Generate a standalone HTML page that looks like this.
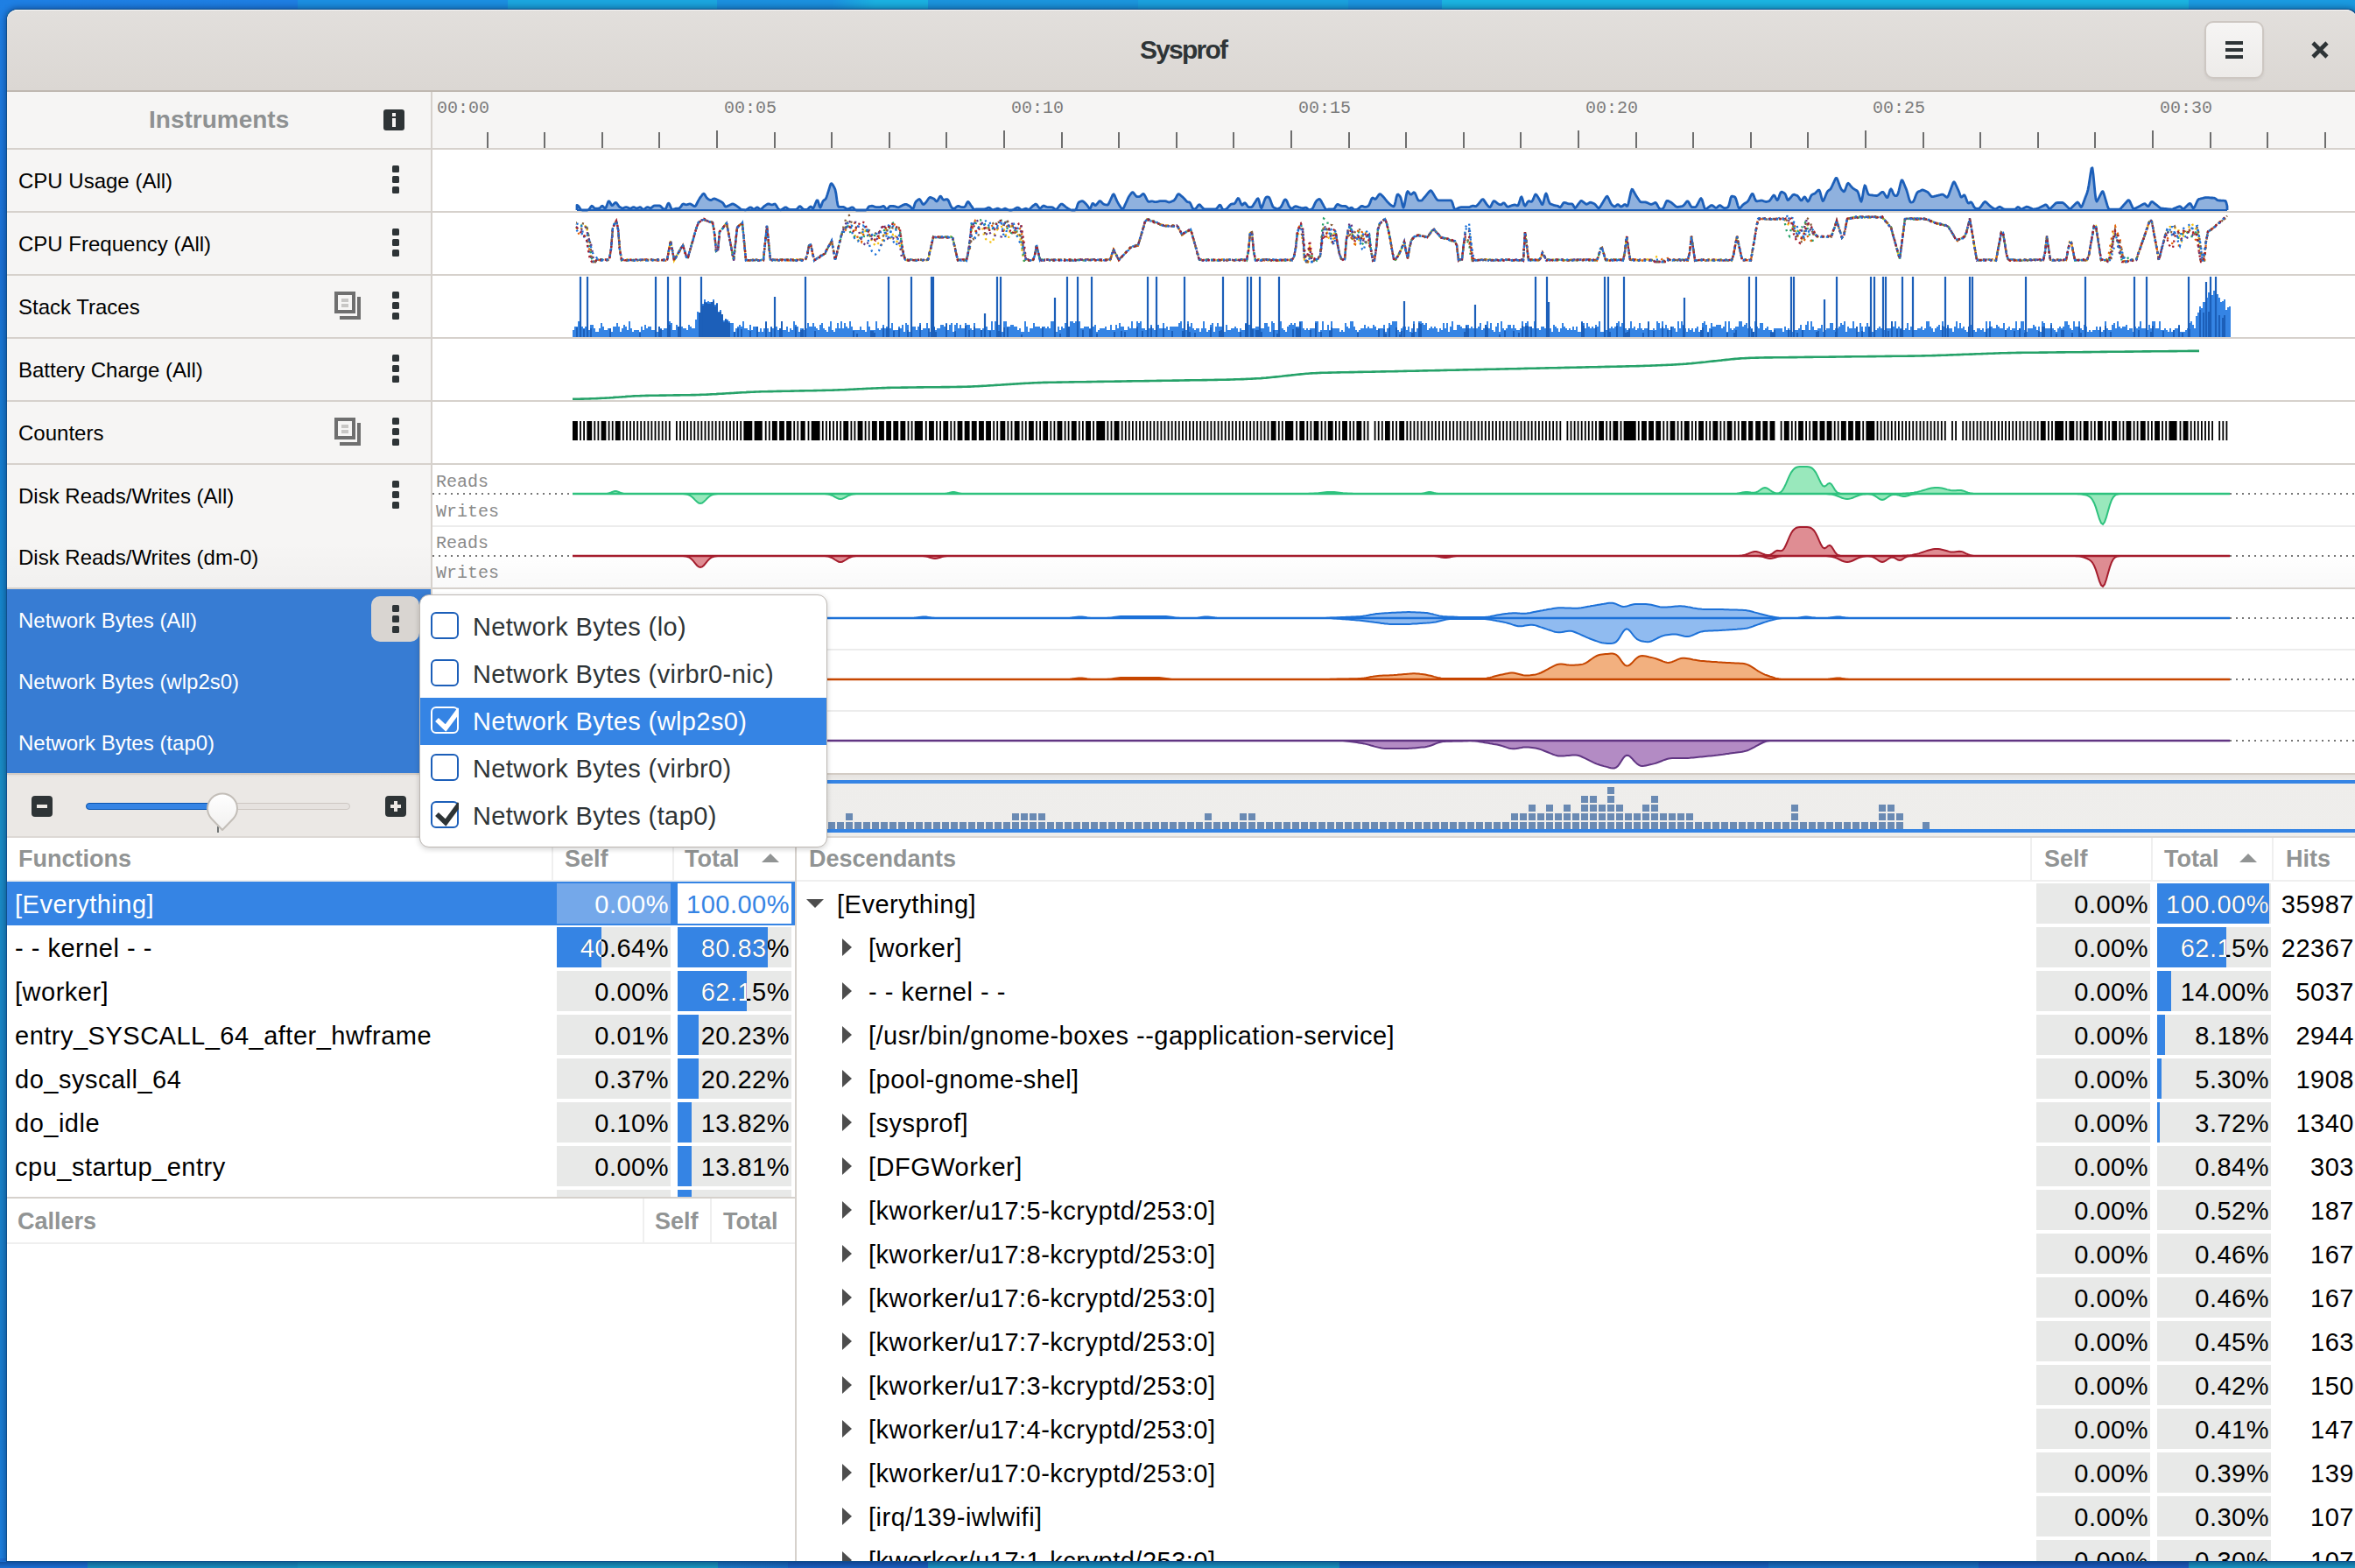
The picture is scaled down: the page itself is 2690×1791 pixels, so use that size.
<!DOCTYPE html><html><head><meta charset="utf-8"><title>Sysprof</title><style>
*{margin:0;padding:0;box-sizing:border-box}
html,body{width:2690px;height:1791px;overflow:hidden}
body{position:relative;font-family:'Liberation Sans', sans-serif;background:#1b8fd8}
.a{position:absolute}
.t{position:absolute;white-space:nowrap;line-height:1}
.k{position:absolute;width:8px;height:8px;border-radius:1.5px;background:#2e3436}
</style></head><body><div class="a" style="left:0px;top:0px;width:2690px;height:14px;background:linear-gradient(90deg,#1e7fe3 0px,#1e7ee2 340px,#1b8ee0 340px,#1b8ee0 580px,#1ba5de 580px,#1ba5de 819px,#1b8fde 819px,#1b90de 950px,#1ab0e0 1000px,#1ab0e0 1060px,#1b93dc 1060px,#1b95dc 1300px,#1aa0dd 1300px,#1aa0dd 1540px,#1b94de 1540px,#1b94de 1647px,#1bb3e0 1647px,#1bb3e0 2500px,#1a9ae0 2500px,#1a9ae0 2690px)"></div><div class="a" style="left:0px;top:0px;width:8px;height:1791px;background:linear-gradient(180deg,#1e7fe3 0px,#1b72d6 300px,#1583cf 600px,#1a8ec6 900px,#1a84c8 1300px,#1a7dd0 1600px,#1d80e0 1791px)"></div><div class="a" style="left:0px;top:1780px;width:2690px;height:11px;background:linear-gradient(90deg,#1c6fd3 0px,#1c6fd3 100px,#1a8bbd 100px,#1a8bbd 340px,#1a95c0 340px,#1a95c0 820px,#1b78c5 820px,#1a6cc2 900px,#1a5fbf 900px,#1a5fbf 1060px,#1a90c0 1060px,#1a90c0 1530px,#1a62c0 1530px,#1a62c0 2020px,#1a70c2 2020px,#1a70c2 2260px,#1b5bbd 2260px,#1b5bbd 2500px,#1a92c2 2500px,#1a92c2 2690px)"></div><div class="a" style="left:7px;top:10px;width:2687px;height:1774px;background:#0f4f8c;border-radius:13px 13px 0 0;box-shadow:0 0 7px 1px rgba(0,20,60,0.45)"></div><div class="a" style="left:8px;top:11px;width:2684px;height:1772px;background:#ffffff;border-radius:12px 12px 0 0"></div><div class="a" style="left:8px;top:11px;width:2684px;height:92px;background:linear-gradient(180deg,#e2dfdc,#dbd7d3);border-radius:12px 12px 0 0;border-top:1px solid #f7f6f5"></div><div class="a" style="left:8px;top:103px;width:2682px;height:2px;background:#bfb8b1"></div><div class="t" style="left:1302px;top:41.61px;font-size:30px;color:#2e3436;font-weight:bold;font-family:'Liberation Sans', sans-serif;letter-spacing:-1.8px">Sysprof</div><div class="a" style="left:2518px;top:24px;width:68px;height:66px;border-radius:10px;border:2px solid #cdc7c2;background:linear-gradient(180deg,#f6f5f4,#edebe9);box-shadow:0 2px 3px rgba(0,0,0,0.06)"></div><div class="a" style="left:2542px;top:47px;width:20px;height:4px;background:#2e3436"></div><div class="a" style="left:2542px;top:55px;width:20px;height:4px;background:#2e3436"></div><div class="a" style="left:2542px;top:63px;width:20px;height:4px;background:#2e3436"></div><svg class="a" style="left:2638px;top:45px" width="24" height="24" viewBox="0 0 24 24"><path d="M4 4 L20 20 M20 4 L4 20" stroke="#2e3436" stroke-width="4.6"/></svg><div class="a" style="left:8px;top:105px;width:484px;height:778px;background:#f6f5f4"></div><div class="a" style="left:492px;top:105px;width:2px;height:778px;background:#d6d1cc"></div><div class="t" style="left:170px;top:123.30px;font-size:28px;color:#8e9192;font-weight:bold;font-family:'Liberation Sans', sans-serif;">Instruments</div><div class="a" style="left:438px;top:125px;width:24px;height:24px;background:#2e3436;border-radius:3px"></div><div class="a" style="left:448px;top:129px;width:4px;height:4px;background:#f6f5f4"></div><div class="a" style="left:448px;top:135px;width:4px;height:10px;background:#f6f5f4"></div><div class="a" style="left:494px;top:105px;width:2196px;height:64px;background:#f6f5f4"></div><div class="a" style="left:8px;top:169px;width:2682px;height:2px;background:#d6d1cc"></div><div class="t" style="left:499px;top:113.67px;font-size:20px;color:#7c7c7c;font-weight:normal;font-family:'Liberation Mono', monospace;">00:00</div><div class="a" style="left:556px;top:151px;width:2px;height:18px;background:#6e6e6e"></div><div class="a" style="left:621px;top:151px;width:2px;height:18px;background:#6e6e6e"></div><div class="a" style="left:687px;top:151px;width:2px;height:18px;background:#6e6e6e"></div><div class="a" style="left:752px;top:151px;width:2px;height:18px;background:#6e6e6e"></div><div class="a" style="left:818px;top:149px;width:2px;height:20px;background:#6e6e6e"></div><div class="t" style="left:827px;top:113.67px;font-size:20px;color:#7c7c7c;font-weight:normal;font-family:'Liberation Mono', monospace;">00:05</div><div class="a" style="left:884px;top:151px;width:2px;height:18px;background:#6e6e6e"></div><div class="a" style="left:949px;top:151px;width:2px;height:18px;background:#6e6e6e"></div><div class="a" style="left:1015px;top:151px;width:2px;height:18px;background:#6e6e6e"></div><div class="a" style="left:1080px;top:151px;width:2px;height:18px;background:#6e6e6e"></div><div class="a" style="left:1146px;top:149px;width:2px;height:20px;background:#6e6e6e"></div><div class="t" style="left:1155px;top:113.67px;font-size:20px;color:#7c7c7c;font-weight:normal;font-family:'Liberation Mono', monospace;">00:10</div><div class="a" style="left:1212px;top:151px;width:2px;height:18px;background:#6e6e6e"></div><div class="a" style="left:1277px;top:151px;width:2px;height:18px;background:#6e6e6e"></div><div class="a" style="left:1343px;top:151px;width:2px;height:18px;background:#6e6e6e"></div><div class="a" style="left:1408px;top:151px;width:2px;height:18px;background:#6e6e6e"></div><div class="a" style="left:1474px;top:149px;width:2px;height:20px;background:#6e6e6e"></div><div class="t" style="left:1483px;top:113.67px;font-size:20px;color:#7c7c7c;font-weight:normal;font-family:'Liberation Mono', monospace;">00:15</div><div class="a" style="left:1540px;top:151px;width:2px;height:18px;background:#6e6e6e"></div><div class="a" style="left:1605px;top:151px;width:2px;height:18px;background:#6e6e6e"></div><div class="a" style="left:1671px;top:151px;width:2px;height:18px;background:#6e6e6e"></div><div class="a" style="left:1736px;top:151px;width:2px;height:18px;background:#6e6e6e"></div><div class="a" style="left:1802px;top:149px;width:2px;height:20px;background:#6e6e6e"></div><div class="t" style="left:1811px;top:113.67px;font-size:20px;color:#7c7c7c;font-weight:normal;font-family:'Liberation Mono', monospace;">00:20</div><div class="a" style="left:1868px;top:151px;width:2px;height:18px;background:#6e6e6e"></div><div class="a" style="left:1933px;top:151px;width:2px;height:18px;background:#6e6e6e"></div><div class="a" style="left:1999px;top:151px;width:2px;height:18px;background:#6e6e6e"></div><div class="a" style="left:2064px;top:151px;width:2px;height:18px;background:#6e6e6e"></div><div class="a" style="left:2130px;top:149px;width:2px;height:20px;background:#6e6e6e"></div><div class="t" style="left:2139px;top:113.67px;font-size:20px;color:#7c7c7c;font-weight:normal;font-family:'Liberation Mono', monospace;">00:25</div><div class="a" style="left:2196px;top:151px;width:2px;height:18px;background:#6e6e6e"></div><div class="a" style="left:2261px;top:151px;width:2px;height:18px;background:#6e6e6e"></div><div class="a" style="left:2327px;top:151px;width:2px;height:18px;background:#6e6e6e"></div><div class="a" style="left:2392px;top:151px;width:2px;height:18px;background:#6e6e6e"></div><div class="a" style="left:2458px;top:149px;width:2px;height:20px;background:#6e6e6e"></div><div class="t" style="left:2467px;top:113.67px;font-size:20px;color:#7c7c7c;font-weight:normal;font-family:'Liberation Mono', monospace;">00:30</div><div class="a" style="left:2524px;top:151px;width:2px;height:18px;background:#6e6e6e"></div><div class="a" style="left:2589px;top:151px;width:2px;height:18px;background:#6e6e6e"></div><div class="a" style="left:2655px;top:151px;width:2px;height:18px;background:#6e6e6e"></div><div class="a" style="left:494px;top:171px;width:2196px;height:712px;background:#ffffff"></div><div class="t" style="left:21px;top:194.68px;font-size:24px;color:#000;font-weight:normal;font-family:'Liberation Sans', sans-serif;">CPU Usage (All)</div><div class="k" style="left:448px;top:189px"></div><div class="k" style="left:448px;top:201px"></div><div class="k" style="left:448px;top:213px"></div><div class="t" style="left:21px;top:266.68px;font-size:24px;color:#000;font-weight:normal;font-family:'Liberation Sans', sans-serif;">CPU Frequency (All)</div><div class="k" style="left:448px;top:261px"></div><div class="k" style="left:448px;top:273px"></div><div class="k" style="left:448px;top:285px"></div><div class="t" style="left:21px;top:338.68px;font-size:24px;color:#000;font-weight:normal;font-family:'Liberation Sans', sans-serif;">Stack Traces</div><div class="k" style="left:448px;top:333px"></div><div class="k" style="left:448px;top:345px"></div><div class="k" style="left:448px;top:357px"></div><div class="a" style="left:382px;top:333px;width:24px;height:25px;border:4px solid #6f6f6f"></div><div class="a" style="left:390px;top:341px;width:8px;height:4px;background:#c8c7c5"></div><div class="a" style="left:390px;top:347px;width:8px;height:4px;background:#c8c7c5"></div><div class="a" style="left:408px;top:339px;width:4px;height:26px;background:#6f6f6f"></div><div class="a" style="left:388px;top:361px;width:24px;height:4px;background:#6f6f6f"></div><div class="t" style="left:21px;top:410.68px;font-size:24px;color:#000;font-weight:normal;font-family:'Liberation Sans', sans-serif;">Battery Charge (All)</div><div class="k" style="left:448px;top:405px"></div><div class="k" style="left:448px;top:417px"></div><div class="k" style="left:448px;top:429px"></div><div class="t" style="left:21px;top:482.68px;font-size:24px;color:#000;font-weight:normal;font-family:'Liberation Sans', sans-serif;">Counters</div><div class="k" style="left:448px;top:477px"></div><div class="k" style="left:448px;top:489px"></div><div class="k" style="left:448px;top:501px"></div><div class="a" style="left:382px;top:477px;width:24px;height:25px;border:4px solid #6f6f6f"></div><div class="a" style="left:390px;top:485px;width:8px;height:4px;background:#c8c7c5"></div><div class="a" style="left:390px;top:491px;width:8px;height:4px;background:#c8c7c5"></div><div class="a" style="left:408px;top:483px;width:4px;height:26px;background:#6f6f6f"></div><div class="a" style="left:388px;top:505px;width:24px;height:4px;background:#6f6f6f"></div><div class="t" style="left:21px;top:554.68px;font-size:24px;color:#000;font-weight:normal;font-family:'Liberation Sans', sans-serif;">Disk Reads/Writes (All)</div><div class="k" style="left:448px;top:549px"></div><div class="k" style="left:448px;top:561px"></div><div class="k" style="left:448px;top:573px"></div><div class="t" style="left:21px;top:624.68px;font-size:24px;color:#000;font-weight:normal;font-family:'Liberation Sans', sans-serif;">Disk Reads/Writes (dm-0)</div><div class="a" style="left:8px;top:241px;width:2682px;height:2px;background:#d6d1cc"></div><div class="a" style="left:8px;top:313px;width:2682px;height:2px;background:#d6d1cc"></div><div class="a" style="left:8px;top:385px;width:2682px;height:2px;background:#d6d1cc"></div><div class="a" style="left:8px;top:457px;width:2682px;height:2px;background:#d6d1cc"></div><div class="a" style="left:8px;top:529px;width:2682px;height:2px;background:#d6d1cc"></div><div class="a" style="left:494px;top:600px;width:2196px;height:2px;background:#ececec"></div><div class="a" style="left:8px;top:671px;width:2682px;height:2px;background:#d6d1cc"></div><div class="a" style="left:8px;top:620px;width:484px;height:51px;background:linear-gradient(180deg,rgba(0,0,0,0),rgba(0,0,0,0.018))"></div><div class="a" style="left:494px;top:630px;width:2196px;height:41px;background:linear-gradient(180deg,rgba(0,0,0,0),rgba(0,0,0,0.025))"></div><div class="a" style="left:8px;top:673px;width:484px;height:210px;background:#377cd3"></div><div class="t" style="left:21px;top:696.68px;font-size:24px;color:#ffffff;font-weight:normal;font-family:'Liberation Sans', sans-serif;">Network Bytes (All)</div><div class="t" style="left:21px;top:766.68px;font-size:24px;color:#ffffff;font-weight:normal;font-family:'Liberation Sans', sans-serif;">Network Bytes (wlp2s0)</div><div class="t" style="left:21px;top:836.68px;font-size:24px;color:#ffffff;font-weight:normal;font-family:'Liberation Sans', sans-serif;">Network Bytes (tap0)</div><div class="a" style="left:424px;top:681px;width:55px;height:52px;background:#d9d5d1;border-radius:10px"></div><div class="k" style="left:448px;top:691px"></div><div class="k" style="left:448px;top:703px"></div><div class="k" style="left:448px;top:715px"></div><div class="a" style="left:494px;top:741px;width:2196px;height:2px;background:#ececec"></div><div class="a" style="left:494px;top:811px;width:2196px;height:2px;background:#ececec"></div><div class="a" style="left:8px;top:883px;width:2682px;height:2px;background:#d3ccc5"></div><div class="a" style="left:8px;top:885px;width:486px;height:70px;background:linear-gradient(180deg,#e3e0dd 0px,#ebe8e5 3px,#ebe8e5 100%)"></div><div class="a" style="left:8px;top:955px;width:2682px;height:2px;background:#dcd8d4"></div><div class="a" style="left:36px;top:909px;width:24px;height:24px;background:#2e3436;border-radius:4px"></div><div class="a" style="left:42px;top:919px;width:12px;height:4px;background:#ece8e4"></div><div class="a" style="left:440px;top:909px;width:24px;height:24px;background:#2e3436;border-radius:4px"></div><div class="a" style="left:446px;top:919px;width:12px;height:4px;background:#ece8e4"></div><div class="a" style="left:450px;top:915px;width:4px;height:12px;background:#ece8e4"></div><div class="a" style="left:98px;top:917px;width:302px;height:8px;background:#e6e2df;border:1px solid #cdc7c2;border-radius:4px"></div><div class="a" style="left:98px;top:917px;width:147px;height:8px;background:#3584e4;border:1px solid #0b55b0;border-radius:4px 0 0 4px"></div><div class="a" style="left:248px;top:944px;width:2px;height:7px;background:#6f7373"></div><svg class="a" style="left:232px;top:902px" width="46" height="52" viewBox="0 0 46 52"><defs><linearGradient id="kg" x1="0" y1="0" x2="0" y2="1"><stop offset="0" stop-color="#ffffff"/><stop offset="1" stop-color="#f1f0ef"/></linearGradient></defs><path d="M22 46 L9.5 33 A17 17 0 1 1 34.5 33 Z" fill="url(#kg)" stroke="#c3beb8" stroke-width="2" stroke-linejoin="round"/></svg><svg class="a" style="left:0;top:0" width="2690" height="1791" viewBox="0 0 2690 1791"><path d="M659 240 L659 234.3 L660 234.7 L661 235.7 L662 237.3 L663 238.9 L664 239.8 L665 240.0 L666 240.0 L667 240.0 L668 240.0 L669 240.0 L670 240.0 L671 240.0 L672 239.7 L673 238.8 L674 237.5 L675 236.0 L676 235.2 L677 235.7 L678 236.9 L679 237.8 L680 238.1 L681 238.1 L682 238.1 L683 238.1 L684 238.0 L685 237.7 L686 236.8 L687 235.6 L688 235.2 L689 235.9 L690 237.2 L691 238.1 L692 237.4 L693 235.1 L694 232.1 L695 229.9 L696 229.9 L697 231.5 L698 233.5 L699 234.7 L700 234.4 L701 233.2 L702 232.1 L703 231.3 L704 231.5 L705 232.8 L706 234.4 L707 235.7 L708 236.6 L709 237.1 L710 237.6 L711 237.8 L712 237.6 L713 237.2 L714 236.8 L715 236.6 L716 236.7 L717 237.1 L718 237.6 L719 238.1 L720 238.2 L721 237.8 L722 237.2 L723 236.7 L724 236.6 L725 237.0 L726 237.5 L727 237.8 L728 237.7 L729 237.4 L730 237.0 L731 236.7 L732 236.9 L733 237.9 L734 239.0 L735 239.4 L736 238.9 L737 238.1 L738 237.2 L739 236.7 L740 236.7 L741 237.0 L742 237.4 L743 237.7 L744 237.4 L745 236.5 L746 235.6 L747 235.0 L748 234.8 L749 234.8 L750 234.8 L751 234.8 L752 234.8 L753 234.8 L754 235.1 L755 235.9 L756 237.0 L757 238.0 L758 238.7 L759 239.3 L760 239.1 L761 237.3 L762 234.7 L763 232.5 L764 232.1 L765 233.8 L766 236.4 L767 238.5 L768 239.4 L769 239.3 L770 238.9 L771 238.5 L772 238.2 L773 238.1 L774 238.1 L775 238.1 L776 237.8 L777 236.9 L778 235.6 L779 234.1 L780 233.1 L781 233.0 L782 233.4 L783 233.7 L784 233.8 L785 233.6 L786 233.3 L787 233.0 L788 232.8 L789 233.1 L790 233.7 L791 234.3 L792 235.0 L793 235.6 L794 235.6 L795 234.5 L796 232.5 L797 230.5 L798 228.6 L799 226.9 L800 225.4 L801 224.1 L802 222.7 L803 221.5 L804 221.2 L805 222.3 L806 224.0 L807 225.6 L808 226.7 L809 227.4 L810 227.9 L811 228.4 L812 228.6 L813 228.2 L814 227.6 L815 227.1 L816 226.9 L817 227.2 L818 227.6 L819 228.1 L820 228.5 L821 229.0 L822 229.5 L823 230.1 L824 230.6 L825 231.2 L826 232.1 L827 233.8 L828 235.5 L829 236.1 L830 235.8 L831 235.4 L832 234.9 L833 234.5 L834 234.0 L835 233.6 L836 233.1 L837 232.9 L838 233.1 L839 233.7 L840 234.3 L841 234.9 L842 235.6 L843 236.3 L844 237.1 L845 238.1 L846 238.9 L847 239.3 L848 239.5 L849 239.6 L850 239.7 L851 239.9 L852 239.8 L853 239.3 L854 238.6 L855 237.9 L856 237.2 L857 236.8 L858 237.0 L859 237.7 L860 238.5 L861 238.9 L862 238.6 L863 237.9 L864 237.3 L865 236.8 L866 237.2 L867 238.2 L868 239.1 L869 239.2 L870 238.4 L871 237.4 L872 236.4 L873 235.5 L874 234.8 L875 234.1 L876 233.5 L877 233.0 L878 232.9 L879 233.1 L880 233.5 L881 233.8 L882 233.8 L883 233.6 L884 233.2 L885 233.0 L886 233.7 L887 235.2 L888 237.0 L889 238.5 L890 239.4 L891 239.7 L892 239.8 L893 239.4 L894 238.7 L895 238.0 L896 237.3 L897 236.8 L898 236.9 L899 237.6 L900 238.4 L901 239.0 L902 239.2 L903 239.3 L904 239.3 L905 239.3 L906 239.3 L907 239.3 L908 239.3 L909 239.3 L910 239.0 L911 238.1 L912 236.9 L913 235.8 L914 235.6 L915 236.3 L916 237.5 L917 238.5 L918 239.1 L919 239.3 L920 239.3 L921 239.3 L922 239.2 L923 238.6 L924 237.6 L925 236.4 L926 235.9 L927 236.7 L928 237.9 L929 237.7 L930 235.9 L931 233.4 L932 231.0 L933 228.9 L934 228.8 L935 231.7 L936 235.5 L937 237.1 L938 235.3 L939 232.2 L940 229.9 L941 228.8 L942 228.2 L943 227.3 L944 225.3 L945 222.4 L946 219.1 L947 215.9 L948 212.6 L949 210.1 L950 209.6 L951 210.8 L952 212.5 L953 214.2 L954 216.6 L955 221.4 L956 228.7 L957 234.5 L958 236.3 L959 236.3 L960 236.3 L961 236.3 L962 236.3 L963 236.4 L964 236.7 L965 237.3 L966 237.9 L967 238.6 L968 239.0 L969 238.7 L970 238.2 L971 237.7 L972 237.2 L973 236.8 L974 236.8 L975 237.6 L976 238.8 L977 239.7 L978 240.0 L979 240.0 L980 240.0 L981 240.0 L982 240.0 L983 240.0 L984 240.0 L985 240.0 L986 240.0 L987 240.0 L988 240.0 L989 240.0 L990 239.5 L991 238.0 L992 236.4 L993 235.7 L994 235.5 L995 235.3 L996 235.2 L997 235.3 L998 235.7 L999 236.1 L1000 236.4 L1001 236.6 L1002 236.7 L1003 236.7 L1004 236.7 L1005 236.6 L1006 236.5 L1007 236.1 L1008 235.7 L1009 235.4 L1010 235.8 L1011 237.0 L1012 238.5 L1013 239.2 L1014 238.4 L1015 236.9 L1016 235.8 L1017 235.4 L1018 235.4 L1019 235.4 L1020 235.4 L1021 235.5 L1022 235.7 L1023 236.0 L1024 236.3 L1025 236.6 L1026 236.8 L1027 236.6 L1028 236.1 L1029 235.5 L1030 235.0 L1031 234.4 L1032 234.0 L1033 233.6 L1034 233.3 L1035 233.3 L1036 233.6 L1037 234.2 L1038 234.8 L1039 235.3 L1040 236.1 L1041 237.3 L1042 238.6 L1043 238.6 L1044 236.0 L1045 232.6 L1046 230.6 L1047 229.6 L1048 228.7 L1049 227.9 L1050 227.4 L1051 228.1 L1052 229.8 L1053 231.6 L1054 233.1 L1055 233.5 L1056 232.9 L1057 231.8 L1058 230.6 L1059 229.2 L1060 227.7 L1061 226.3 L1062 225.5 L1063 225.5 L1064 225.9 L1065 226.3 L1066 226.7 L1067 227.3 L1068 228.3 L1069 229.5 L1070 230.0 L1071 229.1 L1072 227.3 L1073 225.4 L1074 224.1 L1075 224.6 L1076 226.2 L1077 227.7 L1078 228.4 L1079 228.2 L1080 227.9 L1081 227.6 L1082 227.6 L1083 228.5 L1084 230.5 L1085 232.9 L1086 235.2 L1087 236.9 L1088 237.8 L1089 238.2 L1090 238.3 L1091 237.7 L1092 236.8 L1093 235.9 L1094 235.4 L1095 235.4 L1096 235.8 L1097 236.2 L1098 236.5 L1099 236.7 L1100 236.7 L1101 236.7 L1102 236.3 L1103 234.9 L1104 232.7 L1105 230.8 L1106 230.4 L1107 231.5 L1108 233.0 L1109 234.5 L1110 235.9 L1111 237.4 L1112 238.8 L1113 239.5 L1114 239.3 L1115 238.9 L1116 238.8 L1117 238.8 L1118 238.8 L1119 238.8 L1120 238.8 L1121 238.8 L1122 238.8 L1123 238.8 L1124 238.8 L1125 238.7 L1126 238.4 L1127 238.0 L1128 237.5 L1129 237.1 L1130 237.1 L1131 237.7 L1132 238.6 L1133 239.4 L1134 239.7 L1135 239.5 L1136 239.2 L1137 238.9 L1138 238.5 L1139 238.2 L1140 238.2 L1141 238.5 L1142 239.0 L1143 239.5 L1144 239.7 L1145 239.5 L1146 239.0 L1147 238.5 L1148 238.2 L1149 238.4 L1150 238.9 L1151 239.4 L1152 239.8 L1153 240.0 L1154 240.0 L1155 240.0 L1156 239.9 L1157 239.7 L1158 239.2 L1159 238.6 L1160 238.1 L1161 237.6 L1162 237.1 L1163 237.1 L1164 237.7 L1165 238.5 L1166 239.3 L1167 239.7 L1168 239.5 L1169 239.1 L1170 238.7 L1171 238.3 L1172 238.2 L1173 238.6 L1174 239.2 L1175 239.5 L1176 239.0 L1177 238.0 L1178 236.9 L1179 235.9 L1180 235.0 L1181 234.3 L1182 233.6 L1183 233.1 L1184 233.5 L1185 234.7 L1186 236.2 L1187 237.5 L1188 238.0 L1189 237.4 L1190 236.4 L1191 235.5 L1192 235.0 L1193 235.2 L1194 235.7 L1195 236.2 L1196 236.5 L1197 236.7 L1198 236.7 L1199 236.7 L1200 236.7 L1201 236.7 L1202 236.8 L1203 237.3 L1204 238.1 L1205 238.9 L1206 239.4 L1207 239.0 L1208 237.8 L1209 236.5 L1210 235.2 L1211 234.0 L1212 233.2 L1213 233.1 L1214 233.6 L1215 234.4 L1216 235.2 L1217 236.0 L1218 236.8 L1219 237.5 L1220 238.2 L1221 238.8 L1222 239.4 L1223 239.8 L1224 240.0 L1225 240.0 L1226 240.0 L1227 240.0 L1228 240.0 L1229 239.2 L1230 236.7 L1231 233.4 L1232 231.4 L1233 230.6 L1234 230.2 L1235 229.8 L1236 229.6 L1237 229.8 L1238 230.6 L1239 231.6 L1240 232.6 L1241 233.6 L1242 234.7 L1243 236.1 L1244 237.9 L1245 238.6 L1246 236.9 L1247 234.1 L1248 232.3 L1249 232.6 L1250 233.9 L1251 234.7 L1252 234.2 L1253 233.0 L1254 231.8 L1255 230.5 L1256 229.6 L1257 229.7 L1258 230.6 L1259 231.7 L1260 232.7 L1261 233.3 L1262 233.6 L1263 233.8 L1264 234.0 L1265 234.1 L1266 233.3 L1267 231.5 L1268 229.2 L1269 227.0 L1270 224.8 L1271 222.6 L1272 221.7 L1273 222.9 L1274 225.3 L1275 227.6 L1276 229.8 L1277 231.7 L1278 233.4 L1279 235.0 L1280 236.6 L1281 238.0 L1282 238.9 L1283 238.2 L1284 236.4 L1285 234.2 L1286 232.0 L1287 229.8 L1288 227.6 L1289 225.4 L1290 223.7 L1291 222.3 L1292 221.0 L1293 219.9 L1294 219.6 L1295 220.5 L1296 221.9 L1297 223.3 L1298 224.3 L1299 224.6 L1300 224.6 L1301 224.6 L1302 224.4 L1303 223.7 L1304 222.7 L1305 221.7 L1306 221.3 L1307 222.1 L1308 223.9 L1309 225.9 L1310 227.9 L1311 229.6 L1312 230.4 L1313 230.4 L1314 230.1 L1315 229.8 L1316 229.8 L1317 230.0 L1318 230.3 L1319 230.6 L1320 230.7 L1321 230.6 L1322 230.3 L1323 230.1 L1324 229.8 L1325 229.7 L1326 229.6 L1327 229.6 L1328 229.6 L1329 229.6 L1330 229.6 L1331 229.7 L1332 229.9 L1333 230.3 L1334 230.7 L1335 231.0 L1336 230.9 L1337 230.6 L1338 230.2 L1339 229.8 L1340 229.4 L1341 228.9 L1342 227.8 L1343 226.2 L1344 224.3 L1345 222.5 L1346 221.6 L1347 221.9 L1348 222.7 L1349 223.5 L1350 224.4 L1351 225.2 L1352 226.1 L1353 227.2 L1354 228.3 L1355 229.5 L1356 230.4 L1357 230.8 L1358 230.8 L1359 231.3 L1360 232.8 L1361 235.1 L1362 237.3 L1363 238.5 L1364 238.8 L1365 238.6 L1366 238.0 L1367 236.8 L1368 235.4 L1369 234.1 L1370 233.7 L1371 234.3 L1372 235.5 L1373 236.6 L1374 237.7 L1375 238.5 L1376 238.8 L1377 238.8 L1378 238.8 L1379 238.8 L1380 238.8 L1381 238.8 L1382 238.8 L1383 238.8 L1384 238.8 L1385 238.8 L1386 238.8 L1387 238.8 L1388 238.8 L1389 238.6 L1390 237.9 L1391 236.7 L1392 235.3 L1393 234.2 L1394 234.3 L1395 236.0 L1396 238.1 L1397 239.4 L1398 239.6 L1399 239.3 L1400 239.0 L1401 238.5 L1402 237.6 L1403 236.4 L1404 235.3 L1405 234.2 L1406 233.3 L1407 233.0 L1408 232.9 L1409 232.9 L1410 232.6 L1411 231.5 L1412 229.7 L1413 227.8 L1414 226.5 L1415 226.9 L1416 228.8 L1417 231.3 L1418 233.5 L1419 234.3 L1420 233.4 L1421 232.1 L1422 231.7 L1423 232.6 L1424 234.0 L1425 235.4 L1426 236.4 L1427 236.7 L1428 236.7 L1429 236.7 L1430 236.3 L1431 235.2 L1432 233.6 L1433 232.0 L1434 230.4 L1435 228.8 L1436 227.2 L1437 226.6 L1438 228.7 L1439 232.9 L1440 236.7 L1441 237.6 L1442 235.6 L1443 232.7 L1444 229.9 L1445 227.2 L1446 225.5 L1447 225.0 L1448 225.0 L1449 225.1 L1450 226.1 L1451 228.3 L1452 231.1 L1453 233.9 L1454 236.1 L1455 237.1 L1456 237.5 L1457 237.9 L1458 238.3 L1459 238.5 L1460 238.3 L1461 237.9 L1462 237.4 L1463 236.6 L1464 235.0 L1465 232.9 L1466 230.6 L1467 228.7 L1468 227.9 L1469 228.3 L1470 229.7 L1471 232.2 L1472 234.7 L1473 236.4 L1474 237.5 L1475 238.2 L1476 238.0 L1477 237.3 L1478 236.5 L1479 235.9 L1480 235.7 L1481 235.9 L1482 236.2 L1483 236.5 L1484 236.8 L1485 237.0 L1486 237.3 L1487 237.5 L1488 237.7 L1489 237.7 L1490 237.4 L1491 237.1 L1492 237.1 L1493 237.9 L1494 239.0 L1495 239.7 L1496 239.7 L1497 239.4 L1498 239.1 L1499 238.4 L1500 236.8 L1501 234.6 L1502 232.4 L1503 230.5 L1504 229.2 L1505 228.4 L1506 227.7 L1507 227.3 L1508 228.0 L1509 229.5 L1510 231.4 L1511 233.2 L1512 235.1 L1513 236.9 L1514 238.5 L1515 239.5 L1516 239.5 L1517 239.1 L1518 238.8 L1519 238.8 L1520 238.8 L1521 238.8 L1522 238.8 L1523 238.8 L1524 238.3 L1525 237.0 L1526 235.2 L1527 233.8 L1528 233.4 L1529 233.8 L1530 234.3 L1531 234.7 L1532 235.2 L1533 235.4 L1534 235.4 L1535 235.4 L1536 235.4 L1537 235.5 L1538 236.0 L1539 236.9 L1540 237.8 L1541 238.3 L1542 237.9 L1543 237.3 L1544 237.2 L1545 237.9 L1546 238.9 L1547 239.7 L1548 239.7 L1549 239.4 L1550 239.1 L1551 238.7 L1552 238.0 L1553 237.1 L1554 236.2 L1555 235.5 L1556 235.4 L1557 235.7 L1558 236.1 L1559 236.4 L1560 236.4 L1561 236.1 L1562 235.7 L1563 235.1 L1564 233.7 L1565 231.4 L1566 228.7 L1567 226.6 L1568 225.9 L1569 226.4 L1570 227.3 L1571 227.5 L1572 226.6 L1573 225.2 L1574 223.8 L1575 222.4 L1576 221.6 L1577 221.8 L1578 222.7 L1579 223.7 L1580 224.8 L1581 225.9 L1582 227.2 L1583 228.4 L1584 229.6 L1585 230.8 L1586 231.8 L1587 232.8 L1588 233.7 L1589 234.5 L1590 235.1 L1591 235.6 L1592 235.8 L1593 234.2 L1594 230.3 L1595 225.5 L1596 222.3 L1597 222.0 L1598 223.0 L1599 224.0 L1600 225.9 L1601 229.6 L1602 234.4 L1603 237.1 L1604 235.0 L1605 229.9 L1606 224.4 L1607 220.1 L1608 218.6 L1609 219.5 L1610 220.9 L1611 221.9 L1612 222.1 L1613 221.4 L1614 220.4 L1615 219.7 L1616 220.2 L1617 222.1 L1618 224.6 L1619 227.0 L1620 228.7 L1621 229.2 L1622 229.2 L1623 229.2 L1624 228.9 L1625 227.9 L1626 226.7 L1627 225.5 L1628 224.3 L1629 223.1 L1630 221.9 L1631 220.7 L1632 219.5 L1633 218.3 L1634 217.6 L1635 218.0 L1636 219.4 L1637 221.0 L1638 222.7 L1639 224.4 L1640 226.0 L1641 227.5 L1642 228.5 L1643 228.8 L1644 228.8 L1645 228.8 L1646 228.8 L1647 228.8 L1648 228.8 L1649 228.8 L1650 228.8 L1651 228.8 L1652 228.8 L1653 228.8 L1654 228.8 L1655 228.8 L1656 228.8 L1657 228.8 L1658 229.4 L1659 231.5 L1660 234.9 L1661 237.9 L1662 239.3 L1663 239.2 L1664 238.6 L1665 238.1 L1666 237.6 L1667 237.1 L1668 236.8 L1669 236.7 L1670 236.7 L1671 236.7 L1672 236.7 L1673 236.7 L1674 236.7 L1675 236.7 L1676 236.7 L1677 236.7 L1678 236.6 L1679 236.3 L1680 235.9 L1681 235.5 L1682 235.2 L1683 235.2 L1684 235.4 L1685 235.6 L1686 235.5 L1687 234.9 L1688 233.8 L1689 232.6 L1690 231.3 L1691 230.1 L1692 228.8 L1693 227.8 L1694 227.6 L1695 228.6 L1696 230.1 L1697 231.6 L1698 233.1 L1699 234.4 L1700 235.5 L1701 236.5 L1702 236.7 L1703 235.4 L1704 233.3 L1705 231.2 L1706 229.7 L1707 229.6 L1708 230.2 L1709 231.0 L1710 231.8 L1711 232.6 L1712 233.2 L1713 233.7 L1714 233.9 L1715 233.6 L1716 232.7 L1717 231.8 L1718 231.8 L1719 232.8 L1720 234.2 L1721 235.5 L1722 236.2 L1723 236.2 L1724 235.8 L1725 235.4 L1726 235.0 L1727 234.7 L1728 234.4 L1729 234.1 L1730 233.9 L1731 234.1 L1732 234.5 L1733 234.9 L1734 234.6 L1735 232.4 L1736 229.1 L1737 225.8 L1738 224.8 L1739 227.1 L1740 230.9 L1741 234.0 L1742 235.1 L1743 234.0 L1744 232.2 L1745 230.6 L1746 229.7 L1747 229.7 L1748 230.1 L1749 230.4 L1750 229.9 L1751 228.1 L1752 225.7 L1753 223.3 L1754 221.9 L1755 222.4 L1756 224.0 L1757 225.6 L1758 227.2 L1759 229.0 L1760 231.0 L1761 233.2 L1762 233.6 L1763 230.9 L1764 226.7 L1765 222.7 L1766 220.9 L1767 222.8 L1768 226.4 L1769 229.7 L1770 231.9 L1771 232.9 L1772 233.3 L1773 233.7 L1774 234.0 L1775 234.4 L1776 234.6 L1777 234.8 L1778 235.0 L1779 235.2 L1780 235.6 L1781 236.4 L1782 236.8 L1783 236.0 L1784 234.5 L1785 232.9 L1786 231.6 L1787 231.3 L1788 231.5 L1789 231.9 L1790 232.3 L1791 232.7 L1792 232.9 L1793 232.9 L1794 232.9 L1795 232.9 L1796 233.2 L1797 234.3 L1798 236.4 L1799 237.6 L1800 237.0 L1801 235.7 L1802 234.3 L1803 232.9 L1804 231.6 L1805 230.2 L1806 229.3 L1807 229.6 L1808 230.3 L1809 231.1 L1810 231.9 L1811 232.7 L1812 233.3 L1813 233.1 L1814 232.6 L1815 231.9 L1816 231.3 L1817 231.2 L1818 231.5 L1819 231.9 L1820 232.3 L1821 232.7 L1822 233.5 L1823 234.7 L1824 235.9 L1825 237.2 L1826 237.9 L1827 237.3 L1828 235.8 L1829 234.2 L1830 232.5 L1831 230.9 L1832 229.2 L1833 227.6 L1834 225.9 L1835 224.5 L1836 224.2 L1837 225.7 L1838 228.0 L1839 230.2 L1840 232.3 L1841 233.7 L1842 234.6 L1843 235.4 L1844 236.0 L1845 235.8 L1846 234.9 L1847 233.9 L1848 233.6 L1849 234.1 L1850 235.0 L1851 235.9 L1852 236.1 L1853 235.6 L1854 234.7 L1855 233.8 L1856 233.5 L1857 234.2 L1858 235.4 L1859 235.2 L1860 232.4 L1861 227.9 L1862 223.3 L1863 218.9 L1864 216.2 L1865 216.6 L1866 218.5 L1867 220.3 L1868 222.1 L1869 223.7 L1870 225.3 L1871 226.8 L1872 228.3 L1873 229.7 L1874 230.6 L1875 230.8 L1876 230.8 L1877 230.8 L1878 230.8 L1879 230.9 L1880 231.0 L1881 231.4 L1882 231.8 L1883 232.3 L1884 232.8 L1885 233.2 L1886 233.5 L1887 233.2 L1888 232.7 L1889 232.2 L1890 231.6 L1891 231.4 L1892 232.3 L1893 234.0 L1894 235.9 L1895 237.6 L1896 238.5 L1897 238.8 L1898 238.8 L1899 238.6 L1900 237.6 L1901 235.6 L1902 233.2 L1903 230.9 L1904 229.4 L1905 229.3 L1906 229.8 L1907 230.3 L1908 230.8 L1909 231.3 L1910 232.1 L1911 233.0 L1912 233.8 L1913 234.7 L1914 235.6 L1915 236.2 L1916 236.5 L1917 236.4 L1918 236.2 L1919 236.0 L1920 235.9 L1921 235.7 L1922 235.4 L1923 234.7 L1924 233.6 L1925 232.3 L1926 231.0 L1927 229.9 L1928 229.8 L1929 231.1 L1930 233.0 L1931 234.9 L1932 236.2 L1933 236.7 L1934 236.7 L1935 236.7 L1936 236.7 L1937 236.3 L1938 235.0 L1939 233.2 L1940 231.3 L1941 229.4 L1942 227.6 L1943 226.6 L1944 227.8 L1945 230.9 L1946 234.5 L1947 237.6 L1948 239.0 L1949 238.8 L1950 238.0 L1951 237.2 L1952 236.4 L1953 235.7 L1954 234.9 L1955 234.5 L1956 234.7 L1957 235.4 L1958 236.2 L1959 236.9 L1960 237.4 L1961 237.1 L1962 236.3 L1963 235.3 L1964 234.6 L1965 234.7 L1966 235.4 L1967 236.1 L1968 236.9 L1969 237.5 L1970 237.7 L1971 237.5 L1972 237.3 L1973 237.0 L1974 236.3 L1975 233.9 L1976 229.7 L1977 225.7 L1978 224.1 L1979 224.1 L1980 224.4 L1981 224.6 L1982 225.4 L1983 227.6 L1984 230.9 L1985 234.6 L1986 237.4 L1987 238.1 L1988 237.2 L1989 236.1 L1990 234.9 L1991 233.8 L1992 233.0 L1993 232.3 L1994 231.7 L1995 231.1 L1996 230.4 L1997 229.2 L1998 227.4 L1999 225.4 L2000 223.4 L2001 221.6 L2002 221.3 L2003 223.0 L2004 225.7 L2005 228.1 L2006 229.6 L2007 229.9 L2008 229.7 L2009 229.5 L2010 229.3 L2011 229.1 L2012 229.0 L2013 229.2 L2014 229.5 L2015 229.9 L2016 230.2 L2017 230.5 L2018 230.4 L2019 230.2 L2020 230.0 L2021 229.5 L2022 228.4 L2023 227.0 L2024 225.5 L2025 224.0 L2026 223.0 L2027 223.5 L2028 225.3 L2029 227.4 L2030 228.6 L2031 227.7 L2032 225.0 L2033 222.0 L2034 219.8 L2035 219.1 L2036 219.4 L2037 219.9 L2038 220.4 L2039 221.4 L2040 223.5 L2041 226.5 L2042 228.5 L2043 228.4 L2044 227.2 L2045 226.0 L2046 224.8 L2047 223.6 L2048 222.6 L2049 222.2 L2050 222.4 L2051 222.8 L2052 223.1 L2053 223.6 L2054 224.5 L2055 226.0 L2056 227.7 L2057 228.9 L2058 228.9 L2059 227.6 L2060 226.0 L2061 224.9 L2062 225.3 L2063 226.9 L2064 228.9 L2065 230.1 L2066 229.4 L2067 227.4 L2068 225.0 L2069 223.1 L2070 222.2 L2071 221.8 L2072 221.4 L2073 220.9 L2074 220.1 L2075 219.1 L2076 218.1 L2077 217.1 L2078 217.1 L2079 219.3 L2080 223.1 L2081 227.1 L2082 229.6 L2083 229.0 L2084 226.7 L2085 224.2 L2086 221.7 L2087 219.5 L2088 218.1 L2089 217.3 L2090 216.7 L2091 215.7 L2092 214.0 L2093 211.9 L2094 209.7 L2095 207.5 L2096 205.3 L2097 203.5 L2098 203.5 L2099 205.4 L2100 208.2 L2101 210.9 L2102 213.6 L2103 215.7 L2104 217.1 L2105 218.1 L2106 218.8 L2107 218.2 L2108 215.9 L2109 212.9 L2110 210.3 L2111 209.3 L2112 209.9 L2113 211.2 L2114 212.4 L2115 213.6 L2116 214.6 L2117 215.4 L2118 216.0 L2119 216.6 L2120 217.2 L2121 217.8 L2122 218.9 L2123 221.5 L2124 225.0 L2125 228.6 L2126 230.2 L2127 227.2 L2128 221.5 L2129 215.5 L2130 211.8 L2131 212.8 L2132 216.1 L2133 219.3 L2134 221.7 L2135 222.5 L2136 222.7 L2137 222.8 L2138 222.9 L2139 223.0 L2140 223.2 L2141 223.3 L2142 223.4 L2143 223.5 L2144 223.5 L2145 223.0 L2146 222.3 L2147 221.5 L2148 220.7 L2149 219.9 L2150 219.3 L2151 219.4 L2152 220.6 L2153 222.3 L2154 223.9 L2155 225.4 L2156 225.6 L2157 223.4 L2158 220.1 L2159 217.0 L2160 215.8 L2161 217.1 L2162 219.6 L2163 221.8 L2164 223.3 L2165 223.7 L2166 223.7 L2167 223.2 L2168 221.2 L2169 217.5 L2170 213.2 L2171 209.0 L2172 206.0 L2173 205.9 L2174 207.9 L2175 210.3 L2176 212.7 L2177 215.1 L2178 217.8 L2179 221.2 L2180 224.8 L2181 228.3 L2182 230.6 L2183 231.2 L2184 231.0 L2185 230.6 L2186 229.4 L2187 227.0 L2188 224.2 L2189 221.7 L2190 219.9 L2191 219.1 L2192 218.6 L2193 218.2 L2194 217.7 L2195 217.2 L2196 216.9 L2197 217.2 L2198 217.6 L2199 218.1 L2200 218.6 L2201 219.1 L2202 219.6 L2203 220.5 L2204 221.8 L2205 223.1 L2206 224.2 L2207 224.7 L2208 224.6 L2209 224.4 L2210 224.1 L2211 223.9 L2212 223.6 L2213 223.4 L2214 223.2 L2215 222.9 L2216 222.7 L2217 222.4 L2218 222.2 L2219 222.1 L2220 222.5 L2221 223.3 L2222 224.1 L2223 225.0 L2224 225.4 L2225 224.5 L2226 222.3 L2227 219.5 L2228 216.8 L2229 214.0 L2230 211.3 L2231 208.8 L2232 207.7 L2233 208.9 L2234 211.0 L2235 213.2 L2236 215.3 L2237 217.6 L2238 220.1 L2239 223.0 L2240 225.1 L2241 225.1 L2242 224.1 L2243 223.0 L2244 222.9 L2245 224.8 L2246 227.6 L2247 230.2 L2248 231.9 L2249 232.0 L2250 231.3 L2251 230.8 L2252 231.2 L2253 232.7 L2254 234.7 L2255 236.5 L2256 237.7 L2257 238.1 L2258 238.2 L2259 238.3 L2260 238.3 L2261 237.9 L2262 236.8 L2263 235.5 L2264 234.1 L2265 232.7 L2266 231.4 L2267 230.4 L2268 230.5 L2269 231.3 L2270 232.3 L2271 233.2 L2272 234.2 L2273 235.1 L2274 236.0 L2275 236.7 L2276 237.3 L2277 238.0 L2278 238.6 L2279 238.9 L2280 238.5 L2281 237.9 L2282 237.2 L2283 236.6 L2284 236.2 L2285 236.5 L2286 237.1 L2287 237.7 L2288 238.4 L2289 238.9 L2290 239.2 L2291 239.2 L2292 239.2 L2293 239.2 L2294 239.2 L2295 239.2 L2296 239.2 L2297 239.2 L2298 239.2 L2299 239.2 L2300 239.2 L2301 239.2 L2302 239.0 L2303 238.2 L2304 237.0 L2305 236.5 L2306 236.9 L2307 237.7 L2308 238.5 L2309 238.8 L2310 238.6 L2311 238.0 L2312 237.5 L2313 237.0 L2314 236.5 L2315 236.1 L2316 236.3 L2317 236.6 L2318 237.1 L2319 237.5 L2320 237.9 L2321 238.4 L2322 238.8 L2323 239.0 L2324 239.0 L2325 238.7 L2326 238.5 L2327 238.2 L2328 237.9 L2329 237.5 L2330 237.0 L2331 236.5 L2332 235.9 L2333 235.4 L2334 234.9 L2335 234.4 L2336 233.9 L2337 233.8 L2338 234.6 L2339 236.0 L2340 237.6 L2341 238.5 L2342 238.3 L2343 237.3 L2344 236.3 L2345 235.3 L2346 234.3 L2347 233.3 L2348 232.3 L2349 231.7 L2350 231.5 L2351 231.5 L2352 231.5 L2353 231.5 L2354 231.5 L2355 231.5 L2356 231.5 L2357 232.0 L2358 232.8 L2359 233.8 L2360 234.8 L2361 235.8 L2362 236.8 L2363 237.8 L2364 238.5 L2365 238.4 L2366 237.6 L2367 236.6 L2368 235.6 L2369 234.6 L2370 233.6 L2371 232.6 L2372 231.6 L2373 231.0 L2374 231.6 L2375 233.2 L2376 235.2 L2377 236.5 L2378 235.8 L2379 233.5 L2380 230.9 L2381 228.2 L2382 225.5 L2383 222.9 L2384 220.2 L2385 216.6 L2386 211.2 L2387 204.7 L2388 198.0 L2389 192.3 L2390 191.8 L2391 198.9 L2392 209.3 L2393 219.8 L2394 227.8 L2395 230.1 L2396 228.7 L2397 226.8 L2398 224.9 L2399 222.9 L2400 221.0 L2401 219.1 L2402 218.6 L2403 220.8 L2404 224.2 L2405 227.6 L2406 231.0 L2407 234.4 L2408 237.3 L2409 238.9 L2410 239.2 L2411 239.2 L2412 239.2 L2413 239.2 L2414 239.2 L2415 239.2 L2416 239.2 L2417 239.2 L2418 239.2 L2419 239.2 L2420 239.2 L2421 239.0 L2422 238.4 L2423 237.4 L2424 236.3 L2425 235.2 L2426 234.0 L2427 232.9 L2428 231.8 L2429 230.7 L2430 229.5 L2431 228.6 L2432 228.8 L2433 230.4 L2434 232.7 L2435 234.9 L2436 237.1 L2437 238.5 L2438 238.6 L2439 238.1 L2440 237.6 L2441 237.0 L2442 236.5 L2443 235.9 L2444 235.4 L2445 234.9 L2446 234.3 L2447 233.8 L2448 233.2 L2449 232.8 L2450 232.7 L2451 233.5 L2452 234.6 L2453 235.6 L2454 235.6 L2455 234.4 L2456 232.6 L2457 231.0 L2458 230.3 L2459 230.7 L2460 231.5 L2461 232.3 L2462 233.1 L2463 233.9 L2464 234.7 L2465 235.5 L2466 236.3 L2467 237.1 L2468 237.8 L2469 238.0 L2470 238.1 L2471 238.2 L2472 238.3 L2473 238.4 L2474 238.5 L2475 238.6 L2476 238.7 L2477 238.8 L2478 238.9 L2479 239.0 L2480 239.1 L2481 239.1 L2482 238.8 L2483 238.3 L2484 237.9 L2485 237.5 L2486 237.1 L2487 236.6 L2488 236.2 L2489 235.8 L2490 235.7 L2491 236.3 L2492 237.3 L2493 238.3 L2494 238.7 L2495 238.1 L2496 237.1 L2497 236.1 L2498 235.1 L2499 234.1 L2500 233.1 L2501 232.4 L2502 232.6 L2503 234.1 L2504 236.1 L2505 237.6 L2506 237.6 L2507 236.0 L2508 233.7 L2509 231.5 L2510 229.4 L2511 227.9 L2512 227.3 L2513 227.1 L2514 226.8 L2515 226.6 L2516 226.4 L2517 226.1 L2518 225.9 L2519 225.7 L2520 225.6 L2521 225.6 L2522 225.7 L2523 225.7 L2524 225.8 L2525 225.9 L2526 226.0 L2527 226.0 L2528 226.1 L2529 226.2 L2530 226.5 L2531 227.1 L2532 228.1 L2533 228.7 L2534 228.9 L2535 229.0 L2536 229.0 L2537 229.1 L2538 229.1 L2539 229.2 L2540 229.2 L2541 229.3 L2542 229.3 L2543 231.6 L2544 235.5 L2544 240 Z" fill="#8fb1de" stroke="none"/><path d="M659 240 L659 234.3 L660 234.7 L661 235.7 L662 237.3 L663 238.9 L664 239.8 L665 240.0 L666 240.0 L667 240.0 L668 240.0 L669 240.0 L670 240.0 L671 240.0 L672 239.7 L673 238.8 L674 237.5 L675 236.0 L676 235.2 L677 235.7 L678 236.9 L679 237.8 L680 238.1 L681 238.1 L682 238.1 L683 238.1 L684 238.0 L685 237.7 L686 236.8 L687 235.6 L688 235.2 L689 235.9 L690 237.2 L691 238.1 L692 237.4 L693 235.1 L694 232.1 L695 229.9 L696 229.9 L697 231.5 L698 233.5 L699 234.7 L700 234.4 L701 233.2 L702 232.1 L703 231.3 L704 231.5 L705 232.8 L706 234.4 L707 235.7 L708 236.6 L709 237.1 L710 237.6 L711 237.8 L712 237.6 L713 237.2 L714 236.8 L715 236.6 L716 236.7 L717 237.1 L718 237.6 L719 238.1 L720 238.2 L721 237.8 L722 237.2 L723 236.7 L724 236.6 L725 237.0 L726 237.5 L727 237.8 L728 237.7 L729 237.4 L730 237.0 L731 236.7 L732 236.9 L733 237.9 L734 239.0 L735 239.4 L736 238.9 L737 238.1 L738 237.2 L739 236.7 L740 236.7 L741 237.0 L742 237.4 L743 237.7 L744 237.4 L745 236.5 L746 235.6 L747 235.0 L748 234.8 L749 234.8 L750 234.8 L751 234.8 L752 234.8 L753 234.8 L754 235.1 L755 235.9 L756 237.0 L757 238.0 L758 238.7 L759 239.3 L760 239.1 L761 237.3 L762 234.7 L763 232.5 L764 232.1 L765 233.8 L766 236.4 L767 238.5 L768 239.4 L769 239.3 L770 238.9 L771 238.5 L772 238.2 L773 238.1 L774 238.1 L775 238.1 L776 237.8 L777 236.9 L778 235.6 L779 234.1 L780 233.1 L781 233.0 L782 233.4 L783 233.7 L784 233.8 L785 233.6 L786 233.3 L787 233.0 L788 232.8 L789 233.1 L790 233.7 L791 234.3 L792 235.0 L793 235.6 L794 235.6 L795 234.5 L796 232.5 L797 230.5 L798 228.6 L799 226.9 L800 225.4 L801 224.1 L802 222.7 L803 221.5 L804 221.2 L805 222.3 L806 224.0 L807 225.6 L808 226.7 L809 227.4 L810 227.9 L811 228.4 L812 228.6 L813 228.2 L814 227.6 L815 227.1 L816 226.9 L817 227.2 L818 227.6 L819 228.1 L820 228.5 L821 229.0 L822 229.5 L823 230.1 L824 230.6 L825 231.2 L826 232.1 L827 233.8 L828 235.5 L829 236.1 L830 235.8 L831 235.4 L832 234.9 L833 234.5 L834 234.0 L835 233.6 L836 233.1 L837 232.9 L838 233.1 L839 233.7 L840 234.3 L841 234.9 L842 235.6 L843 236.3 L844 237.1 L845 238.1 L846 238.9 L847 239.3 L848 239.5 L849 239.6 L850 239.7 L851 239.9 L852 239.8 L853 239.3 L854 238.6 L855 237.9 L856 237.2 L857 236.8 L858 237.0 L859 237.7 L860 238.5 L861 238.9 L862 238.6 L863 237.9 L864 237.3 L865 236.8 L866 237.2 L867 238.2 L868 239.1 L869 239.2 L870 238.4 L871 237.4 L872 236.4 L873 235.5 L874 234.8 L875 234.1 L876 233.5 L877 233.0 L878 232.9 L879 233.1 L880 233.5 L881 233.8 L882 233.8 L883 233.6 L884 233.2 L885 233.0 L886 233.7 L887 235.2 L888 237.0 L889 238.5 L890 239.4 L891 239.7 L892 239.8 L893 239.4 L894 238.7 L895 238.0 L896 237.3 L897 236.8 L898 236.9 L899 237.6 L900 238.4 L901 239.0 L902 239.2 L903 239.3 L904 239.3 L905 239.3 L906 239.3 L907 239.3 L908 239.3 L909 239.3 L910 239.0 L911 238.1 L912 236.9 L913 235.8 L914 235.6 L915 236.3 L916 237.5 L917 238.5 L918 239.1 L919 239.3 L920 239.3 L921 239.3 L922 239.2 L923 238.6 L924 237.6 L925 236.4 L926 235.9 L927 236.7 L928 237.9 L929 237.7 L930 235.9 L931 233.4 L932 231.0 L933 228.9 L934 228.8 L935 231.7 L936 235.5 L937 237.1 L938 235.3 L939 232.2 L940 229.9 L941 228.8 L942 228.2 L943 227.3 L944 225.3 L945 222.4 L946 219.1 L947 215.9 L948 212.6 L949 210.1 L950 209.6 L951 210.8 L952 212.5 L953 214.2 L954 216.6 L955 221.4 L956 228.7 L957 234.5 L958 236.3 L959 236.3 L960 236.3 L961 236.3 L962 236.3 L963 236.4 L964 236.7 L965 237.3 L966 237.9 L967 238.6 L968 239.0 L969 238.7 L970 238.2 L971 237.7 L972 237.2 L973 236.8 L974 236.8 L975 237.6 L976 238.8 L977 239.7 L978 240.0 L979 240.0 L980 240.0 L981 240.0 L982 240.0 L983 240.0 L984 240.0 L985 240.0 L986 240.0 L987 240.0 L988 240.0 L989 240.0 L990 239.5 L991 238.0 L992 236.4 L993 235.7 L994 235.5 L995 235.3 L996 235.2 L997 235.3 L998 235.7 L999 236.1 L1000 236.4 L1001 236.6 L1002 236.7 L1003 236.7 L1004 236.7 L1005 236.6 L1006 236.5 L1007 236.1 L1008 235.7 L1009 235.4 L1010 235.8 L1011 237.0 L1012 238.5 L1013 239.2 L1014 238.4 L1015 236.9 L1016 235.8 L1017 235.4 L1018 235.4 L1019 235.4 L1020 235.4 L1021 235.5 L1022 235.7 L1023 236.0 L1024 236.3 L1025 236.6 L1026 236.8 L1027 236.6 L1028 236.1 L1029 235.5 L1030 235.0 L1031 234.4 L1032 234.0 L1033 233.6 L1034 233.3 L1035 233.3 L1036 233.6 L1037 234.2 L1038 234.8 L1039 235.3 L1040 236.1 L1041 237.3 L1042 238.6 L1043 238.6 L1044 236.0 L1045 232.6 L1046 230.6 L1047 229.6 L1048 228.7 L1049 227.9 L1050 227.4 L1051 228.1 L1052 229.8 L1053 231.6 L1054 233.1 L1055 233.5 L1056 232.9 L1057 231.8 L1058 230.6 L1059 229.2 L1060 227.7 L1061 226.3 L1062 225.5 L1063 225.5 L1064 225.9 L1065 226.3 L1066 226.7 L1067 227.3 L1068 228.3 L1069 229.5 L1070 230.0 L1071 229.1 L1072 227.3 L1073 225.4 L1074 224.1 L1075 224.6 L1076 226.2 L1077 227.7 L1078 228.4 L1079 228.2 L1080 227.9 L1081 227.6 L1082 227.6 L1083 228.5 L1084 230.5 L1085 232.9 L1086 235.2 L1087 236.9 L1088 237.8 L1089 238.2 L1090 238.3 L1091 237.7 L1092 236.8 L1093 235.9 L1094 235.4 L1095 235.4 L1096 235.8 L1097 236.2 L1098 236.5 L1099 236.7 L1100 236.7 L1101 236.7 L1102 236.3 L1103 234.9 L1104 232.7 L1105 230.8 L1106 230.4 L1107 231.5 L1108 233.0 L1109 234.5 L1110 235.9 L1111 237.4 L1112 238.8 L1113 239.5 L1114 239.3 L1115 238.9 L1116 238.8 L1117 238.8 L1118 238.8 L1119 238.8 L1120 238.8 L1121 238.8 L1122 238.8 L1123 238.8 L1124 238.8 L1125 238.7 L1126 238.4 L1127 238.0 L1128 237.5 L1129 237.1 L1130 237.1 L1131 237.7 L1132 238.6 L1133 239.4 L1134 239.7 L1135 239.5 L1136 239.2 L1137 238.9 L1138 238.5 L1139 238.2 L1140 238.2 L1141 238.5 L1142 239.0 L1143 239.5 L1144 239.7 L1145 239.5 L1146 239.0 L1147 238.5 L1148 238.2 L1149 238.4 L1150 238.9 L1151 239.4 L1152 239.8 L1153 240.0 L1154 240.0 L1155 240.0 L1156 239.9 L1157 239.7 L1158 239.2 L1159 238.6 L1160 238.1 L1161 237.6 L1162 237.1 L1163 237.1 L1164 237.7 L1165 238.5 L1166 239.3 L1167 239.7 L1168 239.5 L1169 239.1 L1170 238.7 L1171 238.3 L1172 238.2 L1173 238.6 L1174 239.2 L1175 239.5 L1176 239.0 L1177 238.0 L1178 236.9 L1179 235.9 L1180 235.0 L1181 234.3 L1182 233.6 L1183 233.1 L1184 233.5 L1185 234.7 L1186 236.2 L1187 237.5 L1188 238.0 L1189 237.4 L1190 236.4 L1191 235.5 L1192 235.0 L1193 235.2 L1194 235.7 L1195 236.2 L1196 236.5 L1197 236.7 L1198 236.7 L1199 236.7 L1200 236.7 L1201 236.7 L1202 236.8 L1203 237.3 L1204 238.1 L1205 238.9 L1206 239.4 L1207 239.0 L1208 237.8 L1209 236.5 L1210 235.2 L1211 234.0 L1212 233.2 L1213 233.1 L1214 233.6 L1215 234.4 L1216 235.2 L1217 236.0 L1218 236.8 L1219 237.5 L1220 238.2 L1221 238.8 L1222 239.4 L1223 239.8 L1224 240.0 L1225 240.0 L1226 240.0 L1227 240.0 L1228 240.0 L1229 239.2 L1230 236.7 L1231 233.4 L1232 231.4 L1233 230.6 L1234 230.2 L1235 229.8 L1236 229.6 L1237 229.8 L1238 230.6 L1239 231.6 L1240 232.6 L1241 233.6 L1242 234.7 L1243 236.1 L1244 237.9 L1245 238.6 L1246 236.9 L1247 234.1 L1248 232.3 L1249 232.6 L1250 233.9 L1251 234.7 L1252 234.2 L1253 233.0 L1254 231.8 L1255 230.5 L1256 229.6 L1257 229.7 L1258 230.6 L1259 231.7 L1260 232.7 L1261 233.3 L1262 233.6 L1263 233.8 L1264 234.0 L1265 234.1 L1266 233.3 L1267 231.5 L1268 229.2 L1269 227.0 L1270 224.8 L1271 222.6 L1272 221.7 L1273 222.9 L1274 225.3 L1275 227.6 L1276 229.8 L1277 231.7 L1278 233.4 L1279 235.0 L1280 236.6 L1281 238.0 L1282 238.9 L1283 238.2 L1284 236.4 L1285 234.2 L1286 232.0 L1287 229.8 L1288 227.6 L1289 225.4 L1290 223.7 L1291 222.3 L1292 221.0 L1293 219.9 L1294 219.6 L1295 220.5 L1296 221.9 L1297 223.3 L1298 224.3 L1299 224.6 L1300 224.6 L1301 224.6 L1302 224.4 L1303 223.7 L1304 222.7 L1305 221.7 L1306 221.3 L1307 222.1 L1308 223.9 L1309 225.9 L1310 227.9 L1311 229.6 L1312 230.4 L1313 230.4 L1314 230.1 L1315 229.8 L1316 229.8 L1317 230.0 L1318 230.3 L1319 230.6 L1320 230.7 L1321 230.6 L1322 230.3 L1323 230.1 L1324 229.8 L1325 229.7 L1326 229.6 L1327 229.6 L1328 229.6 L1329 229.6 L1330 229.6 L1331 229.7 L1332 229.9 L1333 230.3 L1334 230.7 L1335 231.0 L1336 230.9 L1337 230.6 L1338 230.2 L1339 229.8 L1340 229.4 L1341 228.9 L1342 227.8 L1343 226.2 L1344 224.3 L1345 222.5 L1346 221.6 L1347 221.9 L1348 222.7 L1349 223.5 L1350 224.4 L1351 225.2 L1352 226.1 L1353 227.2 L1354 228.3 L1355 229.5 L1356 230.4 L1357 230.8 L1358 230.8 L1359 231.3 L1360 232.8 L1361 235.1 L1362 237.3 L1363 238.5 L1364 238.8 L1365 238.6 L1366 238.0 L1367 236.8 L1368 235.4 L1369 234.1 L1370 233.7 L1371 234.3 L1372 235.5 L1373 236.6 L1374 237.7 L1375 238.5 L1376 238.8 L1377 238.8 L1378 238.8 L1379 238.8 L1380 238.8 L1381 238.8 L1382 238.8 L1383 238.8 L1384 238.8 L1385 238.8 L1386 238.8 L1387 238.8 L1388 238.8 L1389 238.6 L1390 237.9 L1391 236.7 L1392 235.3 L1393 234.2 L1394 234.3 L1395 236.0 L1396 238.1 L1397 239.4 L1398 239.6 L1399 239.3 L1400 239.0 L1401 238.5 L1402 237.6 L1403 236.4 L1404 235.3 L1405 234.2 L1406 233.3 L1407 233.0 L1408 232.9 L1409 232.9 L1410 232.6 L1411 231.5 L1412 229.7 L1413 227.8 L1414 226.5 L1415 226.9 L1416 228.8 L1417 231.3 L1418 233.5 L1419 234.3 L1420 233.4 L1421 232.1 L1422 231.7 L1423 232.6 L1424 234.0 L1425 235.4 L1426 236.4 L1427 236.7 L1428 236.7 L1429 236.7 L1430 236.3 L1431 235.2 L1432 233.6 L1433 232.0 L1434 230.4 L1435 228.8 L1436 227.2 L1437 226.6 L1438 228.7 L1439 232.9 L1440 236.7 L1441 237.6 L1442 235.6 L1443 232.7 L1444 229.9 L1445 227.2 L1446 225.5 L1447 225.0 L1448 225.0 L1449 225.1 L1450 226.1 L1451 228.3 L1452 231.1 L1453 233.9 L1454 236.1 L1455 237.1 L1456 237.5 L1457 237.9 L1458 238.3 L1459 238.5 L1460 238.3 L1461 237.9 L1462 237.4 L1463 236.6 L1464 235.0 L1465 232.9 L1466 230.6 L1467 228.7 L1468 227.9 L1469 228.3 L1470 229.7 L1471 232.2 L1472 234.7 L1473 236.4 L1474 237.5 L1475 238.2 L1476 238.0 L1477 237.3 L1478 236.5 L1479 235.9 L1480 235.7 L1481 235.9 L1482 236.2 L1483 236.5 L1484 236.8 L1485 237.0 L1486 237.3 L1487 237.5 L1488 237.7 L1489 237.7 L1490 237.4 L1491 237.1 L1492 237.1 L1493 237.9 L1494 239.0 L1495 239.7 L1496 239.7 L1497 239.4 L1498 239.1 L1499 238.4 L1500 236.8 L1501 234.6 L1502 232.4 L1503 230.5 L1504 229.2 L1505 228.4 L1506 227.7 L1507 227.3 L1508 228.0 L1509 229.5 L1510 231.4 L1511 233.2 L1512 235.1 L1513 236.9 L1514 238.5 L1515 239.5 L1516 239.5 L1517 239.1 L1518 238.8 L1519 238.8 L1520 238.8 L1521 238.8 L1522 238.8 L1523 238.8 L1524 238.3 L1525 237.0 L1526 235.2 L1527 233.8 L1528 233.4 L1529 233.8 L1530 234.3 L1531 234.7 L1532 235.2 L1533 235.4 L1534 235.4 L1535 235.4 L1536 235.4 L1537 235.5 L1538 236.0 L1539 236.9 L1540 237.8 L1541 238.3 L1542 237.9 L1543 237.3 L1544 237.2 L1545 237.9 L1546 238.9 L1547 239.7 L1548 239.7 L1549 239.4 L1550 239.1 L1551 238.7 L1552 238.0 L1553 237.1 L1554 236.2 L1555 235.5 L1556 235.4 L1557 235.7 L1558 236.1 L1559 236.4 L1560 236.4 L1561 236.1 L1562 235.7 L1563 235.1 L1564 233.7 L1565 231.4 L1566 228.7 L1567 226.6 L1568 225.9 L1569 226.4 L1570 227.3 L1571 227.5 L1572 226.6 L1573 225.2 L1574 223.8 L1575 222.4 L1576 221.6 L1577 221.8 L1578 222.7 L1579 223.7 L1580 224.8 L1581 225.9 L1582 227.2 L1583 228.4 L1584 229.6 L1585 230.8 L1586 231.8 L1587 232.8 L1588 233.7 L1589 234.5 L1590 235.1 L1591 235.6 L1592 235.8 L1593 234.2 L1594 230.3 L1595 225.5 L1596 222.3 L1597 222.0 L1598 223.0 L1599 224.0 L1600 225.9 L1601 229.6 L1602 234.4 L1603 237.1 L1604 235.0 L1605 229.9 L1606 224.4 L1607 220.1 L1608 218.6 L1609 219.5 L1610 220.9 L1611 221.9 L1612 222.1 L1613 221.4 L1614 220.4 L1615 219.7 L1616 220.2 L1617 222.1 L1618 224.6 L1619 227.0 L1620 228.7 L1621 229.2 L1622 229.2 L1623 229.2 L1624 228.9 L1625 227.9 L1626 226.7 L1627 225.5 L1628 224.3 L1629 223.1 L1630 221.9 L1631 220.7 L1632 219.5 L1633 218.3 L1634 217.6 L1635 218.0 L1636 219.4 L1637 221.0 L1638 222.7 L1639 224.4 L1640 226.0 L1641 227.5 L1642 228.5 L1643 228.8 L1644 228.8 L1645 228.8 L1646 228.8 L1647 228.8 L1648 228.8 L1649 228.8 L1650 228.8 L1651 228.8 L1652 228.8 L1653 228.8 L1654 228.8 L1655 228.8 L1656 228.8 L1657 228.8 L1658 229.4 L1659 231.5 L1660 234.9 L1661 237.9 L1662 239.3 L1663 239.2 L1664 238.6 L1665 238.1 L1666 237.6 L1667 237.1 L1668 236.8 L1669 236.7 L1670 236.7 L1671 236.7 L1672 236.7 L1673 236.7 L1674 236.7 L1675 236.7 L1676 236.7 L1677 236.7 L1678 236.6 L1679 236.3 L1680 235.9 L1681 235.5 L1682 235.2 L1683 235.2 L1684 235.4 L1685 235.6 L1686 235.5 L1687 234.9 L1688 233.8 L1689 232.6 L1690 231.3 L1691 230.1 L1692 228.8 L1693 227.8 L1694 227.6 L1695 228.6 L1696 230.1 L1697 231.6 L1698 233.1 L1699 234.4 L1700 235.5 L1701 236.5 L1702 236.7 L1703 235.4 L1704 233.3 L1705 231.2 L1706 229.7 L1707 229.6 L1708 230.2 L1709 231.0 L1710 231.8 L1711 232.6 L1712 233.2 L1713 233.7 L1714 233.9 L1715 233.6 L1716 232.7 L1717 231.8 L1718 231.8 L1719 232.8 L1720 234.2 L1721 235.5 L1722 236.2 L1723 236.2 L1724 235.8 L1725 235.4 L1726 235.0 L1727 234.7 L1728 234.4 L1729 234.1 L1730 233.9 L1731 234.1 L1732 234.5 L1733 234.9 L1734 234.6 L1735 232.4 L1736 229.1 L1737 225.8 L1738 224.8 L1739 227.1 L1740 230.9 L1741 234.0 L1742 235.1 L1743 234.0 L1744 232.2 L1745 230.6 L1746 229.7 L1747 229.7 L1748 230.1 L1749 230.4 L1750 229.9 L1751 228.1 L1752 225.7 L1753 223.3 L1754 221.9 L1755 222.4 L1756 224.0 L1757 225.6 L1758 227.2 L1759 229.0 L1760 231.0 L1761 233.2 L1762 233.6 L1763 230.9 L1764 226.7 L1765 222.7 L1766 220.9 L1767 222.8 L1768 226.4 L1769 229.7 L1770 231.9 L1771 232.9 L1772 233.3 L1773 233.7 L1774 234.0 L1775 234.4 L1776 234.6 L1777 234.8 L1778 235.0 L1779 235.2 L1780 235.6 L1781 236.4 L1782 236.8 L1783 236.0 L1784 234.5 L1785 232.9 L1786 231.6 L1787 231.3 L1788 231.5 L1789 231.9 L1790 232.3 L1791 232.7 L1792 232.9 L1793 232.9 L1794 232.9 L1795 232.9 L1796 233.2 L1797 234.3 L1798 236.4 L1799 237.6 L1800 237.0 L1801 235.7 L1802 234.3 L1803 232.9 L1804 231.6 L1805 230.2 L1806 229.3 L1807 229.6 L1808 230.3 L1809 231.1 L1810 231.9 L1811 232.7 L1812 233.3 L1813 233.1 L1814 232.6 L1815 231.9 L1816 231.3 L1817 231.2 L1818 231.5 L1819 231.9 L1820 232.3 L1821 232.7 L1822 233.5 L1823 234.7 L1824 235.9 L1825 237.2 L1826 237.9 L1827 237.3 L1828 235.8 L1829 234.2 L1830 232.5 L1831 230.9 L1832 229.2 L1833 227.6 L1834 225.9 L1835 224.5 L1836 224.2 L1837 225.7 L1838 228.0 L1839 230.2 L1840 232.3 L1841 233.7 L1842 234.6 L1843 235.4 L1844 236.0 L1845 235.8 L1846 234.9 L1847 233.9 L1848 233.6 L1849 234.1 L1850 235.0 L1851 235.9 L1852 236.1 L1853 235.6 L1854 234.7 L1855 233.8 L1856 233.5 L1857 234.2 L1858 235.4 L1859 235.2 L1860 232.4 L1861 227.9 L1862 223.3 L1863 218.9 L1864 216.2 L1865 216.6 L1866 218.5 L1867 220.3 L1868 222.1 L1869 223.7 L1870 225.3 L1871 226.8 L1872 228.3 L1873 229.7 L1874 230.6 L1875 230.8 L1876 230.8 L1877 230.8 L1878 230.8 L1879 230.9 L1880 231.0 L1881 231.4 L1882 231.8 L1883 232.3 L1884 232.8 L1885 233.2 L1886 233.5 L1887 233.2 L1888 232.7 L1889 232.2 L1890 231.6 L1891 231.4 L1892 232.3 L1893 234.0 L1894 235.9 L1895 237.6 L1896 238.5 L1897 238.8 L1898 238.8 L1899 238.6 L1900 237.6 L1901 235.6 L1902 233.2 L1903 230.9 L1904 229.4 L1905 229.3 L1906 229.8 L1907 230.3 L1908 230.8 L1909 231.3 L1910 232.1 L1911 233.0 L1912 233.8 L1913 234.7 L1914 235.6 L1915 236.2 L1916 236.5 L1917 236.4 L1918 236.2 L1919 236.0 L1920 235.9 L1921 235.7 L1922 235.4 L1923 234.7 L1924 233.6 L1925 232.3 L1926 231.0 L1927 229.9 L1928 229.8 L1929 231.1 L1930 233.0 L1931 234.9 L1932 236.2 L1933 236.7 L1934 236.7 L1935 236.7 L1936 236.7 L1937 236.3 L1938 235.0 L1939 233.2 L1940 231.3 L1941 229.4 L1942 227.6 L1943 226.6 L1944 227.8 L1945 230.9 L1946 234.5 L1947 237.6 L1948 239.0 L1949 238.8 L1950 238.0 L1951 237.2 L1952 236.4 L1953 235.7 L1954 234.9 L1955 234.5 L1956 234.7 L1957 235.4 L1958 236.2 L1959 236.9 L1960 237.4 L1961 237.1 L1962 236.3 L1963 235.3 L1964 234.6 L1965 234.7 L1966 235.4 L1967 236.1 L1968 236.9 L1969 237.5 L1970 237.7 L1971 237.5 L1972 237.3 L1973 237.0 L1974 236.3 L1975 233.9 L1976 229.7 L1977 225.7 L1978 224.1 L1979 224.1 L1980 224.4 L1981 224.6 L1982 225.4 L1983 227.6 L1984 230.9 L1985 234.6 L1986 237.4 L1987 238.1 L1988 237.2 L1989 236.1 L1990 234.9 L1991 233.8 L1992 233.0 L1993 232.3 L1994 231.7 L1995 231.1 L1996 230.4 L1997 229.2 L1998 227.4 L1999 225.4 L2000 223.4 L2001 221.6 L2002 221.3 L2003 223.0 L2004 225.7 L2005 228.1 L2006 229.6 L2007 229.9 L2008 229.7 L2009 229.5 L2010 229.3 L2011 229.1 L2012 229.0 L2013 229.2 L2014 229.5 L2015 229.9 L2016 230.2 L2017 230.5 L2018 230.4 L2019 230.2 L2020 230.0 L2021 229.5 L2022 228.4 L2023 227.0 L2024 225.5 L2025 224.0 L2026 223.0 L2027 223.5 L2028 225.3 L2029 227.4 L2030 228.6 L2031 227.7 L2032 225.0 L2033 222.0 L2034 219.8 L2035 219.1 L2036 219.4 L2037 219.9 L2038 220.4 L2039 221.4 L2040 223.5 L2041 226.5 L2042 228.5 L2043 228.4 L2044 227.2 L2045 226.0 L2046 224.8 L2047 223.6 L2048 222.6 L2049 222.2 L2050 222.4 L2051 222.8 L2052 223.1 L2053 223.6 L2054 224.5 L2055 226.0 L2056 227.7 L2057 228.9 L2058 228.9 L2059 227.6 L2060 226.0 L2061 224.9 L2062 225.3 L2063 226.9 L2064 228.9 L2065 230.1 L2066 229.4 L2067 227.4 L2068 225.0 L2069 223.1 L2070 222.2 L2071 221.8 L2072 221.4 L2073 220.9 L2074 220.1 L2075 219.1 L2076 218.1 L2077 217.1 L2078 217.1 L2079 219.3 L2080 223.1 L2081 227.1 L2082 229.6 L2083 229.0 L2084 226.7 L2085 224.2 L2086 221.7 L2087 219.5 L2088 218.1 L2089 217.3 L2090 216.7 L2091 215.7 L2092 214.0 L2093 211.9 L2094 209.7 L2095 207.5 L2096 205.3 L2097 203.5 L2098 203.5 L2099 205.4 L2100 208.2 L2101 210.9 L2102 213.6 L2103 215.7 L2104 217.1 L2105 218.1 L2106 218.8 L2107 218.2 L2108 215.9 L2109 212.9 L2110 210.3 L2111 209.3 L2112 209.9 L2113 211.2 L2114 212.4 L2115 213.6 L2116 214.6 L2117 215.4 L2118 216.0 L2119 216.6 L2120 217.2 L2121 217.8 L2122 218.9 L2123 221.5 L2124 225.0 L2125 228.6 L2126 230.2 L2127 227.2 L2128 221.5 L2129 215.5 L2130 211.8 L2131 212.8 L2132 216.1 L2133 219.3 L2134 221.7 L2135 222.5 L2136 222.7 L2137 222.8 L2138 222.9 L2139 223.0 L2140 223.2 L2141 223.3 L2142 223.4 L2143 223.5 L2144 223.5 L2145 223.0 L2146 222.3 L2147 221.5 L2148 220.7 L2149 219.9 L2150 219.3 L2151 219.4 L2152 220.6 L2153 222.3 L2154 223.9 L2155 225.4 L2156 225.6 L2157 223.4 L2158 220.1 L2159 217.0 L2160 215.8 L2161 217.1 L2162 219.6 L2163 221.8 L2164 223.3 L2165 223.7 L2166 223.7 L2167 223.2 L2168 221.2 L2169 217.5 L2170 213.2 L2171 209.0 L2172 206.0 L2173 205.9 L2174 207.9 L2175 210.3 L2176 212.7 L2177 215.1 L2178 217.8 L2179 221.2 L2180 224.8 L2181 228.3 L2182 230.6 L2183 231.2 L2184 231.0 L2185 230.6 L2186 229.4 L2187 227.0 L2188 224.2 L2189 221.7 L2190 219.9 L2191 219.1 L2192 218.6 L2193 218.2 L2194 217.7 L2195 217.2 L2196 216.9 L2197 217.2 L2198 217.6 L2199 218.1 L2200 218.6 L2201 219.1 L2202 219.6 L2203 220.5 L2204 221.8 L2205 223.1 L2206 224.2 L2207 224.7 L2208 224.6 L2209 224.4 L2210 224.1 L2211 223.9 L2212 223.6 L2213 223.4 L2214 223.2 L2215 222.9 L2216 222.7 L2217 222.4 L2218 222.2 L2219 222.1 L2220 222.5 L2221 223.3 L2222 224.1 L2223 225.0 L2224 225.4 L2225 224.5 L2226 222.3 L2227 219.5 L2228 216.8 L2229 214.0 L2230 211.3 L2231 208.8 L2232 207.7 L2233 208.9 L2234 211.0 L2235 213.2 L2236 215.3 L2237 217.6 L2238 220.1 L2239 223.0 L2240 225.1 L2241 225.1 L2242 224.1 L2243 223.0 L2244 222.9 L2245 224.8 L2246 227.6 L2247 230.2 L2248 231.9 L2249 232.0 L2250 231.3 L2251 230.8 L2252 231.2 L2253 232.7 L2254 234.7 L2255 236.5 L2256 237.7 L2257 238.1 L2258 238.2 L2259 238.3 L2260 238.3 L2261 237.9 L2262 236.8 L2263 235.5 L2264 234.1 L2265 232.7 L2266 231.4 L2267 230.4 L2268 230.5 L2269 231.3 L2270 232.3 L2271 233.2 L2272 234.2 L2273 235.1 L2274 236.0 L2275 236.7 L2276 237.3 L2277 238.0 L2278 238.6 L2279 238.9 L2280 238.5 L2281 237.9 L2282 237.2 L2283 236.6 L2284 236.2 L2285 236.5 L2286 237.1 L2287 237.7 L2288 238.4 L2289 238.9 L2290 239.2 L2291 239.2 L2292 239.2 L2293 239.2 L2294 239.2 L2295 239.2 L2296 239.2 L2297 239.2 L2298 239.2 L2299 239.2 L2300 239.2 L2301 239.2 L2302 239.0 L2303 238.2 L2304 237.0 L2305 236.5 L2306 236.9 L2307 237.7 L2308 238.5 L2309 238.8 L2310 238.6 L2311 238.0 L2312 237.5 L2313 237.0 L2314 236.5 L2315 236.1 L2316 236.3 L2317 236.6 L2318 237.1 L2319 237.5 L2320 237.9 L2321 238.4 L2322 238.8 L2323 239.0 L2324 239.0 L2325 238.7 L2326 238.5 L2327 238.2 L2328 237.9 L2329 237.5 L2330 237.0 L2331 236.5 L2332 235.9 L2333 235.4 L2334 234.9 L2335 234.4 L2336 233.9 L2337 233.8 L2338 234.6 L2339 236.0 L2340 237.6 L2341 238.5 L2342 238.3 L2343 237.3 L2344 236.3 L2345 235.3 L2346 234.3 L2347 233.3 L2348 232.3 L2349 231.7 L2350 231.5 L2351 231.5 L2352 231.5 L2353 231.5 L2354 231.5 L2355 231.5 L2356 231.5 L2357 232.0 L2358 232.8 L2359 233.8 L2360 234.8 L2361 235.8 L2362 236.8 L2363 237.8 L2364 238.5 L2365 238.4 L2366 237.6 L2367 236.6 L2368 235.6 L2369 234.6 L2370 233.6 L2371 232.6 L2372 231.6 L2373 231.0 L2374 231.6 L2375 233.2 L2376 235.2 L2377 236.5 L2378 235.8 L2379 233.5 L2380 230.9 L2381 228.2 L2382 225.5 L2383 222.9 L2384 220.2 L2385 216.6 L2386 211.2 L2387 204.7 L2388 198.0 L2389 192.3 L2390 191.8 L2391 198.9 L2392 209.3 L2393 219.8 L2394 227.8 L2395 230.1 L2396 228.7 L2397 226.8 L2398 224.9 L2399 222.9 L2400 221.0 L2401 219.1 L2402 218.6 L2403 220.8 L2404 224.2 L2405 227.6 L2406 231.0 L2407 234.4 L2408 237.3 L2409 238.9 L2410 239.2 L2411 239.2 L2412 239.2 L2413 239.2 L2414 239.2 L2415 239.2 L2416 239.2 L2417 239.2 L2418 239.2 L2419 239.2 L2420 239.2 L2421 239.0 L2422 238.4 L2423 237.4 L2424 236.3 L2425 235.2 L2426 234.0 L2427 232.9 L2428 231.8 L2429 230.7 L2430 229.5 L2431 228.6 L2432 228.8 L2433 230.4 L2434 232.7 L2435 234.9 L2436 237.1 L2437 238.5 L2438 238.6 L2439 238.1 L2440 237.6 L2441 237.0 L2442 236.5 L2443 235.9 L2444 235.4 L2445 234.9 L2446 234.3 L2447 233.8 L2448 233.2 L2449 232.8 L2450 232.7 L2451 233.5 L2452 234.6 L2453 235.6 L2454 235.6 L2455 234.4 L2456 232.6 L2457 231.0 L2458 230.3 L2459 230.7 L2460 231.5 L2461 232.3 L2462 233.1 L2463 233.9 L2464 234.7 L2465 235.5 L2466 236.3 L2467 237.1 L2468 237.8 L2469 238.0 L2470 238.1 L2471 238.2 L2472 238.3 L2473 238.4 L2474 238.5 L2475 238.6 L2476 238.7 L2477 238.8 L2478 238.9 L2479 239.0 L2480 239.1 L2481 239.1 L2482 238.8 L2483 238.3 L2484 237.9 L2485 237.5 L2486 237.1 L2487 236.6 L2488 236.2 L2489 235.8 L2490 235.7 L2491 236.3 L2492 237.3 L2493 238.3 L2494 238.7 L2495 238.1 L2496 237.1 L2497 236.1 L2498 235.1 L2499 234.1 L2500 233.1 L2501 232.4 L2502 232.6 L2503 234.1 L2504 236.1 L2505 237.6 L2506 237.6 L2507 236.0 L2508 233.7 L2509 231.5 L2510 229.4 L2511 227.9 L2512 227.3 L2513 227.1 L2514 226.8 L2515 226.6 L2516 226.4 L2517 226.1 L2518 225.9 L2519 225.7 L2520 225.6 L2521 225.6 L2522 225.7 L2523 225.7 L2524 225.8 L2525 225.9 L2526 226.0 L2527 226.0 L2528 226.1 L2529 226.2 L2530 226.5 L2531 227.1 L2532 228.1 L2533 228.7 L2534 228.9 L2535 229.0 L2536 229.0 L2537 229.1 L2538 229.1 L2539 229.2 L2540 229.2 L2541 229.3 L2542 229.3 L2543 231.6 L2544 235.5 L2544 240" fill="none" stroke="#1c5fb9" stroke-width="2.8" stroke-linejoin="round"/><path d="M659 240 H2544" stroke="#1c5fb9" stroke-width="2"/><path d="M658 259.7 L660 262.1 L662 261.2 L664 261.1 L666 261.4 L668 258.6 L670 257.7 L672 271.8 L674 282.8 L676 295.8 L678 299.0 L680 299.0 L682 296.6 L684 296.4 L686 297.6 L688 296.8 L690 296.9 L692 297.5 L694 296.8 L696 296.9 L698 284.3 L700 260.5 L702 255.8 L704 252.6 L706 262.0 L708 284.7 L710 297.2 L712 296.4 L714 297.6 L716 296.5 L718 296.5 L720 296.2 L722 297.3 L724 297.8 L726 297.5 L728 297.7 L730 296.8 L732 297.2 L734 297.4 L736 296.3 L738 296.6 L740 297.2 L742 297.7 L744 297.3 L746 297.3 L748 296.7 L750 297.3 L752 297.1 L754 297.7 L756 297.8 L758 296.8 L760 296.3 L762 296.4 L764 285.7 L766 274.9 L768 285.6 L770 297.5 L772 293.9 L774 290.1 L776 287.4 L778 283.9 L780 280.6 L782 286.4 L784 292.9 L786 293.6 L788 286.2 L790 278.8 L792 272.1 L794 265.8 L796 258.8 L798 254.6 L800 253.1 L802 251.5 L804 250.5 L806 250.8 L808 252.6 L810 253.3 L812 253.5 L814 254.5 L816 265.8 L818 286.5 L820 286.8 L822 264.4 L824 262.7 L826 259.3 L828 257.9 L830 254.4 L832 265.8 L834 275.4 L836 287.3 L838 297.2 L840 279.2 L842 259.3 L844 258.2 L846 255.9 L848 255.0 L850 276.4 L852 297.8 L854 297.7 L856 296.5 L858 296.3 L860 296.5 L862 296.3 L864 296.6 L866 297.3 L868 297.4 L870 296.3 L872 296.9 L874 277.4 L876 258.3 L878 277.5 L880 297.2 L882 297.6 L884 296.9 L886 297.5 L888 297.5 L890 296.3 L892 297.8 L894 296.6 L896 297.8 L898 297.6 L900 297.5 L902 296.4 L904 296.6 L906 296.3 L908 297.7 L910 296.2 L912 297.5 L914 296.3 L916 296.2 L918 297.5 L920 296.7 L922 291.3 L924 280.7 L926 279.0 L928 288.4 L930 297.4 L932 295.1 L934 294.0 L936 293.6 L938 292.1 L940 291.8 L942 289.3 L944 286.7 L946 283.1 L948 278.1 L950 275.3 L952 286.6 L954 297.6 L956 289.1 L958 280.5 L960 273.3 L962 265.3 L964 262.6 L966 258.6 L968 254.0 L970 256.1 L972 257.5 L974 258.6 L976 267.9 L978 272.1 L980 274.4 L982 275.9 L984 266.3 L986 263.3 L988 263.2 L990 267.9 L992 270.7 L994 272.8 L996 274.6 L998 278.2 L1000 280.7 L1002 279.0 L1004 277.1 L1006 276.2 L1008 274.6 L1010 266.3 L1012 261.8 L1014 267.7 L1016 270.3 L1018 272.7 L1020 267.7 L1022 266.4 L1024 274.7 L1026 278.6 L1028 280.8 L1030 283.5 L1032 290.3 L1034 296.7 L1036 297.3 L1038 297.1 L1040 297.5 L1042 296.4 L1044 297.7 L1046 297.1 L1048 296.4 L1050 297.7 L1052 296.8 L1054 297.1 L1056 297.3 L1058 297.4 L1060 297.2 L1062 288.3 L1064 279.4 L1066 271.3 L1068 271.6 L1070 271.0 L1072 271.5 L1074 270.6 L1076 271.4 L1078 271.7 L1080 270.6 L1082 271.7 L1084 270.6 L1086 270.4 L1088 270.3 L1090 279.6 L1092 289.0 L1094 297.4 L1096 296.8 L1098 297.0 L1100 297.0 L1102 297.7 L1104 297.3 L1106 288.0 L1108 277.0 L1110 261.9 L1112 263.4 L1114 264.2 L1116 260.6 L1118 259.4 L1120 259.2 L1122 259.3 L1124 268.9 L1126 273.0 L1128 274.9 L1130 275.9 L1132 276.7 L1134 277.0 L1136 267.3 L1138 263.3 L1140 261.6 L1142 259.7 L1144 258.8 L1146 258.4 L1148 266.9 L1150 270.2 L1152 272.1 L1154 260.1 L1156 255.5 L1158 262.9 L1160 266.2 L1162 267.8 L1164 268.7 L1166 274.7 L1168 289.9 L1170 299.0 L1172 296.9 L1174 296.3 L1176 297.2 L1178 296.7 L1180 296.4 L1182 290.7 L1184 280.7 L1186 289.1 L1188 296.5 L1190 297.0 L1192 297.0 L1194 297.2 L1196 297.3 L1198 297.5 L1200 296.9 L1202 296.8 L1204 296.3 L1206 296.3 L1208 297.8 L1210 296.4 L1212 296.9 L1214 296.5 L1216 296.6 L1218 297.7 L1220 296.8 L1222 297.7 L1224 296.8 L1226 296.7 L1228 297.4 L1230 296.6 L1232 297.0 L1234 296.3 L1236 296.9 L1238 297.4 L1240 296.4 L1242 297.5 L1244 297.0 L1246 296.5 L1248 297.3 L1250 296.6 L1252 297.7 L1254 296.9 L1256 296.7 L1258 296.6 L1260 297.2 L1262 296.3 L1264 296.3 L1266 296.3 L1268 297.2 L1270 291.4 L1272 284.9 L1274 289.2 L1276 293.5 L1278 297.1 L1280 294.6 L1282 292.2 L1284 290.0 L1286 287.9 L1288 286.3 L1290 284.0 L1292 281.9 L1294 281.9 L1296 281.4 L1298 280.5 L1300 279.5 L1302 272.9 L1304 265.9 L1306 260.5 L1308 253.0 L1310 250.4 L1312 251.9 L1314 252.6 L1316 252.5 L1318 252.7 L1320 253.8 L1322 254.7 L1324 255.5 L1326 256.8 L1328 256.6 L1330 257.7 L1332 258.2 L1334 257.5 L1336 257.7 L1338 257.6 L1340 257.9 L1342 257.2 L1344 257.6 L1346 259.3 L1348 264.4 L1350 268.8 L1352 267.4 L1354 266.1 L1356 264.0 L1358 263.1 L1360 262.7 L1362 269.1 L1364 276.4 L1366 283.2 L1368 290.3 L1370 297.6 L1372 297.0 L1374 297.2 L1376 296.7 L1378 296.3 L1380 297.4 L1382 297.2 L1384 297.6 L1386 296.5 L1388 296.3 L1390 297.2 L1392 296.4 L1394 296.8 L1396 296.3 L1398 296.7 L1400 296.9 L1402 297.5 L1404 296.9 L1406 296.6 L1408 297.3 L1410 297.2 L1412 296.3 L1414 296.8 L1416 297.6 L1418 296.7 L1420 296.2 L1422 297.5 L1424 297.2 L1426 287.0 L1428 266.0 L1430 265.5 L1432 286.8 L1434 297.6 L1436 296.4 L1438 296.4 L1440 297.5 L1442 296.7 L1444 296.2 L1446 297.8 L1448 297.6 L1450 297.4 L1452 297.8 L1454 297.5 L1456 297.1 L1458 296.6 L1460 297.7 L1462 297.6 L1464 297.4 L1466 297.5 L1468 297.5 L1470 296.9 L1472 296.7 L1474 297.6 L1476 296.8 L1478 293.8 L1480 283.5 L1482 265.7 L1484 268.9 L1486 270.5 L1488 272.6 L1490 297.1 L1492 299.0 L1494 299.0 L1496 280.5 L1498 292.4 L1500 294.1 L1502 296.1 L1504 296.6 L1506 295.1 L1508 292.9 L1510 273.2 L1512 261.5 L1514 263.9 L1516 265.6 L1518 272.3 L1520 275.6 L1522 277.6 L1524 266.9 L1526 267.4 L1528 279.8 L1530 289.7 L1532 295.3 L1534 296.9 L1536 296.5 L1538 273.7 L1540 264.1 L1542 259.6 L1544 264.3 L1546 275.1 L1548 278.7 L1550 277.0 L1552 275.4 L1554 269.6 L1556 269.1 L1558 267.7 L1560 265.9 L1562 264.4 L1564 268.5 L1566 285.0 L1568 297.3 L1570 297.0 L1572 284.2 L1574 262.0 L1576 256.0 L1578 254.2 L1580 252.6 L1582 250.8 L1584 255.7 L1586 264.5 L1588 273.1 L1590 285.4 L1592 296.5 L1594 296.8 L1596 294.2 L1598 290.6 L1600 286.4 L1602 281.3 L1604 276.9 L1606 286.7 L1608 295.4 L1610 283.9 L1612 274.5 L1614 271.6 L1616 270.2 L1618 269.6 L1620 268.8 L1622 268.4 L1624 269.0 L1626 269.3 L1628 270.4 L1630 270.4 L1632 268.4 L1634 265.4 L1636 263.5 L1638 262.3 L1640 264.0 L1642 267.5 L1644 268.7 L1646 271.7 L1648 271.4 L1650 272.4 L1652 273.0 L1654 273.6 L1656 273.8 L1658 275.1 L1660 275.3 L1662 275.7 L1664 280.3 L1666 296.6 L1668 296.4 L1670 296.5 L1672 278.2 L1674 265.3 L1676 263.8 L1678 263.5 L1680 280.5 L1682 297.0 L1684 296.9 L1686 297.1 L1688 297.6 L1690 296.4 L1692 296.4 L1694 296.9 L1696 296.5 L1698 296.3 L1700 297.3 L1702 297.1 L1704 296.9 L1706 297.2 L1708 296.7 L1710 296.8 L1712 296.7 L1714 297.2 L1716 296.9 L1718 297.1 L1720 297.1 L1722 297.1 L1724 296.3 L1726 297.4 L1728 297.7 L1730 296.3 L1732 297.4 L1734 297.1 L1736 297.4 L1738 296.2 L1740 296.3 L1742 265.1 L1744 281.1 L1746 296.4 L1748 297.4 L1750 296.4 L1752 297.6 L1754 297.5 L1756 297.4 L1758 297.6 L1760 293.7 L1762 288.2 L1764 291.7 L1766 297.4 L1768 296.5 L1770 296.3 L1772 297.4 L1774 296.3 L1776 297.2 L1778 297.7 L1780 297.1 L1782 297.1 L1784 297.4 L1786 297.4 L1788 297.0 L1790 296.3 L1792 297.8 L1794 297.4 L1796 297.0 L1798 297.3 L1800 296.6 L1802 296.6 L1804 296.3 L1806 296.8 L1808 297.1 L1810 296.4 L1812 296.5 L1814 296.8 L1816 296.2 L1818 297.5 L1820 296.5 L1822 297.7 L1824 297.1 L1826 292.4 L1828 283.6 L1830 283.6 L1832 289.5 L1834 296.7 L1836 297.8 L1838 297.5 L1840 297.3 L1842 297.1 L1844 297.2 L1846 297.4 L1848 297.6 L1850 296.4 L1852 297.6 L1854 297.8 L1856 288.1 L1858 269.7 L1860 282.8 L1862 296.8 L1864 296.3 L1866 297.3 L1868 297.2 L1870 297.4 L1872 297.6 L1874 296.7 L1876 297.4 L1878 297.4 L1880 297.1 L1882 296.3 L1884 297.6 L1886 297.1 L1888 296.9 L1890 294.4 L1892 293.3 L1894 299.0 L1896 299.0 L1898 299.0 L1900 299.0 L1902 299.0 L1904 299.0 L1906 297.0 L1908 297.2 L1910 297.1 L1912 297.5 L1914 296.9 L1916 297.3 L1918 296.4 L1920 296.2 L1922 297.1 L1924 296.2 L1926 297.0 L1928 297.3 L1930 288.2 L1932 269.3 L1934 283.1 L1936 297.6 L1938 296.5 L1940 296.4 L1942 296.9 L1944 297.2 L1946 297.0 L1948 297.8 L1950 297.5 L1952 296.9 L1954 297.3 L1956 297.0 L1958 297.4 L1960 296.6 L1962 297.0 L1964 296.6 L1966 296.8 L1968 297.7 L1970 296.4 L1972 297.7 L1974 297.6 L1976 296.3 L1978 297.6 L1980 290.8 L1982 281.4 L1984 269.3 L1986 278.8 L1988 288.6 L1990 297.2 L1992 297.5 L1994 296.3 L1996 297.4 L1998 297.1 L2000 296.8 L2002 284.6 L2004 273.2 L2006 261.2 L2008 250.7 L2010 249.2 L2012 250.0 L2014 249.4 L2016 250.3 L2018 249.2 L2020 249.8 L2022 250.1 L2024 250.2 L2026 249.7 L2028 250.7 L2030 250.2 L2032 250.4 L2034 250.2 L2036 250.8 L2038 250.5 L2040 253.5 L2042 256.0 L2044 257.5 L2046 258.8 L2048 259.5 L2050 260.4 L2052 266.7 L2054 269.8 L2056 271.6 L2058 273.0 L2060 268.9 L2062 261.9 L2064 256.1 L2066 259.4 L2068 260.1 L2070 262.5 L2072 264.2 L2074 268.5 L2076 270.7 L2078 269.3 L2080 269.8 L2082 270.5 L2084 269.5 L2086 269.8 L2088 270.5 L2090 270.1 L2092 269.6 L2094 263.8 L2096 257.8 L2098 252.0 L2100 259.4 L2102 264.7 L2104 271.4 L2106 270.6 L2108 260.0 L2110 250.2 L2112 250.2 L2114 248.6 L2116 248.3 L2118 247.8 L2120 247.5 L2122 247.3 L2124 247.6 L2126 248.7 L2128 248.6 L2130 248.3 L2132 248.0 L2134 248.4 L2136 248.7 L2138 247.7 L2140 248.4 L2142 247.4 L2144 247.8 L2146 248.0 L2148 248.2 L2150 247.5 L2152 250.3 L2154 252.3 L2156 255.0 L2158 258.1 L2160 259.6 L2162 266.9 L2164 274.6 L2166 281.1 L2168 289.4 L2170 295.7 L2172 280.3 L2174 265.0 L2176 249.9 L2178 249.9 L2180 249.8 L2182 249.9 L2184 249.5 L2186 249.3 L2188 250.6 L2190 250.5 L2192 250.4 L2194 250.0 L2196 250.7 L2198 249.4 L2200 249.3 L2202 251.5 L2204 251.7 L2206 252.6 L2208 253.4 L2210 254.5 L2212 255.3 L2214 255.8 L2216 255.9 L2218 256.8 L2220 257.1 L2222 257.8 L2224 258.2 L2226 259.1 L2228 263.0 L2230 266.8 L2232 270.2 L2234 273.2 L2236 274.6 L2238 274.1 L2240 272.1 L2242 271.1 L2244 270.2 L2246 265.4 L2248 258.2 L2250 250.1 L2252 262.5 L2254 273.5 L2256 284.8 L2258 296.4 L2260 297.2 L2262 296.4 L2264 296.4 L2266 296.9 L2268 297.5 L2270 296.7 L2272 296.6 L2274 296.3 L2276 297.7 L2278 297.5 L2280 297.0 L2282 285.7 L2284 276.6 L2286 265.5 L2288 266.5 L2290 278.8 L2292 290.9 L2294 296.9 L2296 297.4 L2298 296.3 L2300 296.6 L2302 297.1 L2304 296.9 L2306 297.0 L2308 297.1 L2310 296.4 L2312 296.5 L2314 296.2 L2316 297.3 L2318 297.2 L2320 296.2 L2322 296.5 L2324 296.7 L2326 297.5 L2328 297.4 L2330 296.5 L2332 296.9 L2334 297.1 L2336 288.5 L2338 269.5 L2340 283.0 L2342 297.4 L2344 297.3 L2346 296.7 L2348 296.6 L2350 296.9 L2352 296.3 L2354 297.2 L2356 297.5 L2358 296.5 L2360 297.6 L2362 287.6 L2364 276.3 L2366 277.4 L2368 287.4 L2370 297.2 L2372 296.6 L2374 297.0 L2376 297.7 L2378 297.2 L2380 297.7 L2382 297.5 L2384 297.2 L2386 291.9 L2388 280.1 L2390 268.3 L2392 257.7 L2394 257.9 L2396 271.0 L2398 283.5 L2400 297.0 L2402 297.4 L2404 297.8 L2406 297.4 L2408 299.0 L2410 290.4 L2412 278.6 L2414 267.5 L2416 264.9 L2418 273.0 L2420 279.6 L2422 285.7 L2424 291.6 L2426 299.0 L2428 299.0 L2430 299.0 L2432 296.6 L2434 296.8 L2436 297.4 L2438 296.5 L2440 296.5 L2442 292.0 L2444 284.7 L2446 279.1 L2448 274.4 L2450 268.4 L2452 263.0 L2454 257.3 L2456 250.4 L2458 253.8 L2460 264.0 L2462 275.5 L2464 285.4 L2466 297.4 L2468 288.8 L2470 281.7 L2472 273.6 L2474 266.1 L2476 260.0 L2478 259.2 L2480 258.8 L2482 260.0 L2484 260.5 L2486 260.7 L2488 260.7 L2490 271.1 L2492 275.3 L2494 269.5 L2496 266.8 L2498 265.1 L2500 259.8 L2502 257.2 L2504 255.7 L2506 260.1 L2508 261.3 L2510 261.4 L2512 275.4 L2514 289.6 L2516 299.0 L2518 293.7 L2520 275.6 L2522 264.4 L2524 263.8 L2526 261.4 L2528 259.7 L2530 258.6 L2532 256.2 L2534 254.4 L2536 253.0 L2538 252.2 L2540 250.7 L2542 248.5 L2544 246.5" fill="none" stroke="#f5c211" stroke-width="2.3" stroke-dasharray="2.2 4" stroke-dashoffset="0.0"/><path d="M658 255.6 L660 256.4 L662 257.0 L664 257.5 L666 257.7 L668 258.1 L670 258.6 L672 267.7 L674 283.5 L676 295.3 L678 299.0 L680 299.0 L682 296.6 L684 296.3 L686 296.5 L688 296.3 L690 297.4 L692 296.8 L694 297.0 L696 296.7 L698 284.9 L700 259.8 L702 255.5 L704 251.9 L706 261.4 L708 284.6 L710 297.5 L712 297.3 L714 297.3 L716 297.6 L718 296.8 L720 296.8 L722 296.9 L724 296.8 L726 297.3 L728 296.2 L730 296.9 L732 297.1 L734 296.8 L736 296.2 L738 297.3 L740 296.2 L742 297.1 L744 296.4 L746 296.3 L748 296.5 L750 296.3 L752 296.4 L754 297.3 L756 297.4 L758 296.8 L760 297.2 L762 297.0 L764 286.0 L766 275.6 L768 285.7 L770 297.6 L772 293.9 L774 290.5 L776 286.0 L778 282.7 L780 279.3 L782 286.6 L784 294.3 L786 294.1 L788 287.0 L790 278.9 L792 272.8 L794 265.9 L796 259.0 L798 254.6 L800 251.9 L802 250.3 L804 250.9 L806 251.6 L808 252.7 L810 252.8 L812 254.4 L814 254.0 L816 266.2 L818 287.1 L820 286.1 L822 264.3 L824 262.6 L826 260.3 L828 257.3 L830 254.3 L832 265.1 L834 276.5 L836 285.8 L838 297.7 L840 278.1 L842 259.5 L844 257.7 L846 257.4 L848 255.6 L850 275.7 L852 296.4 L854 297.2 L856 297.6 L858 296.2 L860 297.2 L862 297.6 L864 296.9 L866 297.1 L868 297.5 L870 296.6 L872 296.6 L874 277.8 L876 258.1 L878 277.6 L880 296.7 L882 297.7 L884 296.7 L886 297.3 L888 297.6 L890 296.8 L892 296.3 L894 296.6 L896 296.3 L898 296.4 L900 296.4 L902 296.7 L904 296.8 L906 296.9 L908 297.3 L910 297.3 L912 297.3 L914 296.8 L916 297.3 L918 297.1 L920 296.4 L922 291.6 L924 280.2 L926 279.7 L928 288.6 L930 296.6 L932 295.7 L934 294.6 L936 293.2 L938 291.6 L940 290.4 L942 290.8 L944 286.6 L946 282.4 L948 279.0 L950 274.6 L952 286.3 L954 297.7 L956 289.4 L958 280.9 L960 273.8 L962 265.7 L964 264.0 L966 260.6 L968 256.3 L970 263.1 L972 266.3 L974 268.8 L976 270.3 L978 271.5 L980 272.5 L982 271.7 L984 272.0 L986 273.0 L988 265.6 L990 263.6 L992 267.3 L994 269.8 L996 271.7 L998 269.1 L1000 269.0 L1002 266.3 L1004 265.2 L1006 263.6 L1008 261.7 L1010 263.1 L1012 262.4 L1014 260.9 L1016 260.7 L1018 255.9 L1020 254.6 L1022 259.4 L1024 262.0 L1026 263.1 L1028 264.2 L1030 278.2 L1032 290.4 L1034 296.5 L1036 296.4 L1038 297.8 L1040 297.6 L1042 297.7 L1044 297.5 L1046 297.3 L1048 297.6 L1050 296.4 L1052 297.0 L1054 296.2 L1056 297.6 L1058 297.0 L1060 296.4 L1062 288.6 L1064 280.3 L1066 270.4 L1068 271.8 L1070 270.9 L1072 271.1 L1074 271.6 L1076 271.2 L1078 270.3 L1080 270.6 L1082 271.4 L1084 271.3 L1086 270.4 L1088 271.3 L1090 279.0 L1092 287.7 L1094 296.7 L1096 296.5 L1098 297.5 L1100 297.2 L1102 296.8 L1104 297.5 L1106 288.6 L1108 272.4 L1110 255.3 L1112 256.1 L1114 256.6 L1116 252.8 L1118 251.6 L1120 251.3 L1122 254.7 L1124 256.3 L1126 255.8 L1128 255.8 L1130 261.3 L1132 263.1 L1134 261.3 L1136 260.4 L1138 255.4 L1140 253.3 L1142 252.3 L1144 251.7 L1146 251.4 L1148 251.1 L1150 259.6 L1152 263.6 L1154 265.5 L1156 266.5 L1158 264.8 L1160 264.4 L1162 264.5 L1164 264.9 L1166 270.9 L1168 286.1 L1170 299.0 L1172 297.2 L1174 297.8 L1176 297.6 L1178 296.3 L1180 297.3 L1182 290.7 L1184 280.3 L1186 288.3 L1188 297.6 L1190 296.3 L1192 297.7 L1194 296.3 L1196 296.3 L1198 296.2 L1200 296.4 L1202 297.8 L1204 297.5 L1206 297.7 L1208 296.5 L1210 297.3 L1212 297.5 L1214 297.4 L1216 296.6 L1218 297.8 L1220 297.4 L1222 297.3 L1224 296.7 L1226 296.8 L1228 297.4 L1230 297.0 L1232 297.0 L1234 297.7 L1236 296.9 L1238 297.6 L1240 296.3 L1242 297.0 L1244 297.3 L1246 296.2 L1248 297.3 L1250 296.7 L1252 297.2 L1254 297.2 L1256 296.4 L1258 297.7 L1260 296.6 L1262 296.4 L1264 296.9 L1266 296.3 L1268 296.4 L1270 291.4 L1272 284.4 L1274 289.1 L1276 293.6 L1278 296.9 L1280 295.4 L1282 293.2 L1284 290.0 L1286 287.8 L1288 286.7 L1290 284.7 L1292 282.6 L1294 281.8 L1296 281.0 L1298 281.2 L1300 280.4 L1302 273.8 L1304 267.3 L1306 259.3 L1308 253.7 L1310 250.5 L1312 250.4 L1314 251.5 L1316 253.0 L1318 253.5 L1320 254.3 L1322 254.6 L1324 255.8 L1326 257.1 L1328 258.0 L1330 258.1 L1332 258.4 L1334 257.3 L1336 257.4 L1338 258.1 L1340 258.5 L1342 257.4 L1344 257.4 L1346 260.0 L1348 263.7 L1350 267.4 L1352 266.3 L1354 265.5 L1356 264.9 L1358 262.7 L1360 262.5 L1362 268.3 L1364 275.6 L1366 283.3 L1368 289.2 L1370 296.7 L1372 296.4 L1374 296.6 L1376 297.6 L1378 296.5 L1380 297.4 L1382 297.7 L1384 296.6 L1386 297.6 L1388 296.7 L1390 297.4 L1392 297.1 L1394 296.8 L1396 297.6 L1398 297.3 L1400 296.7 L1402 297.1 L1404 296.7 L1406 296.7 L1408 297.7 L1410 297.8 L1412 296.5 L1414 297.7 L1416 297.3 L1418 296.2 L1420 296.4 L1422 296.9 L1424 297.6 L1426 287.1 L1428 265.1 L1430 265.4 L1432 287.2 L1434 296.5 L1436 296.4 L1438 296.9 L1440 297.3 L1442 297.6 L1444 297.6 L1446 296.2 L1448 296.5 L1450 296.4 L1452 297.2 L1454 296.8 L1456 297.7 L1458 297.2 L1460 297.2 L1462 297.3 L1464 296.5 L1466 297.6 L1468 297.6 L1470 297.5 L1472 297.5 L1474 296.5 L1476 296.3 L1478 293.4 L1480 283.4 L1482 265.3 L1484 259.4 L1486 257.1 L1488 261.6 L1490 287.0 L1492 299.0 L1494 299.0 L1496 281.7 L1498 291.9 L1500 293.0 L1502 296.2 L1504 297.6 L1506 295.0 L1508 291.9 L1510 264.7 L1512 249.6 L1514 250.6 L1516 251.8 L1518 262.8 L1520 267.8 L1522 265.0 L1524 266.1 L1526 267.1 L1528 279.8 L1530 290.2 L1532 295.9 L1534 295.9 L1536 296.6 L1538 273.3 L1540 261.9 L1542 256.6 L1544 265.1 L1546 272.8 L1548 271.3 L1550 267.5 L1552 265.1 L1554 268.1 L1556 277.8 L1558 280.3 L1560 280.1 L1562 268.6 L1564 266.3 L1566 285.9 L1568 297.3 L1570 297.2 L1572 283.5 L1574 261.2 L1576 255.0 L1578 254.0 L1580 252.0 L1582 250.8 L1584 255.1 L1586 263.2 L1588 273.1 L1590 285.4 L1592 295.4 L1594 296.7 L1596 294.1 L1598 289.5 L1600 286.5 L1602 280.9 L1604 275.9 L1606 286.7 L1608 295.0 L1610 283.6 L1612 274.5 L1614 271.4 L1616 269.7 L1618 269.9 L1620 268.6 L1622 268.8 L1624 269.8 L1626 269.7 L1628 271.1 L1630 270.8 L1632 269.3 L1634 266.3 L1636 262.6 L1638 261.5 L1640 264.1 L1642 266.7 L1644 269.4 L1646 271.0 L1648 271.1 L1650 271.8 L1652 272.3 L1654 272.8 L1656 274.5 L1658 275.3 L1660 275.3 L1662 275.1 L1664 280.2 L1666 297.6 L1668 297.1 L1670 295.5 L1672 277.4 L1674 273.9 L1676 275.9 L1678 277.0 L1680 294.0 L1682 297.1 L1684 297.3 L1686 297.2 L1688 297.3 L1690 296.6 L1692 297.5 L1694 297.4 L1696 296.5 L1698 297.7 L1700 297.4 L1702 296.3 L1704 296.3 L1706 296.5 L1708 297.3 L1710 297.4 L1712 297.7 L1714 297.6 L1716 296.5 L1718 296.5 L1720 296.3 L1722 296.8 L1724 296.9 L1726 296.8 L1728 297.5 L1730 297.2 L1732 297.5 L1734 297.6 L1736 297.4 L1738 297.0 L1740 296.9 L1742 265.1 L1744 280.9 L1746 297.3 L1748 297.6 L1750 297.3 L1752 296.6 L1754 297.1 L1756 296.9 L1758 296.4 L1760 293.4 L1762 287.9 L1764 293.2 L1766 297.3 L1768 296.3 L1770 297.7 L1772 297.4 L1774 297.2 L1776 296.2 L1778 296.7 L1780 296.7 L1782 297.0 L1784 296.4 L1786 297.2 L1788 297.2 L1790 297.2 L1792 297.0 L1794 297.1 L1796 296.4 L1798 297.5 L1800 297.6 L1802 297.6 L1804 297.4 L1806 296.6 L1808 296.7 L1810 296.3 L1812 297.5 L1814 297.6 L1816 297.7 L1818 297.2 L1820 297.5 L1822 297.6 L1824 296.4 L1826 292.1 L1828 284.9 L1830 284.2 L1832 290.5 L1834 297.2 L1836 296.8 L1838 297.6 L1840 296.7 L1842 296.3 L1844 297.5 L1846 296.3 L1848 297.3 L1850 297.2 L1852 296.4 L1854 296.9 L1856 287.6 L1858 270.5 L1860 283.9 L1862 296.7 L1864 296.4 L1866 296.7 L1868 296.9 L1870 297.2 L1872 297.7 L1874 296.7 L1876 296.4 L1878 297.2 L1880 296.9 L1882 297.4 L1884 297.3 L1886 297.1 L1888 297.5 L1890 299.0 L1892 299.0 L1894 299.0 L1896 299.0 L1898 299.0 L1900 299.0 L1902 299.0 L1904 299.0 L1906 296.8 L1908 296.6 L1910 296.6 L1912 296.7 L1914 297.2 L1916 296.7 L1918 296.2 L1920 297.0 L1922 296.7 L1924 296.4 L1926 297.4 L1928 297.0 L1930 288.4 L1932 270.0 L1934 283.0 L1936 297.2 L1938 297.8 L1940 296.7 L1942 296.6 L1944 297.0 L1946 296.2 L1948 297.5 L1950 296.8 L1952 296.5 L1954 297.0 L1956 296.4 L1958 297.8 L1960 297.6 L1962 296.9 L1964 297.4 L1966 296.4 L1968 297.5 L1970 296.8 L1972 297.1 L1974 297.8 L1976 296.7 L1978 297.1 L1980 291.7 L1982 281.3 L1984 270.3 L1986 279.1 L1988 288.8 L1990 296.2 L1992 297.6 L1994 296.3 L1996 297.8 L1998 296.8 L2000 297.4 L2002 285.7 L2004 274.3 L2006 261.7 L2008 249.6 L2010 250.5 L2012 250.7 L2014 249.9 L2016 249.5 L2018 250.6 L2020 250.1 L2022 250.8 L2024 250.2 L2026 250.2 L2028 250.3 L2030 250.2 L2032 250.3 L2034 250.8 L2036 249.9 L2038 250.0 L2040 261.4 L2042 267.0 L2044 269.8 L2046 260.8 L2048 257.8 L2050 260.9 L2052 262.7 L2054 264.0 L2056 260.3 L2058 259.4 L2060 259.7 L2062 254.4 L2064 258.6 L2066 265.9 L2068 271.0 L2070 278.3 L2072 265.0 L2074 267.9 L2076 270.2 L2078 270.7 L2080 270.1 L2082 270.2 L2084 270.8 L2086 270.1 L2088 270.4 L2090 270.0 L2092 269.6 L2094 264.6 L2096 258.6 L2098 252.1 L2100 258.5 L2102 264.7 L2104 271.4 L2106 270.4 L2108 259.6 L2110 250.5 L2112 249.5 L2114 249.8 L2116 248.4 L2118 248.3 L2120 248.3 L2122 248.7 L2124 248.5 L2126 248.5 L2128 248.0 L2130 248.1 L2132 247.8 L2134 248.7 L2136 247.9 L2138 247.8 L2140 248.1 L2142 248.2 L2144 248.0 L2146 248.0 L2148 248.8 L2150 248.4 L2152 250.7 L2154 252.8 L2156 254.5 L2158 257.9 L2160 259.2 L2162 267.9 L2164 274.0 L2166 281.2 L2168 289.3 L2170 295.3 L2172 281.1 L2174 264.9 L2176 249.6 L2178 249.6 L2180 250.0 L2182 250.6 L2184 249.6 L2186 250.6 L2188 249.3 L2190 249.8 L2192 249.4 L2194 250.1 L2196 249.3 L2198 249.4 L2200 250.2 L2202 250.1 L2204 251.5 L2206 252.3 L2208 253.8 L2210 253.6 L2212 255.0 L2214 255.9 L2216 256.7 L2218 255.9 L2220 257.2 L2222 257.4 L2224 257.5 L2226 259.8 L2228 262.6 L2230 267.0 L2232 269.6 L2234 273.5 L2236 274.0 L2238 273.4 L2240 272.7 L2242 272.2 L2244 270.7 L2246 266.0 L2248 258.6 L2250 249.7 L2252 262.2 L2254 273.6 L2256 284.7 L2258 297.4 L2260 297.7 L2262 296.8 L2264 297.2 L2266 297.0 L2268 297.0 L2270 296.5 L2272 297.4 L2274 297.0 L2276 296.9 L2278 296.9 L2280 296.3 L2282 285.8 L2284 276.5 L2286 265.8 L2288 266.6 L2290 278.4 L2292 290.7 L2294 296.6 L2296 296.6 L2298 296.7 L2300 296.2 L2302 297.8 L2304 296.5 L2306 297.8 L2308 297.7 L2310 297.5 L2312 297.2 L2314 297.4 L2316 297.7 L2318 296.6 L2320 297.1 L2322 296.3 L2324 296.7 L2326 296.8 L2328 297.4 L2330 297.4 L2332 296.5 L2334 297.2 L2336 287.5 L2338 269.3 L2340 284.3 L2342 297.0 L2344 296.7 L2346 297.6 L2348 296.4 L2350 296.8 L2352 297.1 L2354 296.4 L2356 297.0 L2358 296.5 L2360 296.9 L2362 287.3 L2364 277.2 L2366 277.7 L2368 287.7 L2370 297.6 L2372 297.7 L2374 297.4 L2376 297.5 L2378 297.0 L2380 297.1 L2382 296.9 L2384 296.5 L2386 291.9 L2388 280.8 L2390 269.5 L2392 258.0 L2394 257.8 L2396 271.4 L2398 284.1 L2400 297.7 L2402 297.7 L2404 297.7 L2406 296.5 L2408 299.0 L2410 292.8 L2412 283.0 L2414 271.3 L2416 268.4 L2418 273.9 L2420 279.5 L2422 291.0 L2424 299.0 L2426 293.9 L2428 295.2 L2430 293.5 L2432 297.4 L2434 297.6 L2436 297.5 L2438 297.4 L2440 297.7 L2442 290.5 L2444 284.8 L2446 280.0 L2448 273.3 L2450 268.7 L2452 262.3 L2454 257.1 L2456 250.3 L2458 253.5 L2460 264.7 L2462 275.6 L2464 285.6 L2466 296.6 L2468 289.8 L2470 281.9 L2472 273.7 L2474 265.1 L2476 264.7 L2478 265.8 L2480 266.3 L2482 266.5 L2484 269.8 L2486 271.2 L2488 271.7 L2490 271.9 L2492 268.1 L2494 266.5 L2496 265.5 L2498 264.5 L2500 268.8 L2502 270.0 L2504 270.1 L2506 269.6 L2508 265.5 L2510 263.4 L2512 284.6 L2514 299.0 L2516 299.0 L2518 297.8 L2520 274.9 L2522 264.8 L2524 263.5 L2526 262.0 L2528 259.7 L2530 258.7 L2532 257.1 L2534 255.7 L2536 253.5 L2538 252.6 L2540 250.2 L2542 249.3 L2544 246.8" fill="none" stroke="#26a269" stroke-width="2.3" stroke-dasharray="2.2 5" stroke-dashoffset="1.9"/><path d="M658 262.2 L660 265.6 L662 267.9 L664 269.2 L666 269.3 L668 269.7 L670 270.1 L672 279.2 L674 290.0 L676 299.0 L678 299.0 L680 299.0 L682 296.0 L684 297.0 L686 297.6 L688 297.4 L690 296.8 L692 296.6 L694 296.4 L696 297.5 L698 285.0 L700 260.2 L702 255.9 L704 252.0 L706 261.3 L708 285.3 L710 296.4 L712 297.2 L714 297.2 L716 297.3 L718 296.6 L720 296.3 L722 296.7 L724 297.3 L726 297.0 L728 297.4 L730 296.9 L732 296.8 L734 297.7 L736 296.5 L738 296.5 L740 297.1 L742 297.2 L744 296.9 L746 297.1 L748 296.9 L750 297.3 L752 297.6 L754 297.5 L756 297.2 L758 297.0 L760 297.7 L762 296.9 L764 286.2 L766 275.6 L768 286.3 L770 296.8 L772 294.0 L774 290.4 L776 287.5 L778 283.6 L780 280.1 L782 287.6 L784 293.6 L786 293.3 L788 287.2 L790 280.2 L792 272.0 L794 264.8 L796 259.1 L798 254.8 L800 252.3 L802 250.4 L804 250.7 L806 252.0 L808 251.6 L810 252.8 L812 254.0 L814 254.1 L816 265.4 L818 285.9 L820 286.3 L822 264.6 L824 261.8 L826 259.8 L828 256.9 L830 254.4 L832 264.9 L834 275.9 L836 286.2 L838 297.4 L840 278.4 L842 259.6 L844 257.8 L846 256.3 L848 255.4 L850 275.5 L852 296.9 L854 297.5 L856 297.5 L858 296.9 L860 297.5 L862 297.2 L864 296.6 L866 296.3 L868 296.5 L870 297.5 L872 296.8 L874 278.0 L876 258.7 L878 278.2 L880 297.0 L882 296.2 L884 296.6 L886 296.6 L888 297.2 L890 297.3 L892 297.7 L894 297.3 L896 297.7 L898 297.2 L900 297.0 L902 297.5 L904 296.6 L906 297.4 L908 297.4 L910 297.6 L912 296.3 L914 296.5 L916 297.7 L918 296.4 L920 296.9 L922 291.7 L924 280.5 L926 280.0 L928 288.9 L930 296.7 L932 295.2 L934 295.3 L936 293.4 L938 291.9 L940 290.6 L942 289.2 L944 286.4 L946 282.1 L948 278.8 L950 275.7 L952 286.0 L954 297.7 L956 288.3 L958 281.4 L960 273.4 L962 265.7 L964 265.5 L966 262.7 L968 258.6 L970 259.9 L972 255.6 L974 254.4 L976 254.5 L978 266.7 L980 272.1 L982 274.9 L984 276.5 L986 268.1 L988 265.8 L990 266.4 L992 267.6 L994 268.6 L996 270.0 L998 272.6 L1000 274.6 L1002 272.8 L1004 270.8 L1006 278.8 L1008 280.8 L1010 271.7 L1012 266.8 L1014 263.7 L1016 257.3 L1018 256.0 L1020 256.2 L1022 256.6 L1024 257.4 L1026 258.4 L1028 264.7 L1030 280.8 L1032 290.3 L1034 296.7 L1036 297.0 L1038 297.3 L1040 296.3 L1042 296.3 L1044 297.3 L1046 297.8 L1048 296.2 L1050 296.9 L1052 297.8 L1054 297.5 L1056 297.8 L1058 297.0 L1060 297.8 L1062 287.6 L1064 279.6 L1066 271.6 L1068 270.8 L1070 270.9 L1072 270.9 L1074 270.8 L1076 271.5 L1078 271.8 L1080 270.6 L1082 270.7 L1084 271.5 L1086 271.4 L1088 271.5 L1090 280.0 L1092 289.0 L1094 297.6 L1096 297.2 L1098 296.7 L1100 296.3 L1102 297.6 L1104 297.6 L1106 288.6 L1108 279.1 L1110 264.8 L1112 255.5 L1114 252.0 L1116 254.2 L1118 255.3 L1120 256.0 L1122 256.5 L1124 258.9 L1126 260.1 L1128 260.8 L1130 261.4 L1132 258.8 L1134 257.6 L1136 257.0 L1138 259.7 L1140 260.7 L1142 260.9 L1144 260.9 L1146 263.7 L1148 264.6 L1150 258.7 L1152 256.9 L1154 256.5 L1156 256.6 L1158 262.4 L1160 265.0 L1162 266.4 L1164 261.9 L1166 260.4 L1168 272.6 L1170 285.3 L1172 296.6 L1174 296.9 L1176 297.5 L1178 297.7 L1180 297.7 L1182 291.2 L1184 280.4 L1186 288.5 L1188 296.6 L1190 297.7 L1192 296.2 L1194 297.3 L1196 296.4 L1198 296.2 L1200 297.6 L1202 297.0 L1204 297.2 L1206 296.3 L1208 296.5 L1210 296.5 L1212 296.6 L1214 296.8 L1216 297.1 L1218 297.7 L1220 297.0 L1222 296.3 L1224 297.0 L1226 297.5 L1228 297.3 L1230 297.7 L1232 297.7 L1234 296.8 L1236 296.9 L1238 296.3 L1240 297.7 L1242 296.2 L1244 297.0 L1246 297.4 L1248 297.8 L1250 297.7 L1252 296.6 L1254 297.3 L1256 296.4 L1258 297.7 L1260 296.6 L1262 296.5 L1264 297.4 L1266 296.4 L1268 297.7 L1270 290.8 L1272 285.2 L1274 288.5 L1276 293.6 L1278 296.9 L1280 294.6 L1282 293.4 L1284 290.2 L1286 288.5 L1288 286.8 L1290 284.1 L1292 282.6 L1294 281.5 L1296 280.2 L1298 281.0 L1300 280.7 L1302 273.1 L1304 265.9 L1306 259.4 L1308 254.0 L1310 251.2 L1312 251.7 L1314 252.4 L1316 253.4 L1318 253.9 L1320 254.9 L1322 254.2 L1324 256.1 L1326 256.4 L1328 256.7 L1330 258.6 L1332 257.4 L1334 258.1 L1336 257.4 L1338 258.0 L1340 257.8 L1342 257.2 L1344 258.6 L1346 260.4 L1348 263.5 L1350 268.3 L1352 267.3 L1354 265.5 L1356 264.7 L1358 263.6 L1360 262.3 L1362 268.5 L1364 275.7 L1366 282.3 L1368 290.0 L1370 297.0 L1372 296.5 L1374 296.3 L1376 297.4 L1378 297.3 L1380 296.3 L1382 297.7 L1384 297.3 L1386 297.1 L1388 296.7 L1390 297.2 L1392 297.5 L1394 297.2 L1396 296.6 L1398 297.2 L1400 297.2 L1402 296.7 L1404 296.9 L1406 296.7 L1408 296.4 L1410 297.3 L1412 297.2 L1414 296.3 L1416 296.8 L1418 296.7 L1420 297.2 L1422 296.7 L1424 297.6 L1426 286.1 L1428 265.9 L1430 265.5 L1432 286.1 L1434 297.0 L1436 296.9 L1438 296.3 L1440 297.4 L1442 296.2 L1444 297.3 L1446 297.8 L1448 297.0 L1450 297.5 L1452 297.6 L1454 296.2 L1456 297.2 L1458 296.5 L1460 297.5 L1462 296.6 L1464 297.1 L1466 296.5 L1468 296.9 L1470 297.1 L1472 297.6 L1474 296.5 L1476 297.4 L1478 294.0 L1480 283.0 L1482 265.9 L1484 258.8 L1486 256.4 L1488 269.8 L1490 298.7 L1492 299.0 L1494 299.0 L1496 280.6 L1498 292.8 L1500 299.0 L1502 296.2 L1504 297.3 L1506 295.2 L1508 291.8 L1510 276.3 L1512 265.8 L1514 268.7 L1516 270.6 L1518 268.5 L1520 268.3 L1522 268.9 L1524 274.5 L1526 266.8 L1528 280.2 L1530 290.4 L1532 295.2 L1534 296.5 L1536 295.7 L1538 272.9 L1540 269.5 L1542 267.1 L1544 272.8 L1546 277.8 L1548 279.1 L1550 267.0 L1552 261.2 L1554 262.8 L1556 265.4 L1558 273.3 L1560 275.3 L1562 275.4 L1564 277.7 L1566 285.4 L1568 297.0 L1570 296.8 L1572 283.9 L1574 261.1 L1576 256.3 L1578 254.1 L1580 251.6 L1582 249.5 L1584 255.6 L1586 263.5 L1588 273.4 L1590 284.5 L1592 295.9 L1594 296.8 L1596 292.9 L1598 289.6 L1600 286.1 L1602 281.2 L1604 275.6 L1606 287.4 L1608 294.8 L1610 283.7 L1612 275.7 L1614 271.7 L1616 271.0 L1618 268.9 L1620 269.2 L1622 268.2 L1624 269.1 L1626 269.3 L1628 271.0 L1630 270.5 L1632 269.0 L1634 265.4 L1636 263.8 L1638 262.7 L1640 264.8 L1642 267.2 L1644 268.6 L1646 271.3 L1648 272.1 L1650 271.9 L1652 272.3 L1654 272.9 L1656 274.8 L1658 275.1 L1660 275.6 L1662 276.2 L1664 280.0 L1666 296.7 L1668 296.2 L1670 295.9 L1672 277.4 L1674 273.3 L1676 275.0 L1678 276.1 L1680 286.9 L1682 299.0 L1684 296.2 L1686 296.8 L1688 297.1 L1690 297.6 L1692 296.5 L1694 296.4 L1696 296.7 L1698 296.4 L1700 297.0 L1702 296.9 L1704 297.3 L1706 296.6 L1708 297.3 L1710 296.7 L1712 296.9 L1714 297.1 L1716 296.5 L1718 296.5 L1720 296.9 L1722 296.8 L1724 297.0 L1726 296.7 L1728 297.1 L1730 297.7 L1732 297.3 L1734 296.2 L1736 296.8 L1738 296.4 L1740 297.1 L1742 265.4 L1744 281.8 L1746 296.7 L1748 296.7 L1750 297.8 L1752 297.7 L1754 296.8 L1756 297.1 L1758 296.9 L1760 294.2 L1762 288.8 L1764 291.8 L1766 296.2 L1768 296.4 L1770 297.6 L1772 297.4 L1774 296.6 L1776 297.6 L1778 297.7 L1780 297.7 L1782 296.7 L1784 297.8 L1786 297.7 L1788 296.8 L1790 296.4 L1792 297.7 L1794 296.8 L1796 297.4 L1798 296.4 L1800 296.8 L1802 297.1 L1804 296.6 L1806 296.8 L1808 297.6 L1810 296.6 L1812 297.8 L1814 297.6 L1816 296.5 L1818 297.0 L1820 296.5 L1822 296.3 L1824 297.6 L1826 292.5 L1828 284.8 L1830 283.1 L1832 290.1 L1834 297.4 L1836 297.1 L1838 297.3 L1840 297.1 L1842 297.7 L1844 296.4 L1846 297.2 L1848 296.6 L1850 296.8 L1852 296.5 L1854 297.4 L1856 287.6 L1858 269.3 L1860 283.3 L1862 297.5 L1864 296.3 L1866 296.8 L1868 296.2 L1870 297.1 L1872 297.1 L1874 297.4 L1876 297.6 L1878 297.5 L1880 296.7 L1882 296.4 L1884 296.8 L1886 297.0 L1888 297.5 L1890 299.0 L1892 299.0 L1894 299.0 L1896 299.0 L1898 296.4 L1900 294.5 L1902 293.8 L1904 293.5 L1906 296.8 L1908 296.3 L1910 296.7 L1912 296.2 L1914 297.3 L1916 296.5 L1918 296.9 L1920 297.3 L1922 297.6 L1924 296.5 L1926 297.7 L1928 297.8 L1930 288.2 L1932 269.4 L1934 283.6 L1936 297.5 L1938 297.0 L1940 297.6 L1942 297.3 L1944 297.1 L1946 297.5 L1948 296.8 L1950 297.1 L1952 296.5 L1954 297.7 L1956 296.2 L1958 297.3 L1960 296.7 L1962 296.7 L1964 296.5 L1966 297.4 L1968 296.4 L1970 296.6 L1972 297.8 L1974 297.7 L1976 296.5 L1978 296.5 L1980 291.8 L1982 280.9 L1984 269.8 L1986 278.8 L1988 288.4 L1990 296.7 L1992 296.4 L1994 297.7 L1996 297.1 L1998 297.6 L2000 297.8 L2002 285.1 L2004 273.2 L2006 262.2 L2008 250.6 L2010 250.3 L2012 250.0 L2014 250.2 L2016 249.3 L2018 250.2 L2020 250.5 L2022 250.4 L2024 250.7 L2026 250.2 L2028 249.7 L2030 249.7 L2032 250.3 L2034 249.3 L2036 249.3 L2038 250.3 L2040 252.2 L2042 254.1 L2044 255.4 L2046 255.6 L2048 256.3 L2050 258.1 L2052 259.5 L2054 260.6 L2056 261.7 L2058 271.7 L2060 276.3 L2062 272.7 L2064 268.3 L2066 272.3 L2068 276.1 L2070 272.8 L2072 265.0 L2074 268.9 L2076 270.7 L2078 270.2 L2080 269.9 L2082 270.3 L2084 270.8 L2086 269.4 L2088 269.9 L2090 269.4 L2092 269.4 L2094 264.1 L2096 257.5 L2098 251.4 L2100 258.7 L2102 265.2 L2104 271.7 L2106 269.2 L2108 259.4 L2110 250.1 L2112 248.9 L2114 248.6 L2116 248.5 L2118 249.1 L2120 248.4 L2122 248.6 L2124 248.5 L2126 247.4 L2128 248.4 L2130 248.3 L2132 248.7 L2134 247.3 L2136 247.5 L2138 247.4 L2140 247.9 L2142 247.7 L2144 247.6 L2146 248.4 L2148 248.7 L2150 248.7 L2152 249.7 L2154 252.3 L2156 255.1 L2158 258.0 L2160 260.4 L2162 267.7 L2164 273.8 L2166 281.7 L2168 288.1 L2170 296.3 L2172 281.2 L2174 265.0 L2176 249.8 L2178 249.3 L2180 250.6 L2182 249.7 L2184 249.6 L2186 249.8 L2188 249.5 L2190 250.8 L2192 250.7 L2194 250.1 L2196 249.8 L2198 250.0 L2200 250.7 L2202 250.1 L2204 251.2 L2206 252.8 L2208 253.0 L2210 254.2 L2212 254.4 L2214 255.3 L2216 256.6 L2218 256.7 L2220 257.0 L2222 257.9 L2224 257.3 L2226 260.0 L2228 263.8 L2230 266.3 L2232 269.1 L2234 273.5 L2236 275.2 L2238 272.9 L2240 272.1 L2242 271.8 L2244 270.5 L2246 266.8 L2248 258.1 L2250 249.8 L2252 261.5 L2254 273.5 L2256 285.7 L2258 297.4 L2260 296.9 L2262 296.8 L2264 297.2 L2266 296.5 L2268 297.0 L2270 296.8 L2272 296.2 L2274 297.3 L2276 296.3 L2278 296.7 L2280 297.2 L2282 287.0 L2284 276.1 L2286 266.0 L2288 265.4 L2290 279.0 L2292 291.2 L2294 297.3 L2296 297.7 L2298 296.3 L2300 296.3 L2302 297.7 L2304 297.6 L2306 296.4 L2308 296.9 L2310 297.6 L2312 297.1 L2314 296.2 L2316 296.5 L2318 297.5 L2320 296.4 L2322 296.7 L2324 297.5 L2326 296.5 L2328 297.1 L2330 296.5 L2332 296.5 L2334 297.1 L2336 288.5 L2338 269.8 L2340 283.1 L2342 297.3 L2344 297.4 L2346 296.2 L2348 297.3 L2350 297.0 L2352 297.8 L2354 297.2 L2356 297.2 L2358 296.3 L2360 297.0 L2362 286.3 L2364 276.5 L2366 277.0 L2368 287.6 L2370 297.7 L2372 297.5 L2374 297.0 L2376 296.9 L2378 297.3 L2380 296.8 L2382 296.2 L2384 297.4 L2386 292.1 L2388 280.7 L2390 269.1 L2392 258.1 L2394 257.9 L2396 270.9 L2398 284.7 L2400 297.0 L2402 296.6 L2404 297.2 L2406 297.4 L2408 294.4 L2410 282.8 L2412 271.9 L2414 260.7 L2416 258.1 L2418 263.9 L2420 269.6 L2422 275.3 L2424 289.1 L2426 298.0 L2428 299.0 L2430 299.0 L2432 297.3 L2434 297.1 L2436 296.5 L2438 297.6 L2440 297.7 L2442 291.5 L2444 284.8 L2446 279.3 L2448 273.7 L2450 267.7 L2452 262.0 L2454 255.9 L2456 251.6 L2458 252.7 L2460 264.0 L2462 275.1 L2464 285.6 L2466 296.6 L2468 288.4 L2470 281.0 L2472 273.3 L2474 266.4 L2476 272.0 L2478 276.0 L2480 277.6 L2482 278.2 L2484 279.7 L2486 280.2 L2488 280.4 L2490 280.5 L2492 269.9 L2494 265.7 L2496 263.6 L2498 263.4 L2500 262.8 L2502 262.1 L2504 261.4 L2506 270.6 L2508 273.9 L2510 274.7 L2512 289.0 L2514 299.0 L2516 299.0 L2518 299.0 L2520 275.9 L2522 264.9 L2524 263.9 L2526 260.9 L2528 260.4 L2530 257.8 L2532 257.3 L2534 254.9 L2536 253.4 L2538 251.7 L2540 250.8 L2542 249.3 L2544 247.3" fill="none" stroke="#e66100" stroke-width="2.3" stroke-dasharray="2.2 6" stroke-dashoffset="3.8"/><path d="M658 255.2 L660 255.8 L662 256.4 L664 256.9 L666 267.5 L668 272.1 L670 274.2 L672 284.0 L674 290.0 L676 297.9 L678 299.0 L680 299.0 L682 296.4 L684 296.4 L686 296.3 L688 296.6 L690 297.5 L692 296.2 L694 296.6 L696 296.4 L698 284.1 L700 260.0 L702 255.5 L704 251.9 L706 262.1 L708 285.6 L710 296.9 L712 297.5 L714 297.1 L716 297.5 L718 296.6 L720 296.8 L722 297.1 L724 297.7 L726 297.2 L728 297.0 L730 296.6 L732 296.7 L734 296.5 L736 297.8 L738 297.6 L740 297.6 L742 297.0 L744 297.3 L746 296.7 L748 297.0 L750 296.4 L752 296.9 L754 296.6 L756 296.4 L758 297.7 L760 296.4 L762 297.5 L764 286.3 L766 274.3 L768 286.0 L770 297.8 L772 294.4 L774 290.3 L776 287.2 L778 283.7 L780 279.7 L782 286.9 L784 293.8 L786 293.3 L788 287.0 L790 279.4 L792 272.9 L794 264.8 L796 258.4 L798 253.4 L800 252.7 L802 251.4 L804 250.5 L806 251.4 L808 252.3 L810 252.5 L812 253.6 L814 254.7 L816 265.7 L818 286.3 L820 286.3 L822 264.7 L824 262.6 L826 260.3 L828 257.2 L830 255.3 L832 266.1 L834 276.1 L836 287.3 L838 296.7 L840 279.2 L842 259.5 L844 258.1 L846 257.2 L848 254.3 L850 276.2 L852 297.6 L854 297.7 L856 297.3 L858 296.8 L860 296.7 L862 297.2 L864 296.3 L866 296.2 L868 297.6 L870 297.2 L872 296.5 L874 277.4 L876 257.7 L878 278.1 L880 296.7 L882 297.4 L884 297.4 L886 296.7 L888 296.6 L890 297.0 L892 296.8 L894 297.2 L896 296.7 L898 297.5 L900 296.9 L902 296.4 L904 297.4 L906 297.6 L908 297.3 L910 297.1 L912 297.6 L914 297.7 L916 296.2 L918 297.0 L920 296.2 L922 291.2 L924 280.1 L926 279.3 L928 288.5 L930 297.6 L932 295.5 L934 293.9 L936 294.3 L938 292.8 L940 291.2 L942 289.4 L944 285.5 L946 283.2 L948 278.8 L950 275.6 L952 286.5 L954 297.4 L956 289.5 L958 280.6 L960 272.6 L962 264.9 L964 263.1 L966 259.3 L968 254.8 L970 257.9 L972 259.7 L974 268.0 L976 271.9 L978 274.1 L980 275.5 L982 273.5 L984 273.2 L986 262.4 L988 259.1 L990 258.8 L992 275.5 L994 283.1 L996 287.1 L998 289.7 L1000 290.6 L1002 288.4 L1004 286.3 L1006 280.8 L1008 277.4 L1010 274.8 L1012 272.6 L1014 259.8 L1016 255.0 L1018 268.9 L1020 275.1 L1022 278.2 L1024 280.1 L1026 271.1 L1028 268.2 L1030 280.6 L1032 289.8 L1034 296.5 L1036 296.4 L1038 297.2 L1040 296.7 L1042 296.9 L1044 297.3 L1046 296.6 L1048 296.9 L1050 296.7 L1052 296.7 L1054 297.3 L1056 296.4 L1058 296.8 L1060 296.4 L1062 288.6 L1064 279.3 L1066 271.7 L1068 271.0 L1070 271.3 L1072 271.0 L1074 271.5 L1076 271.3 L1078 271.2 L1080 270.3 L1082 270.4 L1084 271.4 L1086 270.9 L1088 271.8 L1090 279.9 L1092 288.9 L1094 297.4 L1096 297.7 L1098 297.3 L1100 297.7 L1102 296.9 L1104 296.6 L1106 287.4 L1108 281.6 L1110 268.2 L1112 270.4 L1114 271.6 L1116 262.8 L1118 259.5 L1120 258.4 L1122 254.2 L1124 252.7 L1126 252.4 L1128 256.2 L1130 257.9 L1132 258.2 L1134 259.9 L1136 260.4 L1138 260.5 L1140 257.1 L1142 255.7 L1144 255.0 L1146 267.1 L1148 271.8 L1150 262.3 L1152 259.1 L1154 258.2 L1156 258.1 L1158 260.2 L1160 261.4 L1162 262.2 L1164 258.5 L1166 257.3 L1168 272.0 L1170 285.7 L1172 296.5 L1174 297.3 L1176 297.4 L1178 297.6 L1180 296.7 L1182 291.8 L1184 280.4 L1186 288.8 L1188 297.8 L1190 296.5 L1192 296.6 L1194 297.2 L1196 297.2 L1198 297.2 L1200 297.5 L1202 297.5 L1204 297.1 L1206 296.7 L1208 296.5 L1210 297.3 L1212 296.2 L1214 297.1 L1216 296.8 L1218 297.3 L1220 296.5 L1222 297.8 L1224 297.6 L1226 297.7 L1228 297.7 L1230 296.9 L1232 296.4 L1234 296.3 L1236 297.4 L1238 297.4 L1240 296.8 L1242 297.6 L1244 296.4 L1246 297.3 L1248 296.9 L1250 297.2 L1252 297.2 L1254 297.2 L1256 297.6 L1258 296.3 L1260 296.8 L1262 297.2 L1264 297.1 L1266 296.9 L1268 297.2 L1270 290.4 L1272 285.0 L1274 288.5 L1276 292.9 L1278 296.6 L1280 295.2 L1282 292.4 L1284 290.9 L1286 287.8 L1288 286.4 L1290 284.6 L1292 282.7 L1294 281.8 L1296 280.2 L1298 281.0 L1300 280.3 L1302 273.3 L1304 265.9 L1306 260.1 L1308 252.6 L1310 250.8 L1312 251.3 L1314 252.4 L1316 252.9 L1318 252.7 L1320 253.9 L1322 255.0 L1324 255.3 L1326 257.0 L1328 257.0 L1330 258.0 L1332 258.7 L1334 258.0 L1336 258.2 L1338 257.3 L1340 258.4 L1342 257.8 L1344 257.4 L1346 259.8 L1348 263.9 L1350 267.9 L1352 266.1 L1354 265.3 L1356 264.1 L1358 262.6 L1360 262.3 L1362 268.4 L1364 276.3 L1366 283.3 L1368 290.6 L1370 297.4 L1372 297.3 L1374 297.3 L1376 297.7 L1378 296.9 L1380 296.3 L1382 297.6 L1384 297.3 L1386 296.7 L1388 297.1 L1390 297.7 L1392 297.6 L1394 297.7 L1396 296.7 L1398 297.2 L1400 297.2 L1402 297.7 L1404 296.8 L1406 297.6 L1408 297.5 L1410 297.4 L1412 296.4 L1414 297.3 L1416 297.7 L1418 296.8 L1420 297.6 L1422 297.3 L1424 297.5 L1426 286.7 L1428 265.3 L1430 266.2 L1432 287.2 L1434 297.5 L1436 297.2 L1438 297.3 L1440 297.6 L1442 297.7 L1444 296.5 L1446 296.3 L1448 297.2 L1450 296.8 L1452 297.6 L1454 296.9 L1456 297.6 L1458 296.3 L1460 296.6 L1462 296.5 L1464 297.8 L1466 296.3 L1468 296.2 L1470 297.1 L1472 297.1 L1474 296.8 L1476 297.2 L1478 293.1 L1480 283.8 L1482 265.3 L1484 259.2 L1486 256.9 L1488 261.4 L1490 295.9 L1492 299.0 L1494 299.0 L1496 299.0 L1498 299.0 L1500 299.0 L1502 296.2 L1504 296.4 L1506 295.0 L1508 292.6 L1510 272.1 L1512 259.9 L1514 261.5 L1516 262.8 L1518 264.0 L1520 271.9 L1522 275.8 L1524 279.5 L1526 266.6 L1528 280.5 L1530 290.0 L1532 294.7 L1534 297.2 L1536 296.5 L1538 273.7 L1540 264.0 L1542 259.4 L1544 264.2 L1546 270.3 L1548 272.1 L1550 269.6 L1552 267.7 L1554 278.6 L1556 284.8 L1558 285.9 L1560 273.0 L1562 267.1 L1564 267.0 L1566 285.5 L1568 297.6 L1570 296.5 L1572 283.7 L1574 261.2 L1576 255.8 L1578 253.6 L1580 251.3 L1582 249.6 L1584 255.8 L1586 263.7 L1588 272.7 L1590 285.2 L1592 295.9 L1594 296.9 L1596 294.2 L1598 290.2 L1600 286.5 L1602 280.8 L1604 275.6 L1606 287.6 L1608 295.6 L1610 283.5 L1612 275.1 L1614 272.0 L1616 270.5 L1618 269.8 L1620 268.0 L1622 269.3 L1624 269.1 L1626 270.3 L1628 270.7 L1630 271.0 L1632 268.6 L1634 265.3 L1636 263.3 L1638 261.6 L1640 264.9 L1642 266.2 L1644 268.7 L1646 271.4 L1648 271.7 L1650 271.9 L1652 273.3 L1654 273.0 L1656 274.3 L1658 275.0 L1660 274.5 L1662 276.2 L1664 279.7 L1666 296.6 L1668 296.4 L1670 296.6 L1672 278.7 L1674 262.5 L1676 259.9 L1678 259.2 L1680 275.4 L1682 290.0 L1684 296.9 L1686 297.4 L1688 296.6 L1690 296.6 L1692 297.4 L1694 297.1 L1696 297.0 L1698 297.6 L1700 297.2 L1702 297.0 L1704 297.6 L1706 296.6 L1708 296.4 L1710 297.0 L1712 296.6 L1714 296.5 L1716 296.3 L1718 297.2 L1720 297.1 L1722 296.3 L1724 296.7 L1726 297.3 L1728 296.8 L1730 296.4 L1732 296.5 L1734 297.6 L1736 297.2 L1738 297.7 L1740 297.1 L1742 265.1 L1744 280.9 L1746 297.4 L1748 297.8 L1750 296.7 L1752 297.3 L1754 297.5 L1756 297.1 L1758 297.4 L1760 294.1 L1762 288.1 L1764 293.3 L1766 297.5 L1768 297.4 L1770 297.3 L1772 296.8 L1774 296.9 L1776 297.5 L1778 296.6 L1780 297.2 L1782 296.8 L1784 296.6 L1786 296.2 L1788 297.3 L1790 296.7 L1792 297.8 L1794 296.9 L1796 297.7 L1798 296.9 L1800 296.5 L1802 296.4 L1804 296.5 L1806 297.1 L1808 297.1 L1810 297.5 L1812 296.4 L1814 296.3 L1816 296.2 L1818 297.4 L1820 297.6 L1822 297.5 L1824 297.3 L1826 292.0 L1828 283.8 L1830 282.9 L1832 290.3 L1834 297.6 L1836 297.3 L1838 297.7 L1840 296.5 L1842 297.3 L1844 297.8 L1846 297.5 L1848 297.3 L1850 297.4 L1852 297.3 L1854 297.6 L1856 288.8 L1858 269.4 L1860 283.7 L1862 296.6 L1864 296.2 L1866 297.5 L1868 297.1 L1870 297.1 L1872 296.9 L1874 296.2 L1876 296.3 L1878 297.3 L1880 296.3 L1882 297.1 L1884 297.8 L1886 296.3 L1888 296.2 L1890 299.0 L1892 299.0 L1894 299.0 L1896 299.0 L1898 299.0 L1900 299.0 L1902 295.4 L1904 296.1 L1906 296.3 L1908 296.7 L1910 297.7 L1912 296.3 L1914 297.7 L1916 297.4 L1918 297.7 L1920 297.8 L1922 296.5 L1924 297.7 L1926 296.4 L1928 296.9 L1930 288.0 L1932 270.5 L1934 282.7 L1936 297.3 L1938 297.3 L1940 297.3 L1942 297.3 L1944 297.1 L1946 297.5 L1948 297.2 L1950 297.2 L1952 296.6 L1954 296.9 L1956 297.3 L1958 297.6 L1960 297.4 L1962 297.2 L1964 296.5 L1966 296.8 L1968 297.6 L1970 297.7 L1972 297.5 L1974 297.4 L1976 296.9 L1978 297.1 L1980 291.9 L1982 281.4 L1984 270.1 L1986 278.9 L1988 288.0 L1990 296.7 L1992 296.6 L1994 297.1 L1996 296.7 L1998 297.7 L2000 297.0 L2002 284.6 L2004 274.2 L2006 261.3 L2008 250.1 L2010 250.5 L2012 250.7 L2014 249.4 L2016 250.2 L2018 250.3 L2020 250.2 L2022 250.7 L2024 249.6 L2026 249.8 L2028 250.3 L2030 250.1 L2032 249.2 L2034 250.7 L2036 249.3 L2038 250.7 L2040 247.1 L2042 246.9 L2044 247.4 L2046 248.5 L2048 249.5 L2050 261.1 L2052 266.4 L2054 269.1 L2056 264.0 L2058 262.5 L2060 271.3 L2062 269.4 L2064 256.1 L2066 256.4 L2068 258.7 L2070 261.8 L2072 265.3 L2074 267.6 L2076 270.1 L2078 269.5 L2080 270.5 L2082 270.7 L2084 270.7 L2086 269.4 L2088 270.4 L2090 270.1 L2092 269.4 L2094 263.9 L2096 258.4 L2098 252.4 L2100 258.5 L2102 264.5 L2104 271.5 L2106 269.7 L2108 259.8 L2110 250.7 L2112 249.8 L2114 249.4 L2116 248.0 L2118 248.1 L2120 248.4 L2122 247.4 L2124 247.2 L2126 247.7 L2128 247.4 L2130 248.1 L2132 247.7 L2134 248.5 L2136 248.4 L2138 247.8 L2140 248.7 L2142 248.6 L2144 248.7 L2146 248.7 L2148 248.6 L2150 248.7 L2152 250.3 L2154 253.6 L2156 254.8 L2158 257.9 L2160 259.2 L2162 268.0 L2164 274.7 L2166 280.9 L2168 289.5 L2170 296.2 L2172 280.5 L2174 265.3 L2176 250.7 L2178 250.7 L2180 249.4 L2182 249.6 L2184 249.5 L2186 249.3 L2188 249.4 L2190 250.1 L2192 250.2 L2194 250.4 L2196 250.5 L2198 250.3 L2200 250.7 L2202 250.1 L2204 252.4 L2206 252.4 L2208 253.7 L2210 254.3 L2212 255.4 L2214 255.7 L2216 255.4 L2218 256.4 L2220 256.1 L2222 257.9 L2224 258.2 L2226 259.4 L2228 262.8 L2230 266.2 L2232 269.3 L2234 273.4 L2236 274.8 L2238 273.3 L2240 272.4 L2242 272.1 L2244 270.8 L2246 265.4 L2248 257.6 L2250 250.6 L2252 262.0 L2254 272.9 L2256 285.2 L2258 296.8 L2260 297.2 L2262 297.6 L2264 297.5 L2266 296.7 L2268 296.6 L2270 296.4 L2272 296.6 L2274 297.2 L2276 297.3 L2278 297.0 L2280 297.4 L2282 285.8 L2284 275.3 L2286 264.8 L2288 266.5 L2290 278.7 L2292 290.6 L2294 297.6 L2296 296.6 L2298 297.7 L2300 297.6 L2302 296.5 L2304 297.3 L2306 297.2 L2308 296.6 L2310 296.6 L2312 296.4 L2314 296.8 L2316 297.4 L2318 296.7 L2320 297.5 L2322 296.8 L2324 297.3 L2326 296.7 L2328 297.2 L2330 297.2 L2332 297.0 L2334 296.7 L2336 287.3 L2338 269.5 L2340 283.6 L2342 297.0 L2344 296.3 L2346 297.3 L2348 296.3 L2350 296.4 L2352 297.6 L2354 296.9 L2356 296.9 L2358 297.2 L2360 297.0 L2362 286.7 L2364 277.7 L2366 277.2 L2368 287.0 L2370 296.9 L2372 297.1 L2374 297.5 L2376 296.8 L2378 296.6 L2380 296.4 L2382 297.6 L2384 297.8 L2386 291.9 L2388 280.3 L2390 269.1 L2392 257.9 L2394 257.7 L2396 271.0 L2398 283.9 L2400 296.5 L2402 297.0 L2404 297.7 L2406 297.4 L2408 299.0 L2410 292.8 L2412 283.0 L2414 272.7 L2416 267.9 L2418 272.7 L2420 278.0 L2422 283.6 L2424 287.9 L2426 293.0 L2428 298.5 L2430 298.4 L2432 296.8 L2434 296.8 L2436 297.5 L2438 296.5 L2440 297.0 L2442 290.6 L2444 285.3 L2446 279.5 L2448 274.7 L2450 268.6 L2452 261.9 L2454 256.1 L2456 250.4 L2458 253.4 L2460 264.6 L2462 275.9 L2464 286.1 L2466 296.4 L2468 288.6 L2470 281.6 L2472 274.0 L2474 266.4 L2476 260.9 L2478 260.5 L2480 267.0 L2482 269.6 L2484 266.4 L2486 265.1 L2488 276.3 L2490 280.9 L2492 274.4 L2494 271.8 L2496 270.4 L2498 269.2 L2500 264.3 L2502 261.8 L2504 260.4 L2506 259.3 L2508 258.7 L2510 258.0 L2512 271.7 L2514 284.8 L2516 298.3 L2518 287.5 L2520 275.2 L2522 264.9 L2524 263.6 L2526 262.2 L2528 260.0 L2530 259.2 L2532 257.2 L2534 255.7 L2536 254.1 L2538 252.5 L2540 249.7 L2542 248.8 L2544 247.4" fill="none" stroke="#1c71d8" stroke-width="2.3" stroke-dasharray="2.2 4" stroke-dashoffset="5.7"/><path d="M658 258.7 L660 260.7 L662 261.8 L664 262.5 L666 259.1 L668 258.0 L670 261.4 L672 271.7 L674 275.4 L676 282.3 L678 297.8 L680 299.0 L682 295.6 L684 296.3 L686 296.5 L688 296.6 L690 297.8 L692 297.7 L694 296.5 L696 296.7 L698 283.9 L700 259.9 L702 255.6 L704 252.7 L706 262.3 L708 284.5 L710 296.3 L712 297.5 L714 296.4 L716 296.5 L718 297.1 L720 296.7 L722 296.3 L724 297.2 L726 297.1 L728 297.5 L730 296.4 L732 297.4 L734 296.9 L736 297.5 L738 297.0 L740 296.4 L742 296.6 L744 296.4 L746 297.6 L748 296.5 L750 297.1 L752 296.3 L754 296.9 L756 296.5 L758 296.9 L760 296.3 L762 296.3 L764 285.4 L766 275.3 L768 285.4 L770 297.0 L772 293.7 L774 290.1 L776 287.3 L778 283.4 L780 279.5 L782 286.7 L784 292.8 L786 293.9 L788 285.7 L790 280.1 L792 272.9 L794 265.5 L796 258.7 L798 254.5 L800 251.7 L802 251.3 L804 250.0 L806 250.5 L808 252.5 L810 253.5 L812 253.1 L814 254.1 L816 265.1 L818 285.8 L820 287.0 L822 265.2 L824 261.9 L826 260.5 L828 257.0 L830 254.3 L832 265.7 L834 275.9 L836 287.0 L838 297.8 L840 278.3 L842 260.1 L844 257.9 L846 256.2 L848 255.6 L850 276.6 L852 297.1 L854 297.3 L856 297.4 L858 297.2 L860 296.8 L862 297.3 L864 297.0 L866 297.7 L868 297.0 L870 297.3 L872 296.2 L874 278.1 L876 257.7 L878 276.8 L880 296.6 L882 296.3 L884 296.3 L886 296.3 L888 297.4 L890 297.7 L892 297.2 L894 297.7 L896 296.9 L898 296.3 L900 297.0 L902 297.0 L904 296.3 L906 297.1 L908 296.5 L910 297.8 L912 296.5 L914 296.6 L916 297.6 L918 296.6 L920 297.0 L922 291.4 L924 280.8 L926 278.9 L928 288.2 L930 296.4 L932 296.2 L934 294.0 L936 293.2 L938 291.6 L940 290.9 L942 289.6 L944 286.3 L946 281.9 L948 278.3 L950 275.3 L952 286.6 L954 296.6 L956 289.4 L958 281.5 L960 273.0 L962 265.6 L964 260.6 L966 255.8 L968 251.6 L970 252.8 L972 253.9 L974 254.9 L976 253.8 L978 254.0 L980 254.6 L982 268.3 L984 274.3 L986 277.6 L988 279.4 L990 281.1 L992 274.9 L994 273.4 L996 272.8 L998 273.4 L1000 274.7 L1002 272.5 L1004 265.4 L1006 261.4 L1008 258.5 L1010 256.2 L1012 268.6 L1014 272.4 L1016 270.9 L1018 271.6 L1020 272.5 L1022 269.5 L1024 269.0 L1026 276.1 L1028 279.7 L1030 294.6 L1032 289.5 L1034 297.7 L1036 296.7 L1038 297.4 L1040 297.2 L1042 296.4 L1044 296.4 L1046 297.1 L1048 296.3 L1050 296.8 L1052 296.6 L1054 297.2 L1056 297.5 L1058 296.5 L1060 296.5 L1062 288.8 L1064 280.4 L1066 271.7 L1068 270.7 L1070 271.6 L1072 270.6 L1074 271.3 L1076 270.7 L1078 271.3 L1080 271.2 L1082 271.4 L1084 271.2 L1086 271.1 L1088 271.4 L1090 279.5 L1092 288.6 L1094 297.0 L1096 297.3 L1098 296.5 L1100 296.4 L1102 296.7 L1104 296.6 L1106 288.3 L1108 272.4 L1110 255.3 L1112 256.1 L1114 256.7 L1116 252.6 L1118 251.2 L1120 253.7 L1122 254.9 L1124 255.6 L1126 265.4 L1128 269.6 L1130 266.9 L1132 265.5 L1134 268.0 L1136 268.8 L1138 269.1 L1140 270.1 L1142 270.4 L1144 270.4 L1146 258.8 L1148 254.0 L1150 252.0 L1152 255.0 L1154 256.6 L1156 255.6 L1158 255.5 L1160 260.1 L1162 262.3 L1164 263.4 L1166 264.2 L1168 275.5 L1170 287.8 L1172 297.2 L1174 296.3 L1176 297.0 L1178 297.5 L1180 297.3 L1182 292.0 L1184 279.5 L1186 288.7 L1188 296.5 L1190 297.8 L1192 296.8 L1194 297.2 L1196 296.7 L1198 297.2 L1200 297.5 L1202 297.3 L1204 296.4 L1206 297.7 L1208 296.4 L1210 297.7 L1212 297.1 L1214 296.5 L1216 297.6 L1218 297.8 L1220 296.3 L1222 297.7 L1224 297.1 L1226 297.7 L1228 297.5 L1230 297.1 L1232 297.5 L1234 297.1 L1236 296.4 L1238 297.6 L1240 297.3 L1242 296.3 L1244 296.8 L1246 297.4 L1248 296.4 L1250 296.2 L1252 297.6 L1254 296.8 L1256 296.4 L1258 297.4 L1260 297.1 L1262 297.6 L1264 296.6 L1266 296.5 L1268 297.1 L1270 291.0 L1272 285.2 L1274 289.6 L1276 293.2 L1278 297.0 L1280 294.4 L1282 292.8 L1284 290.5 L1286 288.7 L1288 285.6 L1290 284.1 L1292 281.3 L1294 281.3 L1296 281.3 L1298 281.0 L1300 280.1 L1302 273.0 L1304 267.2 L1306 259.8 L1308 252.6 L1310 250.4 L1312 250.5 L1314 251.6 L1316 252.6 L1318 254.0 L1320 253.9 L1322 254.3 L1324 256.0 L1326 256.3 L1328 257.4 L1330 258.2 L1332 258.1 L1334 258.0 L1336 258.0 L1338 258.5 L1340 257.8 L1342 257.9 L1344 257.3 L1346 260.5 L1348 263.4 L1350 268.4 L1352 266.5 L1354 265.1 L1356 264.9 L1358 263.4 L1360 261.8 L1362 268.9 L1364 275.2 L1366 282.6 L1368 290.7 L1370 297.4 L1372 297.2 L1374 297.7 L1376 297.0 L1378 297.7 L1380 297.0 L1382 297.1 L1384 296.3 L1386 297.4 L1388 297.4 L1390 296.7 L1392 297.4 L1394 297.2 L1396 296.6 L1398 296.9 L1400 297.6 L1402 297.7 L1404 296.3 L1406 296.6 L1408 296.8 L1410 297.4 L1412 296.3 L1414 297.0 L1416 296.5 L1418 297.3 L1420 297.2 L1422 296.3 L1424 297.6 L1426 286.8 L1428 266.1 L1430 265.5 L1432 286.4 L1434 297.5 L1436 297.6 L1438 296.3 L1440 297.3 L1442 297.5 L1444 296.5 L1446 297.4 L1448 297.2 L1450 296.6 L1452 297.7 L1454 297.8 L1456 297.1 L1458 297.3 L1460 296.3 L1462 297.1 L1464 296.6 L1466 296.6 L1468 297.5 L1470 297.0 L1472 296.2 L1474 297.0 L1476 296.4 L1478 293.1 L1480 283.5 L1482 265.2 L1484 261.1 L1486 259.6 L1488 264.4 L1490 289.9 L1492 299.0 L1494 296.5 L1496 282.4 L1498 296.4 L1500 299.0 L1502 295.6 L1504 296.5 L1506 294.1 L1508 291.8 L1510 272.3 L1512 260.3 L1514 259.1 L1516 259.4 L1518 260.2 L1520 271.1 L1522 276.2 L1524 266.3 L1526 266.5 L1528 279.5 L1530 290.2 L1532 295.8 L1534 296.5 L1536 296.5 L1538 272.5 L1540 259.9 L1542 253.8 L1544 257.9 L1546 269.5 L1548 273.5 L1550 271.9 L1552 270.3 L1554 272.0 L1556 274.7 L1558 274.3 L1560 272.9 L1562 268.2 L1564 268.5 L1566 285.8 L1568 296.4 L1570 297.8 L1572 284.0 L1574 262.1 L1576 256.0 L1578 253.3 L1580 251.8 L1582 250.3 L1584 254.7 L1586 264.4 L1588 273.4 L1590 284.8 L1592 296.5 L1594 296.0 L1596 293.4 L1598 290.4 L1600 285.6 L1602 280.9 L1604 275.8 L1606 287.8 L1608 295.4 L1610 283.7 L1612 275.1 L1614 271.8 L1616 270.3 L1618 270.4 L1620 269.0 L1622 269.0 L1624 269.3 L1626 270.5 L1628 270.0 L1630 271.5 L1632 268.9 L1634 266.3 L1636 264.1 L1638 262.1 L1640 264.5 L1642 266.6 L1644 269.3 L1646 271.7 L1648 272.1 L1650 271.8 L1652 273.3 L1654 272.7 L1656 274.3 L1658 274.1 L1660 274.8 L1662 275.7 L1664 279.8 L1666 297.3 L1668 296.8 L1670 296.6 L1672 277.9 L1674 265.4 L1676 264.0 L1678 263.8 L1680 280.2 L1682 298.6 L1684 297.2 L1686 296.7 L1688 296.4 L1690 297.2 L1692 297.7 L1694 297.0 L1696 296.5 L1698 297.2 L1700 296.5 L1702 297.2 L1704 297.4 L1706 296.5 L1708 296.7 L1710 296.9 L1712 297.3 L1714 297.3 L1716 297.7 L1718 297.2 L1720 297.7 L1722 296.5 L1724 296.6 L1726 297.8 L1728 297.5 L1730 296.8 L1732 296.3 L1734 296.6 L1736 296.9 L1738 296.2 L1740 297.2 L1742 265.7 L1744 280.7 L1746 296.8 L1748 296.6 L1750 296.8 L1752 297.2 L1754 296.7 L1756 296.3 L1758 296.3 L1760 294.7 L1762 288.3 L1764 291.9 L1766 296.9 L1768 297.4 L1770 296.8 L1772 297.3 L1774 297.8 L1776 296.8 L1778 296.9 L1780 296.4 L1782 297.3 L1784 297.0 L1786 297.1 L1788 296.7 L1790 297.2 L1792 297.2 L1794 297.7 L1796 297.4 L1798 296.3 L1800 296.4 L1802 296.8 L1804 296.5 L1806 296.5 L1808 296.5 L1810 297.5 L1812 296.4 L1814 297.5 L1816 297.0 L1818 297.4 L1820 296.9 L1822 296.6 L1824 296.8 L1826 293.4 L1828 284.7 L1830 283.6 L1832 290.1 L1834 297.4 L1836 296.4 L1838 296.9 L1840 296.8 L1842 296.9 L1844 297.5 L1846 296.5 L1848 296.7 L1850 297.1 L1852 296.7 L1854 297.6 L1856 287.9 L1858 269.2 L1860 283.1 L1862 296.6 L1864 296.9 L1866 296.2 L1868 297.7 L1870 296.9 L1872 297.3 L1874 296.9 L1876 296.9 L1878 296.7 L1880 297.6 L1882 296.4 L1884 297.0 L1886 296.6 L1888 296.7 L1890 299.0 L1892 299.0 L1894 299.0 L1896 299.0 L1898 299.0 L1900 299.0 L1902 299.0 L1904 298.8 L1906 296.9 L1908 297.4 L1910 297.0 L1912 296.8 L1914 297.3 L1916 297.1 L1918 297.2 L1920 297.7 L1922 297.3 L1924 296.5 L1926 296.4 L1928 296.8 L1930 288.6 L1932 270.0 L1934 283.3 L1936 297.5 L1938 296.3 L1940 296.4 L1942 297.5 L1944 296.3 L1946 297.0 L1948 297.3 L1950 297.1 L1952 297.1 L1954 297.5 L1956 297.4 L1958 296.6 L1960 297.4 L1962 296.7 L1964 297.3 L1966 297.6 L1968 297.5 L1970 297.2 L1972 297.2 L1974 297.4 L1976 297.3 L1978 297.1 L1980 292.1 L1982 281.2 L1984 269.7 L1986 278.9 L1988 287.7 L1990 297.2 L1992 297.4 L1994 296.8 L1996 297.3 L1998 296.7 L2000 297.2 L2002 284.9 L2004 273.8 L2006 261.3 L2008 250.2 L2010 249.3 L2012 250.2 L2014 249.3 L2016 249.9 L2018 250.6 L2020 250.3 L2022 250.3 L2024 250.3 L2026 250.5 L2028 249.7 L2030 250.1 L2032 249.9 L2034 249.3 L2036 249.5 L2038 250.4 L2040 250.0 L2042 251.0 L2044 252.6 L2046 253.8 L2048 254.9 L2050 267.3 L2052 272.9 L2054 265.7 L2056 263.4 L2058 263.1 L2060 263.5 L2062 256.3 L2064 250.4 L2066 258.0 L2068 263.3 L2070 267.6 L2072 264.7 L2074 268.5 L2076 270.4 L2078 269.8 L2080 269.6 L2082 270.1 L2084 269.7 L2086 270.0 L2088 269.8 L2090 270.8 L2092 270.7 L2094 264.3 L2096 258.6 L2098 252.2 L2100 258.4 L2102 264.9 L2104 271.5 L2106 270.1 L2108 259.3 L2110 249.3 L2112 250.4 L2114 248.7 L2116 248.3 L2118 248.7 L2120 248.0 L2122 248.4 L2124 247.2 L2126 247.2 L2128 247.8 L2130 248.5 L2132 247.6 L2134 247.9 L2136 248.5 L2138 248.4 L2140 248.0 L2142 247.4 L2144 247.4 L2146 247.5 L2148 247.9 L2150 248.8 L2152 249.9 L2154 253.1 L2156 255.6 L2158 257.5 L2160 260.5 L2162 266.6 L2164 275.2 L2166 280.9 L2168 288.6 L2170 295.3 L2172 280.2 L2174 264.6 L2176 250.1 L2178 249.7 L2180 250.8 L2182 250.0 L2184 249.4 L2186 250.6 L2188 249.3 L2190 250.1 L2192 249.7 L2194 249.6 L2196 250.0 L2198 249.4 L2200 250.0 L2202 250.9 L2204 251.9 L2206 252.9 L2208 252.6 L2210 254.7 L2212 254.8 L2214 255.4 L2216 255.2 L2218 256.2 L2220 256.5 L2222 257.8 L2224 258.0 L2226 260.3 L2228 262.7 L2230 266.0 L2232 269.8 L2234 272.6 L2236 273.9 L2238 273.3 L2240 273.3 L2242 272.0 L2244 270.1 L2246 265.2 L2248 257.4 L2250 249.4 L2252 262.5 L2254 273.2 L2256 284.9 L2258 297.6 L2260 297.0 L2262 297.1 L2264 296.3 L2266 296.3 L2268 296.6 L2270 296.7 L2272 296.9 L2274 297.2 L2276 297.1 L2278 296.8 L2280 296.2 L2282 285.9 L2284 276.6 L2286 264.9 L2288 266.6 L2290 278.3 L2292 291.0 L2294 296.4 L2296 297.4 L2298 296.8 L2300 297.5 L2302 297.6 L2304 296.6 L2306 297.3 L2308 297.8 L2310 296.9 L2312 296.3 L2314 297.1 L2316 296.7 L2318 296.6 L2320 297.8 L2322 296.4 L2324 296.6 L2326 296.9 L2328 296.6 L2330 296.5 L2332 296.6 L2334 297.0 L2336 288.3 L2338 270.7 L2340 283.4 L2342 296.3 L2344 297.6 L2346 297.2 L2348 297.7 L2350 297.5 L2352 296.3 L2354 297.3 L2356 296.8 L2358 297.2 L2360 296.3 L2362 286.3 L2364 277.0 L2366 277.0 L2368 287.7 L2370 296.6 L2372 297.1 L2374 297.1 L2376 296.9 L2378 297.2 L2380 297.3 L2382 297.0 L2384 296.8 L2386 290.8 L2388 279.4 L2390 269.0 L2392 257.6 L2394 258.3 L2396 271.7 L2398 283.9 L2400 296.7 L2402 296.9 L2404 297.7 L2406 296.9 L2408 299.0 L2410 297.8 L2412 288.6 L2414 271.8 L2416 266.8 L2418 271.5 L2420 284.8 L2422 293.5 L2424 292.4 L2426 295.3 L2428 299.0 L2430 299.0 L2432 296.9 L2434 297.3 L2436 296.9 L2438 296.5 L2440 297.0 L2442 290.8 L2444 285.6 L2446 280.2 L2448 274.1 L2450 267.8 L2452 261.7 L2454 256.0 L2456 251.3 L2458 254.2 L2460 265.1 L2462 275.0 L2464 286.9 L2466 297.5 L2468 289.1 L2470 280.8 L2472 273.8 L2474 266.4 L2476 265.6 L2478 267.0 L2480 267.6 L2482 267.8 L2484 266.1 L2486 265.5 L2488 265.2 L2490 270.5 L2492 272.6 L2494 273.4 L2496 273.3 L2498 271.8 L2500 270.7 L2502 269.8 L2504 269.0 L2506 266.5 L2508 265.1 L2510 271.1 L2512 287.5 L2514 299.0 L2516 299.0 L2518 293.3 L2520 275.4 L2522 265.2 L2524 263.3 L2526 262.4 L2528 259.5 L2530 259.2 L2532 256.8 L2534 255.9 L2536 253.8 L2538 252.7 L2540 249.7 L2542 248.2 L2544 246.5" fill="none" stroke="#613583" stroke-width="2.3" stroke-dasharray="2.2 5" stroke-dashoffset="7.6"/><path d="M658 254.3 L660 254.6 L662 254.6 L664 255.0 L666 255.4 L668 255.9 L670 257.5 L672 267.1 L674 276.4 L676 297.0 L678 299.0 L680 299.0 L682 296.4 L684 297.2 L686 297.5 L688 297.0 L690 297.6 L692 297.3 L694 297.3 L696 296.5 L698 284.4 L700 260.7 L702 256.8 L704 252.7 L706 261.0 L708 285.0 L710 297.5 L712 297.7 L714 296.8 L716 297.4 L718 297.3 L720 296.5 L722 297.5 L724 297.5 L726 297.7 L728 297.7 L730 297.6 L732 297.1 L734 297.2 L736 297.0 L738 297.2 L740 296.8 L742 296.7 L744 297.6 L746 297.5 L748 297.0 L750 297.6 L752 297.1 L754 296.8 L756 297.3 L758 297.1 L760 297.7 L762 297.1 L764 286.6 L766 274.8 L768 285.8 L770 297.6 L772 294.0 L774 290.3 L776 286.3 L778 283.6 L780 279.5 L782 287.2 L784 293.5 L786 293.9 L788 286.5 L790 279.0 L792 271.8 L794 265.8 L796 257.8 L798 254.3 L800 252.2 L802 251.1 L804 250.7 L806 251.0 L808 251.8 L810 253.5 L812 253.1 L814 254.0 L816 266.0 L818 286.4 L820 286.5 L822 264.3 L824 262.9 L826 259.7 L828 257.0 L830 255.4 L832 266.1 L834 275.5 L836 287.3 L838 297.0 L840 279.2 L842 260.5 L844 258.0 L846 256.1 L848 255.5 L850 276.7 L852 297.0 L854 297.6 L856 297.4 L858 297.2 L860 297.7 L862 296.4 L864 296.5 L866 297.3 L868 297.2 L870 296.9 L872 297.6 L874 277.2 L876 257.6 L878 277.9 L880 296.8 L882 296.2 L884 296.7 L886 296.8 L888 297.2 L890 296.4 L892 296.6 L894 297.7 L896 297.5 L898 296.3 L900 297.3 L902 296.5 L904 297.7 L906 297.8 L908 296.3 L910 296.3 L912 297.4 L914 296.3 L916 297.5 L918 297.4 L920 297.3 L922 291.4 L924 280.7 L926 278.9 L928 287.4 L930 297.2 L932 295.2 L934 295.4 L936 293.9 L938 291.8 L940 290.8 L942 290.3 L944 286.0 L946 282.3 L948 278.9 L950 274.3 L952 285.9 L954 297.1 L956 289.8 L958 281.4 L960 273.5 L962 265.0 L964 256.9 L966 250.6 L968 246.0 L970 246.0 L972 252.9 L974 256.4 L976 258.3 L978 259.6 L980 259.7 L982 260.3 L984 261.1 L986 262.3 L988 260.9 L990 261.3 L992 262.4 L994 263.8 L996 264.1 L998 265.1 L1000 266.5 L1002 264.4 L1004 271.1 L1006 272.5 L1008 270.5 L1010 268.4 L1012 266.4 L1014 260.9 L1016 259.1 L1018 259.6 L1020 260.4 L1022 258.9 L1024 259.0 L1026 259.7 L1028 260.6 L1030 283.4 L1032 289.6 L1034 296.5 L1036 296.8 L1038 296.7 L1040 297.7 L1042 296.5 L1044 297.0 L1046 297.8 L1048 296.9 L1050 296.9 L1052 296.9 L1054 296.7 L1056 296.7 L1058 297.5 L1060 296.2 L1062 287.6 L1064 280.2 L1066 271.4 L1068 270.9 L1070 271.0 L1072 271.0 L1074 270.6 L1076 270.9 L1078 270.8 L1080 271.1 L1082 270.7 L1084 271.1 L1086 270.3 L1088 271.8 L1090 278.9 L1092 288.3 L1094 296.8 L1096 296.4 L1098 297.8 L1100 296.9 L1102 296.5 L1104 296.7 L1106 287.5 L1108 283.2 L1110 270.4 L1112 273.0 L1114 269.7 L1116 268.6 L1118 268.4 L1120 268.6 L1122 266.7 L1124 266.2 L1126 266.2 L1128 266.5 L1130 259.8 L1132 256.8 L1134 255.5 L1136 253.6 L1138 252.7 L1140 252.3 L1142 256.0 L1144 257.4 L1146 257.9 L1148 253.5 L1150 251.6 L1152 253.8 L1154 254.9 L1156 255.7 L1158 263.7 L1160 267.3 L1162 269.0 L1164 270.0 L1166 266.5 L1168 277.9 L1170 290.3 L1172 296.8 L1174 297.6 L1176 296.9 L1178 296.8 L1180 297.0 L1182 291.9 L1184 280.2 L1186 288.9 L1188 297.5 L1190 296.8 L1192 297.4 L1194 296.4 L1196 297.0 L1198 296.9 L1200 296.8 L1202 296.5 L1204 297.5 L1206 296.7 L1208 296.8 L1210 296.4 L1212 297.6 L1214 297.6 L1216 296.5 L1218 296.8 L1220 296.7 L1222 296.5 L1224 297.5 L1226 297.2 L1228 297.7 L1230 297.3 L1232 296.7 L1234 297.5 L1236 296.4 L1238 297.1 L1240 297.0 L1242 296.3 L1244 296.7 L1246 297.0 L1248 296.4 L1250 296.3 L1252 297.2 L1254 297.8 L1256 297.1 L1258 297.8 L1260 297.0 L1262 296.4 L1264 296.5 L1266 296.9 L1268 297.6 L1270 291.5 L1272 285.8 L1274 289.1 L1276 293.4 L1278 297.1 L1280 294.3 L1282 292.8 L1284 290.2 L1286 288.9 L1288 286.8 L1290 283.7 L1292 281.4 L1294 281.2 L1296 280.2 L1298 280.0 L1300 280.7 L1302 274.0 L1304 266.6 L1306 260.6 L1308 252.8 L1310 251.2 L1312 251.3 L1314 252.1 L1316 252.3 L1318 252.6 L1320 254.3 L1322 255.2 L1324 256.0 L1326 256.9 L1328 257.9 L1330 257.2 L1332 258.3 L1334 257.3 L1336 258.6 L1338 258.0 L1340 257.2 L1342 257.8 L1344 258.5 L1346 260.6 L1348 264.7 L1350 268.0 L1352 267.1 L1354 265.9 L1356 264.4 L1358 263.6 L1360 261.5 L1362 268.6 L1364 276.2 L1366 283.4 L1368 290.8 L1370 296.3 L1372 297.8 L1374 296.7 L1376 296.8 L1378 297.3 L1380 297.8 L1382 296.5 L1384 296.8 L1386 297.6 L1388 297.6 L1390 296.9 L1392 296.6 L1394 297.5 L1396 296.5 L1398 296.8 L1400 296.2 L1402 296.6 L1404 296.9 L1406 297.0 L1408 297.4 L1410 297.2 L1412 296.6 L1414 296.8 L1416 296.6 L1418 296.4 L1420 296.5 L1422 297.7 L1424 297.5 L1426 287.1 L1428 265.9 L1430 265.1 L1432 286.9 L1434 297.1 L1436 297.5 L1438 297.1 L1440 297.2 L1442 296.4 L1444 297.6 L1446 297.3 L1448 297.1 L1450 296.6 L1452 297.3 L1454 296.9 L1456 296.6 L1458 297.4 L1460 297.3 L1462 297.5 L1464 297.8 L1466 296.8 L1468 297.2 L1470 296.3 L1472 297.3 L1474 297.5 L1476 296.9 L1478 292.9 L1480 283.4 L1482 265.6 L1484 265.1 L1486 265.1 L1488 270.6 L1490 292.1 L1492 299.0 L1494 299.0 L1496 293.3 L1498 299.0 L1500 299.0 L1502 296.0 L1504 296.4 L1506 294.4 L1508 292.0 L1510 270.9 L1512 258.3 L1514 260.4 L1516 261.9 L1518 257.9 L1520 256.9 L1522 257.2 L1524 260.0 L1526 266.5 L1528 279.4 L1530 290.7 L1532 295.9 L1534 296.3 L1536 295.4 L1538 272.9 L1540 270.3 L1542 268.3 L1544 274.1 L1546 267.8 L1548 264.6 L1550 262.4 L1552 260.6 L1554 263.9 L1556 267.1 L1558 274.5 L1560 276.3 L1562 276.2 L1564 278.5 L1566 286.4 L1568 296.4 L1570 297.3 L1572 284.3 L1574 262.1 L1576 256.3 L1578 254.2 L1580 251.5 L1582 250.6 L1584 255.1 L1586 263.3 L1588 272.7 L1590 285.3 L1592 295.6 L1594 295.9 L1596 293.2 L1598 291.0 L1600 286.7 L1602 281.6 L1604 275.7 L1606 287.4 L1608 294.9 L1610 283.0 L1612 274.3 L1614 272.0 L1616 270.4 L1618 269.1 L1620 268.3 L1622 269.3 L1624 269.1 L1626 269.5 L1628 271.2 L1630 271.7 L1632 269.4 L1634 265.9 L1636 263.0 L1638 261.7 L1640 263.6 L1642 266.2 L1644 268.3 L1646 271.7 L1648 271.8 L1650 272.7 L1652 273.2 L1654 274.1 L1656 274.6 L1658 274.6 L1660 274.6 L1662 276.2 L1664 281.1 L1666 296.2 L1668 296.2 L1670 296.6 L1672 278.7 L1674 272.6 L1676 274.0 L1678 274.9 L1680 286.2 L1682 299.0 L1684 297.8 L1686 297.1 L1688 296.9 L1690 297.0 L1692 297.2 L1694 297.7 L1696 296.7 L1698 296.2 L1700 297.1 L1702 296.7 L1704 297.0 L1706 297.0 L1708 296.4 L1710 296.8 L1712 297.6 L1714 297.1 L1716 297.3 L1718 297.2 L1720 296.7 L1722 296.4 L1724 297.1 L1726 296.5 L1728 297.1 L1730 297.7 L1732 296.3 L1734 297.6 L1736 297.2 L1738 297.8 L1740 296.8 L1742 264.8 L1744 280.5 L1746 297.4 L1748 296.3 L1750 296.5 L1752 296.6 L1754 297.7 L1756 297.7 L1758 297.2 L1760 294.2 L1762 287.7 L1764 292.8 L1766 297.7 L1768 296.8 L1770 296.4 L1772 296.5 L1774 296.9 L1776 296.7 L1778 296.7 L1780 297.1 L1782 297.7 L1784 297.2 L1786 296.7 L1788 297.0 L1790 296.5 L1792 297.6 L1794 296.3 L1796 297.1 L1798 297.4 L1800 297.3 L1802 296.2 L1804 297.4 L1806 296.9 L1808 297.5 L1810 296.3 L1812 297.0 L1814 297.7 L1816 296.4 L1818 297.6 L1820 297.0 L1822 296.9 L1824 296.5 L1826 292.7 L1828 283.6 L1830 282.8 L1832 289.5 L1834 296.4 L1836 297.1 L1838 296.8 L1840 297.6 L1842 296.5 L1844 296.6 L1846 297.4 L1848 297.1 L1850 296.3 L1852 297.1 L1854 296.6 L1856 288.7 L1858 270.3 L1860 283.7 L1862 296.7 L1864 297.5 L1866 297.4 L1868 297.2 L1870 296.9 L1872 297.4 L1874 296.8 L1876 296.4 L1878 296.8 L1880 296.7 L1882 297.2 L1884 296.4 L1886 297.4 L1888 296.4 L1890 299.0 L1892 299.0 L1894 299.0 L1896 299.0 L1898 298.4 L1900 297.1 L1902 299.0 L1904 299.0 L1906 297.0 L1908 297.0 L1910 297.4 L1912 297.8 L1914 296.9 L1916 297.0 L1918 296.7 L1920 297.3 L1922 297.6 L1924 297.6 L1926 297.7 L1928 296.6 L1930 287.6 L1932 269.4 L1934 282.9 L1936 296.7 L1938 297.7 L1940 297.1 L1942 297.0 L1944 297.6 L1946 296.2 L1948 297.7 L1950 296.8 L1952 296.8 L1954 297.2 L1956 296.5 L1958 297.6 L1960 296.7 L1962 297.0 L1964 296.8 L1966 297.7 L1968 296.4 L1970 297.4 L1972 296.4 L1974 296.9 L1976 297.1 L1978 297.6 L1980 291.2 L1982 280.9 L1984 269.7 L1986 279.2 L1988 288.7 L1990 296.7 L1992 297.7 L1994 297.7 L1996 296.5 L1998 296.8 L2000 296.3 L2002 284.8 L2004 272.9 L2006 262.1 L2008 250.1 L2010 249.5 L2012 250.4 L2014 250.6 L2016 249.5 L2018 250.7 L2020 250.6 L2022 249.2 L2024 249.9 L2026 250.4 L2028 250.6 L2030 250.2 L2032 249.8 L2034 250.3 L2036 250.7 L2038 249.8 L2040 251.0 L2042 252.4 L2044 251.9 L2046 252.2 L2048 261.8 L2050 266.2 L2052 268.6 L2054 272.7 L2056 274.9 L2058 276.4 L2060 277.6 L2062 259.3 L2064 249.0 L2066 250.5 L2068 253.3 L2070 264.6 L2072 264.4 L2074 267.9 L2076 270.2 L2078 269.3 L2080 269.3 L2082 269.9 L2084 270.2 L2086 270.1 L2088 269.3 L2090 270.0 L2092 270.6 L2094 263.4 L2096 258.7 L2098 252.1 L2100 259.3 L2102 264.6 L2104 271.6 L2106 269.6 L2108 260.0 L2110 250.5 L2112 249.3 L2114 249.3 L2116 249.5 L2118 248.6 L2120 247.9 L2122 247.5 L2124 248.7 L2126 248.7 L2128 247.6 L2130 247.7 L2132 248.7 L2134 247.7 L2136 247.7 L2138 248.2 L2140 248.5 L2142 247.4 L2144 248.1 L2146 247.4 L2148 248.4 L2150 247.5 L2152 250.6 L2154 252.7 L2156 255.2 L2158 258.2 L2160 259.2 L2162 267.7 L2164 274.1 L2166 281.8 L2168 288.4 L2170 295.6 L2172 280.2 L2174 265.3 L2176 249.3 L2178 250.3 L2180 250.4 L2182 250.4 L2184 249.4 L2186 250.3 L2188 250.3 L2190 250.4 L2192 249.4 L2194 250.1 L2196 249.7 L2198 250.7 L2200 250.6 L2202 250.4 L2204 251.3 L2206 252.2 L2208 253.8 L2210 254.4 L2212 255.8 L2214 254.9 L2216 255.4 L2218 255.9 L2220 256.9 L2222 257.3 L2224 257.8 L2226 260.3 L2228 263.1 L2230 266.2 L2232 269.5 L2234 272.8 L2236 274.1 L2238 272.9 L2240 272.1 L2242 271.4 L2244 269.9 L2246 265.9 L2248 258.5 L2250 250.2 L2252 261.0 L2254 272.9 L2256 286.0 L2258 296.4 L2260 297.6 L2262 296.8 L2264 296.8 L2266 296.2 L2268 297.1 L2270 296.7 L2272 296.3 L2274 296.3 L2276 296.6 L2278 296.7 L2280 297.6 L2282 287.1 L2284 275.1 L2286 265.2 L2288 266.6 L2290 277.7 L2292 291.3 L2294 297.7 L2296 296.6 L2298 296.8 L2300 296.4 L2302 296.7 L2304 296.3 L2306 297.0 L2308 297.0 L2310 296.9 L2312 297.8 L2314 297.1 L2316 297.7 L2318 297.6 L2320 296.9 L2322 296.7 L2324 296.9 L2326 296.5 L2328 297.6 L2330 297.7 L2332 297.4 L2334 297.1 L2336 287.9 L2338 269.8 L2340 283.8 L2342 296.8 L2344 297.0 L2346 296.4 L2348 297.2 L2350 296.3 L2352 296.4 L2354 296.5 L2356 297.2 L2358 297.1 L2360 297.2 L2362 286.6 L2364 277.7 L2366 276.9 L2368 286.4 L2370 297.3 L2372 297.8 L2374 296.8 L2376 297.4 L2378 297.0 L2380 297.3 L2382 297.5 L2384 297.0 L2386 291.2 L2388 279.4 L2390 268.2 L2392 258.1 L2394 259.0 L2396 271.3 L2398 284.1 L2400 297.2 L2402 296.5 L2404 296.7 L2406 296.6 L2408 299.0 L2410 299.0 L2412 293.9 L2414 269.9 L2416 262.1 L2418 265.6 L2420 270.4 L2422 279.4 L2424 286.4 L2426 299.0 L2428 299.0 L2430 299.0 L2432 297.7 L2434 296.6 L2436 296.5 L2438 296.5 L2440 296.2 L2442 291.8 L2444 285.0 L2446 278.9 L2448 274.0 L2450 268.7 L2452 262.1 L2454 256.0 L2456 251.1 L2458 253.8 L2460 263.7 L2462 275.4 L2464 286.1 L2466 297.2 L2468 289.5 L2470 281.1 L2472 274.2 L2474 266.2 L2476 264.1 L2478 265.0 L2480 265.3 L2482 260.5 L2484 258.6 L2486 263.7 L2488 265.7 L2490 266.5 L2492 266.8 L2494 265.2 L2496 264.1 L2498 262.2 L2500 260.9 L2502 265.9 L2504 267.4 L2506 267.5 L2508 267.1 L2510 258.5 L2512 269.1 L2514 285.9 L2516 299.0 L2518 290.7 L2520 275.1 L2522 264.9 L2524 262.6 L2526 262.4 L2528 260.6 L2530 258.0 L2532 256.7 L2534 255.8 L2536 254.1 L2538 252.3 L2540 250.2 L2542 249.0 L2544 246.5" fill="none" stroke="#865e3c" stroke-width="2.3" stroke-dasharray="2.2 6" stroke-dashoffset="9.5"/><path d="M658 259.0 L660 261.1 L662 264.0 L664 265.5 L666 266.4 L668 271.5 L670 273.8 L672 286.2 L674 296.7 L676 299.0 L678 299.0 L680 299.0 L682 296.1 L684 297.4 L686 296.6 L688 297.0 L690 296.4 L692 296.6 L694 297.0 L696 296.3 L698 284.4 L700 260.5 L702 255.5 L704 251.9 L706 261.0 L708 285.6 L710 296.4 L712 296.5 L714 297.4 L716 296.9 L718 297.1 L720 297.2 L722 297.0 L724 296.9 L726 296.4 L728 296.4 L730 296.5 L732 296.6 L734 296.7 L736 297.6 L738 296.5 L740 296.4 L742 296.6 L744 296.4 L746 297.5 L748 297.7 L750 297.4 L752 297.7 L754 297.1 L756 296.9 L758 296.8 L760 297.2 L762 296.6 L764 286.0 L766 274.8 L768 286.3 L770 297.6 L772 293.9 L774 289.6 L776 286.9 L778 283.8 L780 280.1 L782 286.1 L784 293.0 L786 293.6 L788 286.8 L790 279.5 L792 272.9 L794 265.6 L796 259.0 L798 253.7 L800 253.0 L802 251.2 L804 249.8 L806 250.8 L808 251.8 L810 253.4 L812 254.0 L814 253.9 L816 265.9 L818 286.2 L820 286.9 L822 264.6 L824 261.9 L826 259.7 L828 257.4 L830 254.9 L832 265.6 L834 275.4 L836 286.1 L838 296.3 L840 279.3 L842 260.0 L844 258.0 L846 256.1 L848 255.2 L850 275.2 L852 296.5 L854 297.3 L856 297.0 L858 297.3 L860 297.6 L862 296.7 L864 297.4 L866 297.5 L868 297.5 L870 297.1 L872 297.4 L874 276.8 L876 257.5 L878 277.6 L880 297.1 L882 297.2 L884 296.9 L886 296.3 L888 296.7 L890 296.5 L892 297.3 L894 296.6 L896 297.4 L898 297.1 L900 296.8 L902 297.2 L904 297.6 L906 296.7 L908 296.3 L910 297.6 L912 296.7 L914 297.6 L916 297.0 L918 296.9 L920 297.5 L922 290.9 L924 281.1 L926 279.0 L928 288.6 L930 297.7 L932 296.4 L934 294.4 L936 294.2 L938 292.4 L940 290.8 L942 289.8 L944 285.6 L946 282.7 L948 278.7 L950 275.1 L952 286.6 L954 296.9 L956 288.2 L958 281.2 L960 272.3 L962 265.2 L964 264.6 L966 261.4 L968 257.2 L970 258.4 L972 261.7 L974 263.6 L976 264.9 L978 260.1 L980 258.8 L982 254.4 L984 253.2 L986 253.7 L988 254.9 L990 261.4 L992 264.9 L994 267.3 L996 270.5 L998 272.8 L1000 274.6 L1002 272.7 L1004 266.1 L1006 262.2 L1008 259.4 L1010 257.1 L1012 261.4 L1014 261.9 L1016 256.6 L1018 255.7 L1020 256.0 L1022 256.7 L1024 259.2 L1026 260.8 L1028 262.1 L1030 276.2 L1032 290.4 L1034 296.7 L1036 297.7 L1038 297.5 L1040 297.5 L1042 297.0 L1044 297.2 L1046 297.1 L1048 296.2 L1050 297.2 L1052 297.1 L1054 296.8 L1056 297.1 L1058 297.5 L1060 296.3 L1062 287.9 L1064 279.8 L1066 270.7 L1068 270.7 L1070 271.7 L1072 270.2 L1074 270.2 L1076 271.6 L1078 271.2 L1080 270.7 L1082 271.6 L1084 271.1 L1086 271.2 L1088 271.8 L1090 279.8 L1092 288.7 L1094 296.9 L1096 297.3 L1098 296.5 L1100 296.4 L1102 296.9 L1104 297.4 L1106 287.8 L1108 273.0 L1110 256.2 L1112 257.0 L1114 262.7 L1116 265.3 L1118 261.9 L1120 260.8 L1122 260.6 L1124 260.7 L1126 261.8 L1128 262.4 L1130 262.9 L1132 262.8 L1134 262.3 L1136 262.1 L1138 256.0 L1140 253.5 L1142 252.3 L1144 251.8 L1146 254.0 L1148 254.7 L1150 254.9 L1152 255.6 L1154 263.8 L1156 267.3 L1158 263.8 L1160 262.7 L1162 257.2 L1164 255.4 L1166 254.9 L1168 266.8 L1170 279.4 L1172 297.5 L1174 296.6 L1176 297.7 L1178 297.0 L1180 297.5 L1182 291.0 L1184 280.6 L1186 288.7 L1188 296.3 L1190 297.3 L1192 297.7 L1194 297.4 L1196 296.4 L1198 296.9 L1200 297.3 L1202 296.3 L1204 297.7 L1206 296.5 L1208 296.7 L1210 297.0 L1212 297.1 L1214 297.5 L1216 297.5 L1218 296.4 L1220 296.9 L1222 296.3 L1224 297.0 L1226 296.8 L1228 296.5 L1230 297.4 L1232 297.3 L1234 296.4 L1236 296.9 L1238 297.3 L1240 296.7 L1242 296.6 L1244 297.8 L1246 296.8 L1248 296.8 L1250 297.1 L1252 297.3 L1254 297.6 L1256 297.0 L1258 296.9 L1260 297.5 L1262 296.3 L1264 297.7 L1266 297.6 L1268 297.3 L1270 290.3 L1272 285.4 L1274 288.8 L1276 292.6 L1278 297.2 L1280 295.3 L1282 292.3 L1284 290.8 L1286 288.8 L1288 285.9 L1290 284.2 L1292 282.0 L1294 281.9 L1296 281.7 L1298 280.4 L1300 279.6 L1302 273.9 L1304 267.1 L1306 259.6 L1308 252.6 L1310 251.1 L1312 251.0 L1314 252.3 L1316 252.2 L1318 253.7 L1320 253.4 L1322 254.5 L1324 256.3 L1326 256.3 L1328 257.2 L1330 257.5 L1332 258.1 L1334 257.9 L1336 258.4 L1338 258.0 L1340 258.0 L1342 258.4 L1344 257.3 L1346 259.8 L1348 263.6 L1350 267.5 L1352 267.3 L1354 265.2 L1356 264.0 L1358 262.9 L1360 262.0 L1362 268.8 L1364 276.2 L1366 282.3 L1368 290.7 L1370 296.3 L1372 297.8 L1374 297.0 L1376 296.7 L1378 296.6 L1380 297.4 L1382 297.1 L1384 296.6 L1386 296.5 L1388 297.3 L1390 297.4 L1392 296.5 L1394 297.1 L1396 296.6 L1398 297.4 L1400 296.3 L1402 296.7 L1404 296.8 L1406 296.7 L1408 296.6 L1410 297.4 L1412 296.5 L1414 296.8 L1416 297.1 L1418 296.4 L1420 296.5 L1422 297.7 L1424 296.3 L1426 286.9 L1428 265.9 L1430 265.5 L1432 286.4 L1434 297.1 L1436 297.7 L1438 297.5 L1440 296.9 L1442 297.8 L1444 297.5 L1446 296.4 L1448 297.4 L1450 297.0 L1452 297.5 L1454 296.9 L1456 296.4 L1458 297.6 L1460 297.5 L1462 296.6 L1464 297.6 L1466 297.2 L1468 297.8 L1470 297.0 L1472 297.3 L1474 296.4 L1476 296.6 L1478 293.9 L1480 283.1 L1482 265.6 L1484 258.1 L1486 255.3 L1488 259.7 L1490 285.0 L1492 294.3 L1494 289.2 L1496 274.9 L1498 288.8 L1500 292.8 L1502 296.1 L1504 297.7 L1506 294.9 L1508 292.6 L1510 278.1 L1512 268.3 L1514 271.5 L1516 263.9 L1518 261.4 L1520 261.1 L1522 260.8 L1524 262.9 L1526 267.1 L1528 280.8 L1530 290.2 L1532 294.9 L1534 296.7 L1536 295.4 L1538 272.6 L1540 266.1 L1542 262.3 L1544 267.5 L1546 273.8 L1548 275.2 L1550 272.6 L1552 270.6 L1554 273.7 L1556 271.5 L1558 269.2 L1560 267.1 L1562 265.5 L1564 278.9 L1566 285.8 L1568 297.8 L1570 297.0 L1572 283.0 L1574 261.2 L1576 255.8 L1578 253.5 L1580 252.6 L1582 249.8 L1584 254.9 L1586 263.6 L1588 273.2 L1590 284.7 L1592 296.0 L1594 296.3 L1596 293.9 L1598 289.8 L1600 285.8 L1602 281.7 L1604 276.4 L1606 286.5 L1608 295.5 L1610 282.4 L1612 274.6 L1614 272.7 L1616 270.6 L1618 268.9 L1620 268.9 L1622 269.4 L1624 269.7 L1626 269.8 L1628 271.1 L1630 271.4 L1632 268.1 L1634 266.2 L1636 263.9 L1638 262.1 L1640 264.6 L1642 266.1 L1644 269.4 L1646 270.3 L1648 271.7 L1650 272.0 L1652 272.2 L1654 272.9 L1656 274.3 L1658 274.0 L1660 274.9 L1662 276.0 L1664 280.5 L1666 297.8 L1668 296.1 L1670 295.7 L1672 278.1 L1674 269.5 L1676 269.7 L1678 270.1 L1680 280.2 L1682 294.0 L1684 297.0 L1686 297.5 L1688 297.3 L1690 296.6 L1692 297.5 L1694 297.0 L1696 297.3 L1698 296.9 L1700 297.3 L1702 297.5 L1704 296.5 L1706 297.4 L1708 296.5 L1710 297.7 L1712 297.3 L1714 297.3 L1716 297.7 L1718 297.7 L1720 297.6 L1722 296.4 L1724 296.3 L1726 297.1 L1728 296.6 L1730 297.6 L1732 297.6 L1734 297.7 L1736 297.1 L1738 296.3 L1740 297.8 L1742 264.3 L1744 281.0 L1746 297.1 L1748 296.4 L1750 297.4 L1752 297.1 L1754 296.4 L1756 297.2 L1758 297.7 L1760 294.5 L1762 288.8 L1764 291.9 L1766 297.6 L1768 297.4 L1770 297.5 L1772 296.8 L1774 297.6 L1776 297.2 L1778 296.3 L1780 296.7 L1782 297.7 L1784 296.4 L1786 296.4 L1788 297.2 L1790 297.6 L1792 297.2 L1794 297.2 L1796 297.1 L1798 296.3 L1800 297.2 L1802 296.9 L1804 296.3 L1806 296.6 L1808 296.7 L1810 296.7 L1812 296.4 L1814 296.7 L1816 297.4 L1818 297.5 L1820 296.6 L1822 297.5 L1824 296.6 L1826 293.0 L1828 284.5 L1830 284.0 L1832 290.2 L1834 296.6 L1836 297.4 L1838 297.7 L1840 297.5 L1842 296.8 L1844 297.4 L1846 297.0 L1848 296.4 L1850 296.5 L1852 297.2 L1854 296.6 L1856 288.2 L1858 269.8 L1860 283.7 L1862 296.3 L1864 297.1 L1866 296.8 L1868 297.5 L1870 296.8 L1872 297.5 L1874 296.6 L1876 296.6 L1878 296.4 L1880 296.8 L1882 296.4 L1884 297.3 L1886 296.8 L1888 296.4 L1890 299.0 L1892 299.0 L1894 299.0 L1896 299.0 L1898 299.0 L1900 299.0 L1902 299.0 L1904 299.0 L1906 296.4 L1908 297.0 L1910 297.6 L1912 297.2 L1914 296.4 L1916 297.5 L1918 296.3 L1920 296.6 L1922 297.7 L1924 297.1 L1926 297.0 L1928 296.8 L1930 288.7 L1932 270.0 L1934 283.3 L1936 296.4 L1938 296.4 L1940 297.2 L1942 296.5 L1944 296.7 L1946 296.7 L1948 297.6 L1950 296.4 L1952 297.7 L1954 297.7 L1956 297.4 L1958 296.4 L1960 297.0 L1962 297.1 L1964 296.9 L1966 297.0 L1968 296.9 L1970 297.5 L1972 297.3 L1974 297.2 L1976 296.8 L1978 296.7 L1980 291.7 L1982 280.3 L1984 269.9 L1986 278.8 L1988 287.6 L1990 297.1 L1992 296.8 L1994 297.0 L1996 296.8 L1998 297.4 L2000 297.5 L2002 285.0 L2004 273.7 L2006 262.2 L2008 250.7 L2010 250.6 L2012 249.4 L2014 250.5 L2016 249.5 L2018 249.2 L2020 250.0 L2022 249.6 L2024 249.3 L2026 250.2 L2028 250.6 L2030 249.7 L2032 250.3 L2034 249.8 L2036 249.7 L2038 250.4 L2040 249.4 L2042 250.2 L2044 249.5 L2046 249.8 L2048 264.3 L2050 270.7 L2052 274.3 L2054 276.3 L2056 277.7 L2058 271.1 L2060 269.1 L2062 262.9 L2064 257.4 L2066 255.3 L2068 256.7 L2070 261.0 L2072 264.0 L2074 268.9 L2076 269.7 L2078 269.9 L2080 270.3 L2082 270.0 L2084 270.3 L2086 269.6 L2088 269.9 L2090 269.5 L2092 270.6 L2094 263.2 L2096 258.8 L2098 251.7 L2100 258.6 L2102 265.0 L2104 271.3 L2106 270.4 L2108 260.6 L2110 249.7 L2112 249.5 L2114 248.7 L2116 249.4 L2118 249.0 L2120 247.3 L2122 248.8 L2124 247.8 L2126 247.8 L2128 248.0 L2130 248.7 L2132 247.8 L2134 248.6 L2136 247.6 L2138 247.8 L2140 247.4 L2142 248.2 L2144 248.5 L2146 247.8 L2148 247.2 L2150 247.2 L2152 250.9 L2154 252.6 L2156 254.7 L2158 258.4 L2160 259.3 L2162 267.0 L2164 273.6 L2166 281.9 L2168 288.9 L2170 295.5 L2172 281.4 L2174 265.3 L2176 250.4 L2178 250.1 L2180 249.5 L2182 249.5 L2184 249.7 L2186 249.4 L2188 250.6 L2190 249.7 L2192 249.9 L2194 249.4 L2196 250.7 L2198 250.7 L2200 250.7 L2202 250.3 L2204 250.9 L2206 253.3 L2208 253.2 L2210 254.2 L2212 255.1 L2214 254.9 L2216 256.7 L2218 256.8 L2220 256.3 L2222 256.9 L2224 258.3 L2226 259.6 L2228 263.5 L2230 266.4 L2232 269.5 L2234 274.0 L2236 273.9 L2238 273.0 L2240 273.2 L2242 270.9 L2244 270.2 L2246 266.8 L2248 257.7 L2250 250.0 L2252 261.9 L2254 273.0 L2256 284.5 L2258 297.2 L2260 296.5 L2262 297.2 L2264 296.7 L2266 297.3 L2268 297.5 L2270 297.3 L2272 296.6 L2274 297.5 L2276 297.3 L2278 297.3 L2280 297.4 L2282 285.9 L2284 275.3 L2286 264.9 L2288 266.5 L2290 278.4 L2292 290.1 L2294 296.7 L2296 297.6 L2298 296.5 L2300 297.1 L2302 297.3 L2304 296.3 L2306 297.6 L2308 297.1 L2310 297.3 L2312 296.5 L2314 297.8 L2316 297.3 L2318 296.6 L2320 297.4 L2322 296.6 L2324 297.0 L2326 296.8 L2328 297.6 L2330 296.2 L2332 296.7 L2334 297.0 L2336 288.5 L2338 269.8 L2340 283.7 L2342 296.6 L2344 297.2 L2346 297.0 L2348 297.5 L2350 296.9 L2352 296.8 L2354 297.8 L2356 297.6 L2358 296.3 L2360 297.1 L2362 287.5 L2364 276.9 L2366 277.5 L2368 286.4 L2370 296.3 L2372 297.8 L2374 297.1 L2376 296.3 L2378 296.5 L2380 296.3 L2382 296.3 L2384 297.2 L2386 291.3 L2388 279.8 L2390 268.6 L2392 258.2 L2394 257.7 L2396 270.6 L2398 283.9 L2400 296.4 L2402 296.5 L2404 296.4 L2406 297.6 L2408 299.0 L2410 293.8 L2412 284.0 L2414 273.8 L2416 263.9 L2418 266.6 L2420 271.1 L2422 288.6 L2424 299.0 L2426 299.0 L2428 299.0 L2430 299.0 L2432 297.6 L2434 296.5 L2436 297.8 L2438 296.4 L2440 297.5 L2442 290.5 L2444 286.0 L2446 279.3 L2448 274.5 L2450 267.9 L2452 263.1 L2454 256.4 L2456 251.1 L2458 253.3 L2460 265.0 L2462 274.9 L2464 286.6 L2466 297.6 L2468 289.3 L2470 280.8 L2472 273.7 L2474 266.4 L2476 275.0 L2478 280.2 L2480 282.3 L2482 283.1 L2484 271.0 L2486 266.1 L2488 264.6 L2490 264.0 L2492 263.7 L2494 263.6 L2496 265.3 L2498 265.3 L2500 264.8 L2502 264.1 L2504 265.3 L2506 265.3 L2508 264.8 L2510 272.2 L2512 289.2 L2514 299.0 L2516 299.0 L2518 293.7 L2520 275.4 L2522 264.4 L2524 262.7 L2526 261.8 L2528 260.3 L2530 259.0 L2532 256.4 L2534 254.4 L2536 253.2 L2538 252.6 L2540 249.5 L2542 247.9 L2544 246.7" fill="none" stroke="#a51d2d" stroke-width="2.3" stroke-dasharray="2.2 4" stroke-dashoffset="11.4"/><path d="M658 261.7 L660 264.8 L662 266.4 L664 267.3 L666 266.5 L668 266.4 L670 266.7 L672 270.6 L674 277.6 L676 285.9 L678 291.3 L680 292.1 L682 295.1 L684 297.3 L686 297.7 L688 297.6 L690 296.5 L692 297.7 L694 296.5 L696 296.4 L698 284.7 L700 259.6 L702 255.4 L704 252.7 L706 261.1 L708 284.8 L710 296.9 L712 296.3 L714 296.6 L716 296.9 L718 297.5 L720 296.3 L722 296.7 L724 297.7 L726 297.5 L728 297.7 L730 296.3 L732 296.8 L734 297.8 L736 297.8 L738 297.7 L740 296.5 L742 296.6 L744 296.4 L746 297.8 L748 296.9 L750 296.5 L752 297.2 L754 297.5 L756 296.5 L758 296.7 L760 297.0 L762 297.5 L764 286.1 L766 275.6 L768 285.9 L770 296.2 L772 294.2 L774 290.9 L776 286.1 L778 284.0 L780 280.5 L782 286.2 L784 293.6 L786 293.2 L788 286.1 L790 279.1 L792 273.2 L794 265.8 L796 259.1 L798 253.8 L800 252.3 L802 251.0 L804 251.1 L806 251.0 L808 252.4 L810 253.0 L812 253.8 L814 254.2 L816 266.3 L818 286.3 L820 286.2 L822 264.4 L824 262.8 L826 260.5 L828 257.4 L830 255.1 L832 266.1 L834 276.4 L836 286.2 L838 296.4 L840 278.7 L842 260.8 L844 258.9 L846 256.3 L848 254.7 L850 276.7 L852 297.0 L854 296.2 L856 297.3 L858 297.7 L860 297.1 L862 297.7 L864 296.6 L866 297.6 L868 296.7 L870 296.4 L872 296.4 L874 277.4 L876 258.1 L878 277.4 L880 296.5 L882 297.6 L884 296.4 L886 296.7 L888 297.3 L890 297.2 L892 296.9 L894 297.3 L896 297.4 L898 296.2 L900 297.2 L902 296.5 L904 297.7 L906 296.8 L908 296.7 L910 297.6 L912 296.2 L914 297.7 L916 297.7 L918 296.5 L920 296.4 L922 291.0 L924 280.5 L926 279.6 L928 288.4 L930 296.4 L932 296.2 L934 294.0 L936 293.5 L938 292.6 L940 291.4 L942 289.9 L944 286.0 L946 282.3 L948 278.2 L950 274.5 L952 285.5 L954 296.8 L956 288.3 L958 280.9 L960 272.4 L962 264.3 L964 264.9 L966 261.9 L968 257.7 L970 259.0 L972 257.7 L974 257.8 L976 257.4 L978 257.8 L980 258.5 L982 259.4 L984 257.4 L986 257.5 L988 260.2 L990 262.3 L992 264.1 L994 265.8 L996 268.1 L998 269.9 L1000 268.9 L1002 265.8 L1004 263.3 L1006 265.2 L1008 264.8 L1010 263.4 L1012 269.2 L1014 270.4 L1016 271.1 L1018 261.6 L1020 258.4 L1022 257.7 L1024 264.5 L1026 267.9 L1028 269.9 L1030 283.0 L1032 290.2 L1034 296.6 L1036 296.7 L1038 297.5 L1040 296.3 L1042 297.1 L1044 296.2 L1046 297.6 L1048 297.7 L1050 297.4 L1052 297.0 L1054 297.3 L1056 296.2 L1058 296.8 L1060 296.6 L1062 288.2 L1064 278.9 L1066 270.8 L1068 270.9 L1070 271.4 L1072 270.4 L1074 271.1 L1076 270.3 L1078 270.9 L1080 271.0 L1082 270.5 L1084 270.8 L1086 271.3 L1088 270.4 L1090 280.3 L1092 288.7 L1094 296.9 L1096 296.9 L1098 297.8 L1100 297.0 L1102 296.3 L1104 297.7 L1106 288.4 L1108 270.2 L1110 252.3 L1112 252.8 L1114 256.8 L1116 258.6 L1118 259.6 L1120 257.3 L1122 256.7 L1124 256.7 L1126 256.9 L1128 255.5 L1130 255.2 L1132 254.7 L1134 260.1 L1136 262.1 L1138 262.8 L1140 256.8 L1142 254.3 L1144 253.1 L1146 252.6 L1148 257.4 L1150 259.3 L1152 257.2 L1154 256.6 L1156 255.8 L1158 255.7 L1160 265.9 L1162 270.3 L1164 275.5 L1166 277.8 L1168 279.1 L1170 287.3 L1172 297.5 L1174 296.7 L1176 297.6 L1178 297.2 L1180 296.2 L1182 291.7 L1184 279.5 L1186 288.2 L1188 297.5 L1190 296.2 L1192 297.5 L1194 296.8 L1196 297.2 L1198 296.7 L1200 297.1 L1202 296.6 L1204 297.1 L1206 296.9 L1208 297.2 L1210 296.2 L1212 297.4 L1214 296.6 L1216 297.5 L1218 297.0 L1220 297.3 L1222 296.9 L1224 296.4 L1226 297.8 L1228 297.4 L1230 297.8 L1232 297.3 L1234 296.9 L1236 296.8 L1238 297.5 L1240 297.5 L1242 297.4 L1244 296.5 L1246 296.6 L1248 296.8 L1250 296.3 L1252 296.5 L1254 296.8 L1256 296.4 L1258 296.6 L1260 297.1 L1262 297.3 L1264 296.7 L1266 297.6 L1268 296.2 L1270 290.3 L1272 284.5 L1274 289.4 L1276 292.6 L1278 297.4 L1280 294.5 L1282 293.2 L1284 290.5 L1286 287.9 L1288 286.9 L1290 284.9 L1292 282.7 L1294 281.4 L1296 281.1 L1298 280.1 L1300 280.5 L1302 273.1 L1304 266.8 L1306 260.1 L1308 254.0 L1310 250.3 L1312 251.0 L1314 252.6 L1316 252.1 L1318 252.7 L1320 253.9 L1322 254.2 L1324 256.4 L1326 256.5 L1328 257.8 L1330 257.3 L1332 257.9 L1334 258.5 L1336 257.2 L1338 258.4 L1340 258.7 L1342 258.6 L1344 257.4 L1346 260.0 L1348 264.0 L1350 268.0 L1352 267.3 L1354 265.3 L1356 263.9 L1358 263.9 L1360 262.1 L1362 269.3 L1364 276.1 L1366 283.2 L1368 289.4 L1370 296.4 L1372 296.4 L1374 296.9 L1376 296.3 L1378 297.6 L1380 296.4 L1382 297.5 L1384 297.3 L1386 296.5 L1388 296.6 L1390 297.2 L1392 297.8 L1394 296.8 L1396 296.6 L1398 296.5 L1400 297.5 L1402 296.4 L1404 296.3 L1406 297.3 L1408 297.4 L1410 296.5 L1412 297.0 L1414 296.2 L1416 296.8 L1418 296.2 L1420 297.1 L1422 296.9 L1424 297.1 L1426 287.2 L1428 265.4 L1430 265.1 L1432 285.8 L1434 297.1 L1436 297.2 L1438 297.4 L1440 296.9 L1442 296.8 L1444 297.1 L1446 297.4 L1448 296.7 L1450 296.7 L1452 297.6 L1454 296.5 L1456 296.5 L1458 296.9 L1460 297.0 L1462 296.7 L1464 297.5 L1466 296.5 L1468 297.0 L1470 297.8 L1472 296.5 L1474 296.3 L1476 297.5 L1478 294.1 L1480 282.5 L1482 265.1 L1484 261.4 L1486 260.0 L1488 267.8 L1490 294.5 L1492 299.0 L1494 299.0 L1496 294.4 L1498 299.0 L1500 299.0 L1502 297.0 L1504 296.7 L1506 295.2 L1508 292.3 L1510 275.8 L1512 265.1 L1514 261.8 L1516 261.3 L1518 261.7 L1520 262.5 L1522 260.6 L1524 262.0 L1526 266.2 L1528 280.1 L1530 290.4 L1532 294.8 L1534 296.0 L1536 295.9 L1538 272.7 L1540 263.0 L1542 258.1 L1544 262.7 L1546 268.9 L1548 274.1 L1550 273.0 L1552 271.7 L1554 275.1 L1556 269.4 L1558 265.7 L1560 263.0 L1562 265.7 L1564 269.0 L1566 285.1 L1568 297.3 L1570 297.7 L1572 283.7 L1574 262.1 L1576 254.9 L1578 254.1 L1580 252.6 L1582 250.5 L1584 255.9 L1586 264.1 L1588 273.4 L1590 285.0 L1592 295.8 L1594 295.6 L1596 293.6 L1598 290.0 L1600 286.4 L1602 281.8 L1604 276.7 L1606 287.4 L1608 294.9 L1610 283.9 L1612 274.3 L1614 271.8 L1616 269.8 L1618 269.4 L1620 268.8 L1622 269.6 L1624 269.7 L1626 269.5 L1628 270.2 L1630 270.8 L1632 269.2 L1634 265.9 L1636 262.9 L1638 261.9 L1640 264.6 L1642 267.4 L1644 268.8 L1646 271.7 L1648 271.3 L1650 272.6 L1652 272.7 L1654 273.6 L1656 274.5 L1658 273.9 L1660 274.4 L1662 275.1 L1664 280.6 L1666 297.2 L1668 297.2 L1670 296.2 L1672 278.3 L1674 259.6 L1676 255.9 L1678 254.8 L1680 273.4 L1682 290.6 L1684 296.8 L1686 297.6 L1688 296.8 L1690 296.3 L1692 296.3 L1694 296.8 L1696 296.3 L1698 297.4 L1700 297.6 L1702 296.2 L1704 297.2 L1706 297.8 L1708 296.8 L1710 296.6 L1712 296.9 L1714 297.7 L1716 296.2 L1718 296.2 L1720 296.7 L1722 296.4 L1724 296.8 L1726 297.3 L1728 297.8 L1730 297.5 L1732 296.9 L1734 297.6 L1736 296.3 L1738 297.4 L1740 296.9 L1742 264.3 L1744 281.3 L1746 297.3 L1748 296.9 L1750 297.8 L1752 297.0 L1754 296.8 L1756 296.3 L1758 296.5 L1760 294.0 L1762 287.9 L1764 292.2 L1766 297.0 L1768 297.2 L1770 296.8 L1772 297.2 L1774 297.0 L1776 297.4 L1778 297.4 L1780 296.6 L1782 296.6 L1784 296.9 L1786 297.6 L1788 297.7 L1790 296.9 L1792 296.7 L1794 296.7 L1796 296.7 L1798 297.4 L1800 297.3 L1802 297.2 L1804 296.8 L1806 297.8 L1808 297.8 L1810 297.4 L1812 297.2 L1814 296.8 L1816 297.1 L1818 297.1 L1820 297.3 L1822 297.8 L1824 297.2 L1826 293.0 L1828 284.8 L1830 283.9 L1832 290.9 L1834 296.6 L1836 296.4 L1838 297.5 L1840 296.9 L1842 297.8 L1844 296.9 L1846 297.2 L1848 296.5 L1850 297.2 L1852 297.3 L1854 297.8 L1856 287.3 L1858 269.6 L1860 284.2 L1862 297.0 L1864 296.4 L1866 297.4 L1868 296.4 L1870 296.7 L1872 297.7 L1874 297.7 L1876 296.7 L1878 297.7 L1880 297.6 L1882 297.0 L1884 296.7 L1886 297.5 L1888 297.4 L1890 296.8 L1892 296.7 L1894 296.6 L1896 296.6 L1898 299.0 L1900 299.0 L1902 299.0 L1904 299.0 L1906 296.3 L1908 296.3 L1910 296.4 L1912 297.1 L1914 297.6 L1916 296.3 L1918 296.3 L1920 296.7 L1922 296.5 L1924 297.7 L1926 296.6 L1928 297.3 L1930 287.3 L1932 270.5 L1934 283.3 L1936 297.1 L1938 297.4 L1940 297.1 L1942 296.3 L1944 297.3 L1946 296.9 L1948 296.7 L1950 297.4 L1952 297.1 L1954 296.8 L1956 297.5 L1958 297.5 L1960 296.9 L1962 296.2 L1964 297.4 L1966 297.0 L1968 296.9 L1970 297.6 L1972 296.2 L1974 297.3 L1976 297.4 L1978 297.0 L1980 292.0 L1982 281.4 L1984 270.2 L1986 278.3 L1988 288.1 L1990 296.8 L1992 296.7 L1994 297.0 L1996 296.4 L1998 297.6 L2000 297.3 L2002 285.2 L2004 273.5 L2006 262.3 L2008 249.7 L2010 249.3 L2012 249.9 L2014 249.9 L2016 250.3 L2018 249.7 L2020 249.5 L2022 249.7 L2024 250.3 L2026 249.2 L2028 250.5 L2030 250.1 L2032 249.5 L2034 249.9 L2036 250.3 L2038 249.9 L2040 248.5 L2042 248.9 L2044 249.7 L2046 250.6 L2048 252.9 L2050 254.3 L2052 255.5 L2054 263.5 L2056 267.2 L2058 269.3 L2060 270.8 L2062 265.9 L2064 260.9 L2066 264.5 L2068 261.0 L2070 261.8 L2072 263.8 L2074 267.9 L2076 270.4 L2078 269.7 L2080 270.7 L2082 269.4 L2084 270.4 L2086 270.6 L2088 270.5 L2090 269.6 L2092 269.7 L2094 264.7 L2096 257.8 L2098 252.3 L2100 259.3 L2102 265.1 L2104 271.9 L2106 270.0 L2108 260.6 L2110 249.5 L2112 249.9 L2114 249.9 L2116 248.1 L2118 249.1 L2120 247.3 L2122 247.9 L2124 247.8 L2126 248.5 L2128 248.6 L2130 247.5 L2132 247.8 L2134 248.4 L2136 248.1 L2138 248.5 L2140 247.9 L2142 248.1 L2144 248.5 L2146 248.4 L2148 247.9 L2150 248.1 L2152 250.5 L2154 252.5 L2156 255.5 L2158 257.9 L2160 260.2 L2162 267.9 L2164 274.4 L2166 282.0 L2168 288.1 L2170 295.3 L2172 281.2 L2174 265.2 L2176 250.0 L2178 249.7 L2180 250.7 L2182 249.6 L2184 250.0 L2186 249.9 L2188 249.2 L2190 249.3 L2192 250.6 L2194 249.5 L2196 249.9 L2198 250.5 L2200 249.4 L2202 251.0 L2204 250.9 L2206 252.1 L2208 253.7 L2210 254.1 L2212 254.8 L2214 256.2 L2216 255.5 L2218 257.0 L2220 256.6 L2222 257.1 L2224 257.3 L2226 259.6 L2228 263.7 L2230 266.0 L2232 270.1 L2234 272.7 L2236 274.4 L2238 274.1 L2240 272.3 L2242 272.3 L2244 270.6 L2246 265.2 L2248 257.4 L2250 250.5 L2252 262.0 L2254 273.8 L2256 285.5 L2258 296.3 L2260 296.9 L2262 297.1 L2264 296.9 L2266 297.7 L2268 297.7 L2270 296.5 L2272 296.8 L2274 296.8 L2276 296.3 L2278 296.8 L2280 297.5 L2282 285.6 L2284 276.1 L2286 264.8 L2288 265.6 L2290 277.9 L2292 290.4 L2294 296.6 L2296 297.6 L2298 296.5 L2300 296.8 L2302 296.5 L2304 297.0 L2306 297.0 L2308 297.0 L2310 297.6 L2312 296.9 L2314 297.3 L2316 297.7 L2318 296.4 L2320 296.3 L2322 297.7 L2324 296.3 L2326 297.1 L2328 297.7 L2330 297.6 L2332 296.9 L2334 296.9 L2336 287.2 L2338 270.7 L2340 283.3 L2342 296.5 L2344 297.6 L2346 296.5 L2348 296.5 L2350 296.9 L2352 297.4 L2354 297.4 L2356 296.5 L2358 296.5 L2360 296.3 L2362 287.5 L2364 277.4 L2366 277.2 L2368 287.0 L2370 296.8 L2372 296.9 L2374 297.3 L2376 296.7 L2378 297.1 L2380 297.1 L2382 297.7 L2384 296.4 L2386 291.9 L2388 279.7 L2390 269.6 L2392 257.2 L2394 257.9 L2396 270.9 L2398 284.8 L2400 297.7 L2402 296.6 L2404 297.0 L2406 297.7 L2408 299.0 L2410 297.1 L2412 292.4 L2414 284.2 L2416 282.7 L2418 279.9 L2420 282.2 L2422 286.5 L2424 291.7 L2426 299.0 L2428 299.0 L2430 299.0 L2432 296.3 L2434 296.7 L2436 296.6 L2438 297.5 L2440 297.4 L2442 290.5 L2444 284.8 L2446 279.8 L2448 273.5 L2450 267.5 L2452 261.8 L2454 256.4 L2456 251.1 L2458 253.8 L2460 264.8 L2462 275.4 L2464 286.4 L2466 296.3 L2468 288.6 L2470 281.3 L2472 273.2 L2474 265.5 L2476 260.2 L2478 259.5 L2480 259.2 L2482 259.1 L2484 266.8 L2486 269.8 L2488 271.1 L2490 271.6 L2492 264.0 L2494 261.0 L2496 259.4 L2498 258.1 L2500 257.2 L2502 256.3 L2504 260.6 L2506 261.9 L2508 261.9 L2510 261.4 L2512 269.9 L2514 281.4 L2516 298.2 L2518 288.8 L2520 276.4 L2522 264.3 L2524 263.4 L2526 261.3 L2528 260.2 L2530 259.0 L2532 257.6 L2534 255.6 L2536 252.9 L2538 251.8 L2540 249.8 L2542 249.2 L2544 247.1" fill="none" stroke="#1c71d8" stroke-width="2.3" stroke-dasharray="2.2 5" stroke-dashoffset="13.3"/><path d="M654 385V377h2V385zM656 385V373h2V385zM658 385V373h2V385zM660 385V367h2V385zM662 385V375h2V385zM664 385V373h2V385zM666 385V375h2V385zM668 385V373h2V385zM670 385V371h2V385zM672 385V377h2V385zM674 385V371h2V385zM676 385V371h2V385zM678 385V375h2V385zM680 385V379h2V385zM682 385V379h2V385zM684 385V375h2V385zM686 385V369h2V385zM688 385V373h2V385zM690 385V377h2V385zM692 385V377h2V385zM694 385V375h2V385zM696 385V375h2V385zM698 385V379h2V385zM700 385V373h2V385zM702 385V373h2V385zM704 385V369h2V385zM706 385V373h2V385zM708 385V379h2V385zM710 385V375h2V385zM712 385V371h2V385zM714 385V373h2V385zM716 385V377h2V385zM718 385V367h2V385zM720 385V375h2V385zM722 385V379h2V385zM724 385V377h2V385zM726 385V377h2V385zM728 385V377h2V385zM730 385V379h2V385zM732 385V373h2V385zM734 385V377h2V385zM736 385V371h2V385zM738 385V375h2V385zM740 385V373h2V385zM742 385V373h2V385zM744 385V377h2V385zM746 385V377h2V385zM748 385V367h2V385zM750 385V379h2V385zM752 385V373h2V385zM754 385V375h2V385zM756 385V377h2V385zM758 385V375h2V385zM760 385V375h2V385zM762 385V367h2V385zM764 385V367h2V385zM766 385V369h2V385zM768 385V377h2V385zM770 385V377h2V385zM772 385V371h2V385zM774 385V373h2V385zM776 385V371h2V385zM778 385V373h2V385zM780 385V375h2V385zM782 385V375h2V385zM784 385V377h2V385zM786 385V371h2V385zM788 385V373h2V385zM790 385V375h2V385zM792 385V375h2V385zM794 385V365h2V385zM796 385V356h2V385zM798 385V357h2V385zM800 385V352h2V385zM802 385V347h2V385zM804 385V342h2V385zM806 385V345h2V385zM808 385V344h2V385zM810 385V345h2V385zM812 385V345h2V385zM814 385V342h2V385zM816 385V348h2V385zM818 385V346h2V385zM820 385V356h2V385zM822 385V354h2V385zM824 385V359h2V385zM826 385V366h2V385zM828 385V364h2V385zM830 385V365h2V385zM832 385V367h2V385zM834 385V369h2V385zM836 385V369h2V385zM838 385V379h2V385zM840 385V375h2V385zM842 385V373h2V385zM844 385V371h2V385zM846 385V373h2V385zM848 385V367h2V385zM850 385V375h2V385zM852 385V375h2V385zM854 385V377h2V385zM856 385V371h2V385zM858 385V377h2V385zM860 385V373h2V385zM862 385V373h2V385zM864 385V373h2V385zM866 385V379h2V385zM868 385V375h2V385zM870 385V379h2V385zM872 385V375h2V385zM874 385V367h2V385zM876 385V375h2V385zM878 385V379h2V385zM880 385V373h2V385zM882 385V375h2V385zM884 385V377h2V385zM886 385V373h2V385zM888 385V377h2V385zM890 385V375h2V385zM892 385V367h2V385zM894 385V377h2V385zM896 385V377h2V385zM898 385V373h2V385zM900 385V379h2V385zM902 385V375h2V385zM904 385V377h2V385zM906 385V367h2V385zM908 385V371h2V385zM910 385V373h2V385zM912 385V379h2V385zM914 385V375h2V385zM916 385V375h2V385zM918 385V377h2V385zM920 385V375h2V385zM922 385V369h2V385zM924 385V373h2V385zM926 385V373h2V385zM928 385V369h2V385zM930 385V373h2V385zM932 385V375h2V385zM934 385V377h2V385zM936 385V371h2V385zM938 385V369h2V385zM940 385V375h2V385zM942 385V377h2V385zM944 385V379h2V385zM946 385V373h2V385zM948 385V367h2V385zM950 385V377h2V385zM952 385V379h2V385zM954 385V375h2V385zM956 385V369h2V385zM958 385V375h2V385zM960 385V367h2V385zM962 385V375h2V385zM964 385V369h2V385zM966 385V373h2V385zM968 385V375h2V385zM970 385V367h2V385zM972 385V373h2V385zM974 385V377h2V385zM976 385V377h2V385zM978 385V377h2V385zM980 385V377h2V385zM982 385V373h2V385zM984 385V377h2V385zM986 385V377h2V385zM988 385V379h2V385zM990 385V367h2V385zM992 385V373h2V385zM994 385V377h2V385zM996 385V377h2V385zM998 385V377h2V385zM1000 385V367h2V385zM1002 385V375h2V385zM1004 385V377h2V385zM1006 385V375h2V385zM1008 385V371h2V385zM1010 385V375h2V385zM1012 385V373h2V385zM1014 385V373h2V385zM1016 385V375h2V385zM1018 385V369h2V385zM1020 385V377h2V385zM1022 385V377h2V385zM1024 385V377h2V385zM1026 385V373h2V385zM1028 385V375h2V385zM1030 385V371h2V385zM1032 385V379h2V385zM1034 385V369h2V385zM1036 385V371h2V385zM1038 385V379h2V385zM1040 385V379h2V385zM1042 385V373h2V385zM1044 385V373h2V385zM1046 385V377h2V385zM1048 385V373h2V385zM1050 385V369h2V385zM1052 385V377h2V385zM1054 385V375h2V385zM1056 385V375h2V385zM1058 385V369h2V385zM1060 385V375h2V385zM1062 385V379h2V385zM1064 385V375h2V385zM1066 385V373h2V385zM1068 385V377h2V385zM1070 385V375h2V385zM1072 385V375h2V385zM1074 385V371h2V385zM1076 385V371h2V385zM1078 385V373h2V385zM1080 385V369h2V385zM1082 385V377h2V385zM1084 385V371h2V385zM1086 385V369h2V385zM1088 385V379h2V385zM1090 385V371h2V385zM1092 385V369h2V385zM1094 385V375h2V385zM1096 385V371h2V385zM1098 385V375h2V385zM1100 385V375h2V385zM1102 385V369h2V385zM1104 385V371h2V385zM1106 385V371h2V385zM1108 385V375h2V385zM1110 385V377h2V385zM1112 385V369h2V385zM1114 385V375h2V385zM1116 385V375h2V385zM1118 385V375h2V385zM1120 385V377h2V385zM1122 385V375h2V385zM1124 385V367h2V385zM1126 385V373h2V385zM1128 385V377h2V385zM1130 385V377h2V385zM1132 385V367h2V385zM1134 385V377h2V385zM1136 385V367h2V385zM1138 385V373h2V385zM1140 385V371h2V385zM1142 385V369h2V385zM1144 385V379h2V385zM1146 385V367h2V385zM1148 385V367h2V385zM1150 385V373h2V385zM1152 385V373h2V385zM1154 385V371h2V385zM1156 385V371h2V385zM1158 385V373h2V385zM1160 385V373h2V385zM1162 385V377h2V385zM1164 385V375h2V385zM1166 385V379h2V385zM1168 385V379h2V385zM1170 385V367h2V385zM1172 385V373h2V385zM1174 385V379h2V385zM1176 385V375h2V385zM1178 385V375h2V385zM1180 385V369h2V385zM1182 385V373h2V385zM1184 385V373h2V385zM1186 385V373h2V385zM1188 385V375h2V385zM1190 385V373h2V385zM1192 385V373h2V385zM1194 385V375h2V385zM1196 385V373h2V385zM1198 385V375h2V385zM1200 385V367h2V385zM1202 385V367h2V385zM1204 385V377h2V385zM1206 385V379h2V385zM1208 385V373h2V385zM1210 385V377h2V385zM1212 385V373h2V385zM1214 385V375h2V385zM1216 385V369h2V385zM1218 385V375h2V385zM1220 385V373h2V385zM1222 385V367h2V385zM1224 385V367h2V385zM1226 385V369h2V385zM1228 385V367h2V385zM1230 385V369h2V385zM1232 385V367h2V385zM1234 385V375h2V385zM1236 385V375h2V385zM1238 385V373h2V385zM1240 385V373h2V385zM1242 385V373h2V385zM1244 385V375h2V385zM1246 385V369h2V385zM1248 385V373h2V385zM1250 385V371h2V385zM1252 385V379h2V385zM1254 385V377h2V385zM1256 385V375h2V385zM1258 385V375h2V385zM1260 385V375h2V385zM1262 385V373h2V385zM1264 385V377h2V385zM1266 385V377h2V385zM1268 385V371h2V385zM1270 385V377h2V385zM1272 385V377h2V385zM1274 385V371h2V385zM1276 385V375h2V385zM1278 385V369h2V385zM1280 385V373h2V385zM1282 385V373h2V385zM1284 385V377h2V385zM1286 385V377h2V385zM1288 385V373h2V385zM1290 385V375h2V385zM1292 385V367h2V385zM1294 385V375h2V385zM1296 385V375h2V385zM1298 385V367h2V385zM1300 385V369h2V385zM1302 385V367h2V385zM1304 385V375h2V385zM1306 385V375h2V385zM1308 385V377h2V385zM1310 385V379h2V385zM1312 385V375h2V385zM1314 385V371h2V385zM1316 385V375h2V385zM1318 385V377h2V385zM1320 385V367h2V385zM1322 385V371h2V385zM1324 385V375h2V385zM1326 385V375h2V385zM1328 385V369h2V385zM1330 385V375h2V385zM1332 385V373h2V385zM1334 385V377h2V385zM1336 385V373h2V385zM1338 385V373h2V385zM1340 385V373h2V385zM1342 385V373h2V385zM1344 385V373h2V385zM1346 385V369h2V385zM1348 385V367h2V385zM1350 385V375h2V385zM1352 385V367h2V385zM1354 385V377h2V385zM1356 385V367h2V385zM1358 385V373h2V385zM1360 385V369h2V385zM1362 385V375h2V385zM1364 385V377h2V385zM1366 385V375h2V385zM1368 385V375h2V385zM1370 385V379h2V385zM1372 385V375h2V385zM1374 385V367h2V385zM1376 385V375h2V385zM1378 385V379h2V385zM1380 385V377h2V385zM1382 385V371h2V385zM1384 385V369h2V385zM1386 385V379h2V385zM1388 385V373h2V385zM1390 385V369h2V385zM1392 385V373h2V385zM1394 385V373h2V385zM1396 385V375h2V385zM1398 385V379h2V385zM1400 385V371h2V385zM1402 385V377h2V385zM1404 385V377h2V385zM1406 385V375h2V385zM1408 385V375h2V385zM1410 385V373h2V385zM1412 385V375h2V385zM1414 385V379h2V385zM1416 385V375h2V385zM1418 385V377h2V385zM1420 385V377h2V385zM1422 385V369h2V385zM1424 385V373h2V385zM1426 385V371h2V385zM1428 385V379h2V385zM1430 385V375h2V385zM1432 385V375h2V385zM1434 385V373h2V385zM1436 385V373h2V385zM1438 385V371h2V385zM1440 385V375h2V385zM1442 385V375h2V385zM1444 385V369h2V385zM1446 385V369h2V385zM1448 385V373h2V385zM1450 385V379h2V385zM1452 385V367h2V385zM1454 385V369h2V385zM1456 385V377h2V385zM1458 385V377h2V385zM1460 385V373h2V385zM1462 385V367h2V385zM1464 385V375h2V385zM1466 385V377h2V385zM1468 385V379h2V385zM1470 385V373h2V385zM1472 385V371h2V385zM1474 385V369h2V385zM1476 385V371h2V385zM1478 385V369h2V385zM1480 385V373h2V385zM1482 385V373h2V385zM1484 385V367h2V385zM1486 385V367h2V385zM1488 385V375h2V385zM1490 385V377h2V385zM1492 385V375h2V385zM1494 385V377h2V385zM1496 385V375h2V385zM1498 385V375h2V385zM1500 385V375h2V385zM1502 385V367h2V385zM1504 385V367h2V385zM1506 385V379h2V385zM1508 385V377h2V385zM1510 385V367h2V385zM1512 385V377h2V385zM1514 385V377h2V385zM1516 385V371h2V385zM1518 385V377h2V385zM1520 385V367h2V385zM1522 385V375h2V385zM1524 385V375h2V385zM1526 385V375h2V385zM1528 385V375h2V385zM1530 385V379h2V385zM1532 385V377h2V385zM1534 385V379h2V385zM1536 385V369h2V385zM1538 385V373h2V385zM1540 385V375h2V385zM1542 385V367h2V385zM1544 385V367h2V385zM1546 385V373h2V385zM1548 385V377h2V385zM1550 385V379h2V385zM1552 385V377h2V385zM1554 385V375h2V385zM1556 385V375h2V385zM1558 385V371h2V385zM1560 385V375h2V385zM1562 385V373h2V385zM1564 385V375h2V385zM1566 385V375h2V385zM1568 385V371h2V385zM1570 385V373h2V385zM1572 385V377h2V385zM1574 385V375h2V385zM1576 385V375h2V385zM1578 385V375h2V385zM1580 385V371h2V385zM1582 385V379h2V385zM1584 385V375h2V385zM1586 385V369h2V385zM1588 385V371h2V385zM1590 385V367h2V385zM1592 385V367h2V385zM1594 385V367h2V385zM1596 385V377h2V385zM1598 385V379h2V385zM1600 385V375h2V385zM1602 385V373h2V385zM1604 385V373h2V385zM1606 385V377h2V385zM1608 385V373h2V385zM1610 385V379h2V385zM1612 385V375h2V385zM1614 385V367h2V385zM1616 385V379h2V385zM1618 385V375h2V385zM1620 385V367h2V385zM1622 385V367h2V385zM1624 385V369h2V385zM1626 385V371h2V385zM1628 385V369h2V385zM1630 385V377h2V385zM1632 385V375h2V385zM1634 385V373h2V385zM1636 385V375h2V385zM1638 385V373h2V385zM1640 385V375h2V385zM1642 385V379h2V385zM1644 385V375h2V385zM1646 385V377h2V385zM1648 385V369h2V385zM1650 385V375h2V385zM1652 385V369h2V385zM1654 385V379h2V385zM1656 385V373h2V385zM1658 385V367h2V385zM1660 385V377h2V385zM1662 385V377h2V385zM1664 385V371h2V385zM1666 385V371h2V385zM1668 385V373h2V385zM1670 385V375h2V385zM1672 385V375h2V385zM1674 385V371h2V385zM1676 385V371h2V385zM1678 385V375h2V385zM1680 385V373h2V385zM1682 385V375h2V385zM1684 385V377h2V385zM1686 385V375h2V385zM1688 385V373h2V385zM1690 385V369h2V385zM1692 385V377h2V385zM1694 385V375h2V385zM1696 385V371h2V385zM1698 385V367h2V385zM1700 385V375h2V385zM1702 385V369h2V385zM1704 385V377h2V385zM1706 385V379h2V385zM1708 385V373h2V385zM1710 385V369h2V385zM1712 385V379h2V385zM1714 385V367h2V385zM1716 385V375h2V385zM1718 385V377h2V385zM1720 385V375h2V385zM1722 385V371h2V385zM1724 385V371h2V385zM1726 385V375h2V385zM1728 385V371h2V385zM1730 385V375h2V385zM1732 385V377h2V385zM1734 385V377h2V385zM1736 385V375h2V385zM1738 385V367h2V385zM1740 385V373h2V385zM1742 385V369h2V385zM1744 385V367h2V385zM1746 385V373h2V385zM1748 385V373h2V385zM1750 385V375h2V385zM1752 385V367h2V385zM1754 385V375h2V385zM1756 385V375h2V385zM1758 385V377h2V385zM1760 385V373h2V385zM1762 385V373h2V385zM1764 385V375h2V385zM1766 385V373h2V385zM1768 385V373h2V385zM1770 385V375h2V385zM1772 385V379h2V385zM1774 385V371h2V385zM1776 385V373h2V385zM1778 385V375h2V385zM1780 385V379h2V385zM1782 385V375h2V385zM1784 385V369h2V385zM1786 385V373h2V385zM1788 385V375h2V385zM1790 385V377h2V385zM1792 385V375h2V385zM1794 385V377h2V385zM1796 385V373h2V385zM1798 385V377h2V385zM1800 385V373h2V385zM1802 385V379h2V385zM1804 385V379h2V385zM1806 385V367h2V385zM1808 385V369h2V385zM1810 385V375h2V385zM1812 385V369h2V385zM1814 385V373h2V385zM1816 385V375h2V385zM1818 385V373h2V385zM1820 385V375h2V385zM1822 385V371h2V385zM1824 385V373h2V385zM1826 385V367h2V385zM1828 385V379h2V385zM1830 385V379h2V385zM1832 385V375h2V385zM1834 385V377h2V385zM1836 385V373h2V385zM1838 385V375h2V385zM1840 385V373h2V385zM1842 385V375h2V385zM1844 385V373h2V385zM1846 385V369h2V385zM1848 385V367h2V385zM1850 385V373h2V385zM1852 385V369h2V385zM1854 385V377h2V385zM1856 385V375h2V385zM1858 385V377h2V385zM1860 385V375h2V385zM1862 385V367h2V385zM1864 385V375h2V385zM1866 385V373h2V385zM1868 385V377h2V385zM1870 385V375h2V385zM1872 385V369h2V385zM1874 385V375h2V385zM1876 385V377h2V385zM1878 385V375h2V385zM1880 385V375h2V385zM1882 385V367h2V385zM1884 385V377h2V385zM1886 385V377h2V385zM1888 385V375h2V385zM1890 385V377h2V385zM1892 385V367h2V385zM1894 385V369h2V385zM1896 385V375h2V385zM1898 385V367h2V385zM1900 385V375h2V385zM1902 385V371h2V385zM1904 385V375h2V385zM1906 385V377h2V385zM1908 385V373h2V385zM1910 385V373h2V385zM1912 385V375h2V385zM1914 385V379h2V385zM1916 385V367h2V385zM1918 385V375h2V385zM1920 385V367h2V385zM1922 385V371h2V385zM1924 385V375h2V385zM1926 385V379h2V385zM1928 385V375h2V385zM1930 385V377h2V385zM1932 385V375h2V385zM1934 385V379h2V385zM1936 385V375h2V385zM1938 385V373h2V385zM1940 385V379h2V385zM1942 385V377h2V385zM1944 385V369h2V385zM1946 385V367h2V385zM1948 385V371h2V385zM1950 385V379h2V385zM1952 385V375h2V385zM1954 385V369h2V385zM1956 385V373h2V385zM1958 385V373h2V385zM1960 385V371h2V385zM1962 385V371h2V385zM1964 385V371h2V385zM1966 385V375h2V385zM1968 385V373h2V385zM1970 385V367h2V385zM1972 385V379h2V385zM1974 385V367h2V385zM1976 385V375h2V385zM1978 385V377h2V385zM1980 385V375h2V385zM1982 385V373h2V385zM1984 385V373h2V385zM1986 385V367h2V385zM1988 385V367h2V385zM1990 385V373h2V385zM1992 385V371h2V385zM1994 385V369h2V385zM1996 385V375h2V385zM1998 385V373h2V385zM2000 385V375h2V385zM2002 385V379h2V385zM2004 385V367h2V385zM2006 385V373h2V385zM2008 385V375h2V385zM2010 385V369h2V385zM2012 385V369h2V385zM2014 385V377h2V385zM2016 385V375h2V385zM2018 385V373h2V385zM2020 385V377h2V385zM2022 385V377h2V385zM2024 385V379h2V385zM2026 385V375h2V385zM2028 385V375h2V385zM2030 385V375h2V385zM2032 385V375h2V385zM2034 385V375h2V385zM2036 385V379h2V385zM2038 385V373h2V385zM2040 385V377h2V385zM2042 385V375h2V385zM2044 385V377h2V385zM2046 385V379h2V385zM2048 385V369h2V385zM2050 385V377h2V385zM2052 385V377h2V385zM2054 385V375h2V385zM2056 385V371h2V385zM2058 385V377h2V385zM2060 385V377h2V385zM2062 385V371h2V385zM2064 385V367h2V385zM2066 385V377h2V385zM2068 385V367h2V385zM2070 385V373h2V385zM2072 385V377h2V385zM2074 385V377h2V385zM2076 385V375h2V385zM2078 385V375h2V385zM2080 385V371h2V385zM2082 385V379h2V385zM2084 385V377h2V385zM2086 385V375h2V385zM2088 385V375h2V385zM2090 385V369h2V385zM2092 385V369h2V385zM2094 385V377h2V385zM2096 385V375h2V385zM2098 385V375h2V385zM2100 385V373h2V385zM2102 385V369h2V385zM2104 385V371h2V385zM2106 385V367h2V385zM2108 385V379h2V385zM2110 385V373h2V385zM2112 385V375h2V385zM2114 385V375h2V385zM2116 385V367h2V385zM2118 385V375h2V385zM2120 385V373h2V385zM2122 385V379h2V385zM2124 385V369h2V385zM2126 385V373h2V385zM2128 385V379h2V385zM2130 385V373h2V385zM2132 385V369h2V385zM2134 385V373h2V385zM2136 385V377h2V385zM2138 385V379h2V385zM2140 385V367h2V385zM2142 385V377h2V385zM2144 385V375h2V385zM2146 385V373h2V385zM2148 385V375h2V385zM2150 385V371h2V385zM2152 385V377h2V385zM2154 385V375h2V385zM2156 385V375h2V385zM2158 385V375h2V385zM2160 385V367h2V385zM2162 385V373h2V385zM2164 385V367h2V385zM2166 385V375h2V385zM2168 385V373h2V385zM2170 385V375h2V385zM2172 385V379h2V385zM2174 385V377h2V385zM2176 385V375h2V385zM2178 385V369h2V385zM2180 385V377h2V385zM2182 385V373h2V385zM2184 385V375h2V385zM2186 385V377h2V385zM2188 385V377h2V385zM2190 385V375h2V385zM2192 385V375h2V385zM2194 385V373h2V385zM2196 385V377h2V385zM2198 385V375h2V385zM2200 385V367h2V385zM2202 385V367h2V385zM2204 385V373h2V385zM2206 385V375h2V385zM2208 385V379h2V385zM2210 385V375h2V385zM2212 385V373h2V385zM2214 385V371h2V385zM2216 385V377h2V385zM2218 385V367h2V385zM2220 385V373h2V385zM2222 385V375h2V385zM2224 385V371h2V385zM2226 385V375h2V385zM2228 385V375h2V385zM2230 385V379h2V385zM2232 385V373h2V385zM2234 385V367h2V385zM2236 385V375h2V385zM2238 385V369h2V385zM2240 385V375h2V385zM2242 385V373h2V385zM2244 385V377h2V385zM2246 385V379h2V385zM2248 385V373h2V385zM2250 385V371h2V385zM2252 385V375h2V385zM2254 385V377h2V385zM2256 385V379h2V385zM2258 385V375h2V385zM2260 385V375h2V385zM2262 385V377h2V385zM2264 385V375h2V385zM2266 385V379h2V385zM2268 385V367h2V385zM2270 385V375h2V385zM2272 385V367h2V385zM2274 385V373h2V385zM2276 385V375h2V385zM2278 385V375h2V385zM2280 385V371h2V385zM2282 385V373h2V385zM2284 385V375h2V385zM2286 385V375h2V385zM2288 385V369h2V385zM2290 385V377h2V385zM2292 385V375h2V385zM2294 385V373h2V385zM2296 385V377h2V385zM2298 385V375h2V385zM2300 385V375h2V385zM2302 385V367h2V385zM2304 385V377h2V385zM2306 385V375h2V385zM2308 385V367h2V385zM2310 385V367h2V385zM2312 385V377h2V385zM2314 385V379h2V385zM2316 385V375h2V385zM2318 385V375h2V385zM2320 385V375h2V385zM2322 385V371h2V385zM2324 385V373h2V385zM2326 385V377h2V385zM2328 385V373h2V385zM2330 385V379h2V385zM2332 385V367h2V385zM2334 385V369h2V385zM2336 385V375h2V385zM2338 385V375h2V385zM2340 385V375h2V385zM2342 385V369h2V385zM2344 385V375h2V385zM2346 385V377h2V385zM2348 385V379h2V385zM2350 385V375h2V385zM2352 385V373h2V385zM2354 385V375h2V385zM2356 385V373h2V385zM2358 385V367h2V385zM2360 385V367h2V385zM2362 385V371h2V385zM2364 385V375h2V385zM2366 385V377h2V385zM2368 385V367h2V385zM2370 385V373h2V385zM2372 385V373h2V385zM2374 385V367h2V385zM2376 385V375h2V385zM2378 385V377h2V385zM2380 385V371h2V385zM2382 385V373h2V385zM2384 385V379h2V385zM2386 385V377h2V385zM2388 385V379h2V385zM2390 385V377h2V385zM2392 385V377h2V385zM2394 385V373h2V385zM2396 385V377h2V385zM2398 385V373h2V385zM2400 385V379h2V385zM2402 385V377h2V385zM2404 385V367h2V385zM2406 385V375h2V385zM2408 385V377h2V385zM2410 385V377h2V385zM2412 385V371h2V385zM2414 385V369h2V385zM2416 385V375h2V385zM2418 385V367h2V385zM2420 385V373h2V385zM2422 385V375h2V385zM2424 385V373h2V385zM2426 385V373h2V385zM2428 385V371h2V385zM2430 385V377h2V385zM2432 385V375h2V385zM2434 385V375h2V385zM2436 385V379h2V385zM2438 385V373h2V385zM2440 385V375h2V385zM2442 385V373h2V385zM2444 385V367h2V385zM2446 385V375h2V385zM2448 385V375h2V385zM2450 385V375h2V385zM2452 385V377h2V385zM2454 385V371h2V385zM2456 385V375h2V385zM2458 385V367h2V385zM2460 385V367h2V385zM2462 385V375h2V385zM2464 385V375h2V385zM2466 385V367h2V385zM2468 385V377h2V385zM2470 385V377h2V385zM2472 385V375h2V385zM2474 385V377h2V385zM2476 385V379h2V385zM2478 385V375h2V385zM2480 385V379h2V385zM2482 385V377h2V385zM2484 385V375h2V385zM2486 385V375h2V385zM2488 385V371h2V385zM2490 385V379h2V385zM2492 385V379h2V385zM2494 385V379h2V385zM2496 385V377h2V385zM2498 385V375h2V385zM2500 385V369h2V385zM2502 385V367h2V385zM2504 385V371h2V385zM2506 385V375h2V385zM2508 385V361h2V385zM2510 385V357h2V385zM2512 385V350h2V385zM2514 385V352h2V385zM2516 385V345h2V385zM2518 385V345h2V385zM2520 385V340h2V385zM2522 385V334h2V385zM2524 385V337h2V385zM2526 385V337h2V385zM2528 385V332h2V385zM2530 385V331h2V385zM2532 385V336h2V385zM2534 385V340h2V385zM2536 385V345h2V385zM2538 385V344h2V385zM2540 385V342h2V385zM2542 385V354h2V385zM2544 385V351h2V385zM2546 385V350h2V385z" fill="#3584e4"/><path d="M659 385V374M667 385V376M675 385V375M697 385V375M731 385V380M749 385V371M753 385V373M755 385V376M765 385V371M775 385V373M777 385V378M799 385V357M801 385V352M803 385V349M805 385V345M807 385V346M809 385V347M811 385V347M813 385V345M815 385V344M817 385V350M819 385V347M821 385V357M823 385V356M825 385V359M827 385V368M829 385V365M831 385V367M833 385V369M839 385V379M843 385V375M847 385V376M857 385V378M865 385V373M875 385V368M881 385V374M885 385V378M891 385V375M893 385V367M909 385V373M915 385V377M917 385V376M931 385V378M975 385V378M979 385V381M995 385V378M997 385V378M999 385V380M1009 385V374M1013 385V375M1021 385V378M1027 385V375M1037 385V377M1051 385V371M1061 385V375M1067 385V374M1069 385V379M1081 385V370M1091 385V378M1103 385V372M1107 385V377M1113 385V373M1121 385V377M1131 385V378M1141 385V378M1147 385V374M1151 385V374M1167 385V382M1191 385V374M1211 385V381M1221 385V373M1237 385V377M1245 385V376M1253 385V381M1273 385V379M1281 385V378M1285 385V379M1299 385V373M1305 385V378M1315 385V373M1329 385V375M1339 385V378M1351 385V378M1357 385V370M1359 385V379M1365 385V380M1383 385V374M1393 385V378M1395 385V377M1417 385V379M1423 385V370M1425 385V373M1431 385V376M1435 385V377M1437 385V377M1439 385V378M1441 385V379M1455 385V377M1459 385V381M1477 385V376M1481 385V374M1483 385V375M1485 385V368M1497 385V377M1503 385V369M1509 385V379M1519 385V378M1521 385V374M1551 385V380M1575 385V376M1581 385V376M1583 385V381M1587 385V374M1595 385V374M1599 385V382M1601 385V378M1613 385V380M1615 385V370M1621 385V369M1623 385V370M1673 385V379M1675 385V372M1677 385V375M1697 385V371M1699 385V374M1713 385V382M1719 385V378M1729 385V378M1735 385V380M1739 385V372M1743 385V372M1745 385V372M1749 385V373M1769 385V376M1807 385V368M1809 385V372M1823 385V374M1839 385V379M1847 385V372M1857 385V380M1859 385V379M1861 385V375M1877 385V380M1883 385V368M1889 385V378M1899 385V373M1905 385V377M1909 385V373M1923 385V372M1943 385V377M1945 385V374M1951 385V380M1955 385V376M1973 385V380M1981 385V380M1983 385V377M2001 385V376M2003 385V379M2023 385V379M2025 385V380M2027 385V377M2043 385V377M2053 385V380M2059 385V377M2075 385V379M2077 385V378M2097 385V379M2121 385V373M2127 385V378M2135 385V373M2157 385V378M2161 385V367M2167 385V376M2171 385V376M2173 385V380M2219 385V372M2225 385V373M2249 385V373M2269 385V376M2273 385V373M2291 385V377M2301 385V378M2307 385V375M2313 385V380M2329 385V378M2333 385V373M2335 385V373M2343 385V371M2349 385V381M2355 385V377M2357 385V377M2367 385V380M2375 385V373M2377 385V380M2399 385V374M2405 385V372M2411 385V379M2443 385V377M2457 385V379M2459 385V372M2471 385V378M2483 385V377M2489 385V372M2493 385V380M2501 385V376M2513 385V354M2517 385V357M2523 385V356M2525 385V348M2531 385V351M2535 385V360M2539 385V363M2541 385V360" stroke="#1c5fb9" stroke-width="2"/><path d="M663 385V316M671 385V316M749 385V316M763 385V316M777 385V316M801 385V316M920 385V316M1015 385V316M1041 385V316M1064 385V316M1066 385V316M1139 385V316M1143 385V316M1219 385V316M1231 385V316M1247 385V316M1311 385V316M1321 385V316M1353 385V316M1397 385V316M1425 385V316M1429 385V316M1439 385V316M1461 385V316M1754 385V316M1767 385V316M1833 385V316M1837 385V316M1855 385V316M1998 385V316M2006 385V316M2046 385V316M2049 385V316M2098 385V316M2137 385V316M2141 385V316M2151 385V316M2154 385V316M2173 385V316M2185 385V316M2222 385V316M2250 385V316M2253 385V316M2314 385V316M2382 385V316M2438 385V316M2452 385V316M2500 385V316M2525 385V316M2531 385V316M885 385V339M1205 385V340M1125 385V358M1604 385V344M1685 385V348M1924 385V340M2084 385V342M1769 385V345M2520 385V322" stroke="#1c5fb9" stroke-width="2.2"/><path d="M654 455.8 L656 455.7 L658 455.7 L660 455.7 L662 455.7 L664 455.6 L666 455.6 L668 455.5 L670 455.5 L672 455.5 L674 455.4 L676 455.3 L678 455.3 L680 455.2 L682 455.1 L684 455.0 L686 454.9 L688 454.8 L690 454.7 L692 454.6 L694 454.5 L696 454.4 L698 454.2 L700 454.1 L702 453.9 L704 453.8 L706 453.7 L708 453.5 L710 453.4 L712 453.2 L714 453.1 L716 452.9 L718 452.8 L720 452.7 L722 452.5 L724 452.4 L726 452.3 L728 452.2 L730 452.2 L732 452.1 L734 452.0 L736 452.0 L738 451.9 L740 451.9 L742 451.8 L744 451.8 L746 451.8 L748 451.7 L750 451.7 L752 451.7 L754 451.6 L756 451.6 L758 451.6 L760 451.6 L762 451.5 L764 451.5 L766 451.5 L768 451.5 L770 451.4 L772 451.4 L774 451.4 L776 451.4 L778 451.3 L780 451.3 L782 451.3 L784 451.2 L786 451.2 L788 451.2 L790 451.1 L792 451.1 L794 451.1 L796 451.0 L798 451.0 L800 450.9 L802 450.8 L804 450.8 L806 450.7 L808 450.6 L810 450.5 L812 450.4 L814 450.3 L816 450.2 L818 450.1 L820 449.9 L822 449.8 L824 449.7 L826 449.6 L828 449.5 L830 449.3 L832 449.2 L834 449.1 L836 449.0 L838 448.9 L840 448.7 L842 448.6 L844 448.5 L846 448.4 L848 448.3 L850 448.2 L852 448.1 L854 447.9 L856 447.9 L858 447.8 L860 447.7 L862 447.6 L864 447.5 L866 447.5 L868 447.4 L870 447.3 L872 447.3 L874 447.2 L876 447.2 L878 447.1 L880 447.1 L882 447.1 L884 447.0 L886 447.0 L888 446.9 L890 446.9 L892 446.9 L894 446.8 L896 446.8 L898 446.7 L900 446.7 L902 446.7 L904 446.6 L906 446.6 L908 446.5 L910 446.5 L912 446.5 L914 446.4 L916 446.4 L918 446.4 L920 446.3 L922 446.3 L924 446.2 L926 446.2 L928 446.2 L930 446.1 L932 446.1 L934 446.0 L936 446.0 L938 446.0 L940 445.9 L942 445.9 L944 445.8 L946 445.8 L948 445.7 L950 445.7 L952 445.6 L954 445.5 L956 445.5 L958 445.4 L960 445.3 L962 445.2 L964 445.2 L966 445.1 L968 445.0 L970 444.9 L972 444.8 L974 444.7 L976 444.6 L978 444.5 L980 444.4 L982 444.3 L984 444.2 L986 444.1 L988 444.0 L990 443.9 L992 443.8 L994 443.7 L996 443.6 L998 443.5 L1000 443.5 L1002 443.4 L1004 443.3 L1006 443.2 L1008 443.1 L1010 443.1 L1012 443.0 L1014 442.9 L1016 442.9 L1018 442.8 L1020 442.8 L1022 442.8 L1024 442.7 L1026 442.7 L1028 442.7 L1030 442.6 L1032 442.6 L1034 442.6 L1036 442.6 L1038 442.5 L1040 442.5 L1042 442.5 L1044 442.5 L1046 442.5 L1048 442.4 L1050 442.4 L1052 442.4 L1054 442.4 L1056 442.3 L1058 442.3 L1060 442.3 L1062 442.3 L1064 442.3 L1066 442.2 L1068 442.2 L1070 442.2 L1072 442.2 L1074 442.2 L1076 442.1 L1078 442.1 L1080 442.1 L1082 442.1 L1084 442.1 L1086 442.0 L1088 442.0 L1090 442.0 L1092 442.0 L1094 441.9 L1096 441.9 L1098 441.9 L1100 441.8 L1102 441.8 L1104 441.7 L1106 441.6 L1108 441.6 L1110 441.5 L1112 441.4 L1114 441.3 L1116 441.2 L1118 441.1 L1120 441.0 L1122 440.9 L1124 440.8 L1126 440.7 L1128 440.5 L1130 440.4 L1132 440.3 L1134 440.2 L1136 440.0 L1138 439.9 L1140 439.8 L1142 439.7 L1144 439.5 L1146 439.4 L1148 439.3 L1150 439.1 L1152 439.0 L1154 438.9 L1156 438.8 L1158 438.6 L1160 438.5 L1162 438.4 L1164 438.3 L1166 438.1 L1168 438.0 L1170 437.9 L1172 437.8 L1174 437.7 L1176 437.6 L1178 437.5 L1180 437.4 L1182 437.3 L1184 437.2 L1186 437.1 L1188 437.1 L1190 437.0 L1192 436.9 L1194 436.9 L1196 436.9 L1198 436.8 L1200 436.8 L1202 436.7 L1204 436.7 L1206 436.7 L1208 436.6 L1210 436.6 L1212 436.6 L1214 436.5 L1216 436.5 L1218 436.5 L1220 436.5 L1222 436.4 L1224 436.4 L1226 436.4 L1228 436.3 L1230 436.3 L1232 436.3 L1234 436.2 L1236 436.2 L1238 436.2 L1240 436.2 L1242 436.1 L1244 436.1 L1246 436.1 L1248 436.0 L1250 436.0 L1252 436.0 L1254 435.9 L1256 435.9 L1258 435.9 L1260 435.9 L1262 435.8 L1264 435.8 L1266 435.8 L1268 435.7 L1270 435.7 L1272 435.7 L1274 435.6 L1276 435.6 L1278 435.6 L1280 435.6 L1282 435.5 L1284 435.5 L1286 435.5 L1288 435.4 L1290 435.4 L1292 435.4 L1294 435.3 L1296 435.3 L1298 435.3 L1300 435.3 L1302 435.2 L1304 435.2 L1306 435.2 L1308 435.1 L1310 435.1 L1312 435.1 L1314 435.0 L1316 435.0 L1318 435.0 L1320 435.0 L1322 434.9 L1324 434.9 L1326 434.9 L1328 434.8 L1330 434.8 L1332 434.8 L1334 434.7 L1336 434.7 L1338 434.7 L1340 434.6 L1342 434.6 L1344 434.6 L1346 434.6 L1348 434.5 L1350 434.5 L1352 434.5 L1354 434.4 L1356 434.4 L1358 434.4 L1360 434.3 L1362 434.3 L1364 434.3 L1366 434.3 L1368 434.2 L1370 434.2 L1372 434.2 L1374 434.1 L1376 434.1 L1378 434.1 L1380 434.0 L1382 434.0 L1384 434.0 L1386 434.0 L1388 433.9 L1390 433.9 L1392 433.8 L1394 433.8 L1396 433.8 L1398 433.7 L1400 433.7 L1402 433.6 L1404 433.6 L1406 433.5 L1408 433.5 L1410 433.4 L1412 433.3 L1414 433.3 L1416 433.2 L1418 433.1 L1420 433.1 L1422 433.0 L1424 432.9 L1426 432.8 L1428 432.7 L1430 432.6 L1432 432.5 L1434 432.4 L1436 432.3 L1438 432.2 L1440 432.1 L1442 431.9 L1444 431.7 L1446 431.6 L1448 431.4 L1450 431.2 L1452 431.0 L1454 430.8 L1456 430.6 L1458 430.4 L1460 430.2 L1462 430.0 L1464 429.8 L1466 429.5 L1468 429.3 L1470 429.1 L1472 428.9 L1474 428.7 L1476 428.4 L1478 428.2 L1480 428.0 L1482 427.8 L1484 427.6 L1486 427.4 L1488 427.2 L1490 427.0 L1492 426.8 L1494 426.7 L1496 426.5 L1498 426.4 L1500 426.3 L1502 426.2 L1504 426.1 L1506 426.0 L1508 425.9 L1510 425.8 L1512 425.8 L1514 425.7 L1516 425.7 L1518 425.6 L1520 425.6 L1522 425.5 L1524 425.5 L1526 425.5 L1528 425.4 L1530 425.4 L1532 425.3 L1534 425.3 L1536 425.3 L1538 425.2 L1540 425.2 L1542 425.1 L1544 425.1 L1546 425.1 L1548 425.0 L1550 425.0 L1552 424.9 L1554 424.9 L1556 424.9 L1558 424.8 L1560 424.8 L1562 424.7 L1564 424.7 L1566 424.7 L1568 424.6 L1570 424.6 L1572 424.5 L1574 424.5 L1576 424.5 L1578 424.4 L1580 424.4 L1582 424.4 L1584 424.3 L1586 424.3 L1588 424.2 L1590 424.2 L1592 424.2 L1594 424.1 L1596 424.1 L1598 424.0 L1600 424.0 L1602 424.0 L1604 423.9 L1606 423.9 L1608 423.8 L1610 423.8 L1612 423.7 L1614 423.7 L1616 423.7 L1618 423.6 L1620 423.6 L1622 423.5 L1624 423.5 L1626 423.4 L1628 423.4 L1630 423.4 L1632 423.3 L1634 423.3 L1636 423.2 L1638 423.2 L1640 423.1 L1642 423.1 L1644 423.1 L1646 423.0 L1648 423.0 L1650 422.9 L1652 422.9 L1654 422.8 L1656 422.8 L1658 422.7 L1660 422.7 L1662 422.7 L1664 422.6 L1666 422.6 L1668 422.5 L1670 422.5 L1672 422.4 L1674 422.4 L1676 422.4 L1678 422.3 L1680 422.3 L1682 422.2 L1684 422.2 L1686 422.1 L1688 422.1 L1690 422.1 L1692 422.0 L1694 422.0 L1696 421.9 L1698 421.9 L1700 421.8 L1702 421.8 L1704 421.8 L1706 421.7 L1708 421.7 L1710 421.6 L1712 421.6 L1714 421.5 L1716 421.5 L1718 421.5 L1720 421.4 L1722 421.4 L1724 421.3 L1726 421.3 L1728 421.2 L1730 421.2 L1732 421.2 L1734 421.1 L1736 421.1 L1738 421.0 L1740 421.0 L1742 420.9 L1744 420.9 L1746 420.8 L1748 420.8 L1750 420.8 L1752 420.7 L1754 420.7 L1756 420.6 L1758 420.6 L1760 420.5 L1762 420.5 L1764 420.5 L1766 420.4 L1768 420.4 L1770 420.3 L1772 420.3 L1774 420.2 L1776 420.2 L1778 420.2 L1780 420.1 L1782 420.1 L1784 420.0 L1786 420.0 L1788 419.9 L1790 419.9 L1792 419.9 L1794 419.8 L1796 419.8 L1798 419.7 L1800 419.7 L1802 419.6 L1804 419.6 L1806 419.6 L1808 419.5 L1810 419.5 L1812 419.4 L1814 419.4 L1816 419.3 L1818 419.3 L1820 419.3 L1822 419.2 L1824 419.2 L1826 419.1 L1828 419.1 L1830 419.0 L1832 419.0 L1834 418.9 L1836 418.9 L1838 418.9 L1840 418.8 L1842 418.8 L1844 418.7 L1846 418.7 L1848 418.6 L1850 418.6 L1852 418.6 L1854 418.5 L1856 418.5 L1858 418.4 L1860 418.4 L1862 418.3 L1864 418.3 L1866 418.2 L1868 418.2 L1870 418.1 L1872 418.1 L1874 418.0 L1876 418.0 L1878 417.9 L1880 417.8 L1882 417.8 L1884 417.7 L1886 417.6 L1888 417.5 L1890 417.5 L1892 417.4 L1894 417.3 L1896 417.2 L1898 417.1 L1900 417.0 L1902 417.0 L1904 416.9 L1906 416.8 L1908 416.7 L1910 416.6 L1912 416.5 L1914 416.4 L1916 416.3 L1918 416.1 L1920 416.0 L1922 415.9 L1924 415.7 L1926 415.6 L1928 415.4 L1930 415.2 L1932 415.1 L1934 414.9 L1936 414.7 L1938 414.5 L1940 414.3 L1942 414.1 L1944 413.9 L1946 413.7 L1948 413.5 L1950 413.2 L1952 413.0 L1954 412.8 L1956 412.6 L1958 412.4 L1960 412.2 L1962 412.0 L1964 411.8 L1966 411.6 L1968 411.3 L1970 411.1 L1972 410.9 L1974 410.7 L1976 410.5 L1978 410.3 L1980 410.1 L1982 409.9 L1984 409.8 L1986 409.6 L1988 409.4 L1990 409.3 L1992 409.2 L1994 409.1 L1996 409.0 L1998 408.9 L2000 408.8 L2002 408.7 L2004 408.7 L2006 408.6 L2008 408.6 L2010 408.5 L2012 408.5 L2014 408.5 L2016 408.4 L2018 408.4 L2020 408.4 L2022 408.4 L2024 408.4 L2026 408.3 L2028 408.3 L2030 408.3 L2032 408.3 L2034 408.2 L2036 408.2 L2038 408.2 L2040 408.2 L2042 408.2 L2044 408.1 L2046 408.1 L2048 408.1 L2050 408.1 L2052 408.1 L2054 408.0 L2056 408.0 L2058 408.0 L2060 408.0 L2062 407.9 L2064 407.9 L2066 407.9 L2068 407.9 L2070 407.9 L2072 407.8 L2074 407.8 L2076 407.8 L2078 407.8 L2080 407.7 L2082 407.7 L2084 407.7 L2086 407.7 L2088 407.7 L2090 407.6 L2092 407.6 L2094 407.6 L2096 407.6 L2098 407.5 L2100 407.5 L2102 407.5 L2104 407.5 L2106 407.5 L2108 407.4 L2110 407.4 L2112 407.4 L2114 407.4 L2116 407.3 L2118 407.3 L2120 407.3 L2122 407.3 L2124 407.3 L2126 407.2 L2128 407.2 L2130 407.2 L2132 407.2 L2134 407.1 L2136 407.1 L2138 407.1 L2140 407.1 L2142 407.1 L2144 407.0 L2146 407.0 L2148 407.0 L2150 407.0 L2152 407.0 L2154 406.9 L2156 406.9 L2158 406.9 L2160 406.9 L2162 406.8 L2164 406.8 L2166 406.8 L2168 406.8 L2170 406.8 L2172 406.7 L2174 406.7 L2176 406.7 L2178 406.7 L2180 406.6 L2182 406.6 L2184 406.6 L2186 406.6 L2188 406.5 L2190 406.5 L2192 406.5 L2194 406.5 L2196 406.4 L2198 406.4 L2200 406.3 L2202 406.3 L2204 406.2 L2206 406.2 L2208 406.1 L2210 406.1 L2212 406.0 L2214 405.9 L2216 405.9 L2218 405.8 L2220 405.7 L2222 405.7 L2224 405.6 L2226 405.5 L2228 405.4 L2230 405.4 L2232 405.3 L2234 405.2 L2236 405.1 L2238 405.1 L2240 405.0 L2242 404.9 L2244 404.8 L2246 404.8 L2248 404.7 L2250 404.6 L2252 404.6 L2254 404.5 L2256 404.4 L2258 404.3 L2260 404.3 L2262 404.2 L2264 404.1 L2266 404.0 L2268 404.0 L2270 403.9 L2272 403.8 L2274 403.7 L2276 403.7 L2278 403.6 L2280 403.5 L2282 403.5 L2284 403.4 L2286 403.3 L2288 403.3 L2290 403.2 L2292 403.2 L2294 403.1 L2296 403.1 L2298 403.0 L2300 403.0 L2302 403.0 L2304 402.9 L2306 402.9 L2308 402.9 L2310 402.8 L2312 402.8 L2314 402.8 L2316 402.8 L2318 402.8 L2320 402.7 L2322 402.7 L2324 402.7 L2326 402.7 L2328 402.7 L2330 402.6 L2332 402.6 L2334 402.6 L2336 402.6 L2338 402.6 L2340 402.5 L2342 402.5 L2344 402.5 L2346 402.5 L2348 402.5 L2350 402.4 L2352 402.4 L2354 402.4 L2356 402.4 L2358 402.4 L2360 402.3 L2362 402.3 L2364 402.3 L2366 402.3 L2368 402.3 L2370 402.2 L2372 402.2 L2374 402.2 L2376 402.2 L2378 402.2 L2380 402.1 L2382 402.1 L2384 402.1 L2386 402.1 L2388 402.1 L2390 402.0 L2392 402.0 L2394 402.0 L2396 402.0 L2398 402.0 L2400 401.9 L2402 401.9 L2404 401.9 L2406 401.9 L2408 401.8 L2410 401.8 L2412 401.8 L2414 401.8 L2416 401.8 L2418 401.7 L2420 401.7 L2422 401.7 L2424 401.7 L2426 401.7 L2428 401.6 L2430 401.6 L2432 401.6 L2434 401.6 L2436 401.6 L2438 401.5 L2440 401.5 L2442 401.5 L2444 401.5 L2446 401.5 L2448 401.4 L2450 401.4 L2452 401.4 L2454 401.4 L2456 401.4 L2458 401.3 L2460 401.3 L2462 401.3 L2464 401.3 L2466 401.3 L2468 401.2 L2470 401.2 L2472 401.2 L2474 401.2 L2476 401.2 L2478 401.1 L2480 401.1 L2482 401.1 L2484 401.1 L2486 401.1 L2488 401.0 L2490 401.0 L2492 401.0 L2494 401.0 L2496 401.0 L2498 401.0 L2500 400.9 L2502 400.9 L2504 400.9 L2506 400.9 L2508 400.9 L2510 400.9 L2512 400.9" fill="none" stroke="#26a269" stroke-width="2.6" stroke-linejoin="round"/><path d="M654.0 481h5.2v22h-5.2zM658.1 481h1.8v22h-1.8zM662.1 481h1.8v22h-1.8zM666.2 481h1.8v22h-1.8zM670.3 481h5.2v22h-5.2zM674.4 481h1.8v22h-1.8zM678.4 481h1.8v22h-1.8zM682.5 481h1.8v22h-1.8zM686.6 481h5.2v22h-5.2zM690.6 481h1.8v22h-1.8zM694.7 481h1.8v22h-1.8zM698.8 481h1.8v22h-1.8zM702.8 481h5.2v22h-5.2zM706.9 481h1.8v22h-1.8zM711.0 481h1.8v22h-1.8zM715.1 481h1.8v22h-1.8zM719.1 481h1.8v22h-1.8zM723.2 481h1.8v22h-1.8zM727.3 481h1.8v22h-1.8zM731.3 481h1.8v22h-1.8zM735.4 481h1.8v22h-1.8zM739.5 481h1.8v22h-1.8zM743.5 481h1.8v22h-1.8zM747.6 481h1.8v22h-1.8zM751.7 481h1.8v22h-1.8zM755.8 481h1.8v22h-1.8zM759.8 481h1.8v22h-1.8zM763.9 481h1.8v22h-1.8zM772.0 481h1.8v22h-1.8zM776.1 481h1.8v22h-1.8zM780.2 481h1.8v22h-1.8zM784.2 481h1.8v22h-1.8zM788.3 481h1.8v22h-1.8zM792.4 481h1.8v22h-1.8zM796.5 481h1.8v22h-1.8zM800.5 481h1.8v22h-1.8zM804.6 481h1.8v22h-1.8zM808.7 481h1.8v22h-1.8zM812.7 481h1.8v22h-1.8zM816.8 481h1.8v22h-1.8zM820.9 481h1.8v22h-1.8zM824.9 481h1.8v22h-1.8zM829.0 481h1.8v22h-1.8zM833.1 481h1.8v22h-1.8zM837.2 481h1.8v22h-1.8zM841.2 481h1.8v22h-1.8zM845.3 481h1.8v22h-1.8zM849.4 481h5.2v22h-5.2zM853.4 481h5.2v22h-5.2zM857.5 481h1.8v22h-1.8zM861.6 481h5.2v22h-5.2zM865.6 481h5.2v22h-5.2zM873.8 481h1.8v22h-1.8zM877.9 481h1.8v22h-1.8zM881.9 481h5.2v22h-5.2zM886.0 481h1.8v22h-1.8zM890.1 481h5.2v22h-5.2zM894.1 481h1.8v22h-1.8zM898.2 481h5.2v22h-5.2zM902.3 481h1.8v22h-1.8zM906.3 481h1.8v22h-1.8zM910.4 481h1.8v22h-1.8zM914.5 481h5.2v22h-5.2zM922.6 481h1.8v22h-1.8zM926.7 481h5.2v22h-5.2zM930.8 481h5.2v22h-5.2zM934.8 481h1.8v22h-1.8zM938.9 481h1.8v22h-1.8zM943.0 481h1.8v22h-1.8zM947.0 481h1.8v22h-1.8zM951.1 481h1.8v22h-1.8zM955.2 481h1.8v22h-1.8zM959.3 481h1.8v22h-1.8zM963.3 481h5.2v22h-5.2zM967.4 481h1.8v22h-1.8zM971.5 481h1.8v22h-1.8zM975.5 481h1.8v22h-1.8zM979.6 481h5.2v22h-5.2zM983.7 481h1.8v22h-1.8zM987.7 481h1.8v22h-1.8zM991.8 481h1.8v22h-1.8zM995.9 481h5.2v22h-5.2zM1000.0 481h1.8v22h-1.8zM1004.0 481h5.2v22h-5.2zM1008.1 481h1.8v22h-1.8zM1012.2 481h5.2v22h-5.2zM1016.2 481h1.8v22h-1.8zM1020.3 481h5.2v22h-5.2zM1024.4 481h1.8v22h-1.8zM1028.4 481h5.2v22h-5.2zM1032.5 481h1.8v22h-1.8zM1036.6 481h1.8v22h-1.8zM1040.7 481h1.8v22h-1.8zM1044.7 481h5.2v22h-5.2zM1048.8 481h5.2v22h-5.2zM1056.9 481h1.8v22h-1.8zM1061.0 481h5.2v22h-5.2zM1065.1 481h1.8v22h-1.8zM1069.1 481h1.8v22h-1.8zM1073.2 481h1.8v22h-1.8zM1077.3 481h5.2v22h-5.2zM1081.4 481h1.8v22h-1.8zM1085.4 481h1.8v22h-1.8zM1089.5 481h1.8v22h-1.8zM1093.6 481h5.2v22h-5.2zM1097.6 481h1.8v22h-1.8zM1101.7 481h5.2v22h-5.2zM1105.8 481h1.8v22h-1.8zM1109.8 481h5.2v22h-5.2zM1113.9 481h1.8v22h-1.8zM1118.0 481h5.2v22h-5.2zM1122.1 481h1.8v22h-1.8zM1126.1 481h5.2v22h-5.2zM1130.2 481h1.8v22h-1.8zM1134.3 481h1.8v22h-1.8zM1138.3 481h1.8v22h-1.8zM1142.4 481h5.2v22h-5.2zM1146.5 481h1.8v22h-1.8zM1150.5 481h1.8v22h-1.8zM1154.6 481h1.8v22h-1.8zM1158.7 481h5.2v22h-5.2zM1162.8 481h1.8v22h-1.8zM1166.8 481h1.8v22h-1.8zM1170.9 481h1.8v22h-1.8zM1175.0 481h5.2v22h-5.2zM1179.0 481h1.8v22h-1.8zM1183.1 481h1.8v22h-1.8zM1187.2 481h1.8v22h-1.8zM1191.2 481h5.2v22h-5.2zM1195.3 481h1.8v22h-1.8zM1199.4 481h1.8v22h-1.8zM1203.5 481h1.8v22h-1.8zM1207.5 481h5.2v22h-5.2zM1211.6 481h1.8v22h-1.8zM1215.7 481h1.8v22h-1.8zM1219.7 481h1.8v22h-1.8zM1223.8 481h5.2v22h-5.2zM1227.9 481h1.8v22h-1.8zM1231.9 481h1.8v22h-1.8zM1236.0 481h1.8v22h-1.8zM1240.1 481h5.2v22h-5.2zM1244.2 481h1.8v22h-1.8zM1248.2 481h1.8v22h-1.8zM1252.3 481h5.2v22h-5.2zM1256.4 481h5.2v22h-5.2zM1260.4 481h1.8v22h-1.8zM1264.5 481h1.8v22h-1.8zM1268.6 481h1.8v22h-1.8zM1272.6 481h5.2v22h-5.2zM1276.7 481h1.8v22h-1.8zM1280.8 481h1.8v22h-1.8zM1284.9 481h1.8v22h-1.8zM1288.9 481h1.8v22h-1.8zM1293.0 481h1.8v22h-1.8zM1297.1 481h1.8v22h-1.8zM1301.1 481h1.8v22h-1.8zM1305.2 481h1.8v22h-1.8zM1309.3 481h1.8v22h-1.8zM1313.3 481h1.8v22h-1.8zM1317.4 481h1.8v22h-1.8zM1321.5 481h1.8v22h-1.8zM1325.5 481h1.8v22h-1.8zM1329.6 481h1.8v22h-1.8zM1333.7 481h1.8v22h-1.8zM1337.8 481h1.8v22h-1.8zM1341.8 481h1.8v22h-1.8zM1345.9 481h1.8v22h-1.8zM1350.0 481h1.8v22h-1.8zM1354.0 481h1.8v22h-1.8zM1358.1 481h1.8v22h-1.8zM1362.2 481h1.8v22h-1.8zM1366.2 481h1.8v22h-1.8zM1370.3 481h1.8v22h-1.8zM1374.4 481h1.8v22h-1.8zM1378.5 481h1.8v22h-1.8zM1382.5 481h1.8v22h-1.8zM1386.6 481h1.8v22h-1.8zM1390.7 481h1.8v22h-1.8zM1394.7 481h1.8v22h-1.8zM1398.8 481h1.8v22h-1.8zM1402.9 481h1.8v22h-1.8zM1406.9 481h1.8v22h-1.8zM1411.0 481h1.8v22h-1.8zM1415.1 481h1.8v22h-1.8zM1419.2 481h1.8v22h-1.8zM1423.2 481h1.8v22h-1.8zM1427.3 481h1.8v22h-1.8zM1431.4 481h1.8v22h-1.8zM1435.4 481h1.8v22h-1.8zM1439.5 481h1.8v22h-1.8zM1443.6 481h1.8v22h-1.8zM1447.6 481h1.8v22h-1.8zM1451.7 481h5.2v22h-5.2zM1455.8 481h1.8v22h-1.8zM1459.9 481h1.8v22h-1.8zM1463.9 481h1.8v22h-1.8zM1468.0 481h5.2v22h-5.2zM1472.1 481h5.2v22h-5.2zM1480.2 481h1.8v22h-1.8zM1484.3 481h5.2v22h-5.2zM1488.3 481h1.8v22h-1.8zM1492.4 481h1.8v22h-1.8zM1496.5 481h1.8v22h-1.8zM1500.6 481h5.2v22h-5.2zM1504.6 481h1.8v22h-1.8zM1508.7 481h1.8v22h-1.8zM1512.8 481h1.8v22h-1.8zM1516.8 481h5.2v22h-5.2zM1520.9 481h1.8v22h-1.8zM1525.0 481h1.8v22h-1.8zM1529.0 481h1.8v22h-1.8zM1533.1 481h5.2v22h-5.2zM1537.2 481h1.8v22h-1.8zM1541.3 481h1.8v22h-1.8zM1545.3 481h1.8v22h-1.8zM1549.4 481h5.2v22h-5.2zM1553.5 481h1.8v22h-1.8zM1557.5 481h1.8v22h-1.8zM1561.6 481h1.8v22h-1.8zM1569.7 481h1.8v22h-1.8zM1573.8 481h1.8v22h-1.8zM1577.9 481h1.8v22h-1.8zM1582.0 481h5.2v22h-5.2zM1586.0 481h1.8v22h-1.8zM1590.1 481h1.8v22h-1.8zM1594.2 481h1.8v22h-1.8zM1598.2 481h5.2v22h-5.2zM1602.3 481h1.8v22h-1.8zM1606.4 481h1.8v22h-1.8zM1610.4 481h1.8v22h-1.8zM1614.5 481h1.8v22h-1.8zM1618.6 481h1.8v22h-1.8zM1622.7 481h1.8v22h-1.8zM1626.7 481h1.8v22h-1.8zM1630.8 481h1.8v22h-1.8zM1634.9 481h1.8v22h-1.8zM1638.9 481h1.8v22h-1.8zM1643.0 481h1.8v22h-1.8zM1647.1 481h1.8v22h-1.8zM1651.1 481h1.8v22h-1.8zM1655.2 481h1.8v22h-1.8zM1659.3 481h1.8v22h-1.8zM1663.4 481h1.8v22h-1.8zM1667.4 481h1.8v22h-1.8zM1671.5 481h1.8v22h-1.8zM1675.6 481h1.8v22h-1.8zM1679.6 481h1.8v22h-1.8zM1683.7 481h1.8v22h-1.8zM1687.8 481h1.8v22h-1.8zM1691.8 481h1.8v22h-1.8zM1695.9 481h1.8v22h-1.8zM1700.0 481h1.8v22h-1.8zM1704.1 481h1.8v22h-1.8zM1708.1 481h1.8v22h-1.8zM1712.2 481h1.8v22h-1.8zM1716.3 481h1.8v22h-1.8zM1720.3 481h1.8v22h-1.8zM1724.4 481h1.8v22h-1.8zM1728.5 481h1.8v22h-1.8zM1732.5 481h1.8v22h-1.8zM1736.6 481h1.8v22h-1.8zM1740.7 481h1.8v22h-1.8zM1744.8 481h1.8v22h-1.8zM1748.8 481h1.8v22h-1.8zM1752.9 481h1.8v22h-1.8zM1757.0 481h1.8v22h-1.8zM1761.0 481h1.8v22h-1.8zM1765.1 481h1.8v22h-1.8zM1769.2 481h1.8v22h-1.8zM1773.2 481h1.8v22h-1.8zM1777.3 481h1.8v22h-1.8zM1781.4 481h1.8v22h-1.8zM1789.5 481h1.8v22h-1.8zM1793.6 481h1.8v22h-1.8zM1797.7 481h1.8v22h-1.8zM1801.7 481h1.8v22h-1.8zM1805.8 481h1.8v22h-1.8zM1809.9 481h1.8v22h-1.8zM1813.9 481h1.8v22h-1.8zM1818.0 481h1.8v22h-1.8zM1822.1 481h1.8v22h-1.8zM1826.2 481h5.2v22h-5.2zM1830.2 481h1.8v22h-1.8zM1834.3 481h1.8v22h-1.8zM1838.4 481h1.8v22h-1.8zM1842.4 481h5.2v22h-5.2zM1846.5 481h1.8v22h-1.8zM1850.6 481h1.8v22h-1.8zM1854.6 481h5.2v22h-5.2zM1858.7 481h5.2v22h-5.2zM1862.8 481h5.2v22h-5.2zM1866.9 481h1.8v22h-1.8zM1870.9 481h1.8v22h-1.8zM1875.0 481h5.2v22h-5.2zM1879.1 481h1.8v22h-1.8zM1883.1 481h5.2v22h-5.2zM1887.2 481h1.8v22h-1.8zM1891.3 481h5.2v22h-5.2zM1895.3 481h1.8v22h-1.8zM1899.4 481h1.8v22h-1.8zM1903.5 481h1.8v22h-1.8zM1907.6 481h5.2v22h-5.2zM1911.6 481h1.8v22h-1.8zM1915.7 481h1.8v22h-1.8zM1919.8 481h1.8v22h-1.8zM1923.8 481h5.2v22h-5.2zM1927.9 481h1.8v22h-1.8zM1932.0 481h1.8v22h-1.8zM1936.0 481h1.8v22h-1.8zM1940.1 481h5.2v22h-5.2zM1944.2 481h1.8v22h-1.8zM1948.3 481h1.8v22h-1.8zM1952.3 481h1.8v22h-1.8zM1956.4 481h5.2v22h-5.2zM1960.5 481h1.8v22h-1.8zM1964.5 481h1.8v22h-1.8zM1968.6 481h1.8v22h-1.8zM1972.7 481h5.2v22h-5.2zM1976.7 481h1.8v22h-1.8zM1980.8 481h1.8v22h-1.8zM1984.9 481h1.8v22h-1.8zM1989.0 481h5.2v22h-5.2zM1993.0 481h1.8v22h-1.8zM1997.1 481h5.2v22h-5.2zM2005.2 481h5.2v22h-5.2zM2009.3 481h1.8v22h-1.8zM2013.4 481h5.2v22h-5.2zM2017.4 481h1.8v22h-1.8zM2021.5 481h5.2v22h-5.2zM2025.6 481h1.8v22h-1.8zM2033.7 481h1.8v22h-1.8zM2037.8 481h5.2v22h-5.2zM2041.9 481h1.8v22h-1.8zM2045.9 481h1.8v22h-1.8zM2050.0 481h1.8v22h-1.8zM2054.1 481h5.2v22h-5.2zM2058.1 481h1.8v22h-1.8zM2062.2 481h1.8v22h-1.8zM2066.3 481h1.8v22h-1.8zM2070.4 481h5.2v22h-5.2zM2074.4 481h1.8v22h-1.8zM2078.5 481h5.2v22h-5.2zM2082.6 481h1.8v22h-1.8zM2086.6 481h5.2v22h-5.2zM2090.7 481h1.8v22h-1.8zM2094.8 481h1.8v22h-1.8zM2098.8 481h1.8v22h-1.8zM2102.9 481h5.2v22h-5.2zM2107.0 481h1.8v22h-1.8zM2111.1 481h5.2v22h-5.2zM2115.1 481h1.8v22h-1.8zM2119.2 481h5.2v22h-5.2zM2123.3 481h1.8v22h-1.8zM2127.3 481h1.8v22h-1.8zM2131.4 481h5.2v22h-5.2zM2135.5 481h5.2v22h-5.2zM2139.5 481h1.8v22h-1.8zM2143.6 481h1.8v22h-1.8zM2147.7 481h1.8v22h-1.8zM2151.8 481h1.8v22h-1.8zM2155.8 481h1.8v22h-1.8zM2159.9 481h1.8v22h-1.8zM2164.0 481h1.8v22h-1.8zM2168.0 481h1.8v22h-1.8zM2172.1 481h1.8v22h-1.8zM2176.2 481h1.8v22h-1.8zM2180.2 481h1.8v22h-1.8zM2184.3 481h1.8v22h-1.8zM2188.4 481h1.8v22h-1.8zM2192.5 481h1.8v22h-1.8zM2196.5 481h1.8v22h-1.8zM2200.6 481h1.8v22h-1.8zM2204.7 481h1.8v22h-1.8zM2208.7 481h1.8v22h-1.8zM2212.8 481h1.8v22h-1.8zM2216.9 481h1.8v22h-1.8zM2220.9 481h1.8v22h-1.8zM2229.1 481h1.8v22h-1.8zM2233.2 481h1.8v22h-1.8zM2241.3 481h1.8v22h-1.8zM2245.4 481h1.8v22h-1.8zM2249.4 481h1.8v22h-1.8zM2253.5 481h1.8v22h-1.8zM2257.6 481h1.8v22h-1.8zM2261.6 481h1.8v22h-1.8zM2265.7 481h1.8v22h-1.8zM2269.8 481h1.8v22h-1.8zM2273.9 481h1.8v22h-1.8zM2277.9 481h1.8v22h-1.8zM2282.0 481h1.8v22h-1.8zM2286.1 481h1.8v22h-1.8zM2290.1 481h1.8v22h-1.8zM2294.2 481h1.8v22h-1.8zM2298.3 481h1.8v22h-1.8zM2302.3 481h1.8v22h-1.8zM2306.4 481h1.8v22h-1.8zM2310.5 481h1.8v22h-1.8zM2314.6 481h1.8v22h-1.8zM2318.6 481h1.8v22h-1.8zM2322.7 481h1.8v22h-1.8zM2326.8 481h1.8v22h-1.8zM2330.8 481h5.2v22h-5.2zM2334.9 481h1.8v22h-1.8zM2339.0 481h1.8v22h-1.8zM2343.1 481h1.8v22h-1.8zM2347.1 481h5.2v22h-5.2zM2351.2 481h5.2v22h-5.2zM2355.3 481h1.8v22h-1.8zM2359.3 481h1.8v22h-1.8zM2363.4 481h5.2v22h-5.2zM2367.5 481h1.8v22h-1.8zM2371.5 481h1.8v22h-1.8zM2375.6 481h1.8v22h-1.8zM2379.7 481h5.2v22h-5.2zM2383.8 481h1.8v22h-1.8zM2387.8 481h1.8v22h-1.8zM2391.9 481h1.8v22h-1.8zM2396.0 481h5.2v22h-5.2zM2400.0 481h1.8v22h-1.8zM2404.1 481h1.8v22h-1.8zM2408.2 481h1.8v22h-1.8zM2412.2 481h5.2v22h-5.2zM2416.3 481h1.8v22h-1.8zM2420.4 481h1.8v22h-1.8zM2424.5 481h1.8v22h-1.8zM2428.5 481h5.2v22h-5.2zM2432.6 481h1.8v22h-1.8zM2436.7 481h1.8v22h-1.8zM2440.7 481h1.8v22h-1.8zM2444.8 481h5.2v22h-5.2zM2448.9 481h1.8v22h-1.8zM2452.9 481h1.8v22h-1.8zM2457.0 481h1.8v22h-1.8zM2461.1 481h5.2v22h-5.2zM2465.2 481h1.8v22h-1.8zM2469.2 481h1.8v22h-1.8zM2473.3 481h1.8v22h-1.8zM2477.4 481h5.2v22h-5.2zM2481.4 481h5.2v22h-5.2zM2489.6 481h1.8v22h-1.8zM2493.6 481h5.2v22h-5.2zM2497.7 481h1.8v22h-1.8zM2501.8 481h1.8v22h-1.8zM2505.9 481h1.8v22h-1.8zM2509.9 481h1.8v22h-1.8zM2514.0 481h1.8v22h-1.8zM2518.1 481h1.8v22h-1.8zM2522.1 481h1.8v22h-1.8zM2526.2 481h1.8v22h-1.8zM2534.3 481h1.8v22h-1.8zM2538.4 481h1.8v22h-1.8zM2542.5 481h1.8v22h-1.8z" fill="#000"/><path d="M654 564 L654 564.0 L656 564.0 L658 564.0 L660 564.0 L662 564.0 L664 564.0 L666 564.0 L668 564.0 L670 564.0 L672 564.0 L674 564.0 L676 564.0 L678 564.0 L680 564.0 L682 564.0 L684 564.0 L686 564.0 L688 564.0 L690 564.0 L692 563.9 L694 563.7 L696 563.2 L698 562.5 L700 561.7 L702 561.1 L704 561.1 L706 561.7 L708 562.5 L710 563.2 L712 563.7 L714 563.9 L716 564.0 L718 564.0 L720 564.0 L722 564.0 L724 564.0 L726 564.0 L728 564.0 L730 564.0 L732 564.0 L734 564.0 L736 564.0 L738 564.0 L740 564.0 L742 564.0 L744 564.0 L746 564.0 L748 564.0 L750 564.0 L752 564.0 L754 564.0 L756 564.0 L758 564.0 L760 564.0 L762 564.0 L764 564.0 L766 564.0 L768 564.0 L770 564.0 L772 564.0 L774 564.0 L776 564.0 L778 564.0 L780 564.0 L782 564.0 L784 564.0 L786 564.0 L788 564.0 L790 564.0 L792 564.0 L794 564.0 L796 564.0 L798 564.0 L800 564.0 L802 564.0 L804 564.0 L806 564.0 L808 564.0 L810 564.0 L812 564.0 L814 564.0 L816 564.0 L818 564.0 L820 564.0 L822 564.0 L824 564.0 L826 564.0 L828 564.0 L830 564.0 L832 564.0 L834 564.0 L836 564.0 L838 564.0 L840 564.0 L842 564.0 L844 564.0 L846 564.0 L848 564.0 L850 564.0 L852 564.0 L854 564.0 L856 564.0 L858 564.0 L860 564.0 L862 564.0 L864 564.0 L866 564.0 L868 564.0 L870 564.0 L872 564.0 L874 564.0 L876 564.0 L878 564.0 L880 564.0 L882 564.0 L884 564.0 L886 564.0 L888 564.0 L890 564.0 L892 564.0 L894 564.0 L896 564.0 L898 564.0 L900 564.0 L902 564.0 L904 564.0 L906 564.0 L908 564.0 L910 564.0 L912 564.0 L914 564.0 L916 564.0 L918 564.0 L920 564.0 L922 564.0 L924 564.0 L926 564.0 L928 564.0 L930 564.0 L932 564.0 L934 564.0 L936 564.0 L938 564.0 L940 564.0 L942 564.0 L944 564.0 L946 564.0 L948 564.0 L950 564.0 L952 564.0 L954 564.0 L956 564.0 L958 564.0 L960 564.0 L962 564.0 L964 564.0 L966 564.0 L968 564.0 L970 564.0 L972 564.0 L974 564.0 L976 564.0 L978 564.0 L980 564.0 L982 564.0 L984 564.0 L986 564.0 L988 564.0 L990 564.0 L992 564.0 L994 564.0 L996 564.0 L998 564.0 L1000 564.0 L1002 564.0 L1004 564.0 L1006 564.0 L1008 564.0 L1010 564.0 L1012 564.0 L1014 564.0 L1016 564.0 L1018 564.0 L1020 564.0 L1022 564.0 L1024 564.0 L1026 564.0 L1028 564.0 L1030 564.0 L1032 564.0 L1034 564.0 L1036 564.0 L1038 564.0 L1040 564.0 L1042 564.0 L1044 564.0 L1046 564.0 L1048 564.0 L1050 564.0 L1052 564.0 L1054 564.0 L1056 564.0 L1058 564.0 L1060 564.0 L1062 564.0 L1064 564.0 L1066 564.0 L1068 564.0 L1070 564.0 L1072 564.0 L1074 564.0 L1076 564.0 L1078 563.9 L1080 563.8 L1082 563.5 L1084 563.0 L1086 562.4 L1088 562.1 L1090 562.1 L1092 562.4 L1094 563.0 L1096 563.5 L1098 563.8 L1100 563.9 L1102 564.0 L1104 564.0 L1106 564.0 L1108 564.0 L1110 564.0 L1112 564.0 L1114 564.0 L1116 564.0 L1118 564.0 L1120 564.0 L1122 564.0 L1124 564.0 L1126 564.0 L1128 564.0 L1130 564.0 L1132 564.0 L1134 564.0 L1136 564.0 L1138 564.0 L1140 564.0 L1142 564.0 L1144 564.0 L1146 564.0 L1148 564.0 L1150 564.0 L1152 564.0 L1154 564.0 L1156 564.0 L1158 564.0 L1160 564.0 L1162 564.0 L1164 564.0 L1166 564.0 L1168 564.0 L1170 564.0 L1172 564.0 L1174 564.0 L1176 564.0 L1178 564.0 L1180 564.0 L1182 564.0 L1184 564.0 L1186 564.0 L1188 564.0 L1190 564.0 L1192 564.0 L1194 564.0 L1196 564.0 L1198 564.0 L1200 564.0 L1202 564.0 L1204 564.0 L1206 564.0 L1208 564.0 L1210 564.0 L1212 564.0 L1214 564.0 L1216 564.0 L1218 564.0 L1220 564.0 L1222 564.0 L1224 564.0 L1226 564.0 L1228 564.0 L1230 564.0 L1232 564.0 L1234 564.0 L1236 564.0 L1238 564.0 L1240 564.0 L1242 564.0 L1244 564.0 L1246 564.0 L1248 564.0 L1250 564.0 L1252 564.0 L1254 564.0 L1256 564.0 L1258 564.0 L1260 564.0 L1262 564.0 L1264 564.0 L1266 564.0 L1268 564.0 L1270 564.0 L1272 564.0 L1274 564.0 L1276 564.0 L1278 564.0 L1280 564.0 L1282 564.0 L1284 564.0 L1286 564.0 L1288 564.0 L1290 564.0 L1292 564.0 L1294 564.0 L1296 564.0 L1298 564.0 L1300 564.0 L1302 564.0 L1304 564.0 L1306 564.0 L1308 564.0 L1310 564.0 L1312 564.0 L1314 564.0 L1316 564.0 L1318 564.0 L1320 564.0 L1322 564.0 L1324 564.0 L1326 564.0 L1328 564.0 L1330 564.0 L1332 564.0 L1334 564.0 L1336 564.0 L1338 564.0 L1340 564.0 L1342 564.0 L1344 564.0 L1346 564.0 L1348 564.0 L1350 564.0 L1352 564.0 L1354 564.0 L1356 564.0 L1358 564.0 L1360 564.0 L1362 564.0 L1364 564.0 L1366 564.0 L1368 564.0 L1370 564.0 L1372 564.0 L1374 564.0 L1376 564.0 L1378 564.0 L1380 564.0 L1382 564.0 L1384 564.0 L1386 564.0 L1388 564.0 L1390 564.0 L1392 564.0 L1394 564.0 L1396 564.0 L1398 564.0 L1400 564.0 L1402 564.0 L1404 564.0 L1406 564.0 L1408 564.0 L1410 564.0 L1412 564.0 L1414 564.0 L1416 564.0 L1418 564.0 L1420 564.0 L1422 564.0 L1424 564.0 L1426 564.0 L1428 564.0 L1430 564.0 L1432 564.0 L1434 564.0 L1436 564.0 L1438 564.0 L1440 564.0 L1442 564.0 L1444 564.0 L1446 564.0 L1448 564.0 L1450 564.0 L1452 564.0 L1454 564.0 L1456 564.0 L1458 564.0 L1460 564.0 L1462 564.0 L1464 564.0 L1466 564.0 L1468 564.0 L1470 564.0 L1472 564.0 L1474 564.0 L1476 564.0 L1478 564.0 L1480 564.0 L1482 564.0 L1484 564.0 L1486 564.0 L1488 564.0 L1490 564.0 L1492 563.9 L1494 563.9 L1496 563.8 L1498 563.8 L1500 563.7 L1502 563.5 L1504 563.4 L1506 563.2 L1508 562.9 L1510 562.7 L1512 562.5 L1514 562.3 L1516 562.1 L1518 562.0 L1520 562.0 L1522 562.0 L1524 562.1 L1526 562.3 L1528 562.5 L1530 562.7 L1532 562.9 L1534 563.2 L1536 563.4 L1538 563.5 L1540 563.7 L1542 563.8 L1544 563.8 L1546 563.9 L1548 563.9 L1550 564.0 L1552 564.0 L1554 564.0 L1556 564.0 L1558 564.0 L1560 564.0 L1562 564.0 L1564 564.0 L1566 564.0 L1568 564.0 L1570 564.0 L1572 564.0 L1574 564.0 L1576 564.0 L1578 564.0 L1580 564.0 L1582 564.0 L1584 564.0 L1586 564.0 L1588 564.0 L1590 564.0 L1592 564.0 L1594 564.0 L1596 564.0 L1598 564.0 L1600 564.0 L1602 564.0 L1604 564.0 L1606 564.0 L1608 564.0 L1610 564.0 L1612 564.0 L1614 564.0 L1616 564.0 L1618 564.0 L1620 564.0 L1622 563.9 L1624 563.8 L1626 563.5 L1628 563.0 L1630 562.4 L1632 562.1 L1634 562.1 L1636 562.4 L1638 563.0 L1640 563.5 L1642 563.8 L1644 563.9 L1646 564.0 L1648 564.0 L1650 564.0 L1652 564.0 L1654 564.0 L1656 564.0 L1658 564.0 L1660 564.0 L1662 564.0 L1664 564.0 L1666 564.0 L1668 564.0 L1670 564.0 L1672 564.0 L1674 564.0 L1676 564.0 L1678 564.0 L1680 564.0 L1682 564.0 L1684 564.0 L1686 564.0 L1688 564.0 L1690 564.0 L1692 564.0 L1694 564.0 L1696 564.0 L1698 564.0 L1700 564.0 L1702 564.0 L1704 564.0 L1706 564.0 L1708 564.0 L1710 564.0 L1712 564.0 L1714 564.0 L1716 564.0 L1718 564.0 L1720 564.0 L1722 564.0 L1724 564.0 L1726 564.0 L1728 564.0 L1730 564.0 L1732 564.0 L1734 564.0 L1736 564.0 L1738 564.0 L1740 564.0 L1742 564.0 L1744 564.0 L1746 564.0 L1748 564.0 L1750 564.0 L1752 564.0 L1754 564.0 L1756 564.0 L1758 564.0 L1760 564.0 L1762 564.0 L1764 564.0 L1766 564.0 L1768 564.0 L1770 564.0 L1772 564.0 L1774 564.0 L1776 564.0 L1778 564.0 L1780 564.0 L1782 564.0 L1784 564.0 L1786 564.0 L1788 564.0 L1790 564.0 L1792 564.0 L1794 564.0 L1796 564.0 L1798 564.0 L1800 564.0 L1802 564.0 L1804 564.0 L1806 564.0 L1808 564.0 L1810 564.0 L1812 564.0 L1814 564.0 L1816 564.0 L1818 564.0 L1820 564.0 L1822 564.0 L1824 564.0 L1826 564.0 L1828 564.0 L1830 564.0 L1832 564.0 L1834 564.0 L1836 564.0 L1838 564.0 L1840 564.0 L1842 564.0 L1844 564.0 L1846 564.0 L1848 564.0 L1850 564.0 L1852 564.0 L1854 564.0 L1856 564.0 L1858 564.0 L1860 564.0 L1862 564.0 L1864 564.0 L1866 564.0 L1868 564.0 L1870 564.0 L1872 564.0 L1874 564.0 L1876 564.0 L1878 564.0 L1880 564.0 L1882 564.0 L1884 564.0 L1886 564.0 L1888 564.0 L1890 564.0 L1892 564.0 L1894 564.0 L1896 564.0 L1898 564.0 L1900 564.0 L1902 564.0 L1904 564.0 L1906 564.0 L1908 564.0 L1910 564.0 L1912 564.0 L1914 564.0 L1916 564.0 L1918 564.0 L1920 564.0 L1922 564.0 L1924 564.0 L1926 564.0 L1928 564.0 L1930 564.0 L1932 564.0 L1934 564.0 L1936 564.0 L1938 564.0 L1940 564.0 L1942 564.0 L1944 564.0 L1946 564.0 L1948 564.0 L1950 564.0 L1952 564.0 L1954 564.0 L1956 564.0 L1958 564.0 L1960 564.0 L1962 564.0 L1964 564.0 L1966 564.0 L1968 564.0 L1970 564.0 L1972 564.0 L1974 564.0 L1976 564.0 L1978 564.0 L1980 563.9 L1982 563.9 L1984 563.7 L1986 563.4 L1988 563.1 L1990 562.6 L1992 562.3 L1994 562.0 L1996 562.0 L1998 562.2 L2000 562.5 L2002 562.7 L2004 562.7 L2006 562.2 L2008 561.3 L2010 560.0 L2012 558.5 L2014 557.4 L2016 557.0 L2018 557.4 L2020 558.5 L2022 560.0 L2024 561.4 L2026 562.5 L2028 563.2 L2030 563.5 L2032 563.2 L2034 562.2 L2036 560.1 L2038 556.8 L2040 552.6 L2042 547.9 L2044 543.4 L2046 539.6 L2048 536.8 L2050 534.9 L2052 533.8 L2054 533.3 L2056 533.0 L2058 533.0 L2060 533.0 L2062 533.0 L2064 533.0 L2066 533.3 L2068 533.8 L2070 534.9 L2072 536.8 L2074 539.6 L2076 543.4 L2078 547.7 L2080 551.8 L2082 554.8 L2084 555.7 L2086 554.5 L2088 552.6 L2090 551.8 L2092 553.2 L2094 556.3 L2096 559.6 L2098 562.0 L2100 563.3 L2102 563.8 L2104 563.9 L2106 564.0 L2108 564.0 L2110 564.0 L2112 564.0 L2114 564.0 L2116 564.0 L2118 564.0 L2120 564.0 L2122 564.0 L2124 564.0 L2126 564.0 L2128 564.0 L2130 564.0 L2132 564.0 L2134 564.0 L2136 564.0 L2138 564.0 L2140 564.0 L2142 564.0 L2144 564.0 L2146 564.0 L2148 564.0 L2150 564.0 L2152 564.0 L2154 564.0 L2156 564.0 L2158 564.0 L2160 564.0 L2162 564.0 L2164 564.0 L2166 564.0 L2168 563.9 L2170 563.9 L2172 563.9 L2174 563.8 L2176 563.7 L2178 563.6 L2180 563.5 L2182 563.3 L2184 563.0 L2186 562.7 L2188 562.3 L2190 561.9 L2192 561.4 L2194 560.9 L2196 560.3 L2198 559.7 L2200 559.1 L2202 558.5 L2204 558.0 L2206 557.6 L2208 557.3 L2210 557.1 L2212 557.0 L2214 557.1 L2216 557.3 L2218 557.6 L2220 558.0 L2222 558.5 L2224 559.1 L2226 559.6 L2228 560.0 L2230 560.3 L2232 560.3 L2234 560.2 L2236 560.0 L2238 559.9 L2240 560.0 L2242 560.4 L2244 561.1 L2246 561.9 L2248 562.6 L2250 563.2 L2252 563.6 L2254 563.8 L2256 563.9 L2258 563.9 L2260 564.0 L2262 564.0 L2264 564.0 L2266 564.0 L2268 564.0 L2270 564.0 L2272 564.0 L2274 564.0 L2276 564.0 L2278 564.0 L2280 564.0 L2282 564.0 L2284 564.0 L2286 564.0 L2288 564.0 L2290 564.0 L2292 564.0 L2294 564.0 L2296 564.0 L2298 564.0 L2300 564.0 L2302 564.0 L2304 564.0 L2306 564.0 L2308 564.0 L2310 564.0 L2312 564.0 L2314 564.0 L2316 564.0 L2318 564.0 L2320 564.0 L2322 564.0 L2324 564.0 L2326 564.0 L2328 564.0 L2330 564.0 L2332 564.0 L2334 564.0 L2336 564.0 L2338 564.0 L2340 564.0 L2342 564.0 L2344 564.0 L2346 564.0 L2348 564.0 L2350 564.0 L2352 564.0 L2354 564.0 L2356 564.0 L2358 564.0 L2360 564.0 L2362 564.0 L2364 564.0 L2366 564.0 L2368 564.0 L2370 564.0 L2372 564.0 L2374 564.0 L2376 564.0 L2378 564.0 L2380 564.0 L2382 564.0 L2384 564.0 L2386 564.0 L2388 564.0 L2390 564.0 L2392 564.0 L2394 564.0 L2396 564.0 L2398 564.0 L2400 564.0 L2402 564.0 L2404 564.0 L2406 564.0 L2408 564.0 L2410 564.0 L2412 564.0 L2414 564.0 L2416 564.0 L2418 564.0 L2420 564.0 L2422 564.0 L2424 564.0 L2426 564.0 L2428 564.0 L2430 564.0 L2432 564.0 L2434 564.0 L2436 564.0 L2438 564.0 L2440 564.0 L2442 564.0 L2444 564.0 L2446 564.0 L2448 564.0 L2450 564.0 L2452 564.0 L2454 564.0 L2456 564.0 L2458 564.0 L2460 564.0 L2462 564.0 L2464 564.0 L2466 564.0 L2468 564.0 L2470 564.0 L2472 564.0 L2474 564.0 L2476 564.0 L2478 564.0 L2480 564.0 L2482 564.0 L2484 564.0 L2486 564.0 L2488 564.0 L2490 564.0 L2492 564.0 L2494 564.0 L2496 564.0 L2498 564.0 L2500 564.0 L2502 564.0 L2504 564.0 L2506 564.0 L2508 564.0 L2510 564.0 L2512 564.0 L2514 564.0 L2516 564.0 L2518 564.0 L2520 564.0 L2522 564.0 L2524 564.0 L2526 564.0 L2528 564.0 L2530 564.0 L2532 564.0 L2534 564.0 L2536 564.0 L2538 564.0 L2540 564.0 L2542 564.0 L2544 564.0 L2546 564.0 L2547 564 Z" fill="rgba(51,209,122,0.5)" stroke="#2ec27e" stroke-width="2"/><path d="M654 564 L654 564.0 L656 564.0 L658 564.0 L660 564.0 L662 564.0 L664 564.0 L666 564.0 L668 564.0 L670 564.0 L672 564.0 L674 564.0 L676 564.0 L678 564.0 L680 564.0 L682 564.0 L684 564.0 L686 564.0 L688 564.0 L690 564.0 L692 564.0 L694 564.0 L696 564.0 L698 564.0 L700 564.0 L702 564.0 L704 564.0 L706 564.0 L708 564.0 L710 564.0 L712 564.0 L714 564.0 L716 564.0 L718 564.0 L720 564.0 L722 564.0 L724 564.0 L726 564.0 L728 564.0 L730 564.0 L732 564.0 L734 564.0 L736 564.0 L738 564.0 L740 564.0 L742 564.0 L744 564.0 L746 564.0 L748 564.0 L750 564.0 L752 564.0 L754 564.0 L756 564.0 L758 564.0 L760 564.0 L762 564.0 L764 564.0 L766 564.0 L768 564.0 L770 564.0 L772 564.0 L774 564.0 L776 564.0 L778 564.0 L780 564.1 L782 564.2 L784 564.5 L786 565.0 L788 565.9 L790 567.2 L792 569.0 L794 571.1 L796 573.0 L798 574.5 L800 575.0 L802 574.5 L804 573.0 L806 571.1 L808 569.0 L810 567.2 L812 565.9 L814 565.0 L816 564.5 L818 564.2 L820 564.1 L822 564.0 L824 564.0 L826 564.0 L828 564.0 L830 564.0 L832 564.0 L834 564.0 L836 564.0 L838 564.0 L840 564.0 L842 564.0 L844 564.0 L846 564.0 L848 564.0 L850 564.0 L852 564.0 L854 564.0 L856 564.0 L858 564.0 L860 564.0 L862 564.0 L864 564.0 L866 564.0 L868 564.0 L870 564.0 L872 564.0 L874 564.0 L876 564.0 L878 564.0 L880 564.0 L882 564.0 L884 564.0 L886 564.0 L888 564.0 L890 564.0 L892 564.0 L894 564.0 L896 564.0 L898 564.0 L900 564.0 L902 564.0 L904 564.0 L906 564.0 L908 564.0 L910 564.0 L912 564.0 L914 564.0 L916 564.0 L918 564.0 L920 564.0 L922 564.0 L924 564.0 L926 564.0 L928 564.0 L930 564.0 L932 564.0 L934 564.0 L936 564.0 L938 564.0 L940 564.0 L942 564.1 L944 564.3 L946 564.5 L948 565.0 L950 565.7 L952 566.7 L954 567.8 L956 568.9 L958 569.7 L960 570.0 L962 569.7 L964 568.9 L966 567.8 L968 566.7 L970 565.7 L972 565.0 L974 564.5 L976 564.3 L978 564.1 L980 564.0 L982 564.0 L984 564.0 L986 564.0 L988 564.0 L990 564.0 L992 564.0 L994 564.0 L996 564.0 L998 564.0 L1000 564.0 L1002 564.0 L1004 564.0 L1006 564.0 L1008 564.0 L1010 564.0 L1012 564.0 L1014 564.0 L1016 564.0 L1018 564.0 L1020 564.0 L1022 564.0 L1024 564.0 L1026 564.0 L1028 564.0 L1030 564.0 L1032 564.0 L1034 564.0 L1036 564.0 L1038 564.0 L1040 564.0 L1042 564.0 L1044 564.0 L1046 564.0 L1048 564.0 L1050 564.0 L1052 564.0 L1054 564.0 L1056 564.0 L1058 564.0 L1060 564.0 L1062 564.0 L1064 564.0 L1066 564.0 L1068 564.0 L1070 564.0 L1072 564.0 L1074 564.0 L1076 564.0 L1078 564.0 L1080 564.0 L1082 564.0 L1084 564.0 L1086 564.0 L1088 564.0 L1090 564.0 L1092 564.0 L1094 564.0 L1096 564.0 L1098 564.0 L1100 564.0 L1102 564.0 L1104 564.0 L1106 564.0 L1108 564.0 L1110 564.0 L1112 564.0 L1114 564.0 L1116 564.0 L1118 564.0 L1120 564.0 L1122 564.0 L1124 564.0 L1126 564.0 L1128 564.0 L1130 564.0 L1132 564.0 L1134 564.0 L1136 564.0 L1138 564.0 L1140 564.0 L1142 564.0 L1144 564.0 L1146 564.0 L1148 564.0 L1150 564.0 L1152 564.0 L1154 564.0 L1156 564.0 L1158 564.0 L1160 564.0 L1162 564.0 L1164 564.0 L1166 564.0 L1168 564.0 L1170 564.0 L1172 564.0 L1174 564.0 L1176 564.0 L1178 564.0 L1180 564.0 L1182 564.0 L1184 564.0 L1186 564.0 L1188 564.0 L1190 564.0 L1192 564.0 L1194 564.0 L1196 564.0 L1198 564.0 L1200 564.0 L1202 564.0 L1204 564.0 L1206 564.0 L1208 564.0 L1210 564.0 L1212 564.0 L1214 564.0 L1216 564.0 L1218 564.0 L1220 564.0 L1222 564.0 L1224 564.0 L1226 564.0 L1228 564.0 L1230 564.0 L1232 564.0 L1234 564.0 L1236 564.0 L1238 564.0 L1240 564.0 L1242 564.0 L1244 564.0 L1246 564.0 L1248 564.0 L1250 564.0 L1252 564.0 L1254 564.0 L1256 564.0 L1258 564.0 L1260 564.0 L1262 564.0 L1264 564.0 L1266 564.0 L1268 564.0 L1270 564.0 L1272 564.0 L1274 564.0 L1276 564.0 L1278 564.0 L1280 564.0 L1282 564.0 L1284 564.0 L1286 564.0 L1288 564.0 L1290 564.0 L1292 564.0 L1294 564.0 L1296 564.0 L1298 564.0 L1300 564.0 L1302 564.0 L1304 564.0 L1306 564.0 L1308 564.0 L1310 564.0 L1312 564.0 L1314 564.0 L1316 564.0 L1318 564.0 L1320 564.0 L1322 564.0 L1324 564.0 L1326 564.0 L1328 564.0 L1330 564.0 L1332 564.0 L1334 564.0 L1336 564.0 L1338 564.0 L1340 564.0 L1342 564.0 L1344 564.0 L1346 564.0 L1348 564.0 L1350 564.0 L1352 564.0 L1354 564.0 L1356 564.0 L1358 564.0 L1360 564.0 L1362 564.0 L1364 564.0 L1366 564.0 L1368 564.0 L1370 564.0 L1372 564.0 L1374 564.0 L1376 564.0 L1378 564.0 L1380 564.0 L1382 564.0 L1384 564.0 L1386 564.0 L1388 564.0 L1390 564.0 L1392 564.0 L1394 564.0 L1396 564.0 L1398 564.0 L1400 564.0 L1402 564.0 L1404 564.0 L1406 564.0 L1408 564.0 L1410 564.0 L1412 564.0 L1414 564.0 L1416 564.0 L1418 564.0 L1420 564.0 L1422 564.0 L1424 564.0 L1426 564.0 L1428 564.0 L1430 564.0 L1432 564.0 L1434 564.0 L1436 564.0 L1438 564.0 L1440 564.0 L1442 564.0 L1444 564.0 L1446 564.0 L1448 564.0 L1450 564.0 L1452 564.0 L1454 564.0 L1456 564.0 L1458 564.0 L1460 564.0 L1462 564.0 L1464 564.0 L1466 564.0 L1468 564.0 L1470 564.0 L1472 564.0 L1474 564.0 L1476 564.0 L1478 564.0 L1480 564.0 L1482 564.0 L1484 564.0 L1486 564.0 L1488 564.0 L1490 564.0 L1492 564.0 L1494 564.0 L1496 564.0 L1498 564.0 L1500 564.0 L1502 564.0 L1504 564.0 L1506 564.0 L1508 564.0 L1510 564.0 L1512 564.0 L1514 564.0 L1516 564.0 L1518 564.0 L1520 564.0 L1522 564.0 L1524 564.0 L1526 564.0 L1528 564.0 L1530 564.0 L1532 564.0 L1534 564.0 L1536 564.0 L1538 564.0 L1540 564.0 L1542 564.0 L1544 564.0 L1546 564.0 L1548 564.0 L1550 564.0 L1552 564.0 L1554 564.0 L1556 564.0 L1558 564.0 L1560 564.0 L1562 564.0 L1564 564.0 L1566 564.0 L1568 564.0 L1570 564.0 L1572 564.0 L1574 564.0 L1576 564.0 L1578 564.0 L1580 564.0 L1582 564.0 L1584 564.0 L1586 564.0 L1588 564.0 L1590 564.0 L1592 564.0 L1594 564.0 L1596 564.0 L1598 564.0 L1600 564.0 L1602 564.0 L1604 564.0 L1606 564.0 L1608 564.0 L1610 564.0 L1612 564.0 L1614 564.0 L1616 564.0 L1618 564.0 L1620 564.0 L1622 564.0 L1624 564.0 L1626 564.0 L1628 564.0 L1630 564.0 L1632 564.0 L1634 564.0 L1636 564.0 L1638 564.0 L1640 564.0 L1642 564.0 L1644 564.0 L1646 564.0 L1648 564.0 L1650 564.0 L1652 564.0 L1654 564.0 L1656 564.0 L1658 564.0 L1660 564.0 L1662 564.0 L1664 564.0 L1666 564.0 L1668 564.0 L1670 564.0 L1672 564.0 L1674 564.0 L1676 564.0 L1678 564.0 L1680 564.0 L1682 564.0 L1684 564.0 L1686 564.0 L1688 564.0 L1690 564.0 L1692 564.0 L1694 564.0 L1696 564.0 L1698 564.0 L1700 564.0 L1702 564.0 L1704 564.0 L1706 564.0 L1708 564.0 L1710 564.0 L1712 564.0 L1714 564.0 L1716 564.0 L1718 564.0 L1720 564.0 L1722 564.0 L1724 564.0 L1726 564.0 L1728 564.0 L1730 564.0 L1732 564.0 L1734 564.0 L1736 564.0 L1738 564.0 L1740 564.0 L1742 564.0 L1744 564.0 L1746 564.0 L1748 564.0 L1750 564.0 L1752 564.0 L1754 564.0 L1756 564.0 L1758 564.0 L1760 564.0 L1762 564.0 L1764 564.0 L1766 564.0 L1768 564.0 L1770 564.0 L1772 564.0 L1774 564.0 L1776 564.0 L1778 564.0 L1780 564.0 L1782 564.0 L1784 564.0 L1786 564.0 L1788 564.0 L1790 564.0 L1792 564.0 L1794 564.0 L1796 564.0 L1798 564.0 L1800 564.0 L1802 564.0 L1804 564.0 L1806 564.0 L1808 564.0 L1810 564.0 L1812 564.0 L1814 564.0 L1816 564.0 L1818 564.0 L1820 564.0 L1822 564.0 L1824 564.0 L1826 564.0 L1828 564.0 L1830 564.0 L1832 564.0 L1834 564.0 L1836 564.0 L1838 564.0 L1840 564.0 L1842 564.0 L1844 564.0 L1846 564.0 L1848 564.0 L1850 564.0 L1852 564.0 L1854 564.0 L1856 564.0 L1858 564.0 L1860 564.0 L1862 564.0 L1864 564.0 L1866 564.0 L1868 564.0 L1870 564.0 L1872 564.0 L1874 564.0 L1876 564.0 L1878 564.0 L1880 564.0 L1882 564.0 L1884 564.0 L1886 564.0 L1888 564.0 L1890 564.0 L1892 564.0 L1894 564.0 L1896 564.0 L1898 564.0 L1900 564.0 L1902 564.0 L1904 564.0 L1906 564.0 L1908 564.0 L1910 564.0 L1912 564.0 L1914 564.0 L1916 564.0 L1918 564.0 L1920 564.0 L1922 564.0 L1924 564.0 L1926 564.0 L1928 564.0 L1930 564.0 L1932 564.0 L1934 564.0 L1936 564.0 L1938 564.0 L1940 564.0 L1942 564.0 L1944 564.0 L1946 564.0 L1948 564.0 L1950 564.0 L1952 564.0 L1954 564.0 L1956 564.0 L1958 564.0 L1960 564.0 L1962 564.0 L1964 564.0 L1966 564.0 L1968 564.0 L1970 564.0 L1972 564.0 L1974 564.0 L1976 564.0 L1978 564.0 L1980 564.0 L1982 564.0 L1984 564.0 L1986 564.0 L1988 564.0 L1990 564.0 L1992 564.0 L1994 564.0 L1996 564.0 L1998 564.0 L2000 564.0 L2002 564.0 L2004 564.0 L2006 564.0 L2008 564.0 L2010 564.0 L2012 564.0 L2014 564.0 L2016 564.0 L2018 564.0 L2020 564.0 L2022 564.0 L2024 564.0 L2026 564.0 L2028 564.0 L2030 564.0 L2032 564.0 L2034 564.0 L2036 564.0 L2038 564.0 L2040 564.0 L2042 564.0 L2044 564.0 L2046 564.0 L2048 564.0 L2050 564.0 L2052 564.0 L2054 564.0 L2056 564.0 L2058 564.0 L2060 564.0 L2062 564.0 L2064 564.0 L2066 564.0 L2068 564.0 L2070 564.0 L2072 564.0 L2074 564.0 L2076 564.0 L2078 564.0 L2080 564.0 L2082 564.0 L2084 564.1 L2086 564.1 L2088 564.2 L2090 564.4 L2092 564.6 L2094 565.0 L2096 565.5 L2098 566.2 L2100 567.0 L2102 567.8 L2104 568.7 L2106 569.4 L2108 569.8 L2110 570.0 L2112 569.8 L2114 569.4 L2116 568.7 L2118 567.8 L2120 567.0 L2122 566.2 L2124 565.5 L2126 565.0 L2128 564.6 L2130 564.4 L2132 564.3 L2134 564.2 L2136 564.4 L2138 564.8 L2140 565.5 L2142 566.6 L2144 568.0 L2146 569.5 L2148 570.6 L2150 571.0 L2152 570.6 L2154 569.5 L2156 568.0 L2158 566.6 L2160 565.6 L2162 565.0 L2164 564.8 L2166 565.0 L2168 565.4 L2170 566.0 L2172 566.6 L2174 567.0 L2176 567.0 L2178 566.6 L2180 566.0 L2182 565.4 L2184 564.8 L2186 564.5 L2188 564.2 L2190 564.1 L2192 564.0 L2194 564.0 L2196 564.0 L2198 564.0 L2200 564.0 L2202 564.0 L2204 564.0 L2206 564.0 L2208 564.0 L2210 564.0 L2212 564.0 L2214 564.0 L2216 564.0 L2218 564.0 L2220 564.0 L2222 564.0 L2224 564.0 L2226 564.0 L2228 564.0 L2230 564.0 L2232 564.0 L2234 564.0 L2236 564.0 L2238 564.0 L2240 564.0 L2242 564.0 L2244 564.0 L2246 564.0 L2248 564.0 L2250 564.0 L2252 564.0 L2254 564.0 L2256 564.0 L2258 564.0 L2260 564.0 L2262 564.0 L2264 564.0 L2266 564.0 L2268 564.0 L2270 564.0 L2272 564.0 L2274 564.0 L2276 564.0 L2278 564.0 L2280 564.0 L2282 564.0 L2284 564.0 L2286 564.0 L2288 564.0 L2290 564.0 L2292 564.0 L2294 564.0 L2296 564.0 L2298 564.0 L2300 564.0 L2302 564.0 L2304 564.0 L2306 564.0 L2308 564.0 L2310 564.0 L2312 564.0 L2314 564.0 L2316 564.0 L2318 564.0 L2320 564.0 L2322 564.0 L2324 564.0 L2326 564.0 L2328 564.0 L2330 564.0 L2332 564.0 L2334 564.0 L2336 564.0 L2338 564.0 L2340 564.0 L2342 564.0 L2344 564.0 L2346 564.0 L2348 564.0 L2350 564.0 L2352 564.0 L2354 564.0 L2356 564.0 L2358 564.0 L2360 564.0 L2362 564.0 L2364 564.0 L2366 564.0 L2368 564.0 L2370 564.1 L2372 564.1 L2374 564.2 L2376 564.3 L2378 564.5 L2380 564.9 L2382 565.3 L2384 565.9 L2386 566.9 L2388 568.3 L2390 570.7 L2392 574.5 L2394 579.7 L2396 586.2 L2398 592.7 L2400 597.4 L2402 598.8 L2404 596.3 L2406 590.6 L2408 583.5 L2410 576.6 L2412 571.2 L2414 567.7 L2416 565.7 L2418 564.7 L2420 564.3 L2422 564.1 L2424 564.0 L2426 564.0 L2428 564.0 L2430 564.0 L2432 564.0 L2434 564.0 L2436 564.0 L2438 564.0 L2440 564.0 L2442 564.0 L2444 564.0 L2446 564.0 L2448 564.0 L2450 564.0 L2452 564.0 L2454 564.0 L2456 564.0 L2458 564.0 L2460 564.0 L2462 564.0 L2464 564.0 L2466 564.0 L2468 564.0 L2470 564.0 L2472 564.0 L2474 564.0 L2476 564.0 L2478 564.0 L2480 564.0 L2482 564.0 L2484 564.0 L2486 564.0 L2488 564.0 L2490 564.0 L2492 564.0 L2494 564.0 L2496 564.0 L2498 564.0 L2500 564.0 L2502 564.0 L2504 564.0 L2506 564.0 L2508 564.0 L2510 564.0 L2512 564.0 L2514 564.0 L2516 564.0 L2518 564.0 L2520 564.0 L2522 564.0 L2524 564.0 L2526 564.0 L2528 564.0 L2530 564.0 L2532 564.0 L2534 564.0 L2536 564.0 L2538 564.0 L2540 564.0 L2542 564.0 L2544 564.0 L2546 564.0 L2547 564 Z" fill="rgba(51,209,122,0.5)" stroke="#2ec27e" stroke-width="2"/><path d="M654 564 H2547" stroke="#2ec27e" stroke-width="2.6"/><path d="M494 564 H654 M2547 564 H2690" stroke="#777" stroke-width="2" stroke-dasharray="2 5"/><path d="M654 635 L654 635.0 L656 635.0 L658 635.0 L660 635.0 L662 635.0 L664 635.0 L666 635.0 L668 635.0 L670 635.0 L672 635.0 L674 635.0 L676 635.0 L678 635.0 L680 635.0 L682 635.0 L684 635.0 L686 635.0 L688 635.0 L690 635.0 L692 635.0 L694 635.0 L696 635.0 L698 635.0 L700 635.0 L702 635.0 L704 635.0 L706 635.0 L708 635.0 L710 635.0 L712 635.0 L714 635.0 L716 635.0 L718 635.0 L720 635.0 L722 635.0 L724 635.0 L726 635.0 L728 635.0 L730 635.0 L732 635.0 L734 635.0 L736 635.0 L738 635.0 L740 635.0 L742 635.0 L744 635.0 L746 635.0 L748 635.0 L750 635.0 L752 635.0 L754 635.0 L756 635.0 L758 635.0 L760 635.0 L762 635.0 L764 635.0 L766 635.0 L768 635.0 L770 635.0 L772 635.0 L774 635.0 L776 635.0 L778 635.0 L780 635.0 L782 635.0 L784 635.0 L786 635.0 L788 635.0 L790 635.0 L792 635.0 L794 635.0 L796 635.0 L798 635.0 L800 635.0 L802 635.0 L804 635.0 L806 635.0 L808 635.0 L810 635.0 L812 635.0 L814 635.0 L816 635.0 L818 635.0 L820 635.0 L822 635.0 L824 635.0 L826 635.0 L828 635.0 L830 635.0 L832 635.0 L834 635.0 L836 635.0 L838 635.0 L840 635.0 L842 635.0 L844 635.0 L846 635.0 L848 635.0 L850 635.0 L852 635.0 L854 635.0 L856 635.0 L858 635.0 L860 635.0 L862 635.0 L864 635.0 L866 635.0 L868 635.0 L870 635.0 L872 635.0 L874 635.0 L876 635.0 L878 635.0 L880 635.0 L882 635.0 L884 635.0 L886 635.0 L888 635.0 L890 635.0 L892 635.0 L894 635.0 L896 635.0 L898 635.0 L900 635.0 L902 635.0 L904 635.0 L906 635.0 L908 635.0 L910 635.0 L912 635.0 L914 635.0 L916 635.0 L918 635.0 L920 635.0 L922 635.0 L924 635.0 L926 635.0 L928 635.0 L930 635.0 L932 635.0 L934 635.0 L936 635.0 L938 635.0 L940 635.0 L942 635.0 L944 635.0 L946 635.0 L948 635.0 L950 635.0 L952 635.0 L954 635.0 L956 635.0 L958 635.0 L960 635.0 L962 635.0 L964 635.0 L966 635.0 L968 635.0 L970 635.0 L972 635.0 L974 635.0 L976 635.0 L978 635.0 L980 635.0 L982 635.0 L984 635.0 L986 635.0 L988 635.0 L990 635.0 L992 635.0 L994 635.0 L996 635.0 L998 635.0 L1000 635.0 L1002 635.0 L1004 635.0 L1006 635.0 L1008 635.0 L1010 635.0 L1012 635.0 L1014 635.0 L1016 635.0 L1018 635.0 L1020 635.0 L1022 635.0 L1024 635.0 L1026 635.0 L1028 635.0 L1030 635.0 L1032 635.0 L1034 635.0 L1036 635.0 L1038 635.0 L1040 635.0 L1042 635.0 L1044 635.0 L1046 635.0 L1048 635.0 L1050 635.0 L1052 635.0 L1054 635.0 L1056 635.0 L1058 635.0 L1060 635.0 L1062 635.0 L1064 635.0 L1066 635.0 L1068 635.0 L1070 635.0 L1072 635.0 L1074 635.0 L1076 635.0 L1078 635.0 L1080 635.0 L1082 635.0 L1084 635.0 L1086 635.0 L1088 635.0 L1090 635.0 L1092 635.0 L1094 635.0 L1096 635.0 L1098 635.0 L1100 635.0 L1102 635.0 L1104 635.0 L1106 635.0 L1108 635.0 L1110 635.0 L1112 635.0 L1114 635.0 L1116 635.0 L1118 635.0 L1120 635.0 L1122 635.0 L1124 635.0 L1126 635.0 L1128 635.0 L1130 635.0 L1132 635.0 L1134 635.0 L1136 635.0 L1138 635.0 L1140 635.0 L1142 635.0 L1144 635.0 L1146 635.0 L1148 635.0 L1150 635.0 L1152 635.0 L1154 635.0 L1156 635.0 L1158 635.0 L1160 635.0 L1162 635.0 L1164 635.0 L1166 635.0 L1168 635.0 L1170 635.0 L1172 635.0 L1174 635.0 L1176 635.0 L1178 635.0 L1180 635.0 L1182 635.0 L1184 635.0 L1186 635.0 L1188 635.0 L1190 635.0 L1192 635.0 L1194 635.0 L1196 635.0 L1198 635.0 L1200 635.0 L1202 635.0 L1204 635.0 L1206 635.0 L1208 635.0 L1210 635.0 L1212 635.0 L1214 635.0 L1216 635.0 L1218 635.0 L1220 635.0 L1222 635.0 L1224 635.0 L1226 635.0 L1228 635.0 L1230 635.0 L1232 635.0 L1234 635.0 L1236 635.0 L1238 635.0 L1240 635.0 L1242 635.0 L1244 635.0 L1246 635.0 L1248 635.0 L1250 635.0 L1252 635.0 L1254 635.0 L1256 635.0 L1258 635.0 L1260 635.0 L1262 635.0 L1264 635.0 L1266 635.0 L1268 635.0 L1270 635.0 L1272 635.0 L1274 635.0 L1276 635.0 L1278 635.0 L1280 635.0 L1282 635.0 L1284 635.0 L1286 635.0 L1288 635.0 L1290 635.0 L1292 635.0 L1294 635.0 L1296 635.0 L1298 635.0 L1300 635.0 L1302 635.0 L1304 635.0 L1306 635.0 L1308 635.0 L1310 635.0 L1312 635.0 L1314 635.0 L1316 635.0 L1318 635.0 L1320 635.0 L1322 635.0 L1324 635.0 L1326 635.0 L1328 635.0 L1330 635.0 L1332 635.0 L1334 635.0 L1336 635.0 L1338 635.0 L1340 635.0 L1342 635.0 L1344 635.0 L1346 635.0 L1348 635.0 L1350 635.0 L1352 635.0 L1354 635.0 L1356 635.0 L1358 635.0 L1360 635.0 L1362 635.0 L1364 635.0 L1366 635.0 L1368 635.0 L1370 635.0 L1372 635.0 L1374 635.0 L1376 635.0 L1378 635.0 L1380 635.0 L1382 635.0 L1384 635.0 L1386 635.0 L1388 635.0 L1390 635.0 L1392 635.0 L1394 635.0 L1396 635.0 L1398 635.0 L1400 635.0 L1402 635.0 L1404 635.0 L1406 635.0 L1408 635.0 L1410 635.0 L1412 635.0 L1414 635.0 L1416 635.0 L1418 635.0 L1420 635.0 L1422 635.0 L1424 635.0 L1426 635.0 L1428 635.0 L1430 635.0 L1432 635.0 L1434 635.0 L1436 635.0 L1438 635.0 L1440 635.0 L1442 635.0 L1444 635.0 L1446 635.0 L1448 635.0 L1450 635.0 L1452 635.0 L1454 635.0 L1456 635.0 L1458 635.0 L1460 635.0 L1462 635.0 L1464 635.0 L1466 635.0 L1468 635.0 L1470 635.0 L1472 635.0 L1474 635.0 L1476 635.0 L1478 635.0 L1480 635.0 L1482 635.0 L1484 635.0 L1486 635.0 L1488 635.0 L1490 635.0 L1492 635.0 L1494 635.0 L1496 635.0 L1498 635.0 L1500 635.0 L1502 635.0 L1504 635.0 L1506 635.0 L1508 635.0 L1510 635.0 L1512 635.0 L1514 635.0 L1516 635.0 L1518 635.0 L1520 635.0 L1522 635.0 L1524 635.0 L1526 635.0 L1528 635.0 L1530 635.0 L1532 635.0 L1534 635.0 L1536 635.0 L1538 635.0 L1540 635.0 L1542 635.0 L1544 635.0 L1546 635.0 L1548 635.0 L1550 635.0 L1552 635.0 L1554 635.0 L1556 635.0 L1558 635.0 L1560 635.0 L1562 635.0 L1564 635.0 L1566 635.0 L1568 635.0 L1570 635.0 L1572 635.0 L1574 635.0 L1576 635.0 L1578 635.0 L1580 635.0 L1582 635.0 L1584 635.0 L1586 635.0 L1588 635.0 L1590 635.0 L1592 635.0 L1594 635.0 L1596 635.0 L1598 635.0 L1600 635.0 L1602 635.0 L1604 635.0 L1606 635.0 L1608 635.0 L1610 635.0 L1612 635.0 L1614 635.0 L1616 635.0 L1618 635.0 L1620 635.0 L1622 635.0 L1624 635.0 L1626 635.0 L1628 635.0 L1630 635.0 L1632 635.0 L1634 635.0 L1636 635.0 L1638 635.0 L1640 635.0 L1642 635.0 L1644 635.0 L1646 635.0 L1648 635.0 L1650 635.0 L1652 635.0 L1654 635.0 L1656 635.0 L1658 635.0 L1660 635.0 L1662 635.0 L1664 635.0 L1666 635.0 L1668 635.0 L1670 635.0 L1672 635.0 L1674 635.0 L1676 635.0 L1678 635.0 L1680 635.0 L1682 635.0 L1684 635.0 L1686 635.0 L1688 635.0 L1690 635.0 L1692 635.0 L1694 635.0 L1696 635.0 L1698 635.0 L1700 635.0 L1702 635.0 L1704 635.0 L1706 635.0 L1708 635.0 L1710 635.0 L1712 635.0 L1714 635.0 L1716 635.0 L1718 635.0 L1720 635.0 L1722 635.0 L1724 635.0 L1726 635.0 L1728 635.0 L1730 635.0 L1732 635.0 L1734 635.0 L1736 635.0 L1738 635.0 L1740 635.0 L1742 635.0 L1744 635.0 L1746 635.0 L1748 635.0 L1750 635.0 L1752 635.0 L1754 635.0 L1756 635.0 L1758 635.0 L1760 635.0 L1762 635.0 L1764 635.0 L1766 635.0 L1768 635.0 L1770 635.0 L1772 635.0 L1774 635.0 L1776 635.0 L1778 635.0 L1780 635.0 L1782 635.0 L1784 635.0 L1786 635.0 L1788 635.0 L1790 635.0 L1792 635.0 L1794 635.0 L1796 635.0 L1798 635.0 L1800 635.0 L1802 635.0 L1804 635.0 L1806 635.0 L1808 635.0 L1810 635.0 L1812 635.0 L1814 635.0 L1816 635.0 L1818 635.0 L1820 635.0 L1822 635.0 L1824 635.0 L1826 635.0 L1828 635.0 L1830 635.0 L1832 635.0 L1834 635.0 L1836 635.0 L1838 635.0 L1840 635.0 L1842 635.0 L1844 635.0 L1846 635.0 L1848 635.0 L1850 635.0 L1852 635.0 L1854 635.0 L1856 635.0 L1858 635.0 L1860 635.0 L1862 635.0 L1864 635.0 L1866 635.0 L1868 635.0 L1870 635.0 L1872 635.0 L1874 635.0 L1876 635.0 L1878 635.0 L1880 635.0 L1882 635.0 L1884 635.0 L1886 635.0 L1888 635.0 L1890 635.0 L1892 635.0 L1894 635.0 L1896 635.0 L1898 635.0 L1900 635.0 L1902 635.0 L1904 635.0 L1906 635.0 L1908 635.0 L1910 635.0 L1912 635.0 L1914 635.0 L1916 635.0 L1918 635.0 L1920 635.0 L1922 635.0 L1924 635.0 L1926 635.0 L1928 635.0 L1930 635.0 L1932 635.0 L1934 635.0 L1936 635.0 L1938 635.0 L1940 635.0 L1942 635.0 L1944 635.0 L1946 635.0 L1948 635.0 L1950 635.0 L1952 635.0 L1954 635.0 L1956 635.0 L1958 635.0 L1960 635.0 L1962 635.0 L1964 635.0 L1966 635.0 L1968 635.0 L1970 635.0 L1972 635.0 L1974 635.0 L1976 635.0 L1978 635.0 L1980 635.0 L1982 635.0 L1984 634.9 L1986 634.9 L1988 634.7 L1990 634.5 L1992 634.1 L1994 633.5 L1996 632.8 L1998 631.9 L2000 631.1 L2002 630.4 L2004 630.0 L2006 630.0 L2008 630.4 L2010 631.1 L2012 631.9 L2014 632.8 L2016 633.5 L2018 634.0 L2020 634.1 L2022 633.7 L2024 632.7 L2026 631.1 L2028 629.6 L2030 628.8 L2032 628.9 L2034 629.3 L2036 628.6 L2038 626.4 L2040 622.5 L2042 617.8 L2044 613.1 L2046 609.0 L2048 606.0 L2050 604.0 L2052 602.8 L2054 602.3 L2056 602.1 L2058 602.0 L2060 602.0 L2062 602.0 L2064 602.1 L2066 602.3 L2068 602.8 L2070 604.0 L2072 606.0 L2074 609.0 L2076 613.0 L2078 617.7 L2080 622.1 L2082 625.3 L2084 626.4 L2086 625.4 L2088 623.6 L2090 622.8 L2092 624.2 L2094 627.3 L2096 630.6 L2098 633.0 L2100 634.3 L2102 634.8 L2104 634.9 L2106 635.0 L2108 635.0 L2110 635.0 L2112 635.0 L2114 635.0 L2116 635.0 L2118 635.0 L2120 635.0 L2122 635.0 L2124 635.0 L2126 635.0 L2128 635.0 L2130 635.0 L2132 635.0 L2134 635.0 L2136 635.0 L2138 635.0 L2140 635.0 L2142 635.0 L2144 635.0 L2146 635.0 L2148 635.0 L2150 635.0 L2152 635.0 L2154 635.0 L2156 635.0 L2158 635.0 L2160 635.0 L2162 635.0 L2164 635.0 L2166 635.0 L2168 634.9 L2170 634.9 L2172 634.9 L2174 634.8 L2176 634.7 L2178 634.6 L2180 634.4 L2182 634.2 L2184 633.9 L2186 633.5 L2188 633.1 L2190 632.6 L2192 632.1 L2194 631.4 L2196 630.8 L2198 630.1 L2200 629.4 L2202 628.8 L2204 628.2 L2206 627.7 L2208 627.3 L2210 627.1 L2212 627.0 L2214 627.1 L2216 627.3 L2218 627.7 L2220 628.2 L2222 628.7 L2224 629.3 L2226 629.9 L2228 630.4 L2230 630.6 L2232 630.6 L2234 630.3 L2236 630.0 L2238 629.8 L2240 629.9 L2242 630.4 L2244 631.3 L2246 632.3 L2248 633.2 L2250 633.9 L2252 634.4 L2254 634.7 L2256 634.9 L2258 634.9 L2260 635.0 L2262 635.0 L2264 635.0 L2266 635.0 L2268 635.0 L2270 635.0 L2272 635.0 L2274 635.0 L2276 635.0 L2278 635.0 L2280 635.0 L2282 635.0 L2284 635.0 L2286 635.0 L2288 635.0 L2290 635.0 L2292 635.0 L2294 635.0 L2296 635.0 L2298 635.0 L2300 635.0 L2302 635.0 L2304 635.0 L2306 635.0 L2308 635.0 L2310 635.0 L2312 635.0 L2314 635.0 L2316 635.0 L2318 635.0 L2320 635.0 L2322 635.0 L2324 635.0 L2326 635.0 L2328 635.0 L2330 635.0 L2332 635.0 L2334 635.0 L2336 635.0 L2338 635.0 L2340 635.0 L2342 635.0 L2344 635.0 L2346 635.0 L2348 635.0 L2350 635.0 L2352 635.0 L2354 635.0 L2356 635.0 L2358 635.0 L2360 635.0 L2362 635.0 L2364 635.0 L2366 635.0 L2368 635.0 L2370 635.0 L2372 635.0 L2374 635.0 L2376 635.0 L2378 635.0 L2380 635.0 L2382 635.0 L2384 635.0 L2386 635.0 L2388 635.0 L2390 635.0 L2392 635.0 L2394 635.0 L2396 635.0 L2398 635.0 L2400 635.0 L2402 635.0 L2404 635.0 L2406 635.0 L2408 635.0 L2410 635.0 L2412 635.0 L2414 635.0 L2416 635.0 L2418 635.0 L2420 635.0 L2422 635.0 L2424 635.0 L2426 635.0 L2428 635.0 L2430 635.0 L2432 635.0 L2434 635.0 L2436 635.0 L2438 635.0 L2440 635.0 L2442 635.0 L2444 635.0 L2446 635.0 L2448 635.0 L2450 635.0 L2452 635.0 L2454 635.0 L2456 635.0 L2458 635.0 L2460 635.0 L2462 635.0 L2464 635.0 L2466 635.0 L2468 635.0 L2470 635.0 L2472 635.0 L2474 635.0 L2476 635.0 L2478 635.0 L2480 635.0 L2482 635.0 L2484 635.0 L2486 635.0 L2488 635.0 L2490 635.0 L2492 635.0 L2494 635.0 L2496 635.0 L2498 635.0 L2500 635.0 L2502 635.0 L2504 635.0 L2506 635.0 L2508 635.0 L2510 635.0 L2512 635.0 L2514 635.0 L2516 635.0 L2518 635.0 L2520 635.0 L2522 635.0 L2524 635.0 L2526 635.0 L2528 635.0 L2530 635.0 L2532 635.0 L2534 635.0 L2536 635.0 L2538 635.0 L2540 635.0 L2542 635.0 L2544 635.0 L2546 635.0 L2547 635 Z" fill="rgba(192,28,40,0.5)" stroke="#a51d2d" stroke-width="2"/><path d="M654 635 L654 635.0 L656 635.0 L658 635.0 L660 635.0 L662 635.0 L664 635.0 L666 635.0 L668 635.0 L670 635.0 L672 635.0 L674 635.0 L676 635.0 L678 635.0 L680 635.0 L682 635.0 L684 635.0 L686 635.0 L688 635.0 L690 635.0 L692 635.0 L694 635.0 L696 635.0 L698 635.0 L700 635.0 L702 635.0 L704 635.0 L706 635.0 L708 635.0 L710 635.0 L712 635.0 L714 635.0 L716 635.0 L718 635.0 L720 635.0 L722 635.0 L724 635.0 L726 635.0 L728 635.0 L730 635.0 L732 635.0 L734 635.0 L736 635.0 L738 635.0 L740 635.0 L742 635.0 L744 635.0 L746 635.0 L748 635.0 L750 635.0 L752 635.0 L754 635.0 L756 635.0 L758 635.0 L760 635.0 L762 635.0 L764 635.0 L766 635.0 L768 635.0 L770 635.0 L772 635.0 L774 635.0 L776 635.0 L778 635.0 L780 635.1 L782 635.2 L784 635.6 L786 636.2 L788 637.2 L790 638.8 L792 640.9 L794 643.3 L796 645.7 L798 647.4 L800 648.0 L802 647.4 L804 645.7 L806 643.3 L808 640.9 L810 638.8 L812 637.2 L814 636.2 L816 635.6 L818 635.2 L820 635.1 L822 635.0 L824 635.0 L826 635.0 L828 635.0 L830 635.0 L832 635.0 L834 635.0 L836 635.0 L838 635.0 L840 635.0 L842 635.0 L844 635.0 L846 635.0 L848 635.0 L850 635.0 L852 635.0 L854 635.0 L856 635.0 L858 635.0 L860 635.0 L862 635.0 L864 635.0 L866 635.0 L868 635.0 L870 635.0 L872 635.0 L874 635.0 L876 635.0 L878 635.0 L880 635.0 L882 635.0 L884 635.0 L886 635.0 L888 635.0 L890 635.0 L892 635.0 L894 635.0 L896 635.0 L898 635.0 L900 635.0 L902 635.0 L904 635.0 L906 635.0 L908 635.0 L910 635.0 L912 635.0 L914 635.0 L916 635.0 L918 635.0 L920 635.0 L922 635.0 L924 635.0 L926 635.0 L928 635.0 L930 635.0 L932 635.0 L934 635.0 L936 635.0 L938 635.0 L940 635.1 L942 635.1 L944 635.3 L946 635.6 L948 636.2 L950 637.0 L952 638.2 L954 639.5 L956 640.7 L958 641.7 L960 642.0 L962 641.7 L964 640.7 L966 639.5 L968 638.2 L970 637.0 L972 636.2 L974 635.6 L976 635.3 L978 635.1 L980 635.1 L982 635.0 L984 635.0 L986 635.0 L988 635.0 L990 635.0 L992 635.0 L994 635.0 L996 635.0 L998 635.0 L1000 635.0 L1002 635.0 L1004 635.0 L1006 635.0 L1008 635.0 L1010 635.0 L1012 635.0 L1014 635.0 L1016 635.0 L1018 635.0 L1020 635.0 L1022 635.0 L1024 635.0 L1026 635.0 L1028 635.0 L1030 635.0 L1032 635.0 L1034 635.0 L1036 635.0 L1038 635.0 L1040 635.0 L1042 635.0 L1044 635.0 L1046 635.0 L1048 635.0 L1050 635.0 L1052 635.1 L1054 635.1 L1056 635.3 L1058 635.6 L1060 636.1 L1062 636.7 L1064 637.3 L1066 637.8 L1068 638.0 L1070 637.8 L1072 637.3 L1074 636.7 L1076 636.1 L1078 635.6 L1080 635.3 L1082 635.1 L1084 635.1 L1086 635.0 L1088 635.0 L1090 635.0 L1092 635.0 L1094 635.0 L1096 635.0 L1098 635.0 L1100 635.0 L1102 635.0 L1104 635.0 L1106 635.0 L1108 635.0 L1110 635.0 L1112 635.0 L1114 635.0 L1116 635.0 L1118 635.0 L1120 635.0 L1122 635.0 L1124 635.0 L1126 635.0 L1128 635.0 L1130 635.0 L1132 635.0 L1134 635.0 L1136 635.0 L1138 635.0 L1140 635.0 L1142 635.0 L1144 635.0 L1146 635.0 L1148 635.0 L1150 635.0 L1152 635.0 L1154 635.0 L1156 635.0 L1158 635.0 L1160 635.0 L1162 635.0 L1164 635.0 L1166 635.0 L1168 635.0 L1170 635.0 L1172 635.0 L1174 635.0 L1176 635.0 L1178 635.0 L1180 635.0 L1182 635.0 L1184 635.0 L1186 635.0 L1188 635.0 L1190 635.0 L1192 635.0 L1194 635.0 L1196 635.0 L1198 635.0 L1200 635.0 L1202 635.0 L1204 635.0 L1206 635.0 L1208 635.0 L1210 635.0 L1212 635.0 L1214 635.0 L1216 635.0 L1218 635.0 L1220 635.0 L1222 635.0 L1224 635.0 L1226 635.0 L1228 635.0 L1230 635.0 L1232 635.0 L1234 635.0 L1236 635.0 L1238 635.0 L1240 635.0 L1242 635.0 L1244 635.0 L1246 635.0 L1248 635.0 L1250 635.0 L1252 635.0 L1254 635.0 L1256 635.0 L1258 635.0 L1260 635.0 L1262 635.0 L1264 635.0 L1266 635.0 L1268 635.0 L1270 635.0 L1272 635.0 L1274 635.0 L1276 635.0 L1278 635.0 L1280 635.0 L1282 635.0 L1284 635.0 L1286 635.0 L1288 635.0 L1290 635.0 L1292 635.0 L1294 635.0 L1296 635.0 L1298 635.0 L1300 635.0 L1302 635.0 L1304 635.0 L1306 635.0 L1308 635.0 L1310 635.0 L1312 635.0 L1314 635.0 L1316 635.0 L1318 635.0 L1320 635.0 L1322 635.0 L1324 635.0 L1326 635.0 L1328 635.0 L1330 635.0 L1332 635.0 L1334 635.0 L1336 635.0 L1338 635.0 L1340 635.0 L1342 635.0 L1344 635.0 L1346 635.0 L1348 635.0 L1350 635.0 L1352 635.0 L1354 635.0 L1356 635.0 L1358 635.0 L1360 635.0 L1362 635.0 L1364 635.0 L1366 635.0 L1368 635.0 L1370 635.0 L1372 635.0 L1374 635.0 L1376 635.0 L1378 635.0 L1380 635.0 L1382 635.0 L1384 635.0 L1386 635.0 L1388 635.0 L1390 635.0 L1392 635.0 L1394 635.0 L1396 635.0 L1398 635.0 L1400 635.0 L1402 635.0 L1404 635.0 L1406 635.0 L1408 635.0 L1410 635.0 L1412 635.0 L1414 635.0 L1416 635.0 L1418 635.0 L1420 635.0 L1422 635.0 L1424 635.0 L1426 635.0 L1428 635.0 L1430 635.0 L1432 635.0 L1434 635.0 L1436 635.0 L1438 635.0 L1440 635.0 L1442 635.0 L1444 635.0 L1446 635.0 L1448 635.0 L1450 635.0 L1452 635.0 L1454 635.0 L1456 635.0 L1458 635.0 L1460 635.0 L1462 635.0 L1464 635.0 L1466 635.0 L1468 635.0 L1470 635.0 L1472 635.0 L1474 635.0 L1476 635.0 L1478 635.0 L1480 635.0 L1482 635.0 L1484 635.0 L1486 635.0 L1488 635.0 L1490 635.0 L1492 635.0 L1494 635.0 L1496 635.0 L1498 635.0 L1500 635.0 L1502 635.0 L1504 635.0 L1506 635.0 L1508 635.0 L1510 635.0 L1512 635.0 L1514 635.0 L1516 635.0 L1518 635.0 L1520 635.0 L1522 635.0 L1524 635.0 L1526 635.0 L1528 635.0 L1530 635.0 L1532 635.0 L1534 635.0 L1536 635.0 L1538 635.0 L1540 635.0 L1542 635.0 L1544 635.0 L1546 635.0 L1548 635.0 L1550 635.0 L1552 635.0 L1554 635.0 L1556 635.0 L1558 635.0 L1560 635.0 L1562 635.0 L1564 635.0 L1566 635.0 L1568 635.0 L1570 635.0 L1572 635.0 L1574 635.0 L1576 635.0 L1578 635.0 L1580 635.0 L1582 635.0 L1584 635.0 L1586 635.0 L1588 635.0 L1590 635.0 L1592 635.0 L1594 635.0 L1596 635.0 L1598 635.0 L1600 635.0 L1602 635.0 L1604 635.0 L1606 635.0 L1608 635.0 L1610 635.0 L1612 635.0 L1614 635.0 L1616 635.0 L1618 635.0 L1620 635.0 L1622 635.0 L1624 635.0 L1626 635.0 L1628 635.0 L1630 635.0 L1632 635.0 L1634 635.0 L1636 635.1 L1638 635.1 L1640 635.3 L1642 635.6 L1644 635.9 L1646 636.4 L1648 636.7 L1650 637.0 L1652 637.0 L1654 636.7 L1656 636.4 L1658 635.9 L1660 635.6 L1662 635.3 L1664 635.1 L1666 635.1 L1668 635.0 L1670 635.0 L1672 635.0 L1674 635.0 L1676 635.0 L1678 635.0 L1680 635.0 L1682 635.0 L1684 635.0 L1686 635.0 L1688 635.0 L1690 635.0 L1692 635.0 L1694 635.0 L1696 635.0 L1698 635.0 L1700 635.0 L1702 635.0 L1704 635.0 L1706 635.0 L1708 635.0 L1710 635.0 L1712 635.0 L1714 635.0 L1716 635.0 L1718 635.0 L1720 635.0 L1722 635.0 L1724 635.0 L1726 635.0 L1728 635.0 L1730 635.0 L1732 635.0 L1734 635.0 L1736 635.0 L1738 635.0 L1740 635.0 L1742 635.0 L1744 635.0 L1746 635.0 L1748 635.0 L1750 635.0 L1752 635.0 L1754 635.0 L1756 635.0 L1758 635.0 L1760 635.0 L1762 635.0 L1764 635.0 L1766 635.0 L1768 635.0 L1770 635.0 L1772 635.0 L1774 635.0 L1776 635.0 L1778 635.0 L1780 635.0 L1782 635.0 L1784 635.0 L1786 635.0 L1788 635.0 L1790 635.0 L1792 635.0 L1794 635.0 L1796 635.0 L1798 635.0 L1800 635.0 L1802 635.0 L1804 635.0 L1806 635.0 L1808 635.0 L1810 635.0 L1812 635.0 L1814 635.0 L1816 635.0 L1818 635.0 L1820 635.0 L1822 635.0 L1824 635.0 L1826 635.0 L1828 635.0 L1830 635.0 L1832 635.0 L1834 635.0 L1836 635.0 L1838 635.0 L1840 635.0 L1842 635.0 L1844 635.0 L1846 635.0 L1848 635.0 L1850 635.0 L1852 635.0 L1854 635.0 L1856 635.0 L1858 635.0 L1860 635.0 L1862 635.0 L1864 635.0 L1866 635.0 L1868 635.0 L1870 635.0 L1872 635.0 L1874 635.0 L1876 635.0 L1878 635.0 L1880 635.0 L1882 635.0 L1884 635.0 L1886 635.0 L1888 635.0 L1890 635.0 L1892 635.0 L1894 635.0 L1896 635.0 L1898 635.0 L1900 635.0 L1902 635.0 L1904 635.0 L1906 635.0 L1908 635.0 L1910 635.0 L1912 635.0 L1914 635.0 L1916 635.0 L1918 635.0 L1920 635.0 L1922 635.0 L1924 635.0 L1926 635.0 L1928 635.0 L1930 635.0 L1932 635.0 L1934 635.0 L1936 635.0 L1938 635.0 L1940 635.0 L1942 635.0 L1944 635.0 L1946 635.0 L1948 635.0 L1950 635.0 L1952 635.0 L1954 635.0 L1956 635.0 L1958 635.0 L1960 635.0 L1962 635.0 L1964 635.0 L1966 635.0 L1968 635.0 L1970 635.0 L1972 635.0 L1974 635.0 L1976 635.0 L1978 635.0 L1980 635.0 L1982 635.0 L1984 635.0 L1986 635.0 L1988 635.0 L1990 635.0 L1992 635.0 L1994 635.0 L1996 635.0 L1998 635.0 L2000 635.0 L2002 635.0 L2004 635.0 L2006 635.1 L2008 635.1 L2010 635.3 L2012 635.6 L2014 636.1 L2016 636.7 L2018 637.3 L2020 637.8 L2022 638.0 L2024 637.8 L2026 637.3 L2028 636.7 L2030 636.1 L2032 635.6 L2034 635.3 L2036 635.1 L2038 635.1 L2040 635.0 L2042 635.0 L2044 635.0 L2046 635.0 L2048 635.0 L2050 635.0 L2052 635.0 L2054 635.0 L2056 635.0 L2058 635.0 L2060 635.0 L2062 635.0 L2064 635.0 L2066 635.0 L2068 635.0 L2070 635.0 L2072 635.0 L2074 635.0 L2076 635.0 L2078 635.0 L2080 635.0 L2082 635.0 L2084 635.1 L2086 635.1 L2088 635.2 L2090 635.4 L2092 635.7 L2094 636.2 L2096 636.8 L2098 637.6 L2100 638.5 L2102 639.5 L2104 640.5 L2106 641.3 L2108 641.8 L2110 642.0 L2112 641.8 L2114 641.3 L2116 640.5 L2118 639.5 L2120 638.5 L2122 637.6 L2124 636.8 L2126 636.2 L2128 635.7 L2130 635.4 L2132 635.3 L2134 635.3 L2136 635.4 L2138 635.8 L2140 636.5 L2142 637.6 L2144 639.0 L2146 640.5 L2148 641.6 L2150 642.0 L2152 641.6 L2154 640.5 L2156 639.0 L2158 637.7 L2160 636.8 L2162 636.6 L2164 637.2 L2166 638.3 L2168 639.5 L2170 640.0 L2172 639.5 L2174 638.2 L2176 636.8 L2178 635.8 L2180 635.3 L2182 635.1 L2184 635.0 L2186 635.0 L2188 635.0 L2190 635.0 L2192 635.0 L2194 635.0 L2196 635.0 L2198 635.0 L2200 635.0 L2202 635.0 L2204 635.0 L2206 635.0 L2208 635.0 L2210 635.0 L2212 635.0 L2214 635.0 L2216 635.0 L2218 635.0 L2220 635.0 L2222 635.0 L2224 635.0 L2226 635.0 L2228 635.0 L2230 635.0 L2232 635.0 L2234 635.0 L2236 635.0 L2238 635.0 L2240 635.0 L2242 635.0 L2244 635.0 L2246 635.0 L2248 635.0 L2250 635.0 L2252 635.0 L2254 635.0 L2256 635.0 L2258 635.0 L2260 635.0 L2262 635.0 L2264 635.0 L2266 635.0 L2268 635.0 L2270 635.0 L2272 635.0 L2274 635.0 L2276 635.0 L2278 635.0 L2280 635.0 L2282 635.0 L2284 635.0 L2286 635.0 L2288 635.0 L2290 635.0 L2292 635.0 L2294 635.0 L2296 635.0 L2298 635.0 L2300 635.0 L2302 635.0 L2304 635.0 L2306 635.0 L2308 635.0 L2310 635.0 L2312 635.0 L2314 635.0 L2316 635.0 L2318 635.0 L2320 635.0 L2322 635.0 L2324 635.0 L2326 635.0 L2328 635.0 L2330 635.0 L2332 635.0 L2334 635.0 L2336 635.0 L2338 635.0 L2340 635.0 L2342 635.0 L2344 635.0 L2346 635.0 L2348 635.0 L2350 635.0 L2352 635.0 L2354 635.0 L2356 635.0 L2358 635.0 L2360 635.0 L2362 635.0 L2364 635.0 L2366 635.0 L2368 635.0 L2370 635.1 L2372 635.2 L2374 635.3 L2376 635.6 L2378 636.0 L2380 636.5 L2382 637.2 L2384 638.0 L2386 639.0 L2388 640.4 L2390 642.6 L2392 646.0 L2394 650.9 L2396 657.2 L2398 663.6 L2400 668.4 L2402 669.9 L2404 667.5 L2406 661.8 L2408 654.5 L2410 647.6 L2412 642.2 L2414 638.6 L2416 636.6 L2418 635.6 L2420 635.2 L2422 635.1 L2424 635.0 L2426 635.0 L2428 635.0 L2430 635.0 L2432 635.0 L2434 635.0 L2436 635.0 L2438 635.0 L2440 635.0 L2442 635.0 L2444 635.0 L2446 635.0 L2448 635.0 L2450 635.0 L2452 635.0 L2454 635.0 L2456 635.0 L2458 635.0 L2460 635.0 L2462 635.0 L2464 635.0 L2466 635.0 L2468 635.0 L2470 635.0 L2472 635.0 L2474 635.0 L2476 635.0 L2478 635.0 L2480 635.0 L2482 635.0 L2484 635.0 L2486 635.0 L2488 635.0 L2490 635.0 L2492 635.0 L2494 635.0 L2496 635.0 L2498 635.0 L2500 635.0 L2502 635.0 L2504 635.0 L2506 635.0 L2508 635.0 L2510 635.0 L2512 635.0 L2514 635.0 L2516 635.0 L2518 635.0 L2520 635.0 L2522 635.0 L2524 635.0 L2526 635.0 L2528 635.0 L2530 635.0 L2532 635.0 L2534 635.0 L2536 635.0 L2538 635.0 L2540 635.0 L2542 635.0 L2544 635.0 L2546 635.0 L2547 635 Z" fill="rgba(192,28,40,0.5)" stroke="#a51d2d" stroke-width="2"/><path d="M654 635 H2547" stroke="#a51d2d" stroke-width="2.6"/><path d="M494 635 H654 M2547 635 H2690" stroke="#777" stroke-width="2" stroke-dasharray="2 5"/><path d="M654 706 L654 706.0 L656 706.0 L658 706.0 L660 706.0 L662 706.0 L664 706.0 L666 706.0 L668 706.0 L670 706.0 L672 706.0 L674 706.0 L676 706.0 L678 706.0 L680 706.0 L682 706.0 L684 706.0 L686 706.0 L688 706.0 L690 706.0 L692 706.0 L694 706.0 L696 706.0 L698 706.0 L700 706.0 L702 706.0 L704 706.0 L706 706.0 L708 706.0 L710 706.0 L712 706.0 L714 706.0 L716 706.0 L718 706.0 L720 706.0 L722 706.0 L724 706.0 L726 706.0 L728 706.0 L730 706.0 L732 706.0 L734 706.0 L736 706.0 L738 706.0 L740 706.0 L742 706.0 L744 706.0 L746 706.0 L748 706.0 L750 706.0 L752 706.0 L754 706.0 L756 706.0 L758 706.0 L760 706.0 L762 706.0 L764 706.0 L766 706.0 L768 706.0 L770 706.0 L772 706.0 L774 706.0 L776 706.0 L778 706.0 L780 706.0 L782 706.0 L784 706.0 L786 706.0 L788 706.0 L790 706.0 L792 706.0 L794 706.0 L796 706.0 L798 706.0 L800 706.0 L802 706.0 L804 706.0 L806 706.0 L808 706.0 L810 706.0 L812 706.0 L814 706.0 L816 706.0 L818 706.0 L820 706.0 L822 706.0 L824 706.0 L826 706.0 L828 706.0 L830 706.0 L832 706.0 L834 706.0 L836 706.0 L838 706.0 L840 706.0 L842 706.0 L844 706.0 L846 706.0 L848 706.0 L850 706.0 L852 706.0 L854 706.0 L856 706.0 L858 706.0 L860 706.0 L862 706.0 L864 706.0 L866 706.0 L868 706.0 L870 706.0 L872 706.0 L874 706.0 L876 706.0 L878 706.0 L880 706.0 L882 706.0 L884 706.0 L886 706.0 L888 706.0 L890 706.0 L892 706.0 L894 706.0 L896 706.0 L898 706.0 L900 706.0 L902 706.0 L904 706.0 L906 706.0 L908 706.0 L910 706.0 L912 706.0 L914 706.0 L916 706.0 L918 706.0 L920 706.0 L922 706.0 L924 706.0 L926 706.0 L928 706.0 L930 706.0 L932 706.0 L934 706.0 L936 706.0 L938 706.0 L940 706.0 L942 706.0 L944 706.0 L946 706.0 L948 706.0 L950 706.0 L952 706.0 L954 706.0 L956 706.0 L958 706.0 L960 706.0 L962 706.0 L964 706.0 L966 706.0 L968 706.0 L970 706.0 L972 706.0 L974 706.0 L976 706.0 L978 706.0 L980 706.0 L982 706.0 L984 706.0 L986 706.0 L988 706.0 L990 706.0 L992 706.0 L994 706.0 L996 706.0 L998 706.0 L1000 706.0 L1002 706.0 L1004 706.0 L1006 706.0 L1008 706.0 L1010 706.0 L1012 706.0 L1014 706.0 L1016 706.0 L1018 706.0 L1020 706.0 L1022 706.0 L1024 706.0 L1026 706.0 L1028 706.0 L1030 706.0 L1032 706.0 L1034 706.0 L1036 706.0 L1038 706.0 L1040 706.0 L1042 705.9 L1044 705.8 L1046 705.6 L1048 705.3 L1050 704.9 L1052 704.7 L1054 704.5 L1056 704.5 L1058 704.6 L1060 704.9 L1062 705.2 L1064 705.5 L1066 705.7 L1068 705.9 L1070 706.0 L1072 706.0 L1074 706.0 L1076 706.0 L1078 706.0 L1080 706.0 L1082 706.0 L1084 706.0 L1086 706.0 L1088 706.0 L1090 706.0 L1092 706.0 L1094 706.0 L1096 706.0 L1098 706.0 L1100 706.0 L1102 706.0 L1104 706.0 L1106 706.0 L1108 706.0 L1110 706.0 L1112 706.0 L1114 706.0 L1116 706.0 L1118 706.0 L1120 706.0 L1122 706.0 L1124 706.0 L1126 706.0 L1128 706.0 L1130 706.0 L1132 706.0 L1134 706.0 L1136 706.0 L1138 706.0 L1140 706.0 L1142 706.0 L1144 706.0 L1146 706.0 L1148 706.0 L1150 706.0 L1152 706.0 L1154 706.0 L1156 706.0 L1158 706.0 L1160 706.0 L1162 706.0 L1164 706.0 L1166 706.0 L1168 706.0 L1170 706.0 L1172 706.0 L1174 706.0 L1176 706.0 L1178 706.0 L1180 706.0 L1182 706.0 L1184 706.0 L1186 706.0 L1188 706.0 L1190 706.0 L1192 706.0 L1194 706.0 L1196 706.0 L1198 706.0 L1200 706.0 L1202 706.0 L1204 706.0 L1206 706.0 L1208 706.0 L1210 706.0 L1212 706.0 L1214 706.0 L1216 706.0 L1218 706.0 L1220 705.9 L1222 705.8 L1224 705.6 L1226 705.3 L1228 705.0 L1230 704.7 L1232 704.5 L1234 704.5 L1236 704.6 L1238 704.8 L1240 705.1 L1242 705.5 L1244 705.7 L1246 705.9 L1248 706.0 L1250 706.0 L1252 706.0 L1254 706.0 L1256 706.0 L1258 706.0 L1260 706.0 L1262 706.0 L1264 705.9 L1266 705.8 L1268 705.7 L1270 705.4 L1272 705.1 L1274 704.8 L1276 704.5 L1278 704.2 L1280 704.1 L1282 704.0 L1284 704.0 L1286 704.0 L1288 704.0 L1290 704.0 L1292 704.0 L1294 704.0 L1296 704.0 L1298 704.0 L1300 704.0 L1302 704.0 L1304 704.0 L1306 704.0 L1308 704.0 L1310 704.0 L1312 704.0 L1314 704.0 L1316 704.0 L1318 704.0 L1320 704.0 L1322 704.0 L1324 704.0 L1326 704.0 L1328 704.0 L1330 704.0 L1332 704.1 L1334 704.2 L1336 704.5 L1338 704.8 L1340 705.1 L1342 705.4 L1344 705.7 L1346 705.8 L1348 705.9 L1350 706.0 L1352 706.0 L1354 706.0 L1356 706.0 L1358 706.0 L1360 706.0 L1362 706.0 L1364 706.0 L1366 705.9 L1368 705.7 L1370 705.4 L1372 705.1 L1374 704.8 L1376 704.6 L1378 704.5 L1380 704.5 L1382 704.7 L1384 705.0 L1386 705.3 L1388 705.6 L1390 705.8 L1392 705.9 L1394 706.0 L1396 706.0 L1398 706.0 L1400 706.0 L1402 706.0 L1404 706.0 L1406 706.0 L1408 706.0 L1410 706.0 L1412 706.0 L1414 706.0 L1416 706.0 L1418 706.0 L1420 706.0 L1422 706.0 L1424 706.0 L1426 706.0 L1428 706.0 L1430 706.0 L1432 706.0 L1434 706.0 L1436 706.0 L1438 706.0 L1440 706.0 L1442 706.0 L1444 706.0 L1446 706.0 L1448 706.0 L1450 706.0 L1452 706.0 L1454 706.0 L1456 706.0 L1458 706.0 L1460 706.0 L1462 706.0 L1464 706.0 L1466 706.0 L1468 706.0 L1470 706.0 L1472 706.0 L1474 706.0 L1476 706.0 L1478 706.0 L1480 706.0 L1482 706.0 L1484 706.0 L1486 706.0 L1488 706.0 L1490 706.0 L1492 706.0 L1494 706.0 L1496 706.0 L1498 706.0 L1500 706.0 L1502 706.0 L1504 706.0 L1506 706.0 L1508 706.0 L1510 706.0 L1512 705.9 L1514 705.9 L1516 705.8 L1518 705.7 L1520 705.6 L1522 705.6 L1524 705.5 L1526 705.4 L1528 705.3 L1530 705.2 L1532 705.1 L1534 705.0 L1536 704.9 L1538 704.8 L1540 704.8 L1542 704.7 L1544 704.6 L1546 704.5 L1548 704.4 L1550 704.3 L1552 704.2 L1554 704.1 L1556 703.9 L1558 703.6 L1560 703.3 L1562 702.9 L1564 702.5 L1566 702.1 L1568 701.8 L1570 701.4 L1572 701.1 L1574 700.9 L1576 700.7 L1578 700.6 L1580 700.4 L1582 700.3 L1584 700.2 L1586 700.1 L1588 699.9 L1590 699.8 L1592 699.8 L1594 699.7 L1596 699.6 L1598 699.5 L1600 699.4 L1602 699.3 L1604 699.2 L1606 699.2 L1608 699.1 L1610 699.1 L1612 699.2 L1614 699.2 L1616 699.3 L1618 699.4 L1620 699.5 L1622 699.6 L1624 699.7 L1626 699.8 L1628 699.9 L1630 700.1 L1632 700.4 L1634 700.9 L1636 701.3 L1638 701.9 L1640 702.4 L1642 702.9 L1644 703.4 L1646 703.7 L1648 704.0 L1650 704.2 L1652 704.3 L1654 704.4 L1656 704.5 L1658 704.5 L1660 704.6 L1662 704.7 L1664 704.8 L1666 704.9 L1668 704.9 L1670 705.0 L1672 705.0 L1674 705.0 L1676 705.0 L1678 705.0 L1680 705.0 L1682 705.0 L1684 705.0 L1686 705.0 L1688 705.0 L1690 705.0 L1692 705.0 L1694 705.0 L1696 704.9 L1698 704.7 L1700 704.5 L1702 704.2 L1704 703.8 L1706 703.4 L1708 703.0 L1710 702.6 L1712 702.2 L1714 701.9 L1716 701.6 L1718 701.3 L1720 701.0 L1722 700.8 L1724 700.5 L1726 700.4 L1728 700.2 L1730 700.2 L1732 700.3 L1734 700.4 L1736 700.6 L1738 700.7 L1740 700.7 L1742 700.7 L1744 700.5 L1746 700.2 L1748 699.9 L1750 699.5 L1752 699.1 L1754 698.7 L1756 698.3 L1758 697.9 L1760 697.5 L1762 697.2 L1764 696.8 L1766 696.5 L1768 696.1 L1770 695.7 L1772 695.4 L1774 695.0 L1776 694.7 L1778 694.4 L1780 694.3 L1782 694.2 L1784 694.2 L1786 694.3 L1788 694.4 L1790 694.5 L1792 694.6 L1794 694.6 L1796 694.7 L1798 694.8 L1800 694.8 L1802 694.7 L1804 694.5 L1806 694.3 L1808 693.9 L1810 693.6 L1812 693.2 L1814 692.8 L1816 692.5 L1818 692.1 L1820 691.8 L1822 691.4 L1824 691.1 L1826 690.7 L1828 690.4 L1830 690.1 L1832 689.8 L1834 689.4 L1836 689.1 L1838 688.8 L1840 688.7 L1842 688.8 L1844 689.2 L1846 689.9 L1848 690.8 L1850 691.7 L1852 692.5 L1854 692.9 L1856 692.8 L1858 692.5 L1860 691.9 L1862 691.2 L1864 690.7 L1866 690.3 L1868 690.1 L1870 690.0 L1872 690.0 L1874 690.0 L1876 690.0 L1878 690.0 L1880 690.0 L1882 690.2 L1884 690.4 L1886 690.7 L1888 691.2 L1890 691.7 L1892 692.2 L1894 692.7 L1896 693.2 L1898 693.5 L1900 693.6 L1902 693.6 L1904 693.5 L1906 693.3 L1908 693.2 L1910 693.0 L1912 692.8 L1914 692.6 L1916 692.5 L1918 692.3 L1920 692.3 L1922 692.4 L1924 692.6 L1926 692.9 L1928 693.3 L1930 693.6 L1932 694.0 L1934 694.4 L1936 694.7 L1938 695.1 L1940 695.4 L1942 695.6 L1944 695.8 L1946 695.9 L1948 696.0 L1950 696.0 L1952 696.0 L1954 696.0 L1956 696.0 L1958 696.0 L1960 696.0 L1962 696.0 L1964 696.0 L1966 696.1 L1968 696.1 L1970 696.2 L1972 696.2 L1974 696.3 L1976 696.4 L1978 696.4 L1980 696.5 L1982 696.6 L1984 696.6 L1986 696.7 L1988 696.8 L1990 696.8 L1992 697.0 L1994 697.1 L1996 697.4 L1998 697.8 L2000 698.3 L2002 698.8 L2004 699.4 L2006 699.9 L2008 700.4 L2010 701.0 L2012 701.5 L2014 702.0 L2016 702.5 L2018 703.0 L2020 703.5 L2022 703.9 L2024 704.3 L2026 704.7 L2028 705.1 L2030 705.4 L2032 705.7 L2034 705.9 L2036 706.0 L2038 706.0 L2040 706.0 L2042 706.0 L2044 706.0 L2046 706.0 L2048 706.0 L2050 706.0 L2052 705.9 L2054 705.7 L2056 705.4 L2058 705.1 L2060 704.8 L2062 704.6 L2064 704.6 L2066 704.8 L2068 705.1 L2070 705.4 L2072 705.6 L2074 705.8 L2076 705.9 L2078 706.0 L2080 706.0 L2082 706.0 L2084 706.0 L2086 705.9 L2088 705.8 L2090 705.6 L2092 705.3 L2094 705.0 L2096 704.7 L2098 704.5 L2100 704.5 L2102 704.6 L2104 704.9 L2106 705.2 L2108 705.5 L2110 705.7 L2112 705.9 L2114 706.0 L2116 706.0 L2118 706.0 L2120 706.0 L2122 706.0 L2124 706.0 L2126 706.0 L2128 706.0 L2130 706.0 L2132 706.0 L2134 706.0 L2136 706.0 L2138 706.0 L2140 706.0 L2142 706.0 L2144 706.0 L2146 706.0 L2148 706.0 L2150 706.0 L2152 706.0 L2154 706.0 L2156 706.0 L2158 706.0 L2160 706.0 L2162 706.0 L2164 706.0 L2166 706.0 L2168 706.0 L2170 706.0 L2172 706.0 L2174 706.0 L2176 706.0 L2178 706.0 L2180 706.0 L2182 706.0 L2184 706.0 L2186 706.0 L2188 706.0 L2190 706.0 L2192 706.0 L2194 706.0 L2196 706.0 L2198 706.0 L2200 706.0 L2202 706.0 L2204 706.0 L2206 706.0 L2208 706.0 L2210 706.0 L2212 706.0 L2214 706.0 L2216 706.0 L2218 706.0 L2220 706.0 L2222 706.0 L2224 706.0 L2226 706.0 L2228 706.0 L2230 706.0 L2232 706.0 L2234 706.0 L2236 706.0 L2238 706.0 L2240 706.0 L2242 706.0 L2244 706.0 L2246 706.0 L2248 706.0 L2250 706.0 L2252 706.0 L2254 706.0 L2256 706.0 L2258 706.0 L2260 706.0 L2262 706.0 L2264 706.0 L2266 706.0 L2268 706.0 L2270 706.0 L2272 706.0 L2274 706.0 L2276 706.0 L2278 706.0 L2280 706.0 L2282 706.0 L2284 706.0 L2286 706.0 L2288 706.0 L2290 706.0 L2292 706.0 L2294 706.0 L2296 706.0 L2298 706.0 L2300 706.0 L2302 706.0 L2304 706.0 L2306 706.0 L2308 706.0 L2310 706.0 L2312 706.0 L2314 706.0 L2316 706.0 L2318 706.0 L2320 706.0 L2322 706.0 L2324 706.0 L2326 706.0 L2328 706.0 L2330 706.0 L2332 706.0 L2334 706.0 L2336 706.0 L2338 706.0 L2340 706.0 L2342 706.0 L2344 706.0 L2346 706.0 L2348 706.0 L2350 706.0 L2352 706.0 L2354 706.0 L2356 706.0 L2358 706.0 L2360 706.0 L2362 706.0 L2364 706.0 L2366 706.0 L2368 706.0 L2370 706.0 L2372 706.0 L2374 706.0 L2376 706.0 L2378 706.0 L2380 706.0 L2382 706.0 L2384 706.0 L2386 706.0 L2388 706.0 L2390 706.0 L2392 706.0 L2394 706.0 L2396 706.0 L2398 706.0 L2400 706.0 L2402 706.0 L2404 706.0 L2406 706.0 L2408 706.0 L2410 706.0 L2412 706.0 L2414 706.0 L2416 706.0 L2418 706.0 L2420 706.0 L2422 706.0 L2424 706.0 L2426 706.0 L2428 706.0 L2430 706.0 L2432 706.0 L2434 706.0 L2436 706.0 L2438 706.0 L2440 706.0 L2442 706.0 L2444 706.0 L2446 706.0 L2448 706.0 L2450 706.0 L2452 706.0 L2454 706.0 L2456 706.0 L2458 706.0 L2460 706.0 L2462 706.0 L2464 706.0 L2466 706.0 L2468 706.0 L2470 706.0 L2472 706.0 L2474 706.0 L2476 706.0 L2478 706.0 L2480 706.0 L2482 706.0 L2484 706.0 L2486 706.0 L2488 706.0 L2490 706.0 L2492 706.0 L2494 706.0 L2496 706.0 L2498 706.0 L2500 706.0 L2502 706.0 L2504 706.0 L2506 706.0 L2508 706.0 L2510 706.0 L2512 706.0 L2514 706.0 L2516 706.0 L2518 706.0 L2520 706.0 L2522 706.0 L2524 706.0 L2526 706.0 L2528 706.0 L2530 706.0 L2532 706.0 L2534 706.0 L2536 706.0 L2538 706.0 L2540 706.0 L2542 706.0 L2544 706.0 L2546 706.0 L2547 706 Z" fill="rgba(53,132,228,0.55)" stroke="#1c71d8" stroke-width="2"/><path d="M654 706 L654 706.0 L656 706.0 L658 706.0 L660 706.0 L662 706.0 L664 706.0 L666 706.0 L668 706.0 L670 706.0 L672 706.0 L674 706.0 L676 706.0 L678 706.0 L680 706.0 L682 706.0 L684 706.0 L686 706.0 L688 706.0 L690 706.0 L692 706.0 L694 706.0 L696 706.0 L698 706.0 L700 706.0 L702 706.0 L704 706.0 L706 706.0 L708 706.0 L710 706.0 L712 706.0 L714 706.0 L716 706.0 L718 706.0 L720 706.0 L722 706.0 L724 706.0 L726 706.0 L728 706.0 L730 706.0 L732 706.0 L734 706.0 L736 706.0 L738 706.0 L740 706.0 L742 706.0 L744 706.0 L746 706.0 L748 706.0 L750 706.0 L752 706.0 L754 706.0 L756 706.0 L758 706.0 L760 706.0 L762 706.0 L764 706.0 L766 706.0 L768 706.0 L770 706.0 L772 706.0 L774 706.0 L776 706.0 L778 706.0 L780 706.0 L782 706.0 L784 706.0 L786 706.0 L788 706.0 L790 706.0 L792 706.0 L794 706.0 L796 706.0 L798 706.0 L800 706.0 L802 706.0 L804 706.0 L806 706.0 L808 706.0 L810 706.0 L812 706.0 L814 706.0 L816 706.0 L818 706.0 L820 706.0 L822 706.0 L824 706.0 L826 706.0 L828 706.0 L830 706.0 L832 706.0 L834 706.0 L836 706.0 L838 706.0 L840 706.0 L842 706.0 L844 706.0 L846 706.0 L848 706.0 L850 706.0 L852 706.0 L854 706.0 L856 706.0 L858 706.0 L860 706.0 L862 706.0 L864 706.0 L866 706.0 L868 706.0 L870 706.0 L872 706.0 L874 706.0 L876 706.0 L878 706.0 L880 706.0 L882 706.0 L884 706.0 L886 706.0 L888 706.0 L890 706.0 L892 706.0 L894 706.0 L896 706.0 L898 706.0 L900 706.0 L902 706.0 L904 706.0 L906 706.0 L908 706.0 L910 706.0 L912 706.0 L914 706.0 L916 706.0 L918 706.0 L920 706.0 L922 706.0 L924 706.0 L926 706.0 L928 706.0 L930 706.0 L932 706.0 L934 706.0 L936 706.0 L938 706.0 L940 706.0 L942 706.0 L944 706.0 L946 706.0 L948 706.0 L950 706.0 L952 706.0 L954 706.0 L956 706.0 L958 706.0 L960 706.0 L962 706.0 L964 706.0 L966 706.0 L968 706.0 L970 706.0 L972 706.0 L974 706.0 L976 706.0 L978 706.0 L980 706.0 L982 706.0 L984 706.0 L986 706.0 L988 706.0 L990 706.0 L992 706.0 L994 706.0 L996 706.0 L998 706.0 L1000 706.0 L1002 706.0 L1004 706.0 L1006 706.0 L1008 706.0 L1010 706.0 L1012 706.0 L1014 706.0 L1016 706.0 L1018 706.0 L1020 706.0 L1022 706.0 L1024 706.0 L1026 706.0 L1028 706.0 L1030 706.0 L1032 706.0 L1034 706.0 L1036 706.0 L1038 706.0 L1040 706.0 L1042 706.0 L1044 706.0 L1046 706.0 L1048 706.0 L1050 706.0 L1052 706.0 L1054 706.0 L1056 706.0 L1058 706.0 L1060 706.0 L1062 706.0 L1064 706.0 L1066 706.0 L1068 706.0 L1070 706.0 L1072 706.0 L1074 706.0 L1076 706.0 L1078 706.0 L1080 706.0 L1082 706.0 L1084 706.0 L1086 706.0 L1088 706.0 L1090 706.0 L1092 706.0 L1094 706.0 L1096 706.0 L1098 706.0 L1100 706.0 L1102 706.0 L1104 706.0 L1106 706.0 L1108 706.0 L1110 706.0 L1112 706.0 L1114 706.0 L1116 706.0 L1118 706.0 L1120 706.0 L1122 706.0 L1124 706.0 L1126 706.0 L1128 706.0 L1130 706.0 L1132 706.0 L1134 706.0 L1136 706.0 L1138 706.0 L1140 706.0 L1142 706.0 L1144 706.0 L1146 706.0 L1148 706.0 L1150 706.0 L1152 706.0 L1154 706.0 L1156 706.0 L1158 706.0 L1160 706.0 L1162 706.0 L1164 706.0 L1166 706.0 L1168 706.0 L1170 706.0 L1172 706.0 L1174 706.0 L1176 706.0 L1178 706.0 L1180 706.0 L1182 706.0 L1184 706.0 L1186 706.0 L1188 706.0 L1190 706.0 L1192 706.0 L1194 706.0 L1196 706.0 L1198 706.0 L1200 706.0 L1202 706.0 L1204 706.0 L1206 706.0 L1208 706.0 L1210 706.0 L1212 706.0 L1214 706.0 L1216 706.0 L1218 706.0 L1220 706.0 L1222 706.0 L1224 706.0 L1226 706.0 L1228 706.0 L1230 706.0 L1232 706.0 L1234 706.0 L1236 706.0 L1238 706.0 L1240 706.0 L1242 706.0 L1244 706.0 L1246 706.0 L1248 706.0 L1250 706.0 L1252 706.0 L1254 706.0 L1256 706.0 L1258 706.0 L1260 706.0 L1262 706.0 L1264 706.0 L1266 706.0 L1268 706.0 L1270 706.0 L1272 706.0 L1274 706.0 L1276 706.0 L1278 706.0 L1280 706.0 L1282 706.0 L1284 706.0 L1286 706.0 L1288 706.0 L1290 706.0 L1292 706.0 L1294 706.0 L1296 706.0 L1298 706.0 L1300 706.0 L1302 706.0 L1304 706.0 L1306 706.0 L1308 706.0 L1310 706.0 L1312 706.0 L1314 706.0 L1316 706.0 L1318 706.0 L1320 706.0 L1322 706.0 L1324 706.0 L1326 706.0 L1328 706.0 L1330 706.0 L1332 706.0 L1334 706.0 L1336 706.0 L1338 706.0 L1340 706.0 L1342 706.0 L1344 706.0 L1346 706.0 L1348 706.0 L1350 706.0 L1352 706.0 L1354 706.0 L1356 706.0 L1358 706.0 L1360 706.0 L1362 706.0 L1364 706.0 L1366 706.0 L1368 706.0 L1370 706.0 L1372 706.0 L1374 706.0 L1376 706.0 L1378 706.0 L1380 706.0 L1382 706.0 L1384 706.0 L1386 706.0 L1388 706.0 L1390 706.0 L1392 706.0 L1394 706.0 L1396 706.0 L1398 706.0 L1400 706.0 L1402 706.0 L1404 706.0 L1406 706.0 L1408 706.0 L1410 706.0 L1412 706.0 L1414 706.0 L1416 706.0 L1418 706.0 L1420 706.0 L1422 706.0 L1424 706.0 L1426 706.0 L1428 706.0 L1430 706.0 L1432 706.0 L1434 706.0 L1436 706.0 L1438 706.0 L1440 706.0 L1442 706.0 L1444 706.0 L1446 706.0 L1448 706.0 L1450 706.0 L1452 706.0 L1454 706.0 L1456 706.0 L1458 706.0 L1460 706.0 L1462 706.0 L1464 706.0 L1466 706.0 L1468 706.0 L1470 706.0 L1472 706.0 L1474 706.0 L1476 706.0 L1478 706.0 L1480 706.0 L1482 706.0 L1484 706.0 L1486 706.0 L1488 706.0 L1490 706.0 L1492 706.0 L1494 706.0 L1496 706.0 L1498 706.0 L1500 706.0 L1502 706.0 L1504 706.0 L1506 706.0 L1508 706.0 L1510 706.0 L1512 706.0 L1514 706.0 L1516 706.0 L1518 706.1 L1520 706.1 L1522 706.2 L1524 706.4 L1526 706.5 L1528 706.7 L1530 706.8 L1532 707.0 L1534 707.2 L1536 707.3 L1538 707.5 L1540 707.6 L1542 707.8 L1544 708.0 L1546 708.1 L1548 708.3 L1550 708.5 L1552 708.6 L1554 708.8 L1556 709.0 L1558 709.2 L1560 709.4 L1562 709.7 L1564 710.0 L1566 710.2 L1568 710.5 L1570 710.8 L1572 711.0 L1574 711.3 L1576 711.6 L1578 711.9 L1580 712.1 L1582 712.4 L1584 712.6 L1586 712.8 L1588 712.9 L1590 713.0 L1592 713.0 L1594 713.0 L1596 713.0 L1598 713.0 L1600 713.0 L1602 713.0 L1604 713.0 L1606 713.0 L1608 712.9 L1610 712.9 L1612 712.8 L1614 712.6 L1616 712.5 L1618 712.4 L1620 712.2 L1622 712.1 L1624 712.0 L1626 711.8 L1628 711.7 L1630 711.6 L1632 711.4 L1634 711.3 L1636 711.1 L1638 710.8 L1640 710.5 L1642 710.0 L1644 709.5 L1646 709.0 L1648 708.5 L1650 708.0 L1652 707.6 L1654 707.3 L1656 707.1 L1658 707.0 L1660 707.0 L1662 707.0 L1664 707.0 L1666 707.0 L1668 707.0 L1670 707.0 L1672 707.0 L1674 707.0 L1676 707.0 L1678 707.0 L1680 707.0 L1682 707.0 L1684 707.0 L1686 707.0 L1688 707.0 L1690 707.0 L1692 707.0 L1694 707.0 L1696 707.1 L1698 707.2 L1700 707.5 L1702 707.7 L1704 708.1 L1706 708.4 L1708 708.8 L1710 709.2 L1712 709.5 L1714 709.9 L1716 710.3 L1718 710.7 L1720 711.1 L1722 711.7 L1724 712.3 L1726 712.9 L1728 713.6 L1730 714.2 L1732 714.8 L1734 715.2 L1736 715.3 L1738 715.2 L1740 715.0 L1742 714.6 L1744 714.2 L1746 713.9 L1748 713.7 L1750 713.7 L1752 713.9 L1754 714.4 L1756 715.0 L1758 715.7 L1760 716.4 L1762 717.0 L1764 717.7 L1766 718.4 L1768 719.1 L1770 719.7 L1772 720.4 L1774 721.1 L1776 721.7 L1778 722.1 L1780 722.3 L1782 722.3 L1784 722.1 L1786 721.7 L1788 721.3 L1790 721.0 L1792 720.8 L1794 720.8 L1796 721.1 L1798 721.7 L1800 722.5 L1802 723.3 L1804 724.2 L1806 725.1 L1808 726.0 L1810 726.9 L1812 727.8 L1814 728.7 L1816 729.5 L1818 730.3 L1820 731.0 L1822 731.7 L1824 732.4 L1826 733.1 L1828 733.7 L1830 734.2 L1832 734.6 L1834 734.8 L1836 735.0 L1838 735.0 L1840 735.0 L1842 734.8 L1844 734.3 L1846 733.1 L1848 731.0 L1850 728.1 L1852 724.8 L1854 721.6 L1856 719.3 L1858 718.3 L1860 719.0 L1862 720.9 L1864 723.5 L1866 726.2 L1868 728.4 L1870 730.1 L1872 731.2 L1874 732.0 L1876 732.4 L1878 732.8 L1880 733.1 L1882 733.2 L1884 733.0 L1886 732.5 L1888 731.6 L1890 730.6 L1892 729.6 L1894 728.5 L1896 727.6 L1898 726.7 L1900 726.1 L1902 725.6 L1904 725.3 L1906 725.0 L1908 724.7 L1910 724.6 L1912 724.5 L1914 724.6 L1916 724.8 L1918 725.3 L1920 725.8 L1922 726.3 L1924 726.8 L1926 727.0 L1928 727.1 L1930 726.8 L1932 726.1 L1934 725.3 L1936 724.4 L1938 723.5 L1940 722.6 L1942 721.9 L1944 721.4 L1946 721.0 L1948 720.8 L1950 720.7 L1952 720.6 L1954 720.5 L1956 720.4 L1958 720.3 L1960 720.2 L1962 720.2 L1964 720.1 L1966 719.9 L1968 719.8 L1970 719.7 L1972 719.6 L1974 719.4 L1976 719.3 L1978 719.2 L1980 719.0 L1982 718.9 L1984 718.8 L1986 718.6 L1988 718.5 L1990 718.3 L1992 718.1 L1994 717.8 L1996 717.4 L1998 716.9 L2000 716.3 L2002 715.6 L2004 714.8 L2006 714.1 L2008 713.4 L2010 712.7 L2012 712.0 L2014 711.3 L2016 710.6 L2018 710.0 L2020 709.4 L2022 708.8 L2024 708.3 L2026 707.7 L2028 707.2 L2030 706.8 L2032 706.4 L2034 706.2 L2036 706.1 L2038 706.0 L2040 706.0 L2042 706.0 L2044 706.0 L2046 706.0 L2048 706.0 L2050 706.0 L2052 706.0 L2054 706.0 L2056 706.0 L2058 706.0 L2060 706.0 L2062 706.0 L2064 706.0 L2066 706.0 L2068 706.0 L2070 706.0 L2072 706.0 L2074 706.0 L2076 706.0 L2078 706.0 L2080 706.0 L2082 706.0 L2084 706.0 L2086 706.0 L2088 706.0 L2090 706.0 L2092 706.0 L2094 706.0 L2096 706.0 L2098 706.0 L2100 706.0 L2102 706.0 L2104 706.0 L2106 706.0 L2108 706.0 L2110 706.0 L2112 706.0 L2114 706.0 L2116 706.0 L2118 706.0 L2120 706.0 L2122 706.0 L2124 706.0 L2126 706.0 L2128 706.0 L2130 706.0 L2132 706.0 L2134 706.0 L2136 706.0 L2138 706.0 L2140 706.0 L2142 706.0 L2144 706.0 L2146 706.0 L2148 706.0 L2150 706.0 L2152 706.0 L2154 706.0 L2156 706.0 L2158 706.0 L2160 706.0 L2162 706.0 L2164 706.0 L2166 706.0 L2168 706.0 L2170 706.0 L2172 706.0 L2174 706.0 L2176 706.0 L2178 706.0 L2180 706.0 L2182 706.0 L2184 706.0 L2186 706.0 L2188 706.0 L2190 706.0 L2192 706.0 L2194 706.0 L2196 706.0 L2198 706.0 L2200 706.0 L2202 706.0 L2204 706.0 L2206 706.0 L2208 706.0 L2210 706.0 L2212 706.0 L2214 706.0 L2216 706.0 L2218 706.0 L2220 706.0 L2222 706.0 L2224 706.0 L2226 706.0 L2228 706.0 L2230 706.0 L2232 706.0 L2234 706.0 L2236 706.0 L2238 706.0 L2240 706.0 L2242 706.0 L2244 706.0 L2246 706.0 L2248 706.0 L2250 706.0 L2252 706.0 L2254 706.0 L2256 706.0 L2258 706.0 L2260 706.0 L2262 706.0 L2264 706.0 L2266 706.0 L2268 706.0 L2270 706.0 L2272 706.0 L2274 706.0 L2276 706.0 L2278 706.0 L2280 706.0 L2282 706.0 L2284 706.0 L2286 706.0 L2288 706.0 L2290 706.0 L2292 706.0 L2294 706.0 L2296 706.0 L2298 706.0 L2300 706.0 L2302 706.0 L2304 706.0 L2306 706.0 L2308 706.0 L2310 706.0 L2312 706.0 L2314 706.0 L2316 706.0 L2318 706.0 L2320 706.0 L2322 706.0 L2324 706.0 L2326 706.0 L2328 706.0 L2330 706.0 L2332 706.0 L2334 706.0 L2336 706.0 L2338 706.0 L2340 706.0 L2342 706.0 L2344 706.0 L2346 706.0 L2348 706.0 L2350 706.0 L2352 706.0 L2354 706.0 L2356 706.0 L2358 706.0 L2360 706.0 L2362 706.0 L2364 706.0 L2366 706.0 L2368 706.0 L2370 706.0 L2372 706.0 L2374 706.0 L2376 706.0 L2378 706.0 L2380 706.0 L2382 706.0 L2384 706.0 L2386 706.0 L2388 706.0 L2390 706.0 L2392 706.0 L2394 706.0 L2396 706.0 L2398 706.0 L2400 706.0 L2402 706.0 L2404 706.0 L2406 706.0 L2408 706.0 L2410 706.0 L2412 706.0 L2414 706.0 L2416 706.0 L2418 706.0 L2420 706.0 L2422 706.0 L2424 706.0 L2426 706.0 L2428 706.0 L2430 706.0 L2432 706.0 L2434 706.0 L2436 706.0 L2438 706.0 L2440 706.0 L2442 706.0 L2444 706.0 L2446 706.0 L2448 706.0 L2450 706.0 L2452 706.0 L2454 706.0 L2456 706.0 L2458 706.0 L2460 706.0 L2462 706.0 L2464 706.0 L2466 706.0 L2468 706.0 L2470 706.0 L2472 706.0 L2474 706.0 L2476 706.0 L2478 706.0 L2480 706.0 L2482 706.0 L2484 706.0 L2486 706.0 L2488 706.0 L2490 706.0 L2492 706.0 L2494 706.0 L2496 706.0 L2498 706.0 L2500 706.0 L2502 706.0 L2504 706.0 L2506 706.0 L2508 706.0 L2510 706.0 L2512 706.0 L2514 706.0 L2516 706.0 L2518 706.0 L2520 706.0 L2522 706.0 L2524 706.0 L2526 706.0 L2528 706.0 L2530 706.0 L2532 706.0 L2534 706.0 L2536 706.0 L2538 706.0 L2540 706.0 L2542 706.0 L2544 706.0 L2546 706.0 L2547 706 Z" fill="rgba(53,132,228,0.55)" stroke="#1c71d8" stroke-width="2"/><path d="M654 706 H2547" stroke="#1c71d8" stroke-width="2.6"/><path d="M2547 706 H2690" stroke="#777" stroke-width="2" stroke-dasharray="2 5"/><path d="M654 776 L654 776.0 L656 776.0 L658 776.0 L660 776.0 L662 776.0 L664 776.0 L666 776.0 L668 776.0 L670 776.0 L672 776.0 L674 776.0 L676 776.0 L678 776.0 L680 776.0 L682 776.0 L684 776.0 L686 776.0 L688 776.0 L690 776.0 L692 776.0 L694 776.0 L696 776.0 L698 776.0 L700 776.0 L702 776.0 L704 776.0 L706 776.0 L708 776.0 L710 776.0 L712 776.0 L714 776.0 L716 776.0 L718 776.0 L720 776.0 L722 776.0 L724 776.0 L726 776.0 L728 776.0 L730 776.0 L732 776.0 L734 776.0 L736 776.0 L738 776.0 L740 776.0 L742 776.0 L744 776.0 L746 776.0 L748 776.0 L750 776.0 L752 776.0 L754 776.0 L756 776.0 L758 776.0 L760 776.0 L762 776.0 L764 776.0 L766 776.0 L768 776.0 L770 776.0 L772 776.0 L774 776.0 L776 776.0 L778 776.0 L780 776.0 L782 776.0 L784 776.0 L786 776.0 L788 776.0 L790 776.0 L792 776.0 L794 776.0 L796 776.0 L798 776.0 L800 776.0 L802 776.0 L804 776.0 L806 776.0 L808 776.0 L810 776.0 L812 776.0 L814 776.0 L816 776.0 L818 776.0 L820 776.0 L822 776.0 L824 776.0 L826 776.0 L828 776.0 L830 776.0 L832 776.0 L834 776.0 L836 776.0 L838 776.0 L840 776.0 L842 776.0 L844 776.0 L846 776.0 L848 776.0 L850 776.0 L852 776.0 L854 776.0 L856 776.0 L858 776.0 L860 776.0 L862 776.0 L864 776.0 L866 776.0 L868 776.0 L870 776.0 L872 776.0 L874 776.0 L876 776.0 L878 776.0 L880 776.0 L882 776.0 L884 776.0 L886 776.0 L888 776.0 L890 776.0 L892 776.0 L894 776.0 L896 776.0 L898 776.0 L900 776.0 L902 776.0 L904 776.0 L906 776.0 L908 776.0 L910 776.0 L912 776.0 L914 776.0 L916 776.0 L918 776.0 L920 776.0 L922 776.0 L924 776.0 L926 776.0 L928 776.0 L930 776.0 L932 776.0 L934 776.0 L936 776.0 L938 776.0 L940 776.0 L942 776.0 L944 776.0 L946 776.0 L948 776.0 L950 776.0 L952 776.0 L954 776.0 L956 776.0 L958 776.0 L960 776.0 L962 776.0 L964 776.0 L966 776.0 L968 776.0 L970 776.0 L972 776.0 L974 776.0 L976 776.0 L978 776.0 L980 776.0 L982 776.0 L984 776.0 L986 776.0 L988 776.0 L990 776.0 L992 776.0 L994 776.0 L996 776.0 L998 776.0 L1000 776.0 L1002 776.0 L1004 776.0 L1006 776.0 L1008 776.0 L1010 776.0 L1012 776.0 L1014 776.0 L1016 776.0 L1018 776.0 L1020 776.0 L1022 776.0 L1024 776.0 L1026 776.0 L1028 776.0 L1030 776.0 L1032 776.0 L1034 776.0 L1036 776.0 L1038 776.0 L1040 776.0 L1042 776.0 L1044 776.0 L1046 776.0 L1048 776.0 L1050 776.0 L1052 776.0 L1054 776.0 L1056 776.0 L1058 776.0 L1060 776.0 L1062 776.0 L1064 776.0 L1066 776.0 L1068 776.0 L1070 776.0 L1072 776.0 L1074 776.0 L1076 776.0 L1078 776.0 L1080 776.0 L1082 776.0 L1084 776.0 L1086 776.0 L1088 776.0 L1090 776.0 L1092 776.0 L1094 776.0 L1096 776.0 L1098 776.0 L1100 776.0 L1102 776.0 L1104 776.0 L1106 776.0 L1108 776.0 L1110 776.0 L1112 776.0 L1114 776.0 L1116 776.0 L1118 776.0 L1120 776.0 L1122 776.0 L1124 776.0 L1126 776.0 L1128 776.0 L1130 776.0 L1132 776.0 L1134 776.0 L1136 776.0 L1138 776.0 L1140 776.0 L1142 776.0 L1144 776.0 L1146 776.0 L1148 776.0 L1150 776.0 L1152 776.0 L1154 776.0 L1156 776.0 L1158 776.0 L1160 776.0 L1162 776.0 L1164 776.0 L1166 776.0 L1168 776.0 L1170 776.0 L1172 776.0 L1174 776.0 L1176 776.0 L1178 776.0 L1180 776.0 L1182 776.0 L1184 776.0 L1186 776.0 L1188 776.0 L1190 776.0 L1192 776.0 L1194 776.0 L1196 776.0 L1198 776.0 L1200 776.0 L1202 776.0 L1204 776.0 L1206 776.0 L1208 776.0 L1210 776.0 L1212 776.0 L1214 776.0 L1216 776.0 L1218 776.0 L1220 775.9 L1222 775.8 L1224 775.6 L1226 775.3 L1228 775.0 L1230 774.7 L1232 774.5 L1234 774.5 L1236 774.6 L1238 774.8 L1240 775.1 L1242 775.5 L1244 775.7 L1246 775.9 L1248 776.0 L1250 776.0 L1252 776.0 L1254 776.0 L1256 776.0 L1258 776.0 L1260 776.0 L1262 776.0 L1264 775.9 L1266 775.8 L1268 775.7 L1270 775.4 L1272 775.1 L1274 774.8 L1276 774.5 L1278 774.2 L1280 774.1 L1282 774.0 L1284 774.0 L1286 774.0 L1288 774.0 L1290 774.0 L1292 774.0 L1294 774.0 L1296 774.0 L1298 774.0 L1300 774.0 L1302 774.0 L1304 774.0 L1306 774.0 L1308 774.0 L1310 774.0 L1312 774.0 L1314 774.0 L1316 774.0 L1318 774.0 L1320 774.0 L1322 774.0 L1324 774.1 L1326 774.2 L1328 774.4 L1330 774.7 L1332 775.0 L1334 775.3 L1336 775.6 L1338 775.8 L1340 775.9 L1342 776.0 L1344 776.0 L1346 776.0 L1348 776.0 L1350 776.0 L1352 776.0 L1354 776.0 L1356 776.0 L1358 776.0 L1360 776.0 L1362 776.0 L1364 776.0 L1366 776.0 L1368 776.0 L1370 776.0 L1372 776.0 L1374 776.0 L1376 776.0 L1378 776.0 L1380 776.0 L1382 776.0 L1384 776.0 L1386 776.0 L1388 776.0 L1390 776.0 L1392 776.0 L1394 776.0 L1396 776.0 L1398 776.0 L1400 776.0 L1402 776.0 L1404 776.0 L1406 776.0 L1408 776.0 L1410 776.0 L1412 776.0 L1414 776.0 L1416 776.0 L1418 776.0 L1420 776.0 L1422 776.0 L1424 776.0 L1426 776.0 L1428 776.0 L1430 776.0 L1432 776.0 L1434 776.0 L1436 776.0 L1438 776.0 L1440 776.0 L1442 776.0 L1444 776.0 L1446 776.0 L1448 776.0 L1450 776.0 L1452 776.0 L1454 776.0 L1456 776.0 L1458 776.0 L1460 776.0 L1462 776.0 L1464 776.0 L1466 776.0 L1468 776.0 L1470 776.0 L1472 776.0 L1474 776.0 L1476 776.0 L1478 776.0 L1480 776.0 L1482 776.0 L1484 776.0 L1486 776.0 L1488 776.0 L1490 776.0 L1492 776.0 L1494 776.0 L1496 776.0 L1498 776.0 L1500 776.0 L1502 776.0 L1504 776.0 L1506 776.0 L1508 776.0 L1510 776.0 L1512 776.0 L1514 775.9 L1516 775.9 L1518 775.9 L1520 775.8 L1522 775.8 L1524 775.7 L1526 775.7 L1528 775.6 L1530 775.6 L1532 775.6 L1534 775.5 L1536 775.5 L1538 775.4 L1540 775.4 L1542 775.3 L1544 775.3 L1546 775.2 L1548 775.2 L1550 775.2 L1552 775.1 L1554 775.0 L1556 774.8 L1558 774.6 L1560 774.3 L1562 773.9 L1564 773.5 L1566 773.1 L1568 772.8 L1570 772.4 L1572 772.2 L1574 772.0 L1576 771.8 L1578 771.7 L1580 771.6 L1582 771.5 L1584 771.4 L1586 771.4 L1588 771.3 L1590 771.2 L1592 771.1 L1594 770.9 L1596 770.8 L1598 770.6 L1600 770.5 L1602 770.3 L1604 770.1 L1606 769.9 L1608 769.7 L1610 769.6 L1612 769.4 L1614 769.3 L1616 769.3 L1618 769.4 L1620 769.5 L1622 769.8 L1624 770.0 L1626 770.3 L1628 770.6 L1630 771.0 L1632 771.4 L1634 771.8 L1636 772.3 L1638 772.9 L1640 773.4 L1642 773.9 L1644 774.3 L1646 774.7 L1648 774.9 L1650 775.0 L1652 775.0 L1654 775.0 L1656 775.0 L1658 775.0 L1660 775.0 L1662 775.0 L1664 775.0 L1666 775.0 L1668 775.0 L1670 775.0 L1672 775.0 L1674 775.0 L1676 775.0 L1678 775.0 L1680 775.0 L1682 775.0 L1684 775.0 L1686 775.0 L1688 775.0 L1690 775.0 L1692 775.0 L1694 775.0 L1696 774.9 L1698 774.7 L1700 774.3 L1702 773.9 L1704 773.4 L1706 772.8 L1708 772.3 L1710 771.8 L1712 771.3 L1714 770.8 L1716 770.4 L1718 770.0 L1720 769.6 L1722 769.2 L1724 768.8 L1726 768.6 L1728 768.6 L1730 768.8 L1732 769.2 L1734 769.7 L1736 770.2 L1738 770.7 L1740 771.2 L1742 771.4 L1744 771.5 L1746 771.4 L1748 771.3 L1750 771.0 L1752 770.7 L1754 770.4 L1756 769.9 L1758 769.3 L1760 768.5 L1762 767.5 L1764 766.5 L1766 765.4 L1768 764.3 L1770 763.2 L1772 762.2 L1774 761.1 L1776 760.1 L1778 759.3 L1780 758.8 L1782 758.6 L1784 758.6 L1786 758.8 L1788 759.1 L1790 759.4 L1792 759.6 L1794 759.7 L1796 759.8 L1798 759.7 L1800 759.6 L1802 759.5 L1804 759.3 L1806 759.1 L1808 758.6 L1810 757.9 L1812 756.8 L1814 755.6 L1816 754.1 L1818 752.7 L1820 751.3 L1822 750.0 L1824 749.0 L1826 748.2 L1828 747.8 L1830 747.5 L1832 747.3 L1834 747.1 L1836 747.0 L1838 746.8 L1840 746.6 L1842 746.6 L1844 746.9 L1846 747.8 L1848 749.5 L1850 751.9 L1852 754.8 L1854 757.5 L1856 759.6 L1858 760.6 L1860 760.4 L1862 759.1 L1864 757.3 L1866 755.1 L1868 753.1 L1870 751.3 L1872 750.0 L1874 749.2 L1876 749.0 L1878 749.2 L1880 749.6 L1882 750.0 L1884 750.5 L1886 750.9 L1888 751.4 L1890 751.9 L1892 752.5 L1894 753.2 L1896 754.0 L1898 754.8 L1900 755.6 L1902 756.3 L1904 756.7 L1906 756.9 L1908 756.6 L1910 756.0 L1912 755.2 L1914 754.3 L1916 753.4 L1918 752.6 L1920 752.0 L1922 751.7 L1924 751.7 L1926 752.0 L1928 752.3 L1930 752.6 L1932 753.0 L1934 753.4 L1936 753.7 L1938 754.1 L1940 754.4 L1942 754.7 L1944 754.9 L1946 755.1 L1948 755.3 L1950 755.5 L1952 755.6 L1954 755.7 L1956 755.9 L1958 756.0 L1960 756.1 L1962 756.3 L1964 756.4 L1966 756.5 L1968 756.7 L1970 756.8 L1972 756.9 L1974 757.0 L1976 757.1 L1978 757.2 L1980 757.3 L1982 757.4 L1984 757.5 L1986 757.6 L1988 757.7 L1990 757.8 L1992 758.0 L1994 758.4 L1996 759.1 L1998 760.0 L2000 761.1 L2002 762.4 L2004 763.7 L2006 765.0 L2008 766.3 L2010 767.5 L2012 768.7 L2014 769.7 L2016 770.6 L2018 771.3 L2020 772.0 L2022 772.7 L2024 773.3 L2026 773.9 L2028 774.6 L2030 775.1 L2032 775.5 L2034 775.8 L2036 775.9 L2038 776.0 L2040 776.0 L2042 776.0 L2044 776.0 L2046 776.0 L2048 776.0 L2050 776.0 L2052 776.0 L2054 776.0 L2056 776.0 L2058 776.0 L2060 776.0 L2062 776.0 L2064 776.0 L2066 776.0 L2068 776.0 L2070 776.0 L2072 776.0 L2074 776.0 L2076 776.0 L2078 776.0 L2080 776.0 L2082 776.0 L2084 776.0 L2086 775.9 L2088 775.8 L2090 775.6 L2092 775.3 L2094 775.0 L2096 774.7 L2098 774.5 L2100 774.5 L2102 774.6 L2104 774.9 L2106 775.2 L2108 775.5 L2110 775.7 L2112 775.9 L2114 776.0 L2116 776.0 L2118 776.0 L2120 776.0 L2122 776.0 L2124 776.0 L2126 776.0 L2128 776.0 L2130 776.0 L2132 776.0 L2134 776.0 L2136 776.0 L2138 776.0 L2140 776.0 L2142 776.0 L2144 776.0 L2146 776.0 L2148 776.0 L2150 776.0 L2152 776.0 L2154 776.0 L2156 776.0 L2158 776.0 L2160 776.0 L2162 776.0 L2164 776.0 L2166 776.0 L2168 776.0 L2170 776.0 L2172 776.0 L2174 776.0 L2176 776.0 L2178 776.0 L2180 776.0 L2182 776.0 L2184 776.0 L2186 776.0 L2188 776.0 L2190 776.0 L2192 776.0 L2194 776.0 L2196 776.0 L2198 776.0 L2200 776.0 L2202 776.0 L2204 776.0 L2206 776.0 L2208 776.0 L2210 776.0 L2212 776.0 L2214 776.0 L2216 776.0 L2218 776.0 L2220 776.0 L2222 776.0 L2224 776.0 L2226 776.0 L2228 776.0 L2230 776.0 L2232 776.0 L2234 776.0 L2236 776.0 L2238 776.0 L2240 776.0 L2242 776.0 L2244 776.0 L2246 776.0 L2248 776.0 L2250 776.0 L2252 776.0 L2254 776.0 L2256 776.0 L2258 776.0 L2260 776.0 L2262 776.0 L2264 776.0 L2266 776.0 L2268 776.0 L2270 776.0 L2272 776.0 L2274 776.0 L2276 776.0 L2278 776.0 L2280 776.0 L2282 776.0 L2284 776.0 L2286 776.0 L2288 776.0 L2290 776.0 L2292 776.0 L2294 776.0 L2296 776.0 L2298 776.0 L2300 776.0 L2302 776.0 L2304 776.0 L2306 776.0 L2308 776.0 L2310 776.0 L2312 776.0 L2314 776.0 L2316 776.0 L2318 776.0 L2320 776.0 L2322 776.0 L2324 776.0 L2326 776.0 L2328 776.0 L2330 776.0 L2332 776.0 L2334 776.0 L2336 776.0 L2338 776.0 L2340 776.0 L2342 776.0 L2344 776.0 L2346 776.0 L2348 776.0 L2350 776.0 L2352 776.0 L2354 776.0 L2356 776.0 L2358 776.0 L2360 776.0 L2362 776.0 L2364 776.0 L2366 776.0 L2368 776.0 L2370 776.0 L2372 776.0 L2374 776.0 L2376 776.0 L2378 776.0 L2380 776.0 L2382 776.0 L2384 776.0 L2386 776.0 L2388 776.0 L2390 776.0 L2392 776.0 L2394 776.0 L2396 776.0 L2398 776.0 L2400 776.0 L2402 776.0 L2404 776.0 L2406 776.0 L2408 776.0 L2410 776.0 L2412 776.0 L2414 776.0 L2416 776.0 L2418 776.0 L2420 776.0 L2422 776.0 L2424 776.0 L2426 776.0 L2428 776.0 L2430 776.0 L2432 776.0 L2434 776.0 L2436 776.0 L2438 776.0 L2440 776.0 L2442 776.0 L2444 776.0 L2446 776.0 L2448 776.0 L2450 776.0 L2452 776.0 L2454 776.0 L2456 776.0 L2458 776.0 L2460 776.0 L2462 776.0 L2464 776.0 L2466 776.0 L2468 776.0 L2470 776.0 L2472 776.0 L2474 776.0 L2476 776.0 L2478 776.0 L2480 776.0 L2482 776.0 L2484 776.0 L2486 776.0 L2488 776.0 L2490 776.0 L2492 776.0 L2494 776.0 L2496 776.0 L2498 776.0 L2500 776.0 L2502 776.0 L2504 776.0 L2506 776.0 L2508 776.0 L2510 776.0 L2512 776.0 L2514 776.0 L2516 776.0 L2518 776.0 L2520 776.0 L2522 776.0 L2524 776.0 L2526 776.0 L2528 776.0 L2530 776.0 L2532 776.0 L2534 776.0 L2536 776.0 L2538 776.0 L2540 776.0 L2542 776.0 L2544 776.0 L2546 776.0 L2547 776 Z" fill="rgba(230,97,0,0.5)" stroke="#c64600" stroke-width="2"/><path d="M654 776 H2547" stroke="#c64600" stroke-width="2.6"/><path d="M2547 776 H2690" stroke="#777" stroke-width="2" stroke-dasharray="2 5"/><path d="M654 846 L654 846.0 L656 846.0 L658 846.0 L660 846.0 L662 846.0 L664 846.0 L666 846.0 L668 846.0 L670 846.0 L672 846.0 L674 846.0 L676 846.0 L678 846.0 L680 846.0 L682 846.0 L684 846.0 L686 846.0 L688 846.0 L690 846.0 L692 846.0 L694 846.0 L696 846.0 L698 846.0 L700 846.0 L702 846.0 L704 846.0 L706 846.0 L708 846.0 L710 846.0 L712 846.0 L714 846.0 L716 846.0 L718 846.0 L720 846.0 L722 846.0 L724 846.0 L726 846.0 L728 846.0 L730 846.0 L732 846.0 L734 846.0 L736 846.0 L738 846.0 L740 846.0 L742 846.0 L744 846.0 L746 846.0 L748 846.0 L750 846.0 L752 846.0 L754 846.0 L756 846.0 L758 846.0 L760 846.0 L762 846.0 L764 846.0 L766 846.0 L768 846.0 L770 846.0 L772 846.0 L774 846.0 L776 846.0 L778 846.0 L780 846.0 L782 846.0 L784 846.0 L786 846.0 L788 846.0 L790 846.0 L792 846.0 L794 846.0 L796 846.0 L798 846.0 L800 846.0 L802 846.0 L804 846.0 L806 846.0 L808 846.0 L810 846.0 L812 846.0 L814 846.0 L816 846.0 L818 846.0 L820 846.0 L822 846.0 L824 846.0 L826 846.0 L828 846.0 L830 846.0 L832 846.0 L834 846.0 L836 846.0 L838 846.0 L840 846.0 L842 846.0 L844 846.0 L846 846.0 L848 846.0 L850 846.0 L852 846.0 L854 846.0 L856 846.0 L858 846.0 L860 846.0 L862 846.0 L864 846.0 L866 846.0 L868 846.0 L870 846.0 L872 846.0 L874 846.0 L876 846.0 L878 846.0 L880 846.0 L882 846.0 L884 846.0 L886 846.0 L888 846.0 L890 846.0 L892 846.0 L894 846.0 L896 846.0 L898 846.0 L900 846.0 L902 846.0 L904 846.0 L906 846.0 L908 846.0 L910 846.0 L912 846.0 L914 846.0 L916 846.0 L918 846.0 L920 846.0 L922 846.0 L924 846.0 L926 846.0 L928 846.0 L930 846.0 L932 846.0 L934 846.0 L936 846.0 L938 846.0 L940 846.0 L942 846.0 L944 846.0 L946 846.0 L948 846.0 L950 846.0 L952 846.0 L954 846.0 L956 846.0 L958 846.0 L960 846.0 L962 846.0 L964 846.0 L966 846.0 L968 846.0 L970 846.0 L972 846.0 L974 846.0 L976 846.0 L978 846.0 L980 846.0 L982 846.0 L984 846.0 L986 846.0 L988 846.0 L990 846.0 L992 846.0 L994 846.0 L996 846.0 L998 846.0 L1000 846.0 L1002 846.0 L1004 846.0 L1006 846.0 L1008 846.0 L1010 846.0 L1012 846.0 L1014 846.0 L1016 846.0 L1018 846.0 L1020 846.0 L1022 846.0 L1024 846.0 L1026 846.0 L1028 846.0 L1030 846.0 L1032 846.0 L1034 846.0 L1036 846.0 L1038 846.0 L1040 846.0 L1042 846.0 L1044 846.0 L1046 846.0 L1048 846.0 L1050 846.0 L1052 846.0 L1054 846.0 L1056 846.0 L1058 846.0 L1060 846.0 L1062 846.0 L1064 846.0 L1066 846.0 L1068 846.0 L1070 846.0 L1072 846.0 L1074 846.0 L1076 846.0 L1078 846.0 L1080 846.0 L1082 846.0 L1084 846.0 L1086 846.0 L1088 846.0 L1090 846.0 L1092 846.0 L1094 846.0 L1096 846.0 L1098 846.0 L1100 846.0 L1102 846.0 L1104 846.0 L1106 846.0 L1108 846.0 L1110 846.0 L1112 846.0 L1114 846.0 L1116 846.0 L1118 846.0 L1120 846.0 L1122 846.0 L1124 846.0 L1126 846.0 L1128 846.0 L1130 846.0 L1132 846.0 L1134 846.0 L1136 846.0 L1138 846.0 L1140 846.0 L1142 846.0 L1144 846.0 L1146 846.0 L1148 846.0 L1150 846.0 L1152 846.0 L1154 846.0 L1156 846.0 L1158 846.0 L1160 846.0 L1162 846.0 L1164 846.0 L1166 846.0 L1168 846.0 L1170 846.0 L1172 846.0 L1174 846.0 L1176 846.0 L1178 846.0 L1180 846.0 L1182 846.0 L1184 846.0 L1186 846.0 L1188 846.0 L1190 846.0 L1192 846.0 L1194 846.0 L1196 846.0 L1198 846.0 L1200 846.0 L1202 846.0 L1204 846.0 L1206 846.0 L1208 846.0 L1210 846.0 L1212 846.0 L1214 846.0 L1216 846.0 L1218 846.0 L1220 846.0 L1222 846.0 L1224 846.0 L1226 846.0 L1228 846.0 L1230 846.0 L1232 846.0 L1234 846.0 L1236 846.0 L1238 846.0 L1240 846.0 L1242 846.0 L1244 846.0 L1246 846.0 L1248 846.0 L1250 846.0 L1252 846.0 L1254 846.0 L1256 846.0 L1258 846.0 L1260 846.0 L1262 846.0 L1264 846.0 L1266 846.0 L1268 846.0 L1270 846.0 L1272 846.0 L1274 846.0 L1276 846.0 L1278 846.0 L1280 846.0 L1282 846.0 L1284 846.0 L1286 846.0 L1288 846.0 L1290 846.0 L1292 846.0 L1294 846.0 L1296 846.0 L1298 846.0 L1300 846.0 L1302 846.0 L1304 846.0 L1306 846.0 L1308 846.0 L1310 846.0 L1312 846.0 L1314 846.0 L1316 846.0 L1318 846.0 L1320 846.0 L1322 846.0 L1324 846.0 L1326 846.0 L1328 846.0 L1330 846.0 L1332 846.0 L1334 846.0 L1336 846.0 L1338 846.0 L1340 846.0 L1342 846.0 L1344 846.0 L1346 846.0 L1348 846.0 L1350 846.0 L1352 846.0 L1354 846.0 L1356 846.0 L1358 846.0 L1360 846.0 L1362 846.0 L1364 846.0 L1366 846.0 L1368 846.0 L1370 846.0 L1372 846.0 L1374 846.0 L1376 846.0 L1378 846.0 L1380 846.0 L1382 846.0 L1384 846.0 L1386 846.0 L1388 846.0 L1390 846.0 L1392 846.0 L1394 846.0 L1396 846.0 L1398 846.0 L1400 846.0 L1402 846.0 L1404 846.0 L1406 846.0 L1408 846.0 L1410 846.0 L1412 846.0 L1414 846.0 L1416 846.0 L1418 846.0 L1420 846.0 L1422 846.0 L1424 846.0 L1426 846.0 L1428 846.0 L1430 846.0 L1432 846.0 L1434 846.0 L1436 846.0 L1438 846.0 L1440 846.0 L1442 846.0 L1444 846.0 L1446 846.0 L1448 846.0 L1450 846.0 L1452 846.0 L1454 846.0 L1456 846.0 L1458 846.0 L1460 846.0 L1462 846.0 L1464 846.0 L1466 846.0 L1468 846.0 L1470 846.0 L1472 846.0 L1474 846.0 L1476 846.0 L1478 846.0 L1480 846.0 L1482 846.0 L1484 846.0 L1486 846.0 L1488 846.0 L1490 846.0 L1492 846.0 L1494 846.0 L1496 846.0 L1498 846.0 L1500 846.0 L1502 846.0 L1504 846.0 L1506 846.0 L1508 846.0 L1510 846.0 L1512 846.0 L1514 846.0 L1516 846.0 L1518 846.0 L1520 846.0 L1522 846.0 L1524 846.0 L1526 846.0 L1528 846.0 L1530 846.0 L1532 846.1 L1534 846.1 L1536 846.3 L1538 846.5 L1540 846.7 L1542 847.0 L1544 847.3 L1546 847.5 L1548 847.8 L1550 848.1 L1552 848.4 L1554 848.7 L1556 849.0 L1558 849.4 L1560 849.9 L1562 850.4 L1564 850.9 L1566 851.5 L1568 852.0 L1570 852.6 L1572 853.1 L1574 853.6 L1576 854.1 L1578 854.5 L1580 854.8 L1582 854.9 L1584 855.0 L1586 855.0 L1588 855.0 L1590 855.0 L1592 855.0 L1594 855.0 L1596 855.0 L1598 855.0 L1600 855.0 L1602 855.0 L1604 855.0 L1606 855.0 L1608 854.9 L1610 854.8 L1612 854.7 L1614 854.5 L1616 854.4 L1618 854.2 L1620 854.0 L1622 853.8 L1624 853.6 L1626 853.4 L1628 853.2 L1630 852.8 L1632 852.3 L1634 851.7 L1636 851.0 L1638 850.2 L1640 849.4 L1642 848.6 L1644 848.0 L1646 847.5 L1648 847.1 L1650 846.9 L1652 846.8 L1654 846.8 L1656 846.7 L1658 846.7 L1660 846.6 L1662 846.6 L1664 846.5 L1666 846.5 L1668 846.4 L1670 846.4 L1672 846.3 L1674 846.2 L1676 846.2 L1678 846.1 L1680 846.1 L1682 846.2 L1684 846.3 L1686 846.6 L1688 846.8 L1690 847.2 L1692 847.5 L1694 847.8 L1696 848.2 L1698 848.5 L1700 848.8 L1702 849.2 L1704 849.5 L1706 849.9 L1708 850.2 L1710 850.6 L1712 851.0 L1714 851.5 L1716 852.1 L1718 852.7 L1720 853.4 L1722 854.1 L1724 854.7 L1726 855.1 L1728 855.3 L1730 855.3 L1732 855.1 L1734 854.7 L1736 854.3 L1738 854.0 L1740 853.6 L1742 853.5 L1744 853.4 L1746 853.5 L1748 853.7 L1750 854.0 L1752 854.3 L1754 854.6 L1756 855.0 L1758 855.5 L1760 856.1 L1762 856.9 L1764 857.7 L1766 858.5 L1768 859.3 L1770 860.1 L1772 860.9 L1774 861.7 L1776 862.4 L1778 863.0 L1780 863.4 L1782 863.6 L1784 863.6 L1786 863.4 L1788 863.3 L1790 863.1 L1792 862.9 L1794 862.7 L1796 862.5 L1798 862.4 L1800 862.5 L1802 862.7 L1804 863.3 L1806 864.0 L1808 865.0 L1810 865.9 L1812 866.9 L1814 867.9 L1816 868.9 L1818 869.9 L1820 870.9 L1822 871.8 L1824 872.6 L1826 873.3 L1828 874.0 L1830 874.5 L1832 875.1 L1834 875.6 L1836 876.1 L1838 876.7 L1840 877.2 L1842 877.6 L1844 877.5 L1846 876.7 L1848 875.0 L1850 872.4 L1852 869.3 L1854 866.2 L1856 863.9 L1858 862.7 L1860 862.9 L1862 864.2 L1864 866.2 L1866 868.5 L1868 870.6 L1870 872.5 L1872 873.9 L1874 874.7 L1876 874.9 L1878 874.8 L1880 874.4 L1882 874.0 L1884 873.5 L1886 873.1 L1888 872.6 L1890 872.1 L1892 871.5 L1894 870.8 L1896 870.0 L1898 869.2 L1900 868.4 L1902 867.7 L1904 867.0 L1906 866.5 L1908 866.2 L1910 866.1 L1912 866.0 L1914 866.0 L1916 866.0 L1918 866.0 L1920 866.0 L1922 866.0 L1924 866.0 L1926 866.0 L1928 865.9 L1930 865.8 L1932 865.6 L1934 865.4 L1936 865.2 L1938 865.0 L1940 864.8 L1942 864.6 L1944 864.4 L1946 864.2 L1948 864.0 L1950 863.8 L1952 863.6 L1954 863.4 L1956 863.2 L1958 863.0 L1960 862.7 L1962 862.5 L1964 862.2 L1966 861.9 L1968 861.7 L1970 861.4 L1972 861.1 L1974 860.9 L1976 860.6 L1978 860.3 L1980 860.0 L1982 859.8 L1984 859.5 L1986 859.2 L1988 859.0 L1990 858.7 L1992 858.3 L1994 857.8 L1996 857.2 L1998 856.4 L2000 855.4 L2002 854.3 L2004 853.3 L2006 852.2 L2008 851.1 L2010 850.0 L2012 849.0 L2014 848.0 L2016 847.2 L2018 846.6 L2020 846.2 L2022 846.1 L2024 846.0 L2026 846.0 L2028 846.0 L2030 846.0 L2032 846.0 L2034 846.0 L2036 846.0 L2038 846.0 L2040 846.0 L2042 846.0 L2044 846.0 L2046 846.0 L2048 846.0 L2050 846.0 L2052 846.0 L2054 846.0 L2056 846.0 L2058 846.0 L2060 846.0 L2062 846.0 L2064 846.0 L2066 846.0 L2068 846.0 L2070 846.0 L2072 846.0 L2074 846.0 L2076 846.0 L2078 846.0 L2080 846.0 L2082 846.0 L2084 846.0 L2086 846.0 L2088 846.0 L2090 846.0 L2092 846.0 L2094 846.0 L2096 846.0 L2098 846.0 L2100 846.0 L2102 846.0 L2104 846.0 L2106 846.0 L2108 846.0 L2110 846.0 L2112 846.0 L2114 846.0 L2116 846.0 L2118 846.0 L2120 846.0 L2122 846.0 L2124 846.0 L2126 846.0 L2128 846.0 L2130 846.0 L2132 846.0 L2134 846.0 L2136 846.0 L2138 846.0 L2140 846.0 L2142 846.0 L2144 846.0 L2146 846.0 L2148 846.0 L2150 846.0 L2152 846.0 L2154 846.0 L2156 846.0 L2158 846.0 L2160 846.0 L2162 846.0 L2164 846.0 L2166 846.0 L2168 846.0 L2170 846.0 L2172 846.0 L2174 846.0 L2176 846.0 L2178 846.0 L2180 846.0 L2182 846.0 L2184 846.0 L2186 846.0 L2188 846.0 L2190 846.0 L2192 846.0 L2194 846.0 L2196 846.0 L2198 846.0 L2200 846.0 L2202 846.0 L2204 846.0 L2206 846.0 L2208 846.0 L2210 846.0 L2212 846.0 L2214 846.0 L2216 846.0 L2218 846.0 L2220 846.0 L2222 846.0 L2224 846.0 L2226 846.0 L2228 846.0 L2230 846.0 L2232 846.0 L2234 846.0 L2236 846.0 L2238 846.0 L2240 846.0 L2242 846.0 L2244 846.0 L2246 846.0 L2248 846.0 L2250 846.0 L2252 846.0 L2254 846.0 L2256 846.0 L2258 846.0 L2260 846.0 L2262 846.0 L2264 846.0 L2266 846.0 L2268 846.0 L2270 846.0 L2272 846.0 L2274 846.0 L2276 846.0 L2278 846.0 L2280 846.0 L2282 846.0 L2284 846.0 L2286 846.0 L2288 846.0 L2290 846.0 L2292 846.0 L2294 846.0 L2296 846.0 L2298 846.0 L2300 846.0 L2302 846.0 L2304 846.0 L2306 846.0 L2308 846.0 L2310 846.0 L2312 846.0 L2314 846.0 L2316 846.0 L2318 846.0 L2320 846.0 L2322 846.0 L2324 846.0 L2326 846.0 L2328 846.0 L2330 846.0 L2332 846.0 L2334 846.0 L2336 846.0 L2338 846.0 L2340 846.0 L2342 846.0 L2344 846.0 L2346 846.0 L2348 846.0 L2350 846.0 L2352 846.0 L2354 846.0 L2356 846.0 L2358 846.0 L2360 846.0 L2362 846.0 L2364 846.0 L2366 846.0 L2368 846.0 L2370 846.0 L2372 846.0 L2374 846.0 L2376 846.0 L2378 846.0 L2380 846.0 L2382 846.0 L2384 846.0 L2386 846.0 L2388 846.0 L2390 846.0 L2392 846.0 L2394 846.0 L2396 846.0 L2398 846.0 L2400 846.0 L2402 846.0 L2404 846.0 L2406 846.0 L2408 846.0 L2410 846.0 L2412 846.0 L2414 846.0 L2416 846.0 L2418 846.0 L2420 846.0 L2422 846.0 L2424 846.0 L2426 846.0 L2428 846.0 L2430 846.0 L2432 846.0 L2434 846.0 L2436 846.0 L2438 846.0 L2440 846.0 L2442 846.0 L2444 846.0 L2446 846.0 L2448 846.0 L2450 846.0 L2452 846.0 L2454 846.0 L2456 846.0 L2458 846.0 L2460 846.0 L2462 846.0 L2464 846.0 L2466 846.0 L2468 846.0 L2470 846.0 L2472 846.0 L2474 846.0 L2476 846.0 L2478 846.0 L2480 846.0 L2482 846.0 L2484 846.0 L2486 846.0 L2488 846.0 L2490 846.0 L2492 846.0 L2494 846.0 L2496 846.0 L2498 846.0 L2500 846.0 L2502 846.0 L2504 846.0 L2506 846.0 L2508 846.0 L2510 846.0 L2512 846.0 L2514 846.0 L2516 846.0 L2518 846.0 L2520 846.0 L2522 846.0 L2524 846.0 L2526 846.0 L2528 846.0 L2530 846.0 L2532 846.0 L2534 846.0 L2536 846.0 L2538 846.0 L2540 846.0 L2542 846.0 L2544 846.0 L2546 846.0 L2547 846 Z" fill="rgba(129,61,156,0.6)" stroke="#613583" stroke-width="2"/><path d="M654 846 H2547" stroke="#613583" stroke-width="2.6"/><path d="M2547 846 H2690" stroke="#777" stroke-width="2" stroke-dasharray="2 5"/></svg><div class="t" style="left:498px;top:540.67px;font-size:20px;color:#8a8a8a;font-weight:normal;font-family:'Liberation Mono', monospace;">Reads</div><div class="t" style="left:498px;top:574.67px;font-size:20px;color:#8a8a8a;font-weight:normal;font-family:'Liberation Mono', monospace;">Writes</div><div class="t" style="left:498px;top:610.67px;font-size:20px;color:#8a8a8a;font-weight:normal;font-family:'Liberation Mono', monospace;">Reads</div><div class="t" style="left:498px;top:644.67px;font-size:20px;color:#8a8a8a;font-weight:normal;font-family:'Liberation Mono', monospace;">Writes</div><div class="a" style="left:494px;top:885px;width:2196px;height:70px;background:linear-gradient(180deg,#e6e3e0 0px,#eeedeb 8px,#efeeec 100%)"></div><div class="a" style="left:494px;top:891px;width:2196px;height:4px;background:#3584e4"></div><div class="a" style="left:494px;top:947px;width:2196px;height:4px;background:#3584e4"></div><svg class="a" style="left:0;top:0" width="2690" height="1791"><path d="M496 939h8v8h-8zM506 939h8v8h-8zM516 939h8v8h-8zM526 939h8v8h-8zM536 939h8v8h-8zM546 939h8v8h-8zM556 939h8v8h-8zM566 939h8v8h-8zM576 939h8v8h-8zM586 939h8v8h-8zM596 939h8v8h-8zM606 939h8v8h-8zM616 939h8v8h-8zM626 939h8v8h-8zM636 939h8v8h-8zM646 939h8v8h-8zM656 939h8v8h-8zM666 939h8v8h-8zM676 939h8v8h-8zM686 939h8v8h-8zM696 939h8v8h-8zM706 939h8v8h-8zM716 939h8v8h-8zM726 939h8v8h-8zM736 939h8v8h-8zM746 939h8v8h-8zM756 939h8v8h-8zM766 939h8v8h-8zM776 939h8v8h-8zM786 939h8v8h-8zM796 939h8v8h-8zM806 939h8v8h-8zM816 939h8v8h-8zM826 939h8v8h-8zM836 939h8v8h-8zM846 939h8v8h-8zM856 939h8v8h-8zM866 939h8v8h-8zM876 939h8v8h-8zM886 939h8v8h-8zM896 939h8v8h-8zM906 939h8v8h-8zM916 939h8v8h-8zM926 939h8v8h-8zM936 939h8v8h-8zM946 939h8v8h-8zM956 939h8v8h-8zM966 939h8v8h-8zM966 929h8v8h-8zM976 939h8v8h-8zM986 939h8v8h-8zM996 939h8v8h-8zM1006 939h8v8h-8zM1016 939h8v8h-8zM1026 939h8v8h-8zM1036 939h8v8h-8zM1046 939h8v8h-8zM1056 939h8v8h-8zM1066 939h8v8h-8zM1076 939h8v8h-8zM1086 939h8v8h-8zM1096 939h8v8h-8zM1106 939h8v8h-8zM1116 939h8v8h-8zM1126 939h8v8h-8zM1136 939h8v8h-8zM1146 939h8v8h-8zM1156 939h8v8h-8zM1156 929h8v8h-8zM1166 939h8v8h-8zM1166 929h8v8h-8zM1176 939h8v8h-8zM1176 929h8v8h-8zM1186 939h8v8h-8zM1186 929h8v8h-8zM1196 939h8v8h-8zM1206 939h8v8h-8zM1216 939h8v8h-8zM1226 939h8v8h-8zM1236 939h8v8h-8zM1246 939h8v8h-8zM1256 939h8v8h-8zM1266 939h8v8h-8zM1276 939h8v8h-8zM1286 939h8v8h-8zM1296 939h8v8h-8zM1306 939h8v8h-8zM1316 939h8v8h-8zM1326 939h8v8h-8zM1336 939h8v8h-8zM1346 939h8v8h-8zM1356 939h8v8h-8zM1366 939h8v8h-8zM1376 939h8v8h-8zM1376 929h8v8h-8zM1386 939h8v8h-8zM1396 939h8v8h-8zM1406 939h8v8h-8zM1416 939h8v8h-8zM1416 929h8v8h-8zM1426 939h8v8h-8zM1426 929h8v8h-8zM1436 939h8v8h-8zM1446 939h8v8h-8zM1456 939h8v8h-8zM1466 939h8v8h-8zM1476 939h8v8h-8zM1486 939h8v8h-8zM1496 939h8v8h-8zM1506 939h8v8h-8zM1516 939h8v8h-8zM1526 939h8v8h-8zM1536 939h8v8h-8zM1546 939h8v8h-8zM1556 939h8v8h-8zM1566 939h8v8h-8zM1576 939h8v8h-8zM1586 939h8v8h-8zM1596 939h8v8h-8zM1606 939h8v8h-8zM1616 939h8v8h-8zM1626 939h8v8h-8zM1636 939h8v8h-8zM1646 939h8v8h-8zM1656 939h8v8h-8zM1666 939h8v8h-8zM1676 939h8v8h-8zM1686 939h8v8h-8zM1696 939h8v8h-8zM1706 939h8v8h-8zM1716 939h8v8h-8zM1726 939h8v8h-8zM1726 929h8v8h-8zM1736 939h8v8h-8zM1736 929h8v8h-8zM1746 939h8v8h-8zM1746 929h8v8h-8zM1746 919h8v8h-8zM1756 939h8v8h-8zM1756 929h8v8h-8zM1766 939h8v8h-8zM1766 929h8v8h-8zM1766 919h8v8h-8zM1776 939h8v8h-8zM1776 929h8v8h-8zM1786 939h8v8h-8zM1786 929h8v8h-8zM1786 919h8v8h-8zM1796 939h8v8h-8zM1796 929h8v8h-8zM1806 939h8v8h-8zM1806 929h8v8h-8zM1806 919h8v8h-8zM1806 909h8v8h-8zM1816 939h8v8h-8zM1816 929h8v8h-8zM1816 919h8v8h-8zM1816 909h8v8h-8zM1826 939h8v8h-8zM1826 929h8v8h-8zM1826 919h8v8h-8zM1836 939h8v8h-8zM1836 929h8v8h-8zM1836 919h8v8h-8zM1836 909h8v8h-8zM1836 899h8v8h-8zM1846 939h8v8h-8zM1846 929h8v8h-8zM1846 919h8v8h-8zM1856 939h8v8h-8zM1856 929h8v8h-8zM1866 939h8v8h-8zM1866 929h8v8h-8zM1876 939h8v8h-8zM1876 929h8v8h-8zM1876 919h8v8h-8zM1886 939h8v8h-8zM1886 929h8v8h-8zM1886 919h8v8h-8zM1886 909h8v8h-8zM1896 939h8v8h-8zM1896 929h8v8h-8zM1906 939h8v8h-8zM1906 929h8v8h-8zM1916 939h8v8h-8zM1916 929h8v8h-8zM1926 939h8v8h-8zM1926 929h8v8h-8zM1936 939h8v8h-8zM1946 939h8v8h-8zM1956 939h8v8h-8zM1966 939h8v8h-8zM1976 939h8v8h-8zM1986 939h8v8h-8zM1996 939h8v8h-8zM2006 939h8v8h-8zM2016 939h8v8h-8zM2026 939h8v8h-8zM2036 939h8v8h-8zM2046 939h8v8h-8zM2046 929h8v8h-8zM2046 919h8v8h-8zM2056 939h8v8h-8zM2066 939h8v8h-8zM2076 939h8v8h-8zM2086 939h8v8h-8zM2096 939h8v8h-8zM2106 939h8v8h-8zM2116 939h8v8h-8zM2126 939h8v8h-8zM2136 939h8v8h-8zM2146 939h8v8h-8zM2146 929h8v8h-8zM2146 919h8v8h-8zM2156 939h8v8h-8zM2156 929h8v8h-8zM2156 919h8v8h-8zM2166 939h8v8h-8zM2166 929h8v8h-8zM2196 939h8v8h-8z" fill="#6a8ab3"/></svg><div class="a" style="left:8px;top:957px;width:2682px;height:826px;background:#ffffff"></div><div class="a" style="left:908px;top:957px;width:2px;height:826px;background:#d6d1cc"></div><div class="t" style="left:21px;top:968.14px;font-size:27px;color:#919494;font-weight:bold;font-family:'Liberation Sans', sans-serif;">Functions</div><div class="a" style="left:630px;top:957px;width:2px;height:48px;background:#efefef"></div><div class="a" style="left:768px;top:957px;width:2px;height:48px;background:#efefef"></div><div class="t" style="left:645px;top:968.14px;font-size:27px;color:#919494;font-weight:bold;font-family:'Liberation Sans', sans-serif;">Self</div><div class="t" style="left:782px;top:968.14px;font-size:27px;color:#919494;font-weight:bold;font-family:'Liberation Sans', sans-serif;">Total</div><svg class="a" style="left:870px;top:975px" width="20" height="10" viewBox="0 0 20 10"><path d="M0 10 L10 0 L20 10 Z" fill="#919494"/></svg><div class="a" style="left:8px;top:1005px;width:900px;height:2px;background:#efefef"></div><div class="a" style="left:8px;top:1007px;width:900px;height:50px;background:#3584e4"></div><div class="t" style="left:17px;top:1018.95px;font-size:29px;color:#ffffff;font-weight:normal;font-family:'Liberation Sans', sans-serif;letter-spacing:0.5px">[Everything]</div><div class="a" style="left:636px;top:1009px;width:130px;height:46px;background:#74a8ea"></div><div class="t" style="left:636px;top:1009px;width:128px;height:46px;line-height:46px;text-align:right;font-size:29px;color:#ffffff;padding-top:1px;letter-spacing:0.5px">0.00%</div><div class="a" style="left:774px;top:1009px;width:130px;height:46px;background:#ffffff"></div><div class="t" style="left:774px;top:1009px;width:128px;height:46px;line-height:46px;text-align:right;font-size:29px;color:#3584e4;padding-top:1px;letter-spacing:0.5px">100.00%</div><div class="t" style="left:17px;top:1068.95px;font-size:29px;color:#000;font-weight:normal;font-family:'Liberation Sans', sans-serif;letter-spacing:0.5px">- - kernel - -</div><div class="a" style="left:636px;top:1059px;width:130px;height:46px;background:#e8e9e8"></div><div class="a" style="left:636px;top:1059px;width:51px;height:46px;background:#3584e4"></div><div class="t" style="left:636px;top:1059px;width:128px;height:46px;line-height:46px;text-align:right;font-size:29px;color:#000;padding-top:1px;letter-spacing:0.5px">40.64%</div><div class="a" style="left:636px;top:1059px;width:51px;height:46px;overflow:hidden"><div class="t" style="left:0;top:0;width:128px;height:46px;line-height:46px;text-align:right;font-size:29px;color:#fff;padding-top:1px;letter-spacing:0.5px">40.64%</div></div><div class="a" style="left:774px;top:1059px;width:130px;height:46px;background:#e8e9e8"></div><div class="a" style="left:774px;top:1059px;width:103px;height:46px;background:#3584e4"></div><div class="t" style="left:774px;top:1059px;width:128px;height:46px;line-height:46px;text-align:right;font-size:29px;color:#000;padding-top:1px;letter-spacing:0.5px">80.83%</div><div class="a" style="left:774px;top:1059px;width:103px;height:46px;overflow:hidden"><div class="t" style="left:0;top:0;width:128px;height:46px;line-height:46px;text-align:right;font-size:29px;color:#fff;padding-top:1px;letter-spacing:0.5px">80.83%</div></div><div class="t" style="left:17px;top:1118.95px;font-size:29px;color:#000;font-weight:normal;font-family:'Liberation Sans', sans-serif;letter-spacing:0.5px">[worker]</div><div class="a" style="left:636px;top:1109px;width:130px;height:46px;background:#e8e9e8"></div><div class="t" style="left:636px;top:1109px;width:128px;height:46px;line-height:46px;text-align:right;font-size:29px;color:#000;padding-top:1px;letter-spacing:0.5px">0.00%</div><div class="a" style="left:774px;top:1109px;width:130px;height:46px;background:#e8e9e8"></div><div class="a" style="left:774px;top:1109px;width:79px;height:46px;background:#3584e4"></div><div class="t" style="left:774px;top:1109px;width:128px;height:46px;line-height:46px;text-align:right;font-size:29px;color:#000;padding-top:1px;letter-spacing:0.5px">62.15%</div><div class="a" style="left:774px;top:1109px;width:79px;height:46px;overflow:hidden"><div class="t" style="left:0;top:0;width:128px;height:46px;line-height:46px;text-align:right;font-size:29px;color:#fff;padding-top:1px;letter-spacing:0.5px">62.15%</div></div><div class="t" style="left:17px;top:1168.95px;font-size:29px;color:#000;font-weight:normal;font-family:'Liberation Sans', sans-serif;letter-spacing:0.5px">entry_SYSCALL_64_after_hwframe</div><div class="a" style="left:636px;top:1159px;width:130px;height:46px;background:#e8e9e8"></div><div class="t" style="left:636px;top:1159px;width:128px;height:46px;line-height:46px;text-align:right;font-size:29px;color:#000;padding-top:1px;letter-spacing:0.5px">0.01%</div><div class="a" style="left:774px;top:1159px;width:130px;height:46px;background:#e8e9e8"></div><div class="a" style="left:774px;top:1159px;width:24px;height:46px;background:#3584e4"></div><div class="t" style="left:774px;top:1159px;width:128px;height:46px;line-height:46px;text-align:right;font-size:29px;color:#000;padding-top:1px;letter-spacing:0.5px">20.23%</div><div class="a" style="left:774px;top:1159px;width:24px;height:46px;overflow:hidden"><div class="t" style="left:0;top:0;width:128px;height:46px;line-height:46px;text-align:right;font-size:29px;color:#fff;padding-top:1px;letter-spacing:0.5px">20.23%</div></div><div class="t" style="left:17px;top:1218.95px;font-size:29px;color:#000;font-weight:normal;font-family:'Liberation Sans', sans-serif;letter-spacing:0.5px">do_syscall_64</div><div class="a" style="left:636px;top:1209px;width:130px;height:46px;background:#e8e9e8"></div><div class="t" style="left:636px;top:1209px;width:128px;height:46px;line-height:46px;text-align:right;font-size:29px;color:#000;padding-top:1px;letter-spacing:0.5px">0.37%</div><div class="a" style="left:774px;top:1209px;width:130px;height:46px;background:#e8e9e8"></div><div class="a" style="left:774px;top:1209px;width:24px;height:46px;background:#3584e4"></div><div class="t" style="left:774px;top:1209px;width:128px;height:46px;line-height:46px;text-align:right;font-size:29px;color:#000;padding-top:1px;letter-spacing:0.5px">20.22%</div><div class="a" style="left:774px;top:1209px;width:24px;height:46px;overflow:hidden"><div class="t" style="left:0;top:0;width:128px;height:46px;line-height:46px;text-align:right;font-size:29px;color:#fff;padding-top:1px;letter-spacing:0.5px">20.22%</div></div><div class="t" style="left:17px;top:1268.95px;font-size:29px;color:#000;font-weight:normal;font-family:'Liberation Sans', sans-serif;letter-spacing:0.5px">do_idle</div><div class="a" style="left:636px;top:1259px;width:130px;height:46px;background:#e8e9e8"></div><div class="t" style="left:636px;top:1259px;width:128px;height:46px;line-height:46px;text-align:right;font-size:29px;color:#000;padding-top:1px;letter-spacing:0.5px">0.10%</div><div class="a" style="left:774px;top:1259px;width:130px;height:46px;background:#e8e9e8"></div><div class="a" style="left:774px;top:1259px;width:16px;height:46px;background:#3584e4"></div><div class="t" style="left:774px;top:1259px;width:128px;height:46px;line-height:46px;text-align:right;font-size:29px;color:#000;padding-top:1px;letter-spacing:0.5px">13.82%</div><div class="a" style="left:774px;top:1259px;width:16px;height:46px;overflow:hidden"><div class="t" style="left:0;top:0;width:128px;height:46px;line-height:46px;text-align:right;font-size:29px;color:#fff;padding-top:1px;letter-spacing:0.5px">13.82%</div></div><div class="t" style="left:17px;top:1318.95px;font-size:29px;color:#000;font-weight:normal;font-family:'Liberation Sans', sans-serif;letter-spacing:0.5px">cpu_startup_entry</div><div class="a" style="left:636px;top:1309px;width:130px;height:46px;background:#e8e9e8"></div><div class="t" style="left:636px;top:1309px;width:128px;height:46px;line-height:46px;text-align:right;font-size:29px;color:#000;padding-top:1px;letter-spacing:0.5px">0.00%</div><div class="a" style="left:774px;top:1309px;width:130px;height:46px;background:#e8e9e8"></div><div class="a" style="left:774px;top:1309px;width:16px;height:46px;background:#3584e4"></div><div class="t" style="left:774px;top:1309px;width:128px;height:46px;line-height:46px;text-align:right;font-size:29px;color:#000;padding-top:1px;letter-spacing:0.5px">13.81%</div><div class="a" style="left:774px;top:1309px;width:16px;height:46px;overflow:hidden"><div class="t" style="left:0;top:0;width:128px;height:46px;line-height:46px;text-align:right;font-size:29px;color:#fff;padding-top:1px;letter-spacing:0.5px">13.81%</div></div><div class="t" style="left:17px;top:1368.95px;font-size:29px;color:#000;font-weight:normal;font-family:'Liberation Sans', sans-serif;letter-spacing:0.5px">do_cpu_idle</div><div class="a" style="left:636px;top:1359px;width:130px;height:46px;background:#e8e9e8"></div><div class="t" style="left:636px;top:1359px;width:128px;height:46px;line-height:46px;text-align:right;font-size:29px;color:#000;padding-top:1px;letter-spacing:0.5px">0.00%</div><div class="a" style="left:774px;top:1359px;width:130px;height:46px;background:#e8e9e8"></div><div class="a" style="left:774px;top:1359px;width:16px;height:46px;background:#3584e4"></div><div class="t" style="left:774px;top:1359px;width:128px;height:46px;line-height:46px;text-align:right;font-size:29px;color:#000;padding-top:1px;letter-spacing:0.5px">13.81%</div><div class="a" style="left:774px;top:1359px;width:16px;height:46px;overflow:hidden"><div class="t" style="left:0;top:0;width:128px;height:46px;line-height:46px;text-align:right;font-size:29px;color:#fff;padding-top:1px;letter-spacing:0.5px">13.81%</div></div><div class="a" style="left:8px;top:1367px;width:900px;height:2px;background:#d6d1cc"></div><div class="a" style="left:8px;top:1369px;width:900px;height:50px;background:#ffffff"></div><div class="t" style="left:20px;top:1382.14px;font-size:27px;color:#919494;font-weight:bold;font-family:'Liberation Sans', sans-serif;">Callers</div><div class="a" style="left:734px;top:1369px;width:2px;height:50px;background:#efefef"></div><div class="a" style="left:811px;top:1369px;width:2px;height:50px;background:#efefef"></div><div class="t" style="left:748px;top:1382.14px;font-size:27px;color:#919494;font-weight:bold;font-family:'Liberation Sans', sans-serif;">Self</div><div class="a" style="left:813px;top:1369px;width:95px;height:50px;overflow:hidden"><div class="t" style="left:13px;top:13.14px;font-size:27px;color:#919494;font-weight:bold;font-family:'Liberation Sans', sans-serif;">Total</div><svg class="a" style="left:100px;top:18px" width="20" height="10" viewBox="0 0 20 10"><path d="M0 10 L10 0 L20 10 Z" fill="#919494"/></svg></div><div class="a" style="left:8px;top:1419px;width:900px;height:2px;background:#efefef"></div><div class="t" style="left:924px;top:968.14px;font-size:27px;color:#919494;font-weight:bold;font-family:'Liberation Sans', sans-serif;">Descendants</div><div class="a" style="left:2319px;top:957px;width:2px;height:48px;background:#efefef"></div><div class="a" style="left:2457px;top:957px;width:2px;height:48px;background:#efefef"></div><div class="a" style="left:2595px;top:957px;width:2px;height:48px;background:#efefef"></div><div class="t" style="left:2335px;top:968.14px;font-size:27px;color:#919494;font-weight:bold;font-family:'Liberation Sans', sans-serif;">Self</div><div class="t" style="left:2472px;top:968.14px;font-size:27px;color:#919494;font-weight:bold;font-family:'Liberation Sans', sans-serif;">Total</div><svg class="a" style="left:2558px;top:975px" width="20" height="10" viewBox="0 0 20 10"><path d="M0 10 L10 0 L20 10 Z" fill="#919494"/></svg><div class="t" style="left:2611px;top:968.14px;font-size:27px;color:#919494;font-weight:bold;font-family:'Liberation Sans', sans-serif;">Hits</div><div class="a" style="left:910px;top:1005px;width:1780px;height:2px;background:#efefef"></div><svg class="a" style="left:921px;top:1027px" width="20" height="10" viewBox="0 0 20 10"><path d="M0 0 L20 0 L10 10 Z" fill="#4d4d4d"/></svg><div class="t" style="left:956px;top:1018.95px;font-size:29px;color:#000;font-weight:normal;font-family:'Liberation Sans', sans-serif;letter-spacing:0.5px">[Everything]</div><div class="a" style="left:2326px;top:1009px;width:130px;height:46px;background:#e8e9e8"></div><div class="t" style="left:2326px;top:1009px;width:128px;height:46px;line-height:46px;text-align:right;font-size:29px;color:#000;padding-top:1px;letter-spacing:0.5px">0.00%</div><div class="a" style="left:2464px;top:1009px;width:130px;height:46px;background:#e8e9e8"></div><div class="a" style="left:2464px;top:1009px;width:128px;height:46px;background:#3584e4"></div><div class="t" style="left:2464px;top:1009px;width:128px;height:46px;line-height:46px;text-align:right;font-size:29px;color:#000;padding-top:1px;letter-spacing:0.5px">100.00%</div><div class="a" style="left:2464px;top:1009px;width:128px;height:46px;overflow:hidden"><div class="t" style="left:0;top:0;width:128px;height:46px;line-height:46px;text-align:right;font-size:29px;color:#fff;padding-top:1px;letter-spacing:0.5px">100.00%</div></div><div class="t" style="left:2600px;top:1009px;width:89px;height:46px;line-height:46px;text-align:right;font-size:29px;color:#000;padding-top:1px;letter-spacing:0.5px">35987</div><svg class="a" style="left:962px;top:1072px" width="11" height="20" viewBox="0 0 11 20"><path d="M0 0 L11 10 L0 20 Z" fill="#4d4d4d"/></svg><div class="t" style="left:992px;top:1068.95px;font-size:29px;color:#000;font-weight:normal;font-family:'Liberation Sans', sans-serif;letter-spacing:0.5px">[worker]</div><div class="a" style="left:2326px;top:1059px;width:130px;height:46px;background:#e8e9e8"></div><div class="t" style="left:2326px;top:1059px;width:128px;height:46px;line-height:46px;text-align:right;font-size:29px;color:#000;padding-top:1px;letter-spacing:0.5px">0.00%</div><div class="a" style="left:2464px;top:1059px;width:130px;height:46px;background:#e8e9e8"></div><div class="a" style="left:2464px;top:1059px;width:79px;height:46px;background:#3584e4"></div><div class="t" style="left:2464px;top:1059px;width:128px;height:46px;line-height:46px;text-align:right;font-size:29px;color:#000;padding-top:1px;letter-spacing:0.5px">62.15%</div><div class="a" style="left:2464px;top:1059px;width:79px;height:46px;overflow:hidden"><div class="t" style="left:0;top:0;width:128px;height:46px;line-height:46px;text-align:right;font-size:29px;color:#fff;padding-top:1px;letter-spacing:0.5px">62.15%</div></div><div class="t" style="left:2600px;top:1059px;width:89px;height:46px;line-height:46px;text-align:right;font-size:29px;color:#000;padding-top:1px;letter-spacing:0.5px">22367</div><svg class="a" style="left:962px;top:1122px" width="11" height="20" viewBox="0 0 11 20"><path d="M0 0 L11 10 L0 20 Z" fill="#4d4d4d"/></svg><div class="t" style="left:992px;top:1118.95px;font-size:29px;color:#000;font-weight:normal;font-family:'Liberation Sans', sans-serif;letter-spacing:0.5px">- - kernel - -</div><div class="a" style="left:2326px;top:1109px;width:130px;height:46px;background:#e8e9e8"></div><div class="t" style="left:2326px;top:1109px;width:128px;height:46px;line-height:46px;text-align:right;font-size:29px;color:#000;padding-top:1px;letter-spacing:0.5px">0.00%</div><div class="a" style="left:2464px;top:1109px;width:130px;height:46px;background:#e8e9e8"></div><div class="a" style="left:2464px;top:1109px;width:16px;height:46px;background:#3584e4"></div><div class="t" style="left:2464px;top:1109px;width:128px;height:46px;line-height:46px;text-align:right;font-size:29px;color:#000;padding-top:1px;letter-spacing:0.5px">14.00%</div><div class="a" style="left:2464px;top:1109px;width:16px;height:46px;overflow:hidden"><div class="t" style="left:0;top:0;width:128px;height:46px;line-height:46px;text-align:right;font-size:29px;color:#fff;padding-top:1px;letter-spacing:0.5px">14.00%</div></div><div class="t" style="left:2600px;top:1109px;width:89px;height:46px;line-height:46px;text-align:right;font-size:29px;color:#000;padding-top:1px;letter-spacing:0.5px">5037</div><svg class="a" style="left:962px;top:1172px" width="11" height="20" viewBox="0 0 11 20"><path d="M0 0 L11 10 L0 20 Z" fill="#4d4d4d"/></svg><div class="t" style="left:992px;top:1168.95px;font-size:29px;color:#000;font-weight:normal;font-family:'Liberation Sans', sans-serif;letter-spacing:0.5px">[/usr/bin/gnome-boxes --gapplication-service]</div><div class="a" style="left:2326px;top:1159px;width:130px;height:46px;background:#e8e9e8"></div><div class="t" style="left:2326px;top:1159px;width:128px;height:46px;line-height:46px;text-align:right;font-size:29px;color:#000;padding-top:1px;letter-spacing:0.5px">0.00%</div><div class="a" style="left:2464px;top:1159px;width:130px;height:46px;background:#e8e9e8"></div><div class="a" style="left:2464px;top:1159px;width:9px;height:46px;background:#3584e4"></div><div class="t" style="left:2464px;top:1159px;width:128px;height:46px;line-height:46px;text-align:right;font-size:29px;color:#000;padding-top:1px;letter-spacing:0.5px">8.18%</div><div class="a" style="left:2464px;top:1159px;width:9px;height:46px;overflow:hidden"><div class="t" style="left:0;top:0;width:128px;height:46px;line-height:46px;text-align:right;font-size:29px;color:#fff;padding-top:1px;letter-spacing:0.5px">8.18%</div></div><div class="t" style="left:2600px;top:1159px;width:89px;height:46px;line-height:46px;text-align:right;font-size:29px;color:#000;padding-top:1px;letter-spacing:0.5px">2944</div><svg class="a" style="left:962px;top:1222px" width="11" height="20" viewBox="0 0 11 20"><path d="M0 0 L11 10 L0 20 Z" fill="#4d4d4d"/></svg><div class="t" style="left:992px;top:1218.95px;font-size:29px;color:#000;font-weight:normal;font-family:'Liberation Sans', sans-serif;letter-spacing:0.5px">[pool-gnome-shel]</div><div class="a" style="left:2326px;top:1209px;width:130px;height:46px;background:#e8e9e8"></div><div class="t" style="left:2326px;top:1209px;width:128px;height:46px;line-height:46px;text-align:right;font-size:29px;color:#000;padding-top:1px;letter-spacing:0.5px">0.00%</div><div class="a" style="left:2464px;top:1209px;width:130px;height:46px;background:#e8e9e8"></div><div class="a" style="left:2464px;top:1209px;width:5px;height:46px;background:#3584e4"></div><div class="t" style="left:2464px;top:1209px;width:128px;height:46px;line-height:46px;text-align:right;font-size:29px;color:#000;padding-top:1px;letter-spacing:0.5px">5.30%</div><div class="a" style="left:2464px;top:1209px;width:5px;height:46px;overflow:hidden"><div class="t" style="left:0;top:0;width:128px;height:46px;line-height:46px;text-align:right;font-size:29px;color:#fff;padding-top:1px;letter-spacing:0.5px">5.30%</div></div><div class="t" style="left:2600px;top:1209px;width:89px;height:46px;line-height:46px;text-align:right;font-size:29px;color:#000;padding-top:1px;letter-spacing:0.5px">1908</div><svg class="a" style="left:962px;top:1272px" width="11" height="20" viewBox="0 0 11 20"><path d="M0 0 L11 10 L0 20 Z" fill="#4d4d4d"/></svg><div class="t" style="left:992px;top:1268.95px;font-size:29px;color:#000;font-weight:normal;font-family:'Liberation Sans', sans-serif;letter-spacing:0.5px">[sysprof]</div><div class="a" style="left:2326px;top:1259px;width:130px;height:46px;background:#e8e9e8"></div><div class="t" style="left:2326px;top:1259px;width:128px;height:46px;line-height:46px;text-align:right;font-size:29px;color:#000;padding-top:1px;letter-spacing:0.5px">0.00%</div><div class="a" style="left:2464px;top:1259px;width:130px;height:46px;background:#e8e9e8"></div><div class="a" style="left:2464px;top:1259px;width:3px;height:46px;background:#3584e4"></div><div class="t" style="left:2464px;top:1259px;width:128px;height:46px;line-height:46px;text-align:right;font-size:29px;color:#000;padding-top:1px;letter-spacing:0.5px">3.72%</div><div class="a" style="left:2464px;top:1259px;width:3px;height:46px;overflow:hidden"><div class="t" style="left:0;top:0;width:128px;height:46px;line-height:46px;text-align:right;font-size:29px;color:#fff;padding-top:1px;letter-spacing:0.5px">3.72%</div></div><div class="t" style="left:2600px;top:1259px;width:89px;height:46px;line-height:46px;text-align:right;font-size:29px;color:#000;padding-top:1px;letter-spacing:0.5px">1340</div><svg class="a" style="left:962px;top:1322px" width="11" height="20" viewBox="0 0 11 20"><path d="M0 0 L11 10 L0 20 Z" fill="#4d4d4d"/></svg><div class="t" style="left:992px;top:1318.95px;font-size:29px;color:#000;font-weight:normal;font-family:'Liberation Sans', sans-serif;letter-spacing:0.5px">[DFGWorker]</div><div class="a" style="left:2326px;top:1309px;width:130px;height:46px;background:#e8e9e8"></div><div class="t" style="left:2326px;top:1309px;width:128px;height:46px;line-height:46px;text-align:right;font-size:29px;color:#000;padding-top:1px;letter-spacing:0.5px">0.00%</div><div class="a" style="left:2464px;top:1309px;width:130px;height:46px;background:#e8e9e8"></div><div class="t" style="left:2464px;top:1309px;width:128px;height:46px;line-height:46px;text-align:right;font-size:29px;color:#000;padding-top:1px;letter-spacing:0.5px">0.84%</div><div class="t" style="left:2600px;top:1309px;width:89px;height:46px;line-height:46px;text-align:right;font-size:29px;color:#000;padding-top:1px;letter-spacing:0.5px">303</div><svg class="a" style="left:962px;top:1372px" width="11" height="20" viewBox="0 0 11 20"><path d="M0 0 L11 10 L0 20 Z" fill="#4d4d4d"/></svg><div class="t" style="left:992px;top:1368.95px;font-size:29px;color:#000;font-weight:normal;font-family:'Liberation Sans', sans-serif;letter-spacing:0.5px">[kworker/u17:5-kcryptd/253:0]</div><div class="a" style="left:2326px;top:1359px;width:130px;height:46px;background:#e8e9e8"></div><div class="t" style="left:2326px;top:1359px;width:128px;height:46px;line-height:46px;text-align:right;font-size:29px;color:#000;padding-top:1px;letter-spacing:0.5px">0.00%</div><div class="a" style="left:2464px;top:1359px;width:130px;height:46px;background:#e8e9e8"></div><div class="t" style="left:2464px;top:1359px;width:128px;height:46px;line-height:46px;text-align:right;font-size:29px;color:#000;padding-top:1px;letter-spacing:0.5px">0.52%</div><div class="t" style="left:2600px;top:1359px;width:89px;height:46px;line-height:46px;text-align:right;font-size:29px;color:#000;padding-top:1px;letter-spacing:0.5px">187</div><svg class="a" style="left:962px;top:1422px" width="11" height="20" viewBox="0 0 11 20"><path d="M0 0 L11 10 L0 20 Z" fill="#4d4d4d"/></svg><div class="t" style="left:992px;top:1418.95px;font-size:29px;color:#000;font-weight:normal;font-family:'Liberation Sans', sans-serif;letter-spacing:0.5px">[kworker/u17:8-kcryptd/253:0]</div><div class="a" style="left:2326px;top:1409px;width:130px;height:46px;background:#e8e9e8"></div><div class="t" style="left:2326px;top:1409px;width:128px;height:46px;line-height:46px;text-align:right;font-size:29px;color:#000;padding-top:1px;letter-spacing:0.5px">0.00%</div><div class="a" style="left:2464px;top:1409px;width:130px;height:46px;background:#e8e9e8"></div><div class="t" style="left:2464px;top:1409px;width:128px;height:46px;line-height:46px;text-align:right;font-size:29px;color:#000;padding-top:1px;letter-spacing:0.5px">0.46%</div><div class="t" style="left:2600px;top:1409px;width:89px;height:46px;line-height:46px;text-align:right;font-size:29px;color:#000;padding-top:1px;letter-spacing:0.5px">167</div><svg class="a" style="left:962px;top:1472px" width="11" height="20" viewBox="0 0 11 20"><path d="M0 0 L11 10 L0 20 Z" fill="#4d4d4d"/></svg><div class="t" style="left:992px;top:1468.95px;font-size:29px;color:#000;font-weight:normal;font-family:'Liberation Sans', sans-serif;letter-spacing:0.5px">[kworker/u17:6-kcryptd/253:0]</div><div class="a" style="left:2326px;top:1459px;width:130px;height:46px;background:#e8e9e8"></div><div class="t" style="left:2326px;top:1459px;width:128px;height:46px;line-height:46px;text-align:right;font-size:29px;color:#000;padding-top:1px;letter-spacing:0.5px">0.00%</div><div class="a" style="left:2464px;top:1459px;width:130px;height:46px;background:#e8e9e8"></div><div class="t" style="left:2464px;top:1459px;width:128px;height:46px;line-height:46px;text-align:right;font-size:29px;color:#000;padding-top:1px;letter-spacing:0.5px">0.46%</div><div class="t" style="left:2600px;top:1459px;width:89px;height:46px;line-height:46px;text-align:right;font-size:29px;color:#000;padding-top:1px;letter-spacing:0.5px">167</div><svg class="a" style="left:962px;top:1522px" width="11" height="20" viewBox="0 0 11 20"><path d="M0 0 L11 10 L0 20 Z" fill="#4d4d4d"/></svg><div class="t" style="left:992px;top:1518.95px;font-size:29px;color:#000;font-weight:normal;font-family:'Liberation Sans', sans-serif;letter-spacing:0.5px">[kworker/u17:7-kcryptd/253:0]</div><div class="a" style="left:2326px;top:1509px;width:130px;height:46px;background:#e8e9e8"></div><div class="t" style="left:2326px;top:1509px;width:128px;height:46px;line-height:46px;text-align:right;font-size:29px;color:#000;padding-top:1px;letter-spacing:0.5px">0.00%</div><div class="a" style="left:2464px;top:1509px;width:130px;height:46px;background:#e8e9e8"></div><div class="t" style="left:2464px;top:1509px;width:128px;height:46px;line-height:46px;text-align:right;font-size:29px;color:#000;padding-top:1px;letter-spacing:0.5px">0.45%</div><div class="t" style="left:2600px;top:1509px;width:89px;height:46px;line-height:46px;text-align:right;font-size:29px;color:#000;padding-top:1px;letter-spacing:0.5px">163</div><svg class="a" style="left:962px;top:1572px" width="11" height="20" viewBox="0 0 11 20"><path d="M0 0 L11 10 L0 20 Z" fill="#4d4d4d"/></svg><div class="t" style="left:992px;top:1568.95px;font-size:29px;color:#000;font-weight:normal;font-family:'Liberation Sans', sans-serif;letter-spacing:0.5px">[kworker/u17:3-kcryptd/253:0]</div><div class="a" style="left:2326px;top:1559px;width:130px;height:46px;background:#e8e9e8"></div><div class="t" style="left:2326px;top:1559px;width:128px;height:46px;line-height:46px;text-align:right;font-size:29px;color:#000;padding-top:1px;letter-spacing:0.5px">0.00%</div><div class="a" style="left:2464px;top:1559px;width:130px;height:46px;background:#e8e9e8"></div><div class="t" style="left:2464px;top:1559px;width:128px;height:46px;line-height:46px;text-align:right;font-size:29px;color:#000;padding-top:1px;letter-spacing:0.5px">0.42%</div><div class="t" style="left:2600px;top:1559px;width:89px;height:46px;line-height:46px;text-align:right;font-size:29px;color:#000;padding-top:1px;letter-spacing:0.5px">150</div><svg class="a" style="left:962px;top:1622px" width="11" height="20" viewBox="0 0 11 20"><path d="M0 0 L11 10 L0 20 Z" fill="#4d4d4d"/></svg><div class="t" style="left:992px;top:1618.95px;font-size:29px;color:#000;font-weight:normal;font-family:'Liberation Sans', sans-serif;letter-spacing:0.5px">[kworker/u17:4-kcryptd/253:0]</div><div class="a" style="left:2326px;top:1609px;width:130px;height:46px;background:#e8e9e8"></div><div class="t" style="left:2326px;top:1609px;width:128px;height:46px;line-height:46px;text-align:right;font-size:29px;color:#000;padding-top:1px;letter-spacing:0.5px">0.00%</div><div class="a" style="left:2464px;top:1609px;width:130px;height:46px;background:#e8e9e8"></div><div class="t" style="left:2464px;top:1609px;width:128px;height:46px;line-height:46px;text-align:right;font-size:29px;color:#000;padding-top:1px;letter-spacing:0.5px">0.41%</div><div class="t" style="left:2600px;top:1609px;width:89px;height:46px;line-height:46px;text-align:right;font-size:29px;color:#000;padding-top:1px;letter-spacing:0.5px">147</div><svg class="a" style="left:962px;top:1672px" width="11" height="20" viewBox="0 0 11 20"><path d="M0 0 L11 10 L0 20 Z" fill="#4d4d4d"/></svg><div class="t" style="left:992px;top:1668.95px;font-size:29px;color:#000;font-weight:normal;font-family:'Liberation Sans', sans-serif;letter-spacing:0.5px">[kworker/u17:0-kcryptd/253:0]</div><div class="a" style="left:2326px;top:1659px;width:130px;height:46px;background:#e8e9e8"></div><div class="t" style="left:2326px;top:1659px;width:128px;height:46px;line-height:46px;text-align:right;font-size:29px;color:#000;padding-top:1px;letter-spacing:0.5px">0.00%</div><div class="a" style="left:2464px;top:1659px;width:130px;height:46px;background:#e8e9e8"></div><div class="t" style="left:2464px;top:1659px;width:128px;height:46px;line-height:46px;text-align:right;font-size:29px;color:#000;padding-top:1px;letter-spacing:0.5px">0.39%</div><div class="t" style="left:2600px;top:1659px;width:89px;height:46px;line-height:46px;text-align:right;font-size:29px;color:#000;padding-top:1px;letter-spacing:0.5px">139</div><svg class="a" style="left:962px;top:1722px" width="11" height="20" viewBox="0 0 11 20"><path d="M0 0 L11 10 L0 20 Z" fill="#4d4d4d"/></svg><div class="t" style="left:992px;top:1718.95px;font-size:29px;color:#000;font-weight:normal;font-family:'Liberation Sans', sans-serif;letter-spacing:0.5px">[irq/139-iwlwifi]</div><div class="a" style="left:2326px;top:1709px;width:130px;height:46px;background:#e8e9e8"></div><div class="t" style="left:2326px;top:1709px;width:128px;height:46px;line-height:46px;text-align:right;font-size:29px;color:#000;padding-top:1px;letter-spacing:0.5px">0.00%</div><div class="a" style="left:2464px;top:1709px;width:130px;height:46px;background:#e8e9e8"></div><div class="t" style="left:2464px;top:1709px;width:128px;height:46px;line-height:46px;text-align:right;font-size:29px;color:#000;padding-top:1px;letter-spacing:0.5px">0.30%</div><div class="t" style="left:2600px;top:1709px;width:89px;height:46px;line-height:46px;text-align:right;font-size:29px;color:#000;padding-top:1px;letter-spacing:0.5px">107</div><svg class="a" style="left:962px;top:1772px" width="11" height="20" viewBox="0 0 11 20"><path d="M0 0 L11 10 L0 20 Z" fill="#4d4d4d"/></svg><div class="t" style="left:992px;top:1768.95px;font-size:29px;color:#000;font-weight:normal;font-family:'Liberation Sans', sans-serif;letter-spacing:0.5px">[kworker/u17:1-kcryptd/253:0]</div><div class="a" style="left:2326px;top:1759px;width:130px;height:46px;background:#e8e9e8"></div><div class="t" style="left:2326px;top:1759px;width:128px;height:46px;line-height:46px;text-align:right;font-size:29px;color:#000;padding-top:1px;letter-spacing:0.5px">0.00%</div><div class="a" style="left:2464px;top:1759px;width:130px;height:46px;background:#e8e9e8"></div><div class="t" style="left:2464px;top:1759px;width:128px;height:46px;line-height:46px;text-align:right;font-size:29px;color:#000;padding-top:1px;letter-spacing:0.5px">0.30%</div><div class="t" style="left:2600px;top:1759px;width:89px;height:46px;line-height:46px;text-align:right;font-size:29px;color:#000;padding-top:1px;letter-spacing:0.5px">107</div><div class="a" style="left:0px;top:1783px;width:2690px;height:8px;background:linear-gradient(90deg,#1c6fd3 0px,#1c6fd3 100px,#1a8bbd 100px,#1a8bbd 340px,#1a95c0 340px,#1a95c0 820px,#1b78c5 820px,#1a6cc2 900px,#1a5fbf 900px,#1a5fbf 1060px,#1a90c0 1060px,#1a90c0 1530px,#1a62c0 1530px,#1a62c0 2020px,#1a70c2 2020px,#1a70c2 2260px,#1b5bbd 2260px,#1b5bbd 2500px,#1a92c2 2500px,#1a92c2 2690px)"></div><div class="a" style="left:7px;top:1783px;width:2683px;height:1px;background:#0f4f8c"></div><div class="a" style="left:0px;top:1784px;width:2690px;height:7px;background:linear-gradient(180deg,rgba(0,20,60,0.35),rgba(0,20,60,0))"></div><div class="a" style="left:479px;top:679px;width:466px;height:289px;border-radius:11px;background:#ffffff;border:1px solid #bdb8b3;box-shadow:0 2px 6px rgba(0,0,0,0.18)"></div><div class="a" style="left:492px;top:699px;width:32px;height:31px;border:2px solid #1c5fb9;border-radius:6px"></div><div class="t" style="left:540px;top:702.45px;font-size:29px;color:#2e3436;font-weight:normal;font-family:'Liberation Sans', sans-serif;letter-spacing:0.4px">Network Bytes (lo)</div><div class="a" style="left:492px;top:753px;width:32px;height:31px;border:2px solid #1c5fb9;border-radius:6px"></div><div class="t" style="left:540px;top:756.45px;font-size:29px;color:#2e3436;font-weight:normal;font-family:'Liberation Sans', sans-serif;letter-spacing:0.4px">Network Bytes (virbr0-nic)</div><div class="a" style="left:480px;top:797px;width:464px;height:54px;background:#3584e4"></div><div class="a" style="left:492px;top:807px;width:32px;height:31px;border:2px solid #ffffff;border-radius:6px"></div><svg class="a" style="left:492px;top:807px" width="32" height="31" viewBox="0 0 32 31"><path d="M7 15 L17 24.5 L33 3" fill="none" stroke="#ffffff" stroke-width="5.6" stroke-linejoin="miter"/></svg><div class="t" style="left:540px;top:810.45px;font-size:29px;color:#ffffff;font-weight:normal;font-family:'Liberation Sans', sans-serif;letter-spacing:0.4px">Network Bytes (wlp2s0)</div><div class="a" style="left:492px;top:861px;width:32px;height:31px;border:2px solid #1c5fb9;border-radius:6px"></div><div class="t" style="left:540px;top:864.45px;font-size:29px;color:#2e3436;font-weight:normal;font-family:'Liberation Sans', sans-serif;letter-spacing:0.4px">Network Bytes (virbr0)</div><div class="a" style="left:492px;top:915px;width:32px;height:31px;border:2px solid #1c5fb9;border-radius:6px"></div><svg class="a" style="left:492px;top:915px" width="32" height="31" viewBox="0 0 32 31"><path d="M7 15 L17 24.5 L33 3" fill="none" stroke="#2e3436" stroke-width="5.6" stroke-linejoin="miter"/></svg><div class="t" style="left:540px;top:918.45px;font-size:29px;color:#2e3436;font-weight:normal;font-family:'Liberation Sans', sans-serif;letter-spacing:0.4px">Network Bytes (tap0)</div></body></html>
